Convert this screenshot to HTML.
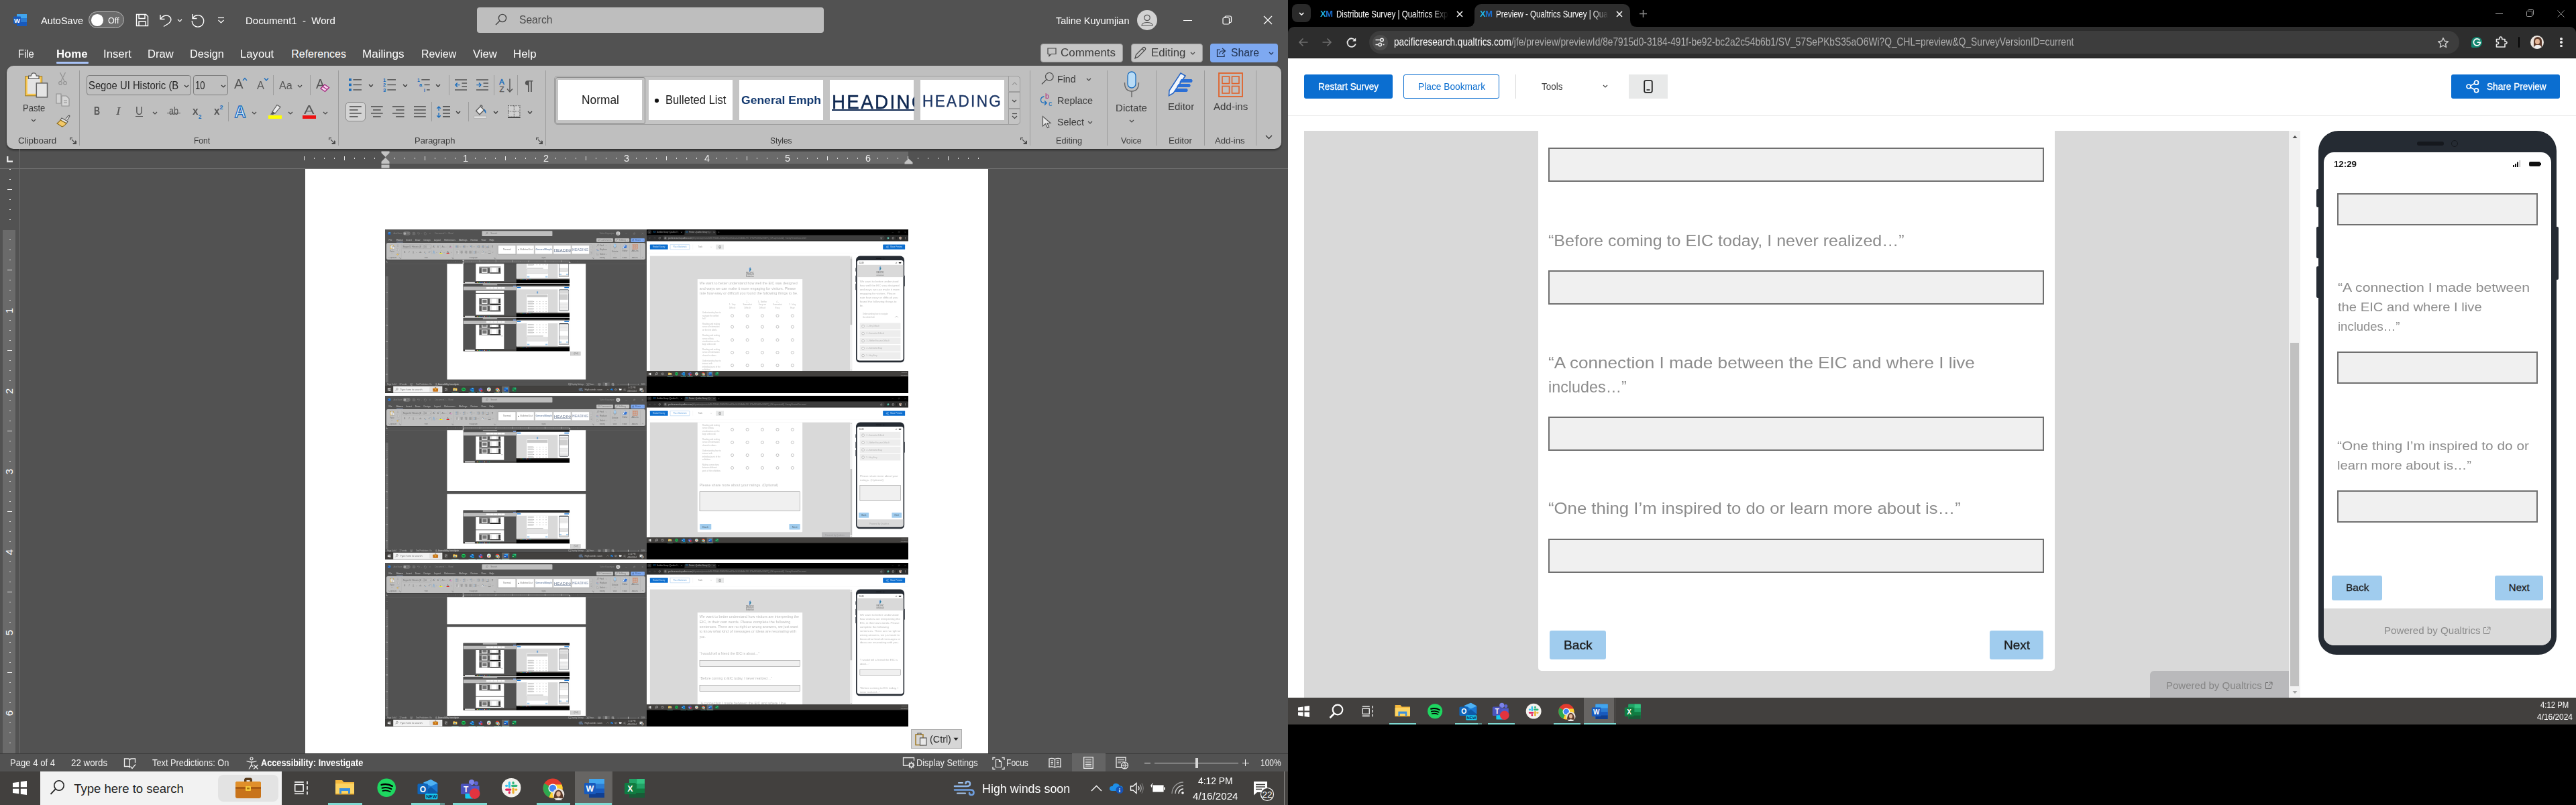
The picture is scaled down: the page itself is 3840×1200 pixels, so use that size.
<!DOCTYPE html>
<html lang="en"><head><meta charset="utf-8"><title>Document1 - Word / Preview - Qualtrics Survey</title>
<style>
html,body{margin:0;padding:0;background:#000;}
body{width:3840px;height:1200px;overflow:hidden;position:relative;font-family:"Liberation Sans",sans-serif;}
.b{position:absolute;display:block;}
.t{position:absolute;white-space:pre;line-height:1;transform-origin:0 50%;}
.win{position:absolute;overflow:hidden;}
svg{overflow:visible;}
.th .t{opacity:.62;}
</style></head>
<body>
<div class="win" style="left:0;top:0;width:1920px;height:1150px;background:#525252;"><svg class="b" style="left:20px;top:20px;" width="20" height="20" viewBox="0 0 20 20"><rect x="5" y="1" width="15" height="18" rx="1.5" fill="#2b7cd3"/><rect x="5" y="1" width="15" height="6" fill="#41a5ee"/><rect x="5" y="13" width="15" height="6" fill="#185abd"/><rect x="0" y="4.5" width="11" height="11" rx="1" fill="#185abd"/><text x="5.5" y="13.6" font-family="Liberation Sans,sans-serif" font-weight="700" font-size="9.5" fill="#fff" text-anchor="middle">W</text></svg><span class="t" style="left:61px;top:23px;font-size:15.5px;color:#fff;transform:scaleX(0.937);">AutoSave</span><div class="b" style="left:132.3px;top:17px;width:53px;height:24.7px;background:#6b6b6b;border:1px solid #b5b5b5;border-radius:13px;box-sizing:border-box;"></div><div class="b" style="left:136px;top:21px;width:17.6px;height:17.6px;background:#fff;border-radius:50%;"></div><span class="t" style="left:160.6px;top:24px;font-size:13.5px;color:#fff;transform:scaleX(0.924);">Off</span><svg class="b" style="left:201px;top:19px;" width="22" height="22" viewBox="0 0 22 22"><path d="M2.5 2.5 H16.5 L19.5 5.5 V19.5 H2.5 Z" fill="none" stroke="#fff" stroke-width="1.4"/><path d="M6 2.5 V8.5 H15 V2.5 M6 19.5 V13 H16 V19.5" fill="none" stroke="#fff" stroke-width="1.4"/></svg><svg class="b" style="left:236px;top:19px;" width="22" height="22" viewBox="0 0 22 22"><path d="M3 3 V9.5 H9.5" fill="none" stroke="#fff" stroke-width="1.4"/><path d="M3.5 9 C7 3.5 14 2.5 17.5 6.5 C20.5 10 18 14.5 14.5 16.5 L8 20.5" fill="none" stroke="#fff" stroke-width="1.4"/></svg><svg class="b" style="left:264.3px;top:28px;" width="8" height="5" viewBox="0 0 8 5"><path d="M1 1 L4 4 L7 1" fill="none" stroke="#fff" stroke-width="1.2"/></svg><svg class="b" style="left:283.5px;top:19px;" width="22" height="22" viewBox="0 0 22 22"><path d="M3 2 V8.5 H9.5" fill="none" stroke="#fff" stroke-width="1.4"/><path d="M3.3 8.3 A 8.7 8.7 0 1 1 2.3 12" fill="none" stroke="#fff" stroke-width="1.4"/></svg><svg class="b" style="left:324px;top:25px;" width="11" height="11" viewBox="0 0 11 11"><path d="M1 1.5 H10" stroke="#fff" stroke-width="1.2"/><path d="M1.5 5 L5.5 9 L9.5 5" fill="none" stroke="#fff" stroke-width="1.2"/></svg><span class="t" style="left:365.6px;top:23px;font-size:15.5px;color:#fff;transform:scaleX(0.967);">Document1  -  Word</span><div class="b" style="left:711px;top:10.5px;width:517px;height:38.5px;background:#bebebe;border-radius:4px;"></div><svg class="b" style="left:737px;top:19px;" width="20" height="20" viewBox="0 0 20 20"><circle cx="12" cy="8" r="5.6" fill="none" stroke="#444" stroke-width="1.4"/><path d="M8 12 L2 18" stroke="#444" stroke-width="1.4"/></svg><span class="t" style="left:773.8px;top:21px;font-size:17px;color:#4a4a4a;transform:scaleX(0.919);">Search</span><span class="t" style="left:1573.9px;top:23px;font-size:15.5px;color:#fff;transform:scaleX(0.934);">Taline Kuyumjian</span><div class="b" style="left:1695px;top:15px;width:30px;height:30px;background:#d2d2d2;border-radius:50%;"></div><svg class="b" style="left:1695px;top:15px;" width="30" height="30" viewBox="0 0 30 30"><circle cx="15" cy="11.5" r="4.2" fill="none" stroke="#555" stroke-width="1.2"/><path d="M7 23 C7 17 23 17 23 23 Z" fill="none" stroke="#555" stroke-width="1.2"/></svg><div class="b" style="left:1764px;top:29.5px;width:13px;height:1.3px;background:#fff;"></div><svg class="b" style="left:1822px;top:23px;" width="15" height="15" viewBox="0 0 15 15"><rect x="1" y="3.5" width="9.5" height="9.5" rx="1.5" fill="none" stroke="#fff" stroke-width="1.2"/><path d="M4 3 V2.5 Q4 1 5.5 1 H11.5 Q13.5 1 13.5 3 V9 Q13.5 10.5 12 10.5 H11" fill="none" stroke="#fff" stroke-width="1.2"/></svg><svg class="b" style="left:1883px;top:23px;" width="14" height="14" viewBox="0 0 14 14"><path d="M1 1 L13 13 M13 1 L1 13" stroke="#fff" stroke-width="1.3"/></svg><span class="t" style="left:27.4px;top:73px;font-size:16px;color:#fff;transform:scaleX(0.923);">File</span><span class="t" style="left:154.3px;top:73px;font-size:16px;color:#fff;transform:scaleX(1.047);">Insert</span><span class="t" style="left:220.4px;top:73px;font-size:16px;color:#fff;transform:scaleX(1.034);">Draw</span><span class="t" style="left:283.2px;top:73px;font-size:16px;color:#fff;transform:scaleX(1.020);">Design</span><span class="t" style="left:358.3px;top:73px;font-size:16px;color:#fff;transform:scaleX(1.043);">Layout</span><span class="t" style="left:434.2px;top:73px;font-size:16px;color:#fff;">References</span><span class="t" style="left:540.4px;top:73px;font-size:16px;color:#fff;transform:scaleX(1.067);">Mailings</span><span class="t" style="left:628px;top:73px;font-size:16px;color:#fff;transform:scaleX(0.995);">Review</span><span class="t" style="left:705.2px;top:73px;font-size:16px;color:#fff;transform:scaleX(1.041);">View</span><span class="t" style="left:765.2px;top:73px;font-size:16px;color:#fff;transform:scaleX(1.051);">Help</span><span class="t" style="left:84.4px;top:73px;font-size:16px;color:#fff;font-weight:700;transform:scaleX(1.048);">Home</span><div class="b" style="left:84.4px;top:92.4px;width:47.6px;height:2.4px;background:#a9c3f7;border-radius:1px;"></div><div class="b" style="left:1550.8px;top:64.5px;width:123.7px;height:28.7px;background:#c6c6c6;border-radius:4px;border:1px solid #9a9a9a;box-sizing:border-box;"></div><svg class="b" style="left:1560px;top:70px;" width="17" height="16" viewBox="0 0 17 16"><path d="M2 2 H14 V10.5 H7 L4 13.5 V10.5 H2 Z" fill="none" stroke="#444" stroke-width="1.2"/></svg><span class="t" style="left:1580.6px;top:71px;font-size:16px;color:#3b3b3b;transform:scaleX(1.061);">Comments</span><div class="b" style="left:1685.7px;top:64.5px;width:107.7px;height:28.7px;background:#c6c6c6;border-radius:4px;border:1px solid #9a9a9a;box-sizing:border-box;"></div><svg class="b" style="left:1689px;top:68px;" width="22" height="22" viewBox="0 0 22 22"><path d="M3 19 L4.5 13.5 L15 3 Q16.5 1.8 18 3.2 Q19.4 4.8 18.2 6.2 L7.7 16.7 Z M13.5 4.5 L16.7 7.7" fill="none" stroke="#444" stroke-width="1.2"/></svg><span class="t" style="left:1715.8px;top:71px;font-size:16px;color:#3b3b3b;transform:scaleX(1.051);">Editing</span><svg class="b" style="left:1773.5px;top:76.5px;" width="8" height="5" viewBox="0 0 8 5"><path d="M1 1 L4 4 L7 1" fill="none" stroke="#444" stroke-width="1.2"/></svg><div class="b" style="left:1804px;top:64.5px;width:100.8px;height:28.7px;background:#7ea9f1;border-radius:4px;"></div><svg class="b" style="left:1812px;top:70px;" width="17" height="17" viewBox="0 0 17 17"><path d="M7 4 H2.5 V14.5 H13 V11" fill="none" stroke="#1d2d48" stroke-width="1.2"/><path d="M10 2 L14.5 6 L10 10 M14.5 6 H10 Q6 6 6 11" fill="none" stroke="#1d2d48" stroke-width="1.2"/></svg><span class="t" style="left:1834.6px;top:71px;font-size:16px;color:#1d2d48;transform:scaleX(0.984);">Share</span><svg class="b" style="left:1890.5px;top:76.5px;" width="8" height="5" viewBox="0 0 8 5"><path d="M1 1 L4 4 L7 1" fill="none" stroke="#1d2d48" stroke-width="1.2"/></svg><div class="b" style="left:10px;top:98px;width:1900px;height:124px;background:#bfbfbf;border-radius:10px;box-shadow:0 2px 3px rgba(0,0,0,.45);"></div><svg class="b" style="left:36px;top:107px;" width="36" height="40" viewBox="0 0 36 40"><rect x="1.8" y="6.8" width="24.8" height="29" fill="#f7c64f" stroke="#9c7a27" stroke-width="1.1"/><rect x="4.8" y="10.4" width="19" height="22.4" fill="#e3e3e3"/><path d="M6.6 10.4 V6.2 H10.3 Q10.6 1.9 14.3 1.9 Q18 1.9 18.3 6.2 H22 V10.4 Z" fill="#f2f2f2" stroke="#5a5a5a" stroke-width="1.2"/><rect x="18.3" y="16.9" width="16.2" height="21" fill="#e4e4e4" stroke="#646464" stroke-width="1.5"/></svg><span class="t" style="left:34.3px;top:153px;font-size:15.5px;color:#3a3a3a;transform:scaleX(0.840);">Paste</span><svg class="b" style="left:46.4px;top:177px;" width="8" height="5" viewBox="0 0 8 5"><path d="M1 1 L4 4 L7 1" fill="none" stroke="#444" stroke-width="1.2"/></svg><svg class="b" style="left:87px;top:107px;" width="13" height="21" viewBox="0 0 13 21"><path d="M2.5 1 L9 14 M10.5 1 L4 14" stroke="#8f8f8f" stroke-width="1.1" fill="none"/><circle cx="3" cy="16.8" r="2.3" fill="none" stroke="#8f8f8f" stroke-width="1.1"/><circle cx="10" cy="16.8" r="2.3" fill="none" stroke="#8f8f8f" stroke-width="1.1"/></svg><svg class="b" style="left:83px;top:139px;" width="22" height="20" viewBox="0 0 22 20"><path d="M1 1 H8 V15 H1 Z" fill="#d2d2d2" stroke="#8f8f8f" stroke-width="1.1"/><path d="M9 4 H16 L20 8 V19 H9 Z" fill="#d6d6d6" stroke="#8f8f8f" stroke-width="1.1"/><path d="M12 11 H17 M12 14 H17" stroke="#8f8f8f" stroke-width="1"/></svg><svg class="b" style="left:84px;top:171px;" width="21" height="19" viewBox="0 0 21 19"><path d="M14 6 L18 1.5 Q19.5 0.5 20 2 L16.5 8" fill="#e8e8e8" stroke="#555" stroke-width="1.1"/><path d="M8 5 L17 10 L15 13 L6 8 Z" fill="#e8e8e8" stroke="#555" stroke-width="1.1"/><path d="M6 8 L15 13 Q12 17 8.5 18 L1 13 Q4 11 6 8 Z" fill="#f3c969" stroke="#8a6a1c" stroke-width="1.1"/></svg><span class="t" style="left:27.3px;top:203px;font-size:13.5px;color:#3a3a3a;transform:scaleX(0.990);">Clipboard</span><svg class="b" style="left:104.3px;top:205.3px;" width="10" height="10" viewBox="0 0 10 10"><path d="M0.6 4 V0.6 H4 M9.4 5 V9.4 H5" fill="none" stroke="#4a4a4a" stroke-width="1.1"/><path d="M3 3 L8.6 8.6 M8.6 4.5 V8.6 H4.5" fill="none" stroke="#4a4a4a" stroke-width="1.1"/></svg><div class="b" style="left:118px;top:105px;width:1px;height:112px;background:#9c9c9c;"></div><div class="b" style="left:129px;top:112.4px;width:155.5px;height:29.3px;border:1px solid #7d7d7d;border-radius:4px;box-sizing:border-box;"></div><span class="t" style="left:132.4px;top:120px;font-size:16px;color:#262626;transform:scaleX(0.926);">Segoe UI Historic (B</span><svg class="b" style="left:273.5px;top:125.5px;" width="8" height="5" viewBox="0 0 8 5"><path d="M1 1 L4 4 L7 1" fill="none" stroke="#333" stroke-width="1.2"/></svg><div class="b" style="left:287.5px;top:112.4px;width:52.5px;height:29.3px;border:1px solid #7d7d7d;border-radius:4px;box-sizing:border-box;"></div><span class="t" style="left:291px;top:120px;font-size:16px;color:#262626;transform:scaleX(0.815);">10</span><svg class="b" style="left:329.4px;top:125.5px;" width="8" height="5" viewBox="0 0 8 5"><path d="M1 1 L4 4 L7 1" fill="none" stroke="#333" stroke-width="1.2"/></svg><span class="t" style="left:349.4px;top:114px;font-size:21px;color:#565656;transform:scaleX(0.971);">A</span><svg class="b" style="left:361px;top:115px;" width="8" height="6" viewBox="0 0 8 6"><path d="M1 5 L4 1.5 L7 5" fill="none" stroke="#1a6dbd" stroke-width="1.3"/></svg><span class="t" style="left:383.4px;top:119px;font-size:16.5px;color:#565656;transform:scaleX(0.990);">A</span><svg class="b" style="left:392.5px;top:115px;" width="8" height="6" viewBox="0 0 8 6"><path d="M1 1.5 L4 5 L7 1.5" fill="none" stroke="#1a6dbd" stroke-width="1.3"/></svg><div class="b" style="left:407px;top:112.4px;width:1px;height:29.3px;background:#9c9c9c;"></div><span class="t" style="left:416px;top:120px;font-size:16px;color:#565656;transform:scaleX(1.007);">Aa</span><svg class="b" style="left:442.5px;top:125.5px;" width="8" height="5" viewBox="0 0 8 5"><path d="M1 1 L4 4 L7 1" fill="none" stroke="#444" stroke-width="1.2"/></svg><div class="b" style="left:462.1px;top:112.4px;width:1px;height:29.3px;background:#9c9c9c;"></div><span class="t" style="left:470.5px;top:114px;font-size:21px;color:#565656;transform:scaleX(0.921);">A</span><svg class="b" style="left:476.5px;top:124px;" width="15" height="14" viewBox="0 0 15 14"><path d="M1 8 L7 2 L13.5 6.5 L7.5 12.5 Z" fill="#f4d7ec" stroke="#a4207d" stroke-width="1.3"/><path d="M4 5 L10.5 9.5" stroke="#a4207d" stroke-width="1.1"/></svg><span class="t" style="left:139.7px;top:157px;font-size:16.5px;color:#565656;font-weight:700;transform:scaleX(0.764);">B</span><span class="t" style="left:172.7px;top:157px;font-size:17.5px;color:#565656;font-family:'Liberation Serif',serif;font-style:italic;transform:scaleX(1.132);">I</span><span class="t" style="left:201.8px;top:157px;font-size:16.5px;color:#565656;transform:scaleX(0.915);">U</span><div class="b" style="left:201.8px;top:172.8px;width:10.9px;height:1.3px;background:#565656;"></div><svg class="b" style="left:227px;top:165.5px;" width="8" height="5" viewBox="0 0 8 5"><path d="M1 1 L4 4 L7 1" fill="none" stroke="#444" stroke-width="1.2"/></svg><span class="t" style="left:252px;top:158px;font-size:16px;color:#565656;transform:scaleX(0.787);">ab</span><div class="b" style="left:249.4px;top:167.8px;width:19.3px;height:1.2px;background:#565656;"></div><span class="t" style="left:287px;top:157px;font-size:17px;color:#565656;font-weight:700;transform:scaleX(0.899);">x</span><span class="t" style="left:295.6px;top:170px;font-size:9px;color:#1a6dbd;font-weight:700;transform:scaleX(0.919);">2</span><span class="t" style="left:319px;top:157px;font-size:17px;color:#565656;font-weight:700;transform:scaleX(0.899);">x</span><span class="t" style="left:327.4px;top:156px;font-size:9px;color:#1a6dbd;font-weight:700;">2</span><div class="b" style="left:339.9px;top:152px;width:1px;height:29.4px;background:#9c9c9c;"></div><span class="t" style="left:349.5px;top:156px;font-size:23.5px;color:#dcebfa;font-weight:700;-webkit-text-stroke:1.3px #1a6dbd;">A</span><svg class="b" style="left:375.4px;top:165.5px;" width="8" height="5" viewBox="0 0 8 5"><path d="M1 1 L4 4 L7 1" fill="none" stroke="#444" stroke-width="1.2"/></svg><svg class="b" style="left:400px;top:155px;" width="21" height="17" viewBox="0 0 21 17"><path d="M13 1.5 L18 4.5 L10 14 L6 11.5 Z" fill="#ededed" stroke="#555" stroke-width="1.1"/><path d="M6 11.5 L10 14 L7 16 L3 15.5 Z" fill="#555"/></svg><div class="b" style="left:400px;top:172px;width:20px;height:5px;background:#ffff00;"></div><svg class="b" style="left:429px;top:165.5px;" width="8" height="5" viewBox="0 0 8 5"><path d="M1 1 L4 4 L7 1" fill="none" stroke="#444" stroke-width="1.2"/></svg><span class="t" style="left:453px;top:154px;font-size:19px;color:#565656;transform:scaleX(1.223);">A</span><div class="b" style="left:451px;top:172px;width:19.8px;height:5px;background:#ee1111;"></div><svg class="b" style="left:480.5px;top:165.5px;" width="8" height="5" viewBox="0 0 8 5"><path d="M1 1 L4 4 L7 1" fill="none" stroke="#444" stroke-width="1.2"/></svg><span class="t" style="left:289.4px;top:203px;font-size:13.5px;color:#3a3a3a;transform:scaleX(0.892);">Font</span><svg class="b" style="left:490px;top:205.3px;" width="10" height="10" viewBox="0 0 10 10"><path d="M0.6 4 V0.6 H4 M9.4 5 V9.4 H5" fill="none" stroke="#4a4a4a" stroke-width="1.1"/><path d="M3 3 L8.6 8.6 M8.6 4.5 V8.6 H4.5" fill="none" stroke="#4a4a4a" stroke-width="1.1"/></svg><div class="b" style="left:503.8px;top:105px;width:1px;height:112px;background:#9c9c9c;"></div><svg class="b" style="left:520px;top:117px;" width="20" height="19" viewBox="0 0 20 19"><rect x="0" y="0" width="3.9" height="3.7" fill="#1a6dbd"/><path d="M6.4 1.85 H19" stroke="#565656" stroke-width="1.5"/><rect x="0" y="7.55" width="3.9" height="3.7" fill="#1a6dbd"/><path d="M6.4 9.4 H19" stroke="#565656" stroke-width="1.5"/><rect x="0" y="15.1" width="3.9" height="3.7" fill="#1a6dbd"/><path d="M6.4 16.95 H19" stroke="#565656" stroke-width="1.5"/></svg><svg class="b" style="left:549.3px;top:125px;" width="8" height="5" viewBox="0 0 8 5"><path d="M1 1 L4 4 L7 1" fill="none" stroke="#333" stroke-width="1.3"/></svg><svg class="b" style="left:570.8px;top:117px;" width="20" height="21" viewBox="0 0 20 21"><text x="0" y="4.6" font-size="7.6" font-weight="700" font-family="Liberation Sans,sans-serif" fill="#1a6dbd">1</text><path d="M6.4 1.85 H19" stroke="#565656" stroke-width="1.5"/><text x="0" y="12.149999999999999" font-size="7.6" font-weight="700" font-family="Liberation Sans,sans-serif" fill="#1a6dbd">2</text><path d="M6.4 9.4 H19" stroke="#565656" stroke-width="1.5"/><text x="0" y="19.7" font-size="7.6" font-weight="700" font-family="Liberation Sans,sans-serif" fill="#1a6dbd">3</text><path d="M6.4 16.95 H19" stroke="#565656" stroke-width="1.5"/></svg><svg class="b" style="left:600.2px;top:125px;" width="8" height="5" viewBox="0 0 8 5"><path d="M1 1 L4 4 L7 1" fill="none" stroke="#333" stroke-width="1.3"/></svg><svg class="b" style="left:622px;top:117px;" width="20" height="21" viewBox="0 0 20 21"><text x="0" y="5.2" font-size="7" font-weight="700" font-family="Liberation Sans,sans-serif" fill="#1a6dbd">1</text><path d="M6.3 1.85 H18.7" stroke="#565656" stroke-width="1.5"/><text x="3" y="12.4" font-size="7.6" font-weight="700" font-family="Liberation Sans,sans-serif" fill="#1a6dbd">a</text><path d="M10.5 9.4 H18.7" stroke="#565656" stroke-width="1.5"/><text x="9.7" y="19.6" font-size="7.6" font-weight="700" font-family="Liberation Sans,sans-serif" fill="#1a6dbd">i</text><path d="M14 16.95 H18.7" stroke="#565656" stroke-width="1.5"/></svg><svg class="b" style="left:649.4px;top:125px;" width="8" height="5" viewBox="0 0 8 5"><path d="M1 1 L4 4 L7 1" fill="none" stroke="#333" stroke-width="1.3"/></svg><div class="b" style="left:669.1px;top:112.4px;width:1px;height:29.3px;background:#9c9c9c;"></div><svg class="b" style="left:678px;top:117.8px;" width="18" height="18" viewBox="0 0 18 18"><path d="M0 1 H18 M10.5 6.05 H18 M10.5 11.1 H18 M0 16.1 H18" stroke="#565656" stroke-width="1.5"/><path d="M7.5 8.6 H0.8 M3.8 5.4 L0.8 8.6 L3.8 11.8" fill="none" stroke="#1a6dbd" stroke-width="1.4"/></svg><svg class="b" style="left:710px;top:117.8px;" width="18" height="18" viewBox="0 0 18 18"><path d="M0 1 H18 M10.5 6.05 H18 M10.5 11.1 H18 M0 16.1 H18" stroke="#565656" stroke-width="1.5"/><path d="M0.3 8.6 H7 M4 5.4 L7 8.6 L4 11.8" fill="none" stroke="#1a6dbd" stroke-width="1.4"/></svg><div class="b" style="left:735.9px;top:112.4px;width:1px;height:29.3px;background:#9c9c9c;"></div><svg class="b" style="left:743.5px;top:115.5px;" width="22" height="23" viewBox="0 0 22 23"><text x="0" y="9.6" font-size="11.8" font-family="Liberation Sans,sans-serif" fill="#1a6dbd" stroke="#1a6dbd" stroke-width="0.3">A</text><text x="0.6" y="21" font-size="11.5" font-family="Liberation Sans,sans-serif" fill="#565656" stroke="#565656" stroke-width="0.3">Z</text><path d="M16 1.5 V20.5 M12 16.5 L16 21 L20 16.5" fill="none" stroke="#565656" stroke-width="1.4"/></svg><div class="b" style="left:770.9px;top:112.4px;width:1px;height:29.3px;background:#9c9c9c;"></div><span class="t" style="left:782.4px;top:116px;font-size:21px;color:#565656;font-weight:700;transform:scaleX(1.122);">¶</span><div class="b" style="left:515.3px;top:152px;width:29.3px;height:29.4px;background:#d3d3d3;border:1px solid #8a8a8a;border-radius:5px;box-sizing:border-box;"></div><svg class="b" style="left:521.2px;top:157.9px;" width="17.8" height="17.9" viewBox="0 0 17.8 17.9"><path d="M0.0 0.9 H17.8" stroke="#565656" stroke-width="1.6"/><path d="M0.0 5.9 H12.6" stroke="#565656" stroke-width="1.6"/><path d="M0.0 10.9 H17.8" stroke="#565656" stroke-width="1.6"/><path d="M0.0 15.9 H12.6" stroke="#565656" stroke-width="1.6"/></svg><svg class="b" style="left:553.1px;top:157.9px;" width="17.7" height="17.9" viewBox="0 0 17.7 17.9"><path d="M0.0 0.9 H17.7" stroke="#565656" stroke-width="1.6"/><path d="M3.0 5.9 H14.7" stroke="#565656" stroke-width="1.6"/><path d="M0.0 10.9 H17.7" stroke="#565656" stroke-width="1.6"/><path d="M3.0 15.9 H14.7" stroke="#565656" stroke-width="1.6"/></svg><svg class="b" style="left:585.3px;top:157.9px;" width="17.5" height="17.9" viewBox="0 0 17.5 17.9"><path d="M0.0 0.9 H17.5" stroke="#565656" stroke-width="1.6"/><path d="M5.1 5.9 H17.5" stroke="#565656" stroke-width="1.6"/><path d="M0.0 10.9 H17.5" stroke="#565656" stroke-width="1.6"/><path d="M5.1 15.9 H17.5" stroke="#565656" stroke-width="1.6"/></svg><svg class="b" style="left:617.2px;top:157.9px;" width="17.8" height="17.9" viewBox="0 0 17.8 17.9"><path d="M0.0 0.9 H17.8" stroke="#565656" stroke-width="1.6"/><path d="M0.0 5.9 H17.8" stroke="#565656" stroke-width="1.6"/><path d="M0.0 10.9 H17.8" stroke="#565656" stroke-width="1.6"/><path d="M0.0 15.9 H17.8" stroke="#565656" stroke-width="1.6"/></svg><div class="b" style="left:642.7px;top:152px;width:1px;height:29.4px;background:#9c9c9c;"></div><svg class="b" style="left:651px;top:157.9px;" width="21" height="18" viewBox="0 0 21 18"><path d="M9 0.9 H20 M9 5.9 H20 M9 10.9 H20 M9 15.9 H20" stroke="#565656" stroke-width="1.6"/><path d="M3.1 1 V7 M0.4 3.7 L3.1 1 L5.8 3.7 M3.1 10 V17 M0.4 14.3 L3.1 17 L5.8 14.3" fill="none" stroke="#1a6dbd" stroke-width="1.4"/></svg><svg class="b" style="left:678.5px;top:165px;" width="8" height="5" viewBox="0 0 8 5"><path d="M1 1 L4 4 L7 1" fill="none" stroke="#333" stroke-width="1.3"/></svg><div class="b" style="left:697.5px;top:152px;width:1px;height:29.4px;background:#9c9c9c;"></div><svg class="b" style="left:705px;top:156px;" width="22" height="22" viewBox="0 0 22 22"><path d="M4.6 9.3 L11.2 2.6 L16.6 8 L9.9 14.7 Z" fill="#ececec" stroke="#565656" stroke-width="1.3" stroke-linejoin="round"/><path d="M11.2 2.6 Q10.5 0.8 12.2 0.9 Q14 1.2 14 4" fill="none" stroke="#565656" stroke-width="1.2"/><path d="M16.6 6.5 Q20.3 8.5 19.3 13.5 Q17.6 10.5 16.4 9 Z" fill="#1a6dbd"/><rect x="1.7" y="17" width="18.4" height="3.4" fill="#dedede" stroke="#a9a9a9" stroke-width="0.7"/></svg><svg class="b" style="left:735px;top:165px;" width="8" height="5" viewBox="0 0 8 5"><path d="M1 1 L4 4 L7 1" fill="none" stroke="#333" stroke-width="1.3"/></svg><svg class="b" style="left:757.3px;top:157px;" width="18.6" height="19" viewBox="0 0 18.6 19"><rect x="0.7" y="0.7" width="17.2" height="16.6" fill="#d0d0d0" stroke="#565656" stroke-width="1.2" stroke-dasharray="1.2 1.2"/><path d="M9.3 1 V17 M1 9 H18" stroke="#565656" stroke-width="1" stroke-dasharray="1.2 1.2"/><path d="M0 17.9 H18.6" stroke="#333" stroke-width="1.7"/></svg><svg class="b" style="left:786px;top:165px;" width="8" height="5" viewBox="0 0 8 5"><path d="M1 1 L4 4 L7 1" fill="none" stroke="#333" stroke-width="1.3"/></svg><span class="t" style="left:618.4px;top:203px;font-size:13.5px;color:#3a3a3a;transform:scaleX(0.958);">Paragraph</span><svg class="b" style="left:799px;top:205.3px;" width="10" height="10" viewBox="0 0 10 10"><path d="M0.6 4 V0.6 H4 M9.4 5 V9.4 H5" fill="none" stroke="#4a4a4a" stroke-width="1.1"/><path d="M3 3 L8.6 8.6 M8.6 4.5 V8.6 H4.5" fill="none" stroke="#4a4a4a" stroke-width="1.1"/></svg><div class="b" style="left:812.9px;top:105px;width:1px;height:112px;background:#9c9c9c;"></div><div class="b" style="left:825.8px;top:112.9px;width:695.4px;height:73.5px;background:#c4c4c4;border:1px solid #9d9d9d;border-radius:5px;box-sizing:border-box;"></div><div class="b" style="left:827.5px;top:114.5px;width:134px;height:70.5px;border:1.5px solid #8c8c8c;border-radius:3px;box-sizing:border-box;"></div><div class="b" style="left:831.5px;top:119px;width:125.3px;height:60px;background:#fff;"></div><div class="b" style="left:966.7px;top:119px;width:125.3px;height:60px;background:#fff;"></div><div class="b" style="left:1102px;top:119px;width:125.3px;height:60px;background:#fff;"></div><div class="b" style="left:1237px;top:119px;width:125.3px;height:60px;background:#fff;"></div><div class="b" style="left:1372px;top:119px;width:125.3px;height:60px;background:#fff;"></div><span class="t" style="left:866.8px;top:141px;font-size:17.5px;color:#1a1a1a;transform:scaleX(0.991);">Normal</span><div class="b" style="left:976px;top:147.2px;width:5.6px;height:5.6px;background:#111;border-radius:50%;"></div><span class="t" style="left:991.7px;top:141px;font-size:17.5px;color:#1a1a1a;transform:scaleX(0.949);">Bulleted List</span><div class="b" style="left:1102px;top:119px;width:125.6px;height:60px;overflow:hidden;"><span class="t" style="left:2.6px;top:22px;font-size:17px;color:#12386e;font-weight:700;transform:scaleX(1.032);">General Emph</span></div><div class="b" style="left:1237px;top:119px;width:125.6px;height:60px;overflow:hidden;"><span class="t" style="left:3.3px;top:19px;font-size:29px;color:#0e2750;letter-spacing:2.5px;transform:scaleX(0.954);-webkit-text-stroke:0.5px #0e2750;">HEADING</span><div class="b" style="left:3.3px;top:44.4px;width:130px;height:1.8px;background:#0e2750;"></div></div><span class="t" style="left:1374.8px;top:139px;font-size:24px;color:#1b3564;letter-spacing:2.5px;transform:scaleX(0.940);-webkit-text-stroke:0.35px #1b3564;">HEADING</span><div class="b" style="left:1503.4px;top:112.9px;width:17.8px;height:24.5px;background:#c4c4c4;border:1px solid #9d9d9d;box-sizing:border-box;border-radius:0 5px 0 0;"></div><div class="b" style="left:1503.4px;top:137.4px;width:17.8px;height:24.5px;background:#c4c4c4;border:1px solid #9d9d9d;box-sizing:border-box;"></div><div class="b" style="left:1503.4px;top:161.9px;width:17.8px;height:24.5px;background:#c4c4c4;border:1px solid #9d9d9d;box-sizing:border-box;border-radius:0 0 5px 0;"></div><svg class="b" style="left:1508px;top:121px;" width="9" height="7" viewBox="0 0 9 7"><path d="M1 5.5 L4.5 2 L8 5.5" fill="none" stroke="#999" stroke-width="1.2"/></svg><svg class="b" style="left:1508.3px;top:147.5px;" width="8" height="5" viewBox="0 0 8 5"><path d="M1 1 L4 4 L7 1" fill="none" stroke="#444" stroke-width="1.2"/></svg><svg class="b" style="left:1508px;top:168px;" width="9" height="11" viewBox="0 0 9 11"><path d="M1 1.5 H8" stroke="#444" stroke-width="1.2"/><path d="M1 5 L4.5 8.5 L8 5" fill="none" stroke="#444" stroke-width="1.2"/></svg><span class="t" style="left:1148px;top:203px;font-size:13.5px;color:#3a3a3a;transform:scaleX(0.887);">Styles</span><svg class="b" style="left:1521px;top:205.3px;" width="10" height="10" viewBox="0 0 10 10"><path d="M0.6 4 V0.6 H4 M9.4 5 V9.4 H5" fill="none" stroke="#4a4a4a" stroke-width="1.1"/><path d="M3 3 L8.6 8.6 M8.6 4.5 V8.6 H4.5" fill="none" stroke="#4a4a4a" stroke-width="1.1"/></svg><div class="b" style="left:1535.3px;top:105px;width:1px;height:112px;background:#9c9c9c;"></div><svg class="b" style="left:1552px;top:107px;" width="20" height="20" viewBox="0 0 20 20"><circle cx="12.3" cy="7.2" r="5.8" fill="none" stroke="#555" stroke-width="1.3"/><path d="M8 11.5 L1 18.5" stroke="#555" stroke-width="1.5"/></svg><span class="t" style="left:1576px;top:110px;font-size:15.5px;color:#3a3a3a;transform:scaleX(0.919);">Find</span><svg class="b" style="left:1619.4px;top:115.5px;" width="8" height="5" viewBox="0 0 8 5"><path d="M1 1 L4 4 L7 1" fill="none" stroke="#444" stroke-width="1.2"/></svg><svg class="b" style="left:1550px;top:138px;" width="22" height="22" viewBox="0 0 22 22"><text x="8" y="9" font-size="10.5" font-family="Liberation Sans,sans-serif" fill="#b0237f">b</text><text x="13" y="20" font-size="10.5" font-family="Liberation Sans,sans-serif" fill="#1a6dbd">c</text><path d="M6.5 6 Q1.5 6.5 1.5 11 Q1.5 15.5 7 15.5 H10 M7 12.3 L10.2 15.5 L7 18.7" fill="none" stroke="#1a6dbd" stroke-width="1.3"/></svg><span class="t" style="left:1576px;top:142px;font-size:15.5px;color:#3a3a3a;transform:scaleX(0.932);">Replace</span><svg class="b" style="left:1553px;top:172px;" width="15" height="20" viewBox="0 0 15 20"><path d="M1.5 1.5 V16 L5.5 12.5 L8.5 18.5 L10.8 17.5 L8 11.5 H13 Z" fill="#e6e6e6" stroke="#555" stroke-width="1.2"/></svg><span class="t" style="left:1576px;top:174px;font-size:15.5px;color:#3a3a3a;transform:scaleX(0.928);">Select</span><svg class="b" style="left:1620.5px;top:180px;" width="8" height="5" viewBox="0 0 8 5"><path d="M1 1 L4 4 L7 1" fill="none" stroke="#444" stroke-width="1.2"/></svg><span class="t" style="left:1573.9px;top:203px;font-size:13.5px;color:#3a3a3a;transform:scaleX(0.947);">Editing</span><div class="b" style="left:1650.1px;top:105px;width:1px;height:112px;background:#9c9c9c;"></div><svg class="b" style="left:1674px;top:106px;" width="26" height="41" viewBox="0 0 26 41"><rect x="7" y="1" width="12" height="24" rx="6" fill="#b9dcf6" stroke="#1a6dbd" stroke-width="1.3"/><path d="M2.5 17 Q2.5 30 13 30 Q23.5 30 23.5 17 M13 30 V39" fill="none" stroke="#666" stroke-width="1.4"/></svg><span class="t" style="left:1663.3px;top:153px;font-size:15.5px;color:#3a3a3a;transform:scaleX(0.974);">Dictate</span><svg class="b" style="left:1682.8px;top:177.5px;" width="8" height="5" viewBox="0 0 8 5"><path d="M1 1 L4 4 L7 1" fill="none" stroke="#444" stroke-width="1.2"/></svg><span class="t" style="left:1671px;top:203px;font-size:13.5px;color:#3a3a3a;transform:scaleX(0.930);">Voice</span><div class="b" style="left:1722.8px;top:105px;width:1px;height:112px;background:#9c9c9c;"></div><svg class="b" style="left:1740px;top:106px;" width="40" height="40" viewBox="0 0 40 40"><path d="M20 3 L27 7 L9 33 L2.5 36.5 L3 29 Z" fill="#f2f6fb" stroke="#2564c4" stroke-width="1.6"/><path d="M21 12 H36 Q39 14.5 36 17 H18 M17 19 H33 Q36 21.5 33 24 H14 M13 26 H29 Q32 28.5 29 31 H10" fill="#2b6fd6" stroke="none"/><path d="M21 12 H36 Q39 14.5 36 17 H18 Z M17 19 H33 Q36 21.5 33 24 H14 Z M13 26 H29 Q32 28.5 29 31 H10 Z" fill="#2b6fd6"/></svg><span class="t" style="left:1740.8px;top:151px;font-size:15.5px;color:#3a3a3a;transform:scaleX(0.968);">Editor</span><span class="t" style="left:1742px;top:203px;font-size:13.5px;color:#3a3a3a;transform:scaleX(0.992);">Editor</span><div class="b" style="left:1795.1px;top:105px;width:1px;height:112px;background:#9c9c9c;"></div><svg class="b" style="left:1815.5px;top:107.5px;" width="37" height="37" viewBox="0 0 37 37"><rect x="1" y="1" width="35" height="35" fill="none" stroke="#e0622b" stroke-width="1.8"/><rect x="6" y="6" width="10.5" height="10.5" fill="none" stroke="#e0622b" stroke-width="1.6"/><rect x="20.5" y="6" width="10.5" height="10.5" fill="none" stroke="#e0622b" stroke-width="1.6"/><rect x="6" y="20.5" width="10.5" height="10.5" fill="none" stroke="#e0622b" stroke-width="1.6"/><rect x="20.5" y="20.5" width="10.5" height="10.5" fill="none" stroke="#e0622b" stroke-width="1.6"/></svg><span class="t" style="left:1808.7px;top:151px;font-size:15.5px;color:#3a3a3a;transform:scaleX(0.976);">Add-ins</span><span class="t" style="left:1811px;top:203px;font-size:13.5px;color:#3a3a3a;transform:scaleX(0.974);">Add-ins</span><div class="b" style="left:1872.3px;top:105px;width:1px;height:112px;background:#9c9c9c;"></div><svg class="b" style="left:1886.3px;top:201.2px;" width="11" height="6.5" viewBox="0 0 11.0 6.5"><path d="M1 1 L5.5 5.5 L10.0 1" fill="none" stroke="#333" stroke-width="1.3"/></svg><div class="b" style="left:574px;top:225.5px;width:780px;height:18.5px;background:#6a6a6a;"></div><div class="b" style="left:453px;top:232.5px;width:1px;height:6.5px;background:#ececec;"></div><div class="b" style="left:468px;top:235px;width:1px;height:1.5px;background:#e4e4e4;"></div><div class="b" style="left:483px;top:235px;width:1px;height:1.5px;background:#e4e4e4;"></div><div class="b" style="left:498px;top:235px;width:1px;height:1.5px;background:#e4e4e4;"></div><div class="b" style="left:513px;top:232.5px;width:1px;height:6.5px;background:#ececec;"></div><div class="b" style="left:528px;top:235px;width:1px;height:1.5px;background:#e4e4e4;"></div><div class="b" style="left:543px;top:235px;width:1px;height:1.5px;background:#e4e4e4;"></div><div class="b" style="left:558px;top:235px;width:1px;height:1.5px;background:#e4e4e4;"></div><div class="b" style="left:588px;top:235px;width:1px;height:1.5px;background:#e4e4e4;"></div><div class="b" style="left:603px;top:235px;width:1px;height:1.5px;background:#e4e4e4;"></div><div class="b" style="left:618px;top:235px;width:1px;height:1.5px;background:#e4e4e4;"></div><div class="b" style="left:633px;top:232.5px;width:1px;height:6.5px;background:#ececec;"></div><div class="b" style="left:648px;top:235px;width:1px;height:1.5px;background:#e4e4e4;"></div><div class="b" style="left:663px;top:235px;width:1px;height:1.5px;background:#e4e4e4;"></div><div class="b" style="left:678px;top:235px;width:1px;height:1.5px;background:#e4e4e4;"></div><span class="t" style="left:690px;top:229px;font-size:14.5px;color:#f2f2f2;transform:scaleX(0.992);">1</span><div class="b" style="left:708px;top:235px;width:1px;height:1.5px;background:#e4e4e4;"></div><div class="b" style="left:723px;top:235px;width:1px;height:1.5px;background:#e4e4e4;"></div><div class="b" style="left:738px;top:235px;width:1px;height:1.5px;background:#e4e4e4;"></div><div class="b" style="left:753px;top:232.5px;width:1px;height:6.5px;background:#ececec;"></div><div class="b" style="left:768px;top:235px;width:1px;height:1.5px;background:#e4e4e4;"></div><div class="b" style="left:783px;top:235px;width:1px;height:1.5px;background:#e4e4e4;"></div><div class="b" style="left:798px;top:235px;width:1px;height:1.5px;background:#e4e4e4;"></div><span class="t" style="left:810px;top:229px;font-size:14.5px;color:#f2f2f2;transform:scaleX(0.992);">2</span><div class="b" style="left:828px;top:235px;width:1px;height:1.5px;background:#e4e4e4;"></div><div class="b" style="left:843px;top:235px;width:1px;height:1.5px;background:#e4e4e4;"></div><div class="b" style="left:858px;top:235px;width:1px;height:1.5px;background:#e4e4e4;"></div><div class="b" style="left:873px;top:232.5px;width:1px;height:6.5px;background:#ececec;"></div><div class="b" style="left:888px;top:235px;width:1px;height:1.5px;background:#e4e4e4;"></div><div class="b" style="left:903px;top:235px;width:1px;height:1.5px;background:#e4e4e4;"></div><div class="b" style="left:918px;top:235px;width:1px;height:1.5px;background:#e4e4e4;"></div><span class="t" style="left:930px;top:229px;font-size:14.5px;color:#f2f2f2;transform:scaleX(0.992);">3</span><div class="b" style="left:948px;top:235px;width:1px;height:1.5px;background:#e4e4e4;"></div><div class="b" style="left:963px;top:235px;width:1px;height:1.5px;background:#e4e4e4;"></div><div class="b" style="left:978px;top:235px;width:1px;height:1.5px;background:#e4e4e4;"></div><div class="b" style="left:993px;top:232.5px;width:1px;height:6.5px;background:#ececec;"></div><div class="b" style="left:1008px;top:235px;width:1px;height:1.5px;background:#e4e4e4;"></div><div class="b" style="left:1023px;top:235px;width:1px;height:1.5px;background:#e4e4e4;"></div><div class="b" style="left:1038px;top:235px;width:1px;height:1.5px;background:#e4e4e4;"></div><span class="t" style="left:1050px;top:229px;font-size:14.5px;color:#f2f2f2;transform:scaleX(0.992);">4</span><div class="b" style="left:1068px;top:235px;width:1px;height:1.5px;background:#e4e4e4;"></div><div class="b" style="left:1083px;top:235px;width:1px;height:1.5px;background:#e4e4e4;"></div><div class="b" style="left:1098px;top:235px;width:1px;height:1.5px;background:#e4e4e4;"></div><div class="b" style="left:1113px;top:232.5px;width:1px;height:6.5px;background:#ececec;"></div><div class="b" style="left:1128px;top:235px;width:1px;height:1.5px;background:#e4e4e4;"></div><div class="b" style="left:1143px;top:235px;width:1px;height:1.5px;background:#e4e4e4;"></div><div class="b" style="left:1158px;top:235px;width:1px;height:1.5px;background:#e4e4e4;"></div><span class="t" style="left:1170px;top:229px;font-size:14.5px;color:#f2f2f2;transform:scaleX(0.992);">5</span><div class="b" style="left:1188px;top:235px;width:1px;height:1.5px;background:#e4e4e4;"></div><div class="b" style="left:1203px;top:235px;width:1px;height:1.5px;background:#e4e4e4;"></div><div class="b" style="left:1218px;top:235px;width:1px;height:1.5px;background:#e4e4e4;"></div><div class="b" style="left:1233px;top:232.5px;width:1px;height:6.5px;background:#ececec;"></div><div class="b" style="left:1248px;top:235px;width:1px;height:1.5px;background:#e4e4e4;"></div><div class="b" style="left:1263px;top:235px;width:1px;height:1.5px;background:#e4e4e4;"></div><div class="b" style="left:1278px;top:235px;width:1px;height:1.5px;background:#e4e4e4;"></div><span class="t" style="left:1290px;top:229px;font-size:14.5px;color:#f2f2f2;transform:scaleX(0.992);">6</span><div class="b" style="left:1308px;top:235px;width:1px;height:1.5px;background:#e4e4e4;"></div><div class="b" style="left:1323px;top:235px;width:1px;height:1.5px;background:#e4e4e4;"></div><div class="b" style="left:1338px;top:235px;width:1px;height:1.5px;background:#e4e4e4;"></div><div class="b" style="left:1353px;top:232.5px;width:1px;height:6.5px;background:#ececec;"></div><div class="b" style="left:1368px;top:235px;width:1px;height:1.5px;background:#e4e4e4;"></div><div class="b" style="left:1383px;top:235px;width:1px;height:1.5px;background:#e4e4e4;"></div><div class="b" style="left:1398px;top:235px;width:1px;height:1.5px;background:#e4e4e4;"></div><div class="b" style="left:1413px;top:232.5px;width:1px;height:6.5px;background:#ececec;"></div><div class="b" style="left:1428px;top:235px;width:1px;height:1.5px;background:#e4e4e4;"></div><div class="b" style="left:1443px;top:235px;width:1px;height:1.5px;background:#e4e4e4;"></div><div class="b" style="left:1458px;top:235px;width:1px;height:1.5px;background:#e4e4e4;"></div><svg class="b" style="left:567.5px;top:225px;" width="13" height="26" viewBox="0 0 13 26"><path d="M0.5 0.5 H12.5 V3 L6.5 9 L0.5 3 Z" fill="#c3c3c3"/><path d="M6.5 10 L12.5 16 V19 H0.5 V16 Z" fill="#c3c3c3"/><rect x="0.5" y="20.5" width="12" height="5" fill="#c3c3c3"/></svg><svg class="b" style="left:1347.5px;top:236px;" width="13" height="9" viewBox="0 0 13 9"><path d="M6.5 0.5 L12.5 6 V8.5 H0.5 V6 Z" fill="#c3c3c3"/></svg><div class="b" style="left:0px;top:251.3px;width:1920px;height:1px;background:#777;"></div><div class="b" style="left:29px;top:222px;width:1px;height:901px;background:#6b6b6b;"></div><div class="b" style="left:4px;top:342.5px;width:19px;height:782px;background:#6a6a6a;"></div><svg class="b" style="left:9.5px;top:233px;" width="9" height="9" viewBox="0 0 9 9"><path d="M1.2 0 V7.8 H9" fill="none" stroke="#e6e6e6" stroke-width="2.4"/></svg><div class="b" style="left:13.5px;top:251.7px;width:2px;height:1.6px;background:#e0e0e0;"></div><div class="b" style="left:13.5px;top:266.7px;width:2px;height:1.6px;background:#e0e0e0;"></div><div class="b" style="left:11px;top:281.8px;width:7px;height:1.4px;background:#e8e8e8;"></div><div class="b" style="left:13.5px;top:296.7px;width:2px;height:1.6px;background:#e0e0e0;"></div><div class="b" style="left:13.5px;top:311.7px;width:2px;height:1.6px;background:#e0e0e0;"></div><div class="b" style="left:13.5px;top:326.7px;width:2px;height:1.6px;background:#e0e0e0;"></div><div class="b" style="left:13.5px;top:356.7px;width:2px;height:1.6px;background:#e0e0e0;"></div><div class="b" style="left:13.5px;top:371.7px;width:2px;height:1.6px;background:#e0e0e0;"></div><div class="b" style="left:13.5px;top:386.7px;width:2px;height:1.6px;background:#e0e0e0;"></div><div class="b" style="left:11px;top:401.8px;width:7px;height:1.4px;background:#e8e8e8;"></div><div class="b" style="left:13.5px;top:416.7px;width:2px;height:1.6px;background:#e0e0e0;"></div><div class="b" style="left:13.5px;top:431.7px;width:2px;height:1.6px;background:#e0e0e0;"></div><div class="b" style="left:13.5px;top:446.7px;width:2px;height:1.6px;background:#e0e0e0;"></div><span class="t" style="left:7px;top:454.5px;font-size:15px;color:#fff;line-height:16px;transform:rotate(-90deg);transform-origin:50% 50%;width:14px;text-align:center;">1</span><div class="b" style="left:13.5px;top:476.7px;width:2px;height:1.6px;background:#e0e0e0;"></div><div class="b" style="left:13.5px;top:491.7px;width:2px;height:1.6px;background:#e0e0e0;"></div><div class="b" style="left:13.5px;top:506.7px;width:2px;height:1.6px;background:#e0e0e0;"></div><div class="b" style="left:11px;top:521.8px;width:7px;height:1.4px;background:#e8e8e8;"></div><div class="b" style="left:13.5px;top:536.7px;width:2px;height:1.6px;background:#e0e0e0;"></div><div class="b" style="left:13.5px;top:551.7px;width:2px;height:1.6px;background:#e0e0e0;"></div><div class="b" style="left:13.5px;top:566.7px;width:2px;height:1.6px;background:#e0e0e0;"></div><span class="t" style="left:7px;top:574.5px;font-size:15px;color:#fff;line-height:16px;transform:rotate(-90deg);transform-origin:50% 50%;width:14px;text-align:center;">2</span><div class="b" style="left:13.5px;top:596.7px;width:2px;height:1.6px;background:#e0e0e0;"></div><div class="b" style="left:13.5px;top:611.7px;width:2px;height:1.6px;background:#e0e0e0;"></div><div class="b" style="left:13.5px;top:626.7px;width:2px;height:1.6px;background:#e0e0e0;"></div><div class="b" style="left:11px;top:641.8px;width:7px;height:1.4px;background:#e8e8e8;"></div><div class="b" style="left:13.5px;top:656.7px;width:2px;height:1.6px;background:#e0e0e0;"></div><div class="b" style="left:13.5px;top:671.7px;width:2px;height:1.6px;background:#e0e0e0;"></div><div class="b" style="left:13.5px;top:686.7px;width:2px;height:1.6px;background:#e0e0e0;"></div><span class="t" style="left:7px;top:694.5px;font-size:15px;color:#fff;line-height:16px;transform:rotate(-90deg);transform-origin:50% 50%;width:14px;text-align:center;">3</span><div class="b" style="left:13.5px;top:716.7px;width:2px;height:1.6px;background:#e0e0e0;"></div><div class="b" style="left:13.5px;top:731.7px;width:2px;height:1.6px;background:#e0e0e0;"></div><div class="b" style="left:13.5px;top:746.7px;width:2px;height:1.6px;background:#e0e0e0;"></div><div class="b" style="left:11px;top:761.8px;width:7px;height:1.4px;background:#e8e8e8;"></div><div class="b" style="left:13.5px;top:776.7px;width:2px;height:1.6px;background:#e0e0e0;"></div><div class="b" style="left:13.5px;top:791.7px;width:2px;height:1.6px;background:#e0e0e0;"></div><div class="b" style="left:13.5px;top:806.7px;width:2px;height:1.6px;background:#e0e0e0;"></div><span class="t" style="left:7px;top:814.5px;font-size:15px;color:#fff;line-height:16px;transform:rotate(-90deg);transform-origin:50% 50%;width:14px;text-align:center;">4</span><div class="b" style="left:13.5px;top:836.7px;width:2px;height:1.6px;background:#e0e0e0;"></div><div class="b" style="left:13.5px;top:851.7px;width:2px;height:1.6px;background:#e0e0e0;"></div><div class="b" style="left:13.5px;top:866.7px;width:2px;height:1.6px;background:#e0e0e0;"></div><div class="b" style="left:11px;top:881.8px;width:7px;height:1.4px;background:#e8e8e8;"></div><div class="b" style="left:13.5px;top:896.7px;width:2px;height:1.6px;background:#e0e0e0;"></div><div class="b" style="left:13.5px;top:911.7px;width:2px;height:1.6px;background:#e0e0e0;"></div><div class="b" style="left:13.5px;top:926.7px;width:2px;height:1.6px;background:#e0e0e0;"></div><span class="t" style="left:7px;top:934.5px;font-size:15px;color:#fff;line-height:16px;transform:rotate(-90deg);transform-origin:50% 50%;width:14px;text-align:center;">5</span><div class="b" style="left:13.5px;top:956.7px;width:2px;height:1.6px;background:#e0e0e0;"></div><div class="b" style="left:13.5px;top:971.7px;width:2px;height:1.6px;background:#e0e0e0;"></div><div class="b" style="left:13.5px;top:986.7px;width:2px;height:1.6px;background:#e0e0e0;"></div><div class="b" style="left:11px;top:1001.8px;width:7px;height:1.4px;background:#e8e8e8;"></div><div class="b" style="left:13.5px;top:1016.7px;width:2px;height:1.6px;background:#e0e0e0;"></div><div class="b" style="left:13.5px;top:1031.7px;width:2px;height:1.6px;background:#e0e0e0;"></div><div class="b" style="left:13.5px;top:1046.7px;width:2px;height:1.6px;background:#e0e0e0;"></div><span class="t" style="left:7px;top:1054.5px;font-size:15px;color:#fff;line-height:16px;transform:rotate(-90deg);transform-origin:50% 50%;width:14px;text-align:center;">6</span><div class="b" style="left:13.5px;top:1076.7px;width:2px;height:1.6px;background:#e0e0e0;"></div><div class="b" style="left:13.5px;top:1091.7px;width:2px;height:1.6px;background:#e0e0e0;"></div><div class="b" style="left:13.5px;top:1106.7px;width:2px;height:1.6px;background:#e0e0e0;"></div><div class="b" style="left:455px;top:252px;width:1018.4px;height:871px;background:#fff;"></div><div class="b th" style="left:574px;top:342px;width:780px;height:244px;overflow:hidden;background:#000;"><div class="b" style="left:0;top:0;width:3840px;height:1200px;transform:scale(0.203125);transform-origin:0 0;"><div class="win" style="left:0;top:0;width:1920px;height:1150px;background:#525252;"><svg class="b" style="left:20px;top:20px;" width="20" height="20" viewBox="0 0 20 20"><rect x="5" y="1" width="15" height="18" rx="1.5" fill="#2b7cd3"/><rect x="5" y="1" width="15" height="6" fill="#41a5ee"/><rect x="5" y="13" width="15" height="6" fill="#185abd"/><rect x="0" y="4.5" width="11" height="11" rx="1" fill="#185abd"/><text x="5.5" y="13.6" font-family="Liberation Sans,sans-serif" font-weight="700" font-size="9.5" fill="#a6a6a6" text-anchor="middle">W</text></svg><span class="t" style="left:61px;top:23px;font-size:15.5px;color:#a6a6a6;transform:scaleX(0.937);">AutoSave</span><div class="b" style="left:132.3px;top:17px;width:53px;height:24.7px;background:#6b6b6b;border:1px solid #b5b5b5;border-radius:13px;box-sizing:border-box;"></div><div class="b" style="left:136px;top:21px;width:17.6px;height:17.6px;background:#a6a6a6;border-radius:50%;"></div><span class="t" style="left:160.6px;top:24px;font-size:13.5px;color:#a6a6a6;transform:scaleX(0.924);">Off</span><svg class="b" style="left:201px;top:19px;" width="22" height="22" viewBox="0 0 22 22"><path d="M2.5 2.5 H16.5 L19.5 5.5 V19.5 H2.5 Z" fill="none" stroke="#a6a6a6" stroke-width="1.4"/><path d="M6 2.5 V8.5 H15 V2.5 M6 19.5 V13 H16 V19.5" fill="none" stroke="#a6a6a6" stroke-width="1.4"/></svg><svg class="b" style="left:236px;top:19px;" width="22" height="22" viewBox="0 0 22 22"><path d="M3 3 V9.5 H9.5" fill="none" stroke="#a6a6a6" stroke-width="1.4"/><path d="M3.5 9 C7 3.5 14 2.5 17.5 6.5 C20.5 10 18 14.5 14.5 16.5 L8 20.5" fill="none" stroke="#a6a6a6" stroke-width="1.4"/></svg><svg class="b" style="left:264.3px;top:28px;" width="8" height="5" viewBox="0 0 8 5"><path d="M1 1 L4 4 L7 1" fill="none" stroke="#a6a6a6" stroke-width="1.2"/></svg><svg class="b" style="left:283.5px;top:19px;" width="22" height="22" viewBox="0 0 22 22"><path d="M3 2 V8.5 H9.5" fill="none" stroke="#a6a6a6" stroke-width="1.4"/><path d="M3.3 8.3 A 8.7 8.7 0 1 1 2.3 12" fill="none" stroke="#a6a6a6" stroke-width="1.4"/></svg><svg class="b" style="left:324px;top:25px;" width="11" height="11" viewBox="0 0 11 11"><path d="M1 1.5 H10" stroke="#a6a6a6" stroke-width="1.2"/><path d="M1.5 5 L5.5 9 L9.5 5" fill="none" stroke="#a6a6a6" stroke-width="1.2"/></svg><span class="t" style="left:365.6px;top:23px;font-size:15.5px;color:#a6a6a6;transform:scaleX(0.967);">Document1  -  Word</span><div class="b" style="left:711px;top:10.5px;width:517px;height:38.5px;background:#bebebe;border-radius:4px;"></div><svg class="b" style="left:737px;top:19px;" width="20" height="20" viewBox="0 0 20 20"><circle cx="12" cy="8" r="5.6" fill="none" stroke="#444" stroke-width="1.4"/><path d="M8 12 L2 18" stroke="#444" stroke-width="1.4"/></svg><span class="t" style="left:773.8px;top:21px;font-size:17px;color:#4a4a4a;transform:scaleX(0.919);">Search</span><span class="t" style="left:1573.9px;top:23px;font-size:15.5px;color:#a6a6a6;transform:scaleX(0.934);">Taline Kuyumjian</span><div class="b" style="left:1695px;top:15px;width:30px;height:30px;background:#d2d2d2;border-radius:50%;"></div><svg class="b" style="left:1695px;top:15px;" width="30" height="30" viewBox="0 0 30 30"><circle cx="15" cy="11.5" r="4.2" fill="none" stroke="#555" stroke-width="1.2"/><path d="M7 23 C7 17 23 17 23 23 Z" fill="none" stroke="#555" stroke-width="1.2"/></svg><div class="b" style="left:1764px;top:29.5px;width:13px;height:1.3px;background:#a6a6a6;"></div><svg class="b" style="left:1822px;top:23px;" width="15" height="15" viewBox="0 0 15 15"><rect x="1" y="3.5" width="9.5" height="9.5" rx="1.5" fill="none" stroke="#a6a6a6" stroke-width="1.2"/><path d="M4 3 V2.5 Q4 1 5.5 1 H11.5 Q13.5 1 13.5 3 V9 Q13.5 10.5 12 10.5 H11" fill="none" stroke="#a6a6a6" stroke-width="1.2"/></svg><svg class="b" style="left:1883px;top:23px;" width="14" height="14" viewBox="0 0 14 14"><path d="M1 1 L13 13 M13 1 L1 13" stroke="#a6a6a6" stroke-width="1.3"/></svg><span class="t" style="left:27.4px;top:73px;font-size:16px;color:#fff;transform:scaleX(0.923);">File</span><span class="t" style="left:154.3px;top:73px;font-size:16px;color:#fff;transform:scaleX(1.047);">Insert</span><span class="t" style="left:220.4px;top:73px;font-size:16px;color:#fff;transform:scaleX(1.034);">Draw</span><span class="t" style="left:283.2px;top:73px;font-size:16px;color:#fff;transform:scaleX(1.020);">Design</span><span class="t" style="left:358.3px;top:73px;font-size:16px;color:#fff;transform:scaleX(1.043);">Layout</span><span class="t" style="left:434.2px;top:73px;font-size:16px;color:#fff;">References</span><span class="t" style="left:540.4px;top:73px;font-size:16px;color:#fff;transform:scaleX(1.067);">Mailings</span><span class="t" style="left:628px;top:73px;font-size:16px;color:#fff;transform:scaleX(0.995);">Review</span><span class="t" style="left:705.2px;top:73px;font-size:16px;color:#fff;transform:scaleX(1.041);">View</span><span class="t" style="left:765.2px;top:73px;font-size:16px;color:#fff;transform:scaleX(1.051);">Help</span><span class="t" style="left:84.4px;top:73px;font-size:16px;color:#fff;font-weight:700;transform:scaleX(1.048);">Home</span><div class="b" style="left:84.4px;top:92.4px;width:47.6px;height:2.4px;background:#a9c3f7;border-radius:1px;"></div><div class="b" style="left:1550.8px;top:64.5px;width:123.7px;height:28.7px;background:#c6c6c6;border-radius:4px;border:1px solid #9a9a9a;box-sizing:border-box;"></div><svg class="b" style="left:1560px;top:70px;" width="17" height="16" viewBox="0 0 17 16"><path d="M2 2 H14 V10.5 H7 L4 13.5 V10.5 H2 Z" fill="none" stroke="#444" stroke-width="1.2"/></svg><span class="t" style="left:1580.6px;top:71px;font-size:16px;color:#3b3b3b;transform:scaleX(1.061);">Comments</span><div class="b" style="left:1685.7px;top:64.5px;width:107.7px;height:28.7px;background:#c6c6c6;border-radius:4px;border:1px solid #9a9a9a;box-sizing:border-box;"></div><svg class="b" style="left:1689px;top:68px;" width="22" height="22" viewBox="0 0 22 22"><path d="M3 19 L4.5 13.5 L15 3 Q16.5 1.8 18 3.2 Q19.4 4.8 18.2 6.2 L7.7 16.7 Z M13.5 4.5 L16.7 7.7" fill="none" stroke="#444" stroke-width="1.2"/></svg><span class="t" style="left:1715.8px;top:71px;font-size:16px;color:#3b3b3b;transform:scaleX(1.051);">Editing</span><svg class="b" style="left:1773.5px;top:76.5px;" width="8" height="5" viewBox="0 0 8 5"><path d="M1 1 L4 4 L7 1" fill="none" stroke="#444" stroke-width="1.2"/></svg><div class="b" style="left:1804px;top:64.5px;width:100.8px;height:28.7px;background:#7ea9f1;border-radius:4px;"></div><svg class="b" style="left:1812px;top:70px;" width="17" height="17" viewBox="0 0 17 17"><path d="M7 4 H2.5 V14.5 H13 V11" fill="none" stroke="#1d2d48" stroke-width="1.2"/><path d="M10 2 L14.5 6 L10 10 M14.5 6 H10 Q6 6 6 11" fill="none" stroke="#1d2d48" stroke-width="1.2"/></svg><span class="t" style="left:1834.6px;top:71px;font-size:16px;color:#1d2d48;transform:scaleX(0.984);">Share</span><svg class="b" style="left:1890.5px;top:76.5px;" width="8" height="5" viewBox="0 0 8 5"><path d="M1 1 L4 4 L7 1" fill="none" stroke="#1d2d48" stroke-width="1.2"/></svg><div class="b" style="left:10px;top:98px;width:1900px;height:124px;background:#bfbfbf;border-radius:10px;box-shadow:0 2px 3px rgba(0,0,0,.45);"></div><svg class="b" style="left:36px;top:107px;" width="36" height="40" viewBox="0 0 36 40"><rect x="1.8" y="6.8" width="24.8" height="29" fill="#f7c64f" stroke="#9c7a27" stroke-width="1.1"/><rect x="4.8" y="10.4" width="19" height="22.4" fill="#e3e3e3"/><path d="M6.6 10.4 V6.2 H10.3 Q10.6 1.9 14.3 1.9 Q18 1.9 18.3 6.2 H22 V10.4 Z" fill="#f2f2f2" stroke="#5a5a5a" stroke-width="1.2"/><rect x="18.3" y="16.9" width="16.2" height="21" fill="#e4e4e4" stroke="#646464" stroke-width="1.5"/></svg><span class="t" style="left:34.3px;top:153px;font-size:15.5px;color:#3a3a3a;transform:scaleX(0.840);">Paste</span><svg class="b" style="left:46.4px;top:177px;" width="8" height="5" viewBox="0 0 8 5"><path d="M1 1 L4 4 L7 1" fill="none" stroke="#444" stroke-width="1.2"/></svg><svg class="b" style="left:87px;top:107px;" width="13" height="21" viewBox="0 0 13 21"><path d="M2.5 1 L9 14 M10.5 1 L4 14" stroke="#8f8f8f" stroke-width="1.1" fill="none"/><circle cx="3" cy="16.8" r="2.3" fill="none" stroke="#8f8f8f" stroke-width="1.1"/><circle cx="10" cy="16.8" r="2.3" fill="none" stroke="#8f8f8f" stroke-width="1.1"/></svg><svg class="b" style="left:83px;top:139px;" width="22" height="20" viewBox="0 0 22 20"><path d="M1 1 H8 V15 H1 Z" fill="#d2d2d2" stroke="#8f8f8f" stroke-width="1.1"/><path d="M9 4 H16 L20 8 V19 H9 Z" fill="#d6d6d6" stroke="#8f8f8f" stroke-width="1.1"/><path d="M12 11 H17 M12 14 H17" stroke="#8f8f8f" stroke-width="1"/></svg><svg class="b" style="left:84px;top:171px;" width="21" height="19" viewBox="0 0 21 19"><path d="M14 6 L18 1.5 Q19.5 0.5 20 2 L16.5 8" fill="#e8e8e8" stroke="#555" stroke-width="1.1"/><path d="M8 5 L17 10 L15 13 L6 8 Z" fill="#e8e8e8" stroke="#555" stroke-width="1.1"/><path d="M6 8 L15 13 Q12 17 8.5 18 L1 13 Q4 11 6 8 Z" fill="#f3c969" stroke="#8a6a1c" stroke-width="1.1"/></svg><span class="t" style="left:27.3px;top:203px;font-size:13.5px;color:#3a3a3a;transform:scaleX(0.990);">Clipboard</span><svg class="b" style="left:104.3px;top:205.3px;" width="10" height="10" viewBox="0 0 10 10"><path d="M0.6 4 V0.6 H4 M9.4 5 V9.4 H5" fill="none" stroke="#4a4a4a" stroke-width="1.1"/><path d="M3 3 L8.6 8.6 M8.6 4.5 V8.6 H4.5" fill="none" stroke="#4a4a4a" stroke-width="1.1"/></svg><div class="b" style="left:118px;top:105px;width:1px;height:112px;background:#9c9c9c;"></div><div class="b" style="left:129px;top:112.4px;width:155.5px;height:29.3px;border:1px solid #7d7d7d;border-radius:4px;box-sizing:border-box;"></div><span class="t" style="left:132.4px;top:120px;font-size:16px;color:#262626;transform:scaleX(0.926);">Segoe UI Historic (B</span><svg class="b" style="left:273.5px;top:125.5px;" width="8" height="5" viewBox="0 0 8 5"><path d="M1 1 L4 4 L7 1" fill="none" stroke="#333" stroke-width="1.2"/></svg><div class="b" style="left:287.5px;top:112.4px;width:52.5px;height:29.3px;border:1px solid #7d7d7d;border-radius:4px;box-sizing:border-box;"></div><span class="t" style="left:291px;top:120px;font-size:16px;color:#262626;transform:scaleX(0.815);">10</span><svg class="b" style="left:329.4px;top:125.5px;" width="8" height="5" viewBox="0 0 8 5"><path d="M1 1 L4 4 L7 1" fill="none" stroke="#333" stroke-width="1.2"/></svg><span class="t" style="left:349.4px;top:114px;font-size:21px;color:#565656;transform:scaleX(0.971);">A</span><svg class="b" style="left:361px;top:115px;" width="8" height="6" viewBox="0 0 8 6"><path d="M1 5 L4 1.5 L7 5" fill="none" stroke="#1a6dbd" stroke-width="1.3"/></svg><span class="t" style="left:383.4px;top:119px;font-size:16.5px;color:#565656;transform:scaleX(0.990);">A</span><svg class="b" style="left:392.5px;top:115px;" width="8" height="6" viewBox="0 0 8 6"><path d="M1 1.5 L4 5 L7 1.5" fill="none" stroke="#1a6dbd" stroke-width="1.3"/></svg><div class="b" style="left:407px;top:112.4px;width:1px;height:29.3px;background:#9c9c9c;"></div><span class="t" style="left:416px;top:120px;font-size:16px;color:#565656;transform:scaleX(1.007);">Aa</span><svg class="b" style="left:442.5px;top:125.5px;" width="8" height="5" viewBox="0 0 8 5"><path d="M1 1 L4 4 L7 1" fill="none" stroke="#444" stroke-width="1.2"/></svg><div class="b" style="left:462.1px;top:112.4px;width:1px;height:29.3px;background:#9c9c9c;"></div><span class="t" style="left:470.5px;top:114px;font-size:21px;color:#565656;transform:scaleX(0.921);">A</span><svg class="b" style="left:476.5px;top:124px;" width="15" height="14" viewBox="0 0 15 14"><path d="M1 8 L7 2 L13.5 6.5 L7.5 12.5 Z" fill="#f4d7ec" stroke="#a4207d" stroke-width="1.3"/><path d="M4 5 L10.5 9.5" stroke="#a4207d" stroke-width="1.1"/></svg><span class="t" style="left:139.7px;top:157px;font-size:16.5px;color:#565656;font-weight:700;transform:scaleX(0.764);">B</span><span class="t" style="left:172.7px;top:157px;font-size:17.5px;color:#565656;font-family:'Liberation Serif',serif;font-style:italic;transform:scaleX(1.132);">I</span><span class="t" style="left:201.8px;top:157px;font-size:16.5px;color:#565656;transform:scaleX(0.915);">U</span><div class="b" style="left:201.8px;top:172.8px;width:10.9px;height:1.3px;background:#565656;"></div><svg class="b" style="left:227px;top:165.5px;" width="8" height="5" viewBox="0 0 8 5"><path d="M1 1 L4 4 L7 1" fill="none" stroke="#444" stroke-width="1.2"/></svg><span class="t" style="left:252px;top:158px;font-size:16px;color:#565656;transform:scaleX(0.787);">ab</span><div class="b" style="left:249.4px;top:167.8px;width:19.3px;height:1.2px;background:#565656;"></div><span class="t" style="left:287px;top:157px;font-size:17px;color:#565656;font-weight:700;transform:scaleX(0.899);">x</span><span class="t" style="left:295.6px;top:170px;font-size:9px;color:#1a6dbd;font-weight:700;transform:scaleX(0.919);">2</span><span class="t" style="left:319px;top:157px;font-size:17px;color:#565656;font-weight:700;transform:scaleX(0.899);">x</span><span class="t" style="left:327.4px;top:156px;font-size:9px;color:#1a6dbd;font-weight:700;">2</span><div class="b" style="left:339.9px;top:152px;width:1px;height:29.4px;background:#9c9c9c;"></div><span class="t" style="left:349.5px;top:156px;font-size:23.5px;color:#dcebfa;font-weight:700;-webkit-text-stroke:1.3px #1a6dbd;">A</span><svg class="b" style="left:375.4px;top:165.5px;" width="8" height="5" viewBox="0 0 8 5"><path d="M1 1 L4 4 L7 1" fill="none" stroke="#444" stroke-width="1.2"/></svg><svg class="b" style="left:400px;top:155px;" width="21" height="17" viewBox="0 0 21 17"><path d="M13 1.5 L18 4.5 L10 14 L6 11.5 Z" fill="#ededed" stroke="#555" stroke-width="1.1"/><path d="M6 11.5 L10 14 L7 16 L3 15.5 Z" fill="#555"/></svg><div class="b" style="left:400px;top:172px;width:20px;height:5px;background:#ffff00;"></div><svg class="b" style="left:429px;top:165.5px;" width="8" height="5" viewBox="0 0 8 5"><path d="M1 1 L4 4 L7 1" fill="none" stroke="#444" stroke-width="1.2"/></svg><span class="t" style="left:453px;top:154px;font-size:19px;color:#565656;transform:scaleX(1.223);">A</span><div class="b" style="left:451px;top:172px;width:19.8px;height:5px;background:#ee1111;"></div><svg class="b" style="left:480.5px;top:165.5px;" width="8" height="5" viewBox="0 0 8 5"><path d="M1 1 L4 4 L7 1" fill="none" stroke="#444" stroke-width="1.2"/></svg><span class="t" style="left:289.4px;top:203px;font-size:13.5px;color:#3a3a3a;transform:scaleX(0.892);">Font</span><svg class="b" style="left:490px;top:205.3px;" width="10" height="10" viewBox="0 0 10 10"><path d="M0.6 4 V0.6 H4 M9.4 5 V9.4 H5" fill="none" stroke="#4a4a4a" stroke-width="1.1"/><path d="M3 3 L8.6 8.6 M8.6 4.5 V8.6 H4.5" fill="none" stroke="#4a4a4a" stroke-width="1.1"/></svg><div class="b" style="left:503.8px;top:105px;width:1px;height:112px;background:#9c9c9c;"></div><svg class="b" style="left:520px;top:117px;" width="20" height="19" viewBox="0 0 20 19"><rect x="0" y="0" width="3.9" height="3.7" fill="#1a6dbd"/><path d="M6.4 1.85 H19" stroke="#565656" stroke-width="1.5"/><rect x="0" y="7.55" width="3.9" height="3.7" fill="#1a6dbd"/><path d="M6.4 9.4 H19" stroke="#565656" stroke-width="1.5"/><rect x="0" y="15.1" width="3.9" height="3.7" fill="#1a6dbd"/><path d="M6.4 16.95 H19" stroke="#565656" stroke-width="1.5"/></svg><svg class="b" style="left:549.3px;top:125px;" width="8" height="5" viewBox="0 0 8 5"><path d="M1 1 L4 4 L7 1" fill="none" stroke="#333" stroke-width="1.3"/></svg><svg class="b" style="left:570.8px;top:117px;" width="20" height="21" viewBox="0 0 20 21"><text x="0" y="4.6" font-size="7.6" font-weight="700" font-family="Liberation Sans,sans-serif" fill="#1a6dbd">1</text><path d="M6.4 1.85 H19" stroke="#565656" stroke-width="1.5"/><text x="0" y="12.149999999999999" font-size="7.6" font-weight="700" font-family="Liberation Sans,sans-serif" fill="#1a6dbd">2</text><path d="M6.4 9.4 H19" stroke="#565656" stroke-width="1.5"/><text x="0" y="19.7" font-size="7.6" font-weight="700" font-family="Liberation Sans,sans-serif" fill="#1a6dbd">3</text><path d="M6.4 16.95 H19" stroke="#565656" stroke-width="1.5"/></svg><svg class="b" style="left:600.2px;top:125px;" width="8" height="5" viewBox="0 0 8 5"><path d="M1 1 L4 4 L7 1" fill="none" stroke="#333" stroke-width="1.3"/></svg><svg class="b" style="left:622px;top:117px;" width="20" height="21" viewBox="0 0 20 21"><text x="0" y="5.2" font-size="7" font-weight="700" font-family="Liberation Sans,sans-serif" fill="#1a6dbd">1</text><path d="M6.3 1.85 H18.7" stroke="#565656" stroke-width="1.5"/><text x="3" y="12.4" font-size="7.6" font-weight="700" font-family="Liberation Sans,sans-serif" fill="#1a6dbd">a</text><path d="M10.5 9.4 H18.7" stroke="#565656" stroke-width="1.5"/><text x="9.7" y="19.6" font-size="7.6" font-weight="700" font-family="Liberation Sans,sans-serif" fill="#1a6dbd">i</text><path d="M14 16.95 H18.7" stroke="#565656" stroke-width="1.5"/></svg><svg class="b" style="left:649.4px;top:125px;" width="8" height="5" viewBox="0 0 8 5"><path d="M1 1 L4 4 L7 1" fill="none" stroke="#333" stroke-width="1.3"/></svg><div class="b" style="left:669.1px;top:112.4px;width:1px;height:29.3px;background:#9c9c9c;"></div><svg class="b" style="left:678px;top:117.8px;" width="18" height="18" viewBox="0 0 18 18"><path d="M0 1 H18 M10.5 6.05 H18 M10.5 11.1 H18 M0 16.1 H18" stroke="#565656" stroke-width="1.5"/><path d="M7.5 8.6 H0.8 M3.8 5.4 L0.8 8.6 L3.8 11.8" fill="none" stroke="#1a6dbd" stroke-width="1.4"/></svg><svg class="b" style="left:710px;top:117.8px;" width="18" height="18" viewBox="0 0 18 18"><path d="M0 1 H18 M10.5 6.05 H18 M10.5 11.1 H18 M0 16.1 H18" stroke="#565656" stroke-width="1.5"/><path d="M0.3 8.6 H7 M4 5.4 L7 8.6 L4 11.8" fill="none" stroke="#1a6dbd" stroke-width="1.4"/></svg><div class="b" style="left:735.9px;top:112.4px;width:1px;height:29.3px;background:#9c9c9c;"></div><svg class="b" style="left:743.5px;top:115.5px;" width="22" height="23" viewBox="0 0 22 23"><text x="0" y="9.6" font-size="11.8" font-family="Liberation Sans,sans-serif" fill="#1a6dbd" stroke="#1a6dbd" stroke-width="0.3">A</text><text x="0.6" y="21" font-size="11.5" font-family="Liberation Sans,sans-serif" fill="#565656" stroke="#565656" stroke-width="0.3">Z</text><path d="M16 1.5 V20.5 M12 16.5 L16 21 L20 16.5" fill="none" stroke="#565656" stroke-width="1.4"/></svg><div class="b" style="left:770.9px;top:112.4px;width:1px;height:29.3px;background:#9c9c9c;"></div><span class="t" style="left:782.4px;top:116px;font-size:21px;color:#565656;font-weight:700;transform:scaleX(1.122);">¶</span><div class="b" style="left:515.3px;top:152px;width:29.3px;height:29.4px;background:#d3d3d3;border:1px solid #8a8a8a;border-radius:5px;box-sizing:border-box;"></div><svg class="b" style="left:521.2px;top:157.9px;" width="17.8" height="17.9" viewBox="0 0 17.8 17.9"><path d="M0.0 0.9 H17.8" stroke="#565656" stroke-width="1.6"/><path d="M0.0 5.9 H12.6" stroke="#565656" stroke-width="1.6"/><path d="M0.0 10.9 H17.8" stroke="#565656" stroke-width="1.6"/><path d="M0.0 15.9 H12.6" stroke="#565656" stroke-width="1.6"/></svg><svg class="b" style="left:553.1px;top:157.9px;" width="17.7" height="17.9" viewBox="0 0 17.7 17.9"><path d="M0.0 0.9 H17.7" stroke="#565656" stroke-width="1.6"/><path d="M3.0 5.9 H14.7" stroke="#565656" stroke-width="1.6"/><path d="M0.0 10.9 H17.7" stroke="#565656" stroke-width="1.6"/><path d="M3.0 15.9 H14.7" stroke="#565656" stroke-width="1.6"/></svg><svg class="b" style="left:585.3px;top:157.9px;" width="17.5" height="17.9" viewBox="0 0 17.5 17.9"><path d="M0.0 0.9 H17.5" stroke="#565656" stroke-width="1.6"/><path d="M5.1 5.9 H17.5" stroke="#565656" stroke-width="1.6"/><path d="M0.0 10.9 H17.5" stroke="#565656" stroke-width="1.6"/><path d="M5.1 15.9 H17.5" stroke="#565656" stroke-width="1.6"/></svg><svg class="b" style="left:617.2px;top:157.9px;" width="17.8" height="17.9" viewBox="0 0 17.8 17.9"><path d="M0.0 0.9 H17.8" stroke="#565656" stroke-width="1.6"/><path d="M0.0 5.9 H17.8" stroke="#565656" stroke-width="1.6"/><path d="M0.0 10.9 H17.8" stroke="#565656" stroke-width="1.6"/><path d="M0.0 15.9 H17.8" stroke="#565656" stroke-width="1.6"/></svg><div class="b" style="left:642.7px;top:152px;width:1px;height:29.4px;background:#9c9c9c;"></div><svg class="b" style="left:651px;top:157.9px;" width="21" height="18" viewBox="0 0 21 18"><path d="M9 0.9 H20 M9 5.9 H20 M9 10.9 H20 M9 15.9 H20" stroke="#565656" stroke-width="1.6"/><path d="M3.1 1 V7 M0.4 3.7 L3.1 1 L5.8 3.7 M3.1 10 V17 M0.4 14.3 L3.1 17 L5.8 14.3" fill="none" stroke="#1a6dbd" stroke-width="1.4"/></svg><svg class="b" style="left:678.5px;top:165px;" width="8" height="5" viewBox="0 0 8 5"><path d="M1 1 L4 4 L7 1" fill="none" stroke="#333" stroke-width="1.3"/></svg><div class="b" style="left:697.5px;top:152px;width:1px;height:29.4px;background:#9c9c9c;"></div><svg class="b" style="left:705px;top:156px;" width="22" height="22" viewBox="0 0 22 22"><path d="M4.6 9.3 L11.2 2.6 L16.6 8 L9.9 14.7 Z" fill="#ececec" stroke="#565656" stroke-width="1.3" stroke-linejoin="round"/><path d="M11.2 2.6 Q10.5 0.8 12.2 0.9 Q14 1.2 14 4" fill="none" stroke="#565656" stroke-width="1.2"/><path d="M16.6 6.5 Q20.3 8.5 19.3 13.5 Q17.6 10.5 16.4 9 Z" fill="#1a6dbd"/><rect x="1.7" y="17" width="18.4" height="3.4" fill="#dedede" stroke="#a9a9a9" stroke-width="0.7"/></svg><svg class="b" style="left:735px;top:165px;" width="8" height="5" viewBox="0 0 8 5"><path d="M1 1 L4 4 L7 1" fill="none" stroke="#333" stroke-width="1.3"/></svg><svg class="b" style="left:757.3px;top:157px;" width="18.6" height="19" viewBox="0 0 18.6 19"><rect x="0.7" y="0.7" width="17.2" height="16.6" fill="#d0d0d0" stroke="#565656" stroke-width="1.2" stroke-dasharray="1.2 1.2"/><path d="M9.3 1 V17 M1 9 H18" stroke="#565656" stroke-width="1" stroke-dasharray="1.2 1.2"/><path d="M0 17.9 H18.6" stroke="#333" stroke-width="1.7"/></svg><svg class="b" style="left:786px;top:165px;" width="8" height="5" viewBox="0 0 8 5"><path d="M1 1 L4 4 L7 1" fill="none" stroke="#333" stroke-width="1.3"/></svg><span class="t" style="left:618.4px;top:203px;font-size:13.5px;color:#3a3a3a;transform:scaleX(0.958);">Paragraph</span><svg class="b" style="left:799px;top:205.3px;" width="10" height="10" viewBox="0 0 10 10"><path d="M0.6 4 V0.6 H4 M9.4 5 V9.4 H5" fill="none" stroke="#4a4a4a" stroke-width="1.1"/><path d="M3 3 L8.6 8.6 M8.6 4.5 V8.6 H4.5" fill="none" stroke="#4a4a4a" stroke-width="1.1"/></svg><div class="b" style="left:812.9px;top:105px;width:1px;height:112px;background:#9c9c9c;"></div><div class="b" style="left:825.8px;top:112.9px;width:695.4px;height:73.5px;background:#c4c4c4;border:1px solid #9d9d9d;border-radius:5px;box-sizing:border-box;"></div><div class="b" style="left:827.5px;top:114.5px;width:134px;height:70.5px;border:1.5px solid #8c8c8c;border-radius:3px;box-sizing:border-box;"></div><div class="b" style="left:831.5px;top:119px;width:125.3px;height:60px;background:#fff;"></div><div class="b" style="left:966.7px;top:119px;width:125.3px;height:60px;background:#fff;"></div><div class="b" style="left:1102px;top:119px;width:125.3px;height:60px;background:#fff;"></div><div class="b" style="left:1237px;top:119px;width:125.3px;height:60px;background:#fff;"></div><div class="b" style="left:1372px;top:119px;width:125.3px;height:60px;background:#fff;"></div><span class="t" style="left:866.8px;top:141px;font-size:17.5px;color:#1a1a1a;transform:scaleX(0.991);">Normal</span><div class="b" style="left:976px;top:147.2px;width:5.6px;height:5.6px;background:#111;border-radius:50%;"></div><span class="t" style="left:991.7px;top:141px;font-size:17.5px;color:#1a1a1a;transform:scaleX(0.949);">Bulleted List</span><div class="b" style="left:1102px;top:119px;width:125.6px;height:60px;overflow:hidden;"><span class="t" style="left:2.6px;top:22px;font-size:17px;color:#12386e;font-weight:700;transform:scaleX(1.032);">General Emph</span></div><div class="b" style="left:1237px;top:119px;width:125.6px;height:60px;overflow:hidden;"><span class="t" style="left:3.3px;top:19px;font-size:29px;color:#0e2750;letter-spacing:2.5px;transform:scaleX(0.954);-webkit-text-stroke:0.5px #0e2750;">HEADING</span><div class="b" style="left:3.3px;top:44.4px;width:130px;height:1.8px;background:#0e2750;"></div></div><span class="t" style="left:1374.8px;top:139px;font-size:24px;color:#1b3564;letter-spacing:2.5px;transform:scaleX(0.940);-webkit-text-stroke:0.35px #1b3564;">HEADING</span><div class="b" style="left:1503.4px;top:112.9px;width:17.8px;height:24.5px;background:#c4c4c4;border:1px solid #9d9d9d;box-sizing:border-box;border-radius:0 5px 0 0;"></div><div class="b" style="left:1503.4px;top:137.4px;width:17.8px;height:24.5px;background:#c4c4c4;border:1px solid #9d9d9d;box-sizing:border-box;"></div><div class="b" style="left:1503.4px;top:161.9px;width:17.8px;height:24.5px;background:#c4c4c4;border:1px solid #9d9d9d;box-sizing:border-box;border-radius:0 0 5px 0;"></div><svg class="b" style="left:1508px;top:121px;" width="9" height="7" viewBox="0 0 9 7"><path d="M1 5.5 L4.5 2 L8 5.5" fill="none" stroke="#999" stroke-width="1.2"/></svg><svg class="b" style="left:1508.3px;top:147.5px;" width="8" height="5" viewBox="0 0 8 5"><path d="M1 1 L4 4 L7 1" fill="none" stroke="#444" stroke-width="1.2"/></svg><svg class="b" style="left:1508px;top:168px;" width="9" height="11" viewBox="0 0 9 11"><path d="M1 1.5 H8" stroke="#444" stroke-width="1.2"/><path d="M1 5 L4.5 8.5 L8 5" fill="none" stroke="#444" stroke-width="1.2"/></svg><span class="t" style="left:1148px;top:203px;font-size:13.5px;color:#3a3a3a;transform:scaleX(0.887);">Styles</span><svg class="b" style="left:1521px;top:205.3px;" width="10" height="10" viewBox="0 0 10 10"><path d="M0.6 4 V0.6 H4 M9.4 5 V9.4 H5" fill="none" stroke="#4a4a4a" stroke-width="1.1"/><path d="M3 3 L8.6 8.6 M8.6 4.5 V8.6 H4.5" fill="none" stroke="#4a4a4a" stroke-width="1.1"/></svg><div class="b" style="left:1535.3px;top:105px;width:1px;height:112px;background:#9c9c9c;"></div><svg class="b" style="left:1552px;top:107px;" width="20" height="20" viewBox="0 0 20 20"><circle cx="12.3" cy="7.2" r="5.8" fill="none" stroke="#555" stroke-width="1.3"/><path d="M8 11.5 L1 18.5" stroke="#555" stroke-width="1.5"/></svg><span class="t" style="left:1576px;top:110px;font-size:15.5px;color:#3a3a3a;transform:scaleX(0.919);">Find</span><svg class="b" style="left:1619.4px;top:115.5px;" width="8" height="5" viewBox="0 0 8 5"><path d="M1 1 L4 4 L7 1" fill="none" stroke="#444" stroke-width="1.2"/></svg><svg class="b" style="left:1550px;top:138px;" width="22" height="22" viewBox="0 0 22 22"><text x="8" y="9" font-size="10.5" font-family="Liberation Sans,sans-serif" fill="#b0237f">b</text><text x="13" y="20" font-size="10.5" font-family="Liberation Sans,sans-serif" fill="#1a6dbd">c</text><path d="M6.5 6 Q1.5 6.5 1.5 11 Q1.5 15.5 7 15.5 H10 M7 12.3 L10.2 15.5 L7 18.7" fill="none" stroke="#1a6dbd" stroke-width="1.3"/></svg><span class="t" style="left:1576px;top:142px;font-size:15.5px;color:#3a3a3a;transform:scaleX(0.932);">Replace</span><svg class="b" style="left:1553px;top:172px;" width="15" height="20" viewBox="0 0 15 20"><path d="M1.5 1.5 V16 L5.5 12.5 L8.5 18.5 L10.8 17.5 L8 11.5 H13 Z" fill="#e6e6e6" stroke="#555" stroke-width="1.2"/></svg><span class="t" style="left:1576px;top:174px;font-size:15.5px;color:#3a3a3a;transform:scaleX(0.928);">Select</span><svg class="b" style="left:1620.5px;top:180px;" width="8" height="5" viewBox="0 0 8 5"><path d="M1 1 L4 4 L7 1" fill="none" stroke="#444" stroke-width="1.2"/></svg><span class="t" style="left:1573.9px;top:203px;font-size:13.5px;color:#3a3a3a;transform:scaleX(0.947);">Editing</span><div class="b" style="left:1650.1px;top:105px;width:1px;height:112px;background:#9c9c9c;"></div><svg class="b" style="left:1674px;top:106px;" width="26" height="41" viewBox="0 0 26 41"><rect x="7" y="1" width="12" height="24" rx="6" fill="#b9dcf6" stroke="#1a6dbd" stroke-width="1.3"/><path d="M2.5 17 Q2.5 30 13 30 Q23.5 30 23.5 17 M13 30 V39" fill="none" stroke="#666" stroke-width="1.4"/></svg><span class="t" style="left:1663.3px;top:153px;font-size:15.5px;color:#3a3a3a;transform:scaleX(0.974);">Dictate</span><svg class="b" style="left:1682.8px;top:177.5px;" width="8" height="5" viewBox="0 0 8 5"><path d="M1 1 L4 4 L7 1" fill="none" stroke="#444" stroke-width="1.2"/></svg><span class="t" style="left:1671px;top:203px;font-size:13.5px;color:#3a3a3a;transform:scaleX(0.930);">Voice</span><div class="b" style="left:1722.8px;top:105px;width:1px;height:112px;background:#9c9c9c;"></div><svg class="b" style="left:1740px;top:106px;" width="40" height="40" viewBox="0 0 40 40"><path d="M20 3 L27 7 L9 33 L2.5 36.5 L3 29 Z" fill="#f2f6fb" stroke="#2564c4" stroke-width="1.6"/><path d="M21 12 H36 Q39 14.5 36 17 H18 M17 19 H33 Q36 21.5 33 24 H14 M13 26 H29 Q32 28.5 29 31 H10" fill="#2b6fd6" stroke="none"/><path d="M21 12 H36 Q39 14.5 36 17 H18 Z M17 19 H33 Q36 21.5 33 24 H14 Z M13 26 H29 Q32 28.5 29 31 H10 Z" fill="#2b6fd6"/></svg><span class="t" style="left:1740.8px;top:151px;font-size:15.5px;color:#3a3a3a;transform:scaleX(0.968);">Editor</span><span class="t" style="left:1742px;top:203px;font-size:13.5px;color:#3a3a3a;transform:scaleX(0.992);">Editor</span><div class="b" style="left:1795.1px;top:105px;width:1px;height:112px;background:#9c9c9c;"></div><svg class="b" style="left:1815.5px;top:107.5px;" width="37" height="37" viewBox="0 0 37 37"><rect x="1" y="1" width="35" height="35" fill="none" stroke="#e0622b" stroke-width="1.8"/><rect x="6" y="6" width="10.5" height="10.5" fill="none" stroke="#e0622b" stroke-width="1.6"/><rect x="20.5" y="6" width="10.5" height="10.5" fill="none" stroke="#e0622b" stroke-width="1.6"/><rect x="6" y="20.5" width="10.5" height="10.5" fill="none" stroke="#e0622b" stroke-width="1.6"/><rect x="20.5" y="20.5" width="10.5" height="10.5" fill="none" stroke="#e0622b" stroke-width="1.6"/></svg><span class="t" style="left:1808.7px;top:151px;font-size:15.5px;color:#3a3a3a;transform:scaleX(0.976);">Add-ins</span><span class="t" style="left:1811px;top:203px;font-size:13.5px;color:#3a3a3a;transform:scaleX(0.974);">Add-ins</span><div class="b" style="left:1872.3px;top:105px;width:1px;height:112px;background:#9c9c9c;"></div><svg class="b" style="left:1886.3px;top:201.2px;" width="11" height="6.5" viewBox="0 0 11.0 6.5"><path d="M1 1 L5.5 5.5 L10.0 1" fill="none" stroke="#333" stroke-width="1.3"/></svg><div class="b" style="left:574px;top:225.5px;width:780px;height:18.5px;background:#6a6a6a;"></div><div class="b" style="left:453px;top:232.5px;width:1px;height:6.5px;background:#ececec;"></div><div class="b" style="left:468px;top:235px;width:1px;height:1.5px;background:#e4e4e4;"></div><div class="b" style="left:483px;top:235px;width:1px;height:1.5px;background:#e4e4e4;"></div><div class="b" style="left:498px;top:235px;width:1px;height:1.5px;background:#e4e4e4;"></div><div class="b" style="left:513px;top:232.5px;width:1px;height:6.5px;background:#ececec;"></div><div class="b" style="left:528px;top:235px;width:1px;height:1.5px;background:#e4e4e4;"></div><div class="b" style="left:543px;top:235px;width:1px;height:1.5px;background:#e4e4e4;"></div><div class="b" style="left:558px;top:235px;width:1px;height:1.5px;background:#e4e4e4;"></div><div class="b" style="left:588px;top:235px;width:1px;height:1.5px;background:#e4e4e4;"></div><div class="b" style="left:603px;top:235px;width:1px;height:1.5px;background:#e4e4e4;"></div><div class="b" style="left:618px;top:235px;width:1px;height:1.5px;background:#e4e4e4;"></div><div class="b" style="left:633px;top:232.5px;width:1px;height:6.5px;background:#ececec;"></div><div class="b" style="left:648px;top:235px;width:1px;height:1.5px;background:#e4e4e4;"></div><div class="b" style="left:663px;top:235px;width:1px;height:1.5px;background:#e4e4e4;"></div><div class="b" style="left:678px;top:235px;width:1px;height:1.5px;background:#e4e4e4;"></div><span class="t" style="left:690px;top:229px;font-size:14.5px;color:#f2f2f2;transform:scaleX(0.992);">1</span><div class="b" style="left:708px;top:235px;width:1px;height:1.5px;background:#e4e4e4;"></div><div class="b" style="left:723px;top:235px;width:1px;height:1.5px;background:#e4e4e4;"></div><div class="b" style="left:738px;top:235px;width:1px;height:1.5px;background:#e4e4e4;"></div><div class="b" style="left:753px;top:232.5px;width:1px;height:6.5px;background:#ececec;"></div><div class="b" style="left:768px;top:235px;width:1px;height:1.5px;background:#e4e4e4;"></div><div class="b" style="left:783px;top:235px;width:1px;height:1.5px;background:#e4e4e4;"></div><div class="b" style="left:798px;top:235px;width:1px;height:1.5px;background:#e4e4e4;"></div><span class="t" style="left:810px;top:229px;font-size:14.5px;color:#f2f2f2;transform:scaleX(0.992);">2</span><div class="b" style="left:828px;top:235px;width:1px;height:1.5px;background:#e4e4e4;"></div><div class="b" style="left:843px;top:235px;width:1px;height:1.5px;background:#e4e4e4;"></div><div class="b" style="left:858px;top:235px;width:1px;height:1.5px;background:#e4e4e4;"></div><div class="b" style="left:873px;top:232.5px;width:1px;height:6.5px;background:#ececec;"></div><div class="b" style="left:888px;top:235px;width:1px;height:1.5px;background:#e4e4e4;"></div><div class="b" style="left:903px;top:235px;width:1px;height:1.5px;background:#e4e4e4;"></div><div class="b" style="left:918px;top:235px;width:1px;height:1.5px;background:#e4e4e4;"></div><span class="t" style="left:930px;top:229px;font-size:14.5px;color:#f2f2f2;transform:scaleX(0.992);">3</span><div class="b" style="left:948px;top:235px;width:1px;height:1.5px;background:#e4e4e4;"></div><div class="b" style="left:963px;top:235px;width:1px;height:1.5px;background:#e4e4e4;"></div><div class="b" style="left:978px;top:235px;width:1px;height:1.5px;background:#e4e4e4;"></div><div class="b" style="left:993px;top:232.5px;width:1px;height:6.5px;background:#ececec;"></div><div class="b" style="left:1008px;top:235px;width:1px;height:1.5px;background:#e4e4e4;"></div><div class="b" style="left:1023px;top:235px;width:1px;height:1.5px;background:#e4e4e4;"></div><div class="b" style="left:1038px;top:235px;width:1px;height:1.5px;background:#e4e4e4;"></div><span class="t" style="left:1050px;top:229px;font-size:14.5px;color:#f2f2f2;transform:scaleX(0.992);">4</span><div class="b" style="left:1068px;top:235px;width:1px;height:1.5px;background:#e4e4e4;"></div><div class="b" style="left:1083px;top:235px;width:1px;height:1.5px;background:#e4e4e4;"></div><div class="b" style="left:1098px;top:235px;width:1px;height:1.5px;background:#e4e4e4;"></div><div class="b" style="left:1113px;top:232.5px;width:1px;height:6.5px;background:#ececec;"></div><div class="b" style="left:1128px;top:235px;width:1px;height:1.5px;background:#e4e4e4;"></div><div class="b" style="left:1143px;top:235px;width:1px;height:1.5px;background:#e4e4e4;"></div><div class="b" style="left:1158px;top:235px;width:1px;height:1.5px;background:#e4e4e4;"></div><span class="t" style="left:1170px;top:229px;font-size:14.5px;color:#f2f2f2;transform:scaleX(0.992);">5</span><div class="b" style="left:1188px;top:235px;width:1px;height:1.5px;background:#e4e4e4;"></div><div class="b" style="left:1203px;top:235px;width:1px;height:1.5px;background:#e4e4e4;"></div><div class="b" style="left:1218px;top:235px;width:1px;height:1.5px;background:#e4e4e4;"></div><div class="b" style="left:1233px;top:232.5px;width:1px;height:6.5px;background:#ececec;"></div><div class="b" style="left:1248px;top:235px;width:1px;height:1.5px;background:#e4e4e4;"></div><div class="b" style="left:1263px;top:235px;width:1px;height:1.5px;background:#e4e4e4;"></div><div class="b" style="left:1278px;top:235px;width:1px;height:1.5px;background:#e4e4e4;"></div><span class="t" style="left:1290px;top:229px;font-size:14.5px;color:#f2f2f2;transform:scaleX(0.992);">6</span><div class="b" style="left:1308px;top:235px;width:1px;height:1.5px;background:#e4e4e4;"></div><div class="b" style="left:1323px;top:235px;width:1px;height:1.5px;background:#e4e4e4;"></div><div class="b" style="left:1338px;top:235px;width:1px;height:1.5px;background:#e4e4e4;"></div><div class="b" style="left:1353px;top:232.5px;width:1px;height:6.5px;background:#ececec;"></div><div class="b" style="left:1368px;top:235px;width:1px;height:1.5px;background:#e4e4e4;"></div><div class="b" style="left:1383px;top:235px;width:1px;height:1.5px;background:#e4e4e4;"></div><div class="b" style="left:1398px;top:235px;width:1px;height:1.5px;background:#e4e4e4;"></div><div class="b" style="left:1413px;top:232.5px;width:1px;height:6.5px;background:#ececec;"></div><div class="b" style="left:1428px;top:235px;width:1px;height:1.5px;background:#e4e4e4;"></div><div class="b" style="left:1443px;top:235px;width:1px;height:1.5px;background:#e4e4e4;"></div><div class="b" style="left:1458px;top:235px;width:1px;height:1.5px;background:#e4e4e4;"></div><svg class="b" style="left:567.5px;top:225px;" width="13" height="26" viewBox="0 0 13 26"><path d="M0.5 0.5 H12.5 V3 L6.5 9 L0.5 3 Z" fill="#c3c3c3"/><path d="M6.5 10 L12.5 16 V19 H0.5 V16 Z" fill="#c3c3c3"/><rect x="0.5" y="20.5" width="12" height="5" fill="#c3c3c3"/></svg><svg class="b" style="left:1347.5px;top:236px;" width="13" height="9" viewBox="0 0 13 9"><path d="M6.5 0.5 L12.5 6 V8.5 H0.5 V6 Z" fill="#c3c3c3"/></svg><div class="b" style="left:0px;top:251.3px;width:1920px;height:1px;background:#777;"></div><div class="b" style="left:4px;top:342.5px;width:19px;height:782px;background:#6a6a6a;"></div><svg class="b" style="left:9.5px;top:233px;" width="9" height="9" viewBox="0 0 9 9"><path d="M1.2 0 V7.8 H9" fill="none" stroke="#e6e6e6" stroke-width="2.4"/></svg><div class="b" style="left:13.5px;top:251.7px;width:2px;height:1.6px;background:#e0e0e0;"></div><div class="b" style="left:13.5px;top:266.7px;width:2px;height:1.6px;background:#e0e0e0;"></div><div class="b" style="left:11px;top:281.8px;width:7px;height:1.4px;background:#e8e8e8;"></div><div class="b" style="left:13.5px;top:296.7px;width:2px;height:1.6px;background:#e0e0e0;"></div><div class="b" style="left:13.5px;top:311.7px;width:2px;height:1.6px;background:#e0e0e0;"></div><div class="b" style="left:13.5px;top:326.7px;width:2px;height:1.6px;background:#e0e0e0;"></div><div class="b" style="left:13.5px;top:356.7px;width:2px;height:1.6px;background:#e0e0e0;"></div><div class="b" style="left:13.5px;top:371.7px;width:2px;height:1.6px;background:#e0e0e0;"></div><div class="b" style="left:13.5px;top:386.7px;width:2px;height:1.6px;background:#e0e0e0;"></div><div class="b" style="left:11px;top:401.8px;width:7px;height:1.4px;background:#e8e8e8;"></div><div class="b" style="left:13.5px;top:416.7px;width:2px;height:1.6px;background:#e0e0e0;"></div><div class="b" style="left:13.5px;top:431.7px;width:2px;height:1.6px;background:#e0e0e0;"></div><div class="b" style="left:13.5px;top:446.7px;width:2px;height:1.6px;background:#e0e0e0;"></div><span class="t" style="left:7px;top:454.5px;font-size:15px;color:#fff;line-height:16px;transform:rotate(-90deg);transform-origin:50% 50%;width:14px;text-align:center;">1</span><div class="b" style="left:13.5px;top:476.7px;width:2px;height:1.6px;background:#e0e0e0;"></div><div class="b" style="left:13.5px;top:491.7px;width:2px;height:1.6px;background:#e0e0e0;"></div><div class="b" style="left:13.5px;top:506.7px;width:2px;height:1.6px;background:#e0e0e0;"></div><div class="b" style="left:11px;top:521.8px;width:7px;height:1.4px;background:#e8e8e8;"></div><div class="b" style="left:13.5px;top:536.7px;width:2px;height:1.6px;background:#e0e0e0;"></div><div class="b" style="left:13.5px;top:551.7px;width:2px;height:1.6px;background:#e0e0e0;"></div><div class="b" style="left:13.5px;top:566.7px;width:2px;height:1.6px;background:#e0e0e0;"></div><span class="t" style="left:7px;top:574.5px;font-size:15px;color:#fff;line-height:16px;transform:rotate(-90deg);transform-origin:50% 50%;width:14px;text-align:center;">2</span><div class="b" style="left:13.5px;top:596.7px;width:2px;height:1.6px;background:#e0e0e0;"></div><div class="b" style="left:13.5px;top:611.7px;width:2px;height:1.6px;background:#e0e0e0;"></div><div class="b" style="left:13.5px;top:626.7px;width:2px;height:1.6px;background:#e0e0e0;"></div><div class="b" style="left:11px;top:641.8px;width:7px;height:1.4px;background:#e8e8e8;"></div><div class="b" style="left:13.5px;top:656.7px;width:2px;height:1.6px;background:#e0e0e0;"></div><div class="b" style="left:13.5px;top:671.7px;width:2px;height:1.6px;background:#e0e0e0;"></div><div class="b" style="left:13.5px;top:686.7px;width:2px;height:1.6px;background:#e0e0e0;"></div><span class="t" style="left:7px;top:694.5px;font-size:15px;color:#fff;line-height:16px;transform:rotate(-90deg);transform-origin:50% 50%;width:14px;text-align:center;">3</span><div class="b" style="left:13.5px;top:716.7px;width:2px;height:1.6px;background:#e0e0e0;"></div><div class="b" style="left:13.5px;top:731.7px;width:2px;height:1.6px;background:#e0e0e0;"></div><div class="b" style="left:13.5px;top:746.7px;width:2px;height:1.6px;background:#e0e0e0;"></div><div class="b" style="left:11px;top:761.8px;width:7px;height:1.4px;background:#e8e8e8;"></div><div class="b" style="left:13.5px;top:776.7px;width:2px;height:1.6px;background:#e0e0e0;"></div><div class="b" style="left:13.5px;top:791.7px;width:2px;height:1.6px;background:#e0e0e0;"></div><div class="b" style="left:13.5px;top:806.7px;width:2px;height:1.6px;background:#e0e0e0;"></div><span class="t" style="left:7px;top:814.5px;font-size:15px;color:#fff;line-height:16px;transform:rotate(-90deg);transform-origin:50% 50%;width:14px;text-align:center;">4</span><div class="b" style="left:13.5px;top:836.7px;width:2px;height:1.6px;background:#e0e0e0;"></div><div class="b" style="left:13.5px;top:851.7px;width:2px;height:1.6px;background:#e0e0e0;"></div><div class="b" style="left:13.5px;top:866.7px;width:2px;height:1.6px;background:#e0e0e0;"></div><div class="b" style="left:11px;top:881.8px;width:7px;height:1.4px;background:#e8e8e8;"></div><div class="b" style="left:13.5px;top:896.7px;width:2px;height:1.6px;background:#e0e0e0;"></div><div class="b" style="left:13.5px;top:911.7px;width:2px;height:1.6px;background:#e0e0e0;"></div><div class="b" style="left:13.5px;top:926.7px;width:2px;height:1.6px;background:#e0e0e0;"></div><span class="t" style="left:7px;top:934.5px;font-size:15px;color:#fff;line-height:16px;transform:rotate(-90deg);transform-origin:50% 50%;width:14px;text-align:center;">5</span><div class="b" style="left:13.5px;top:956.7px;width:2px;height:1.6px;background:#e0e0e0;"></div><div class="b" style="left:13.5px;top:971.7px;width:2px;height:1.6px;background:#e0e0e0;"></div><div class="b" style="left:13.5px;top:986.7px;width:2px;height:1.6px;background:#e0e0e0;"></div><div class="b" style="left:11px;top:1001.8px;width:7px;height:1.4px;background:#e8e8e8;"></div><div class="b" style="left:13.5px;top:1016.7px;width:2px;height:1.6px;background:#e0e0e0;"></div><div class="b" style="left:13.5px;top:1031.7px;width:2px;height:1.6px;background:#e0e0e0;"></div><div class="b" style="left:13.5px;top:1046.7px;width:2px;height:1.6px;background:#e0e0e0;"></div><span class="t" style="left:7px;top:1054.5px;font-size:15px;color:#fff;line-height:16px;transform:rotate(-90deg);transform-origin:50% 50%;width:14px;text-align:center;">6</span><div class="b" style="left:13.5px;top:1076.7px;width:2px;height:1.6px;background:#e0e0e0;"></div><div class="b" style="left:13.5px;top:1091.7px;width:2px;height:1.6px;background:#e0e0e0;"></div><div class="b" style="left:13.5px;top:1106.7px;width:2px;height:1.6px;background:#e0e0e0;"></div><div class="b" style="left:455px;top:252px;width:1018.4px;height:871px;background:#525252;"></div><div class="b" style="left:455px;top:252px;width:1018.4px;height:849px;background:#fff;"></div><div class="b" style="left:574px;top:252px;width:780px;height:144px;overflow:hidden;"><div class="b" style="left:0px;top:-100px;width:780px;height:244px;background:#000;overflow:hidden;"><div class="b" style="left:0px;top:0px;width:390px;height:233.6px;background:#525252;"></div><div class="b" style="left:144.4px;top:2px;width:105px;height:7.9px;background:#bdbdbd;"></div><div class="b" style="left:2px;top:19.9px;width:385.9px;height:25.2px;background:#bdbdbd;border-radius:2px;"></div><div class="b" style="left:168.8px;top:24.2px;width:25.6px;height:12.2px;background:#fff;"></div><div class="b" style="left:196.4px;top:24.2px;width:25.6px;height:12.2px;background:#fff;"></div><div class="b" style="left:223.8px;top:24.2px;width:25.6px;height:12.2px;background:#fff;"></div><div class="b" style="left:251.3px;top:24.2px;width:25.6px;height:12.2px;background:#fff;"></div><div class="b" style="left:278.7px;top:24.2px;width:25.6px;height:12.2px;background:#fff;"></div><div class="b" style="left:366.4px;top:13px;width:20.5px;height:5.9px;background:#7ea9f1;"></div><div class="b" style="left:92.4px;top:51.2px;width:206.8px;height:15.8px;background:#fff;"></div><div class="b" style="left:92.4px;top:71.5px;width:206.8px;height:156.6px;background:#fff;"></div><div class="b" style="left:116.6px;top:121.9px;width:79.2px;height:47.5px;background:#585858;"></div><div class="b" style="left:116.6px;top:125.9px;width:79.2px;height:5.3px;background:#b5b5b5;"></div><div class="b" style="left:135.3px;top:132.4px;width:41.8px;height:35.8px;background:#f2f2f2;"></div><div class="b" style="left:141px;top:136.1px;width:30.5px;height:24.4px;background:#777;"></div><div class="b" style="left:116.6px;top:169.4px;width:79.2px;height:2px;background:#444;"></div><div class="b" style="left:119px;top:169.4px;width:15px;height:2px;background:#ddd;"></div><div class="b" style="left:195.8px;top:121.9px;width:79.2px;height:3.7px;background:#181818;"></div><div class="b" style="left:195.8px;top:125.5px;width:79.2px;height:39.4px;background:#e6e6e6;"></div><div class="b" style="left:210px;top:130px;width:32.5px;height:34.9px;background:#fff;"></div><div class="b" style="left:258.8px;top:130px;width:14.2px;height:32.5px;background:#333;"></div><div class="b" style="left:195.8px;top:164.9px;width:79.2px;height:6.5px;background:#0a0a0a;"></div><div class="b" style="left:0px;top:228.1px;width:390px;height:5.5px;background:#525252;"></div><div class="b" style="left:0px;top:233.6px;width:390px;height:10.2px;background:#42403e;"></div><div class="b" style="left:12.2px;top:233.6px;width:73.1px;height:10.2px;background:#eeeeee;"></div><div class="b" style="left:101.2px;top:235.6px;width:6.5px;height:6.1px;background:#f5b93d;border-radius:2px;"></div><div class="b" style="left:113.8px;top:235.6px;width:6.5px;height:6.1px;background:#1ed760;border-radius:2px;"></div><div class="b" style="left:126.3px;top:235.6px;width:6.5px;height:6.1px;background:#1a78d2;border-radius:2px;"></div><div class="b" style="left:138.9px;top:235.6px;width:6.5px;height:6.1px;background:#5059c9;border-radius:2px;"></div><div class="b" style="left:151.5px;top:235.6px;width:6.5px;height:6.1px;background:#eee;border-radius:2px;"></div><div class="b" style="left:164.1px;top:235.6px;width:6.5px;height:6.1px;background:#e33b2e;border-radius:2px;"></div><div class="b" style="left:176.7px;top:235.6px;width:6.5px;height:6.1px;background:#2b7cd3;border-radius:2px;"></div><div class="b" style="left:189.3px;top:235.6px;width:6.5px;height:6.1px;background:#21a366;border-radius:2px;"></div><div class="b" style="left:390px;top:0px;width:390px;height:8.1px;background:#000;"></div><div class="b" style="left:390px;top:8.1px;width:390px;height:9.5px;background:#2d2d2d;"></div><div class="b" style="left:414.4px;top:9.3px;width:330.3px;height:6.9px;background:#3d3d3d;"></div><div class="b" style="left:390px;top:17.7px;width:390px;height:193.6px;background:#fff;"></div><div class="b" style="left:394.9px;top:22.5px;width:26.8px;height:7.3px;background:#0b6ed0;"></div><div class="b" style="left:742.2px;top:22.5px;width:32.9px;height:7.3px;background:#0b6ed0;"></div><div class="b" style="left:394.9px;top:39.6px;width:298.2px;height:171.6px;background:#d9d9d9;"></div><div class="b" style="left:465.8px;top:39.6px;width:156.4px;height:163.5px;background:#fff;"></div><div class="b" style="left:472.9px;top:45.3px;width:40.6px;height:10.2px;background:#cfcfcf;"></div><div class="b" style="left:506.4px;top:48.1px;width:112.3px;height:4.5px;background:radial-gradient(circle,#9a9a9a 0 2.2px,transparent 2.7px) 0 0/20% 100%;"></div><div class="b" style="left:472.9px;top:64.4px;width:40.6px;height:10.2px;background:#cfcfcf;"></div><div class="b" style="left:506.4px;top:67.2px;width:112.3px;height:4.5px;background:radial-gradient(circle,#9a9a9a 0 2.2px,transparent 2.7px) 0 0/20% 100%;"></div><div class="b" style="left:472.9px;top:83.5px;width:40.6px;height:10.2px;background:#cfcfcf;"></div><div class="b" style="left:506.4px;top:86.3px;width:112.3px;height:4.5px;background:radial-gradient(circle,#9a9a9a 0 2.2px,transparent 2.7px) 0 0/20% 100%;"></div><div class="b" style="left:472.9px;top:102.4px;width:40.6px;height:10.2px;background:#cfcfcf;"></div><div class="b" style="left:506.4px;top:105.2px;width:112.3px;height:4.5px;background:radial-gradient(circle,#9a9a9a 0 2.2px,transparent 2.7px) 0 0/20% 100%;"></div><div class="b" style="left:468.8px;top:130px;width:117.8px;height:6.9px;background:#c9c9c9;"></div><div class="b" style="left:468.8px;top:142.6px;width:149.9px;height:29.5px;background:#e4e4e4;outline:1px solid #999;"></div><div class="b" style="left:469.2px;top:190.9px;width:17.1px;height:8.7px;background:#a0ccee;"></div><div class="b" style="left:602.5px;top:190.9px;width:16.2px;height:8.7px;background:#a0ccee;"></div><div class="b" style="left:693.1px;top:39.6px;width:3.5px;height:171.6px;background:#eee;"></div><div class="b" style="left:701.8px;top:39.6px;width:72.3px;height:158.4px;background:#252b33;border-radius:7px;"></div><div class="b" style="left:703.6px;top:46.1px;width:68.9px;height:149.3px;background:#fff;border-radius:3px;"></div><div class="b" style="left:707.7px;top:53.8px;width:60.7px;height:9.8px;background:#e6e6e6;"></div><div class="b" style="left:707.7px;top:64.8px;width:60.7px;height:9.8px;background:#e6e6e6;"></div><div class="b" style="left:707.7px;top:75.8px;width:60.7px;height:9.8px;background:#e6e6e6;"></div><div class="b" style="left:707.7px;top:86.7px;width:60.7px;height:9.8px;background:#e6e6e6;"></div><div class="b" style="left:707.7px;top:133.5px;width:60.7px;height:23.2px;background:#e4e4e4;outline:1px solid #999;"></div><div class="b" style="left:706.1px;top:174.3px;width:15.2px;height:7.5px;background:#a0ccee;"></div><div class="b" style="left:755.4px;top:174.3px;width:14.6px;height:7.5px;background:#a0ccee;"></div><div class="b" style="left:703.6px;top:184.2px;width:68.9px;height:11.2px;background:#dadada;"></div><div class="b" style="left:390px;top:211.2px;width:390px;height:8.1px;background:#42403e;"></div><div class="b" style="left:390px;top:219.4px;width:390px;height:24.4px;background:#000;"></div><div class="b" style="left:422.1px;top:212.9px;width:5.1px;height:4.9px;background:#f5b93d;border-radius:2px;"></div><div class="b" style="left:432px;top:212.9px;width:5.1px;height:4.9px;background:#1ed760;border-radius:2px;"></div><div class="b" style="left:442px;top:212.9px;width:5.1px;height:4.9px;background:#1a78d2;border-radius:2px;"></div><div class="b" style="left:452px;top:212.9px;width:5.1px;height:4.9px;background:#5059c9;border-radius:2px;"></div><div class="b" style="left:461.9px;top:212.9px;width:5.1px;height:4.9px;background:#eee;border-radius:2px;"></div><div class="b" style="left:471.9px;top:212.9px;width:5.1px;height:4.9px;background:#e33b2e;border-radius:2px;"></div><div class="b" style="left:481.8px;top:212.9px;width:5.1px;height:4.9px;background:#2b7cd3;border-radius:2px;"></div><div class="b" style="left:491.8px;top:212.9px;width:5.1px;height:4.9px;background:#21a366;border-radius:2px;"></div></div></div><div class="b" style="left:574px;top:400px;width:780px;height:244px;background:#000;overflow:hidden;"><div class="b" style="left:0px;top:0px;width:390px;height:233.6px;background:#525252;"></div><div class="b" style="left:144.4px;top:2px;width:105px;height:7.9px;background:#bdbdbd;"></div><div class="b" style="left:2px;top:19.9px;width:385.9px;height:25.2px;background:#bdbdbd;border-radius:2px;"></div><div class="b" style="left:168.8px;top:24.2px;width:25.6px;height:12.2px;background:#fff;"></div><div class="b" style="left:196.4px;top:24.2px;width:25.6px;height:12.2px;background:#fff;"></div><div class="b" style="left:223.8px;top:24.2px;width:25.6px;height:12.2px;background:#fff;"></div><div class="b" style="left:251.3px;top:24.2px;width:25.6px;height:12.2px;background:#fff;"></div><div class="b" style="left:278.7px;top:24.2px;width:25.6px;height:12.2px;background:#fff;"></div><div class="b" style="left:366.4px;top:13px;width:20.5px;height:5.9px;background:#7ea9f1;"></div><div class="b" style="left:92.4px;top:51.2px;width:206.8px;height:15.8px;background:#fff;"></div><div class="b" style="left:92.4px;top:71.5px;width:206.8px;height:156.6px;background:#fff;"></div><div class="b" style="left:116.6px;top:101.6px;width:79.2px;height:47.5px;background:#585858;"></div><div class="b" style="left:116.6px;top:105.6px;width:79.2px;height:5.3px;background:#b5b5b5;"></div><div class="b" style="left:135.3px;top:112.1px;width:41.8px;height:35.8px;background:#f2f2f2;"></div><div class="b" style="left:141px;top:115.8px;width:30.5px;height:24.4px;background:#777;"></div><div class="b" style="left:116.6px;top:149.1px;width:79.2px;height:2px;background:#444;"></div><div class="b" style="left:119px;top:149.1px;width:15px;height:2px;background:#ddd;"></div><div class="b" style="left:195.8px;top:101.6px;width:79.2px;height:3.7px;background:#181818;"></div><div class="b" style="left:195.8px;top:105.2px;width:79.2px;height:39.4px;background:#e6e6e6;"></div><div class="b" style="left:210px;top:109.7px;width:32.5px;height:34.9px;background:#fff;"></div><div class="b" style="left:258.8px;top:109.7px;width:14.2px;height:32.5px;background:#333;"></div><div class="b" style="left:195.8px;top:144.6px;width:79.2px;height:6.5px;background:#0a0a0a;"></div><div class="b" style="left:116.6px;top:152.3px;width:79.2px;height:47.5px;background:#585858;"></div><div class="b" style="left:116.6px;top:156.4px;width:79.2px;height:5.3px;background:#b5b5b5;"></div><div class="b" style="left:135.3px;top:162.9px;width:41.8px;height:35.8px;background:#f2f2f2;"></div><div class="b" style="left:141px;top:166.6px;width:30.5px;height:24.4px;background:#777;"></div><div class="b" style="left:116.6px;top:199.9px;width:79.2px;height:2px;background:#444;"></div><div class="b" style="left:119px;top:199.9px;width:15px;height:2px;background:#ddd;"></div><div class="b" style="left:195.8px;top:152.3px;width:79.2px;height:3.7px;background:#181818;"></div><div class="b" style="left:195.8px;top:156px;width:79.2px;height:39.4px;background:#e6e6e6;"></div><div class="b" style="left:210px;top:160.5px;width:32.5px;height:34.9px;background:#fff;"></div><div class="b" style="left:258.8px;top:160.5px;width:14.2px;height:32.5px;background:#333;"></div><div class="b" style="left:195.8px;top:195.4px;width:79.2px;height:6.5px;background:#0a0a0a;"></div><div class="b" style="left:0px;top:228.1px;width:390px;height:5.5px;background:#525252;"></div><div class="b" style="left:0px;top:233.6px;width:390px;height:10.2px;background:#42403e;"></div><div class="b" style="left:12.2px;top:233.6px;width:73.1px;height:10.2px;background:#eeeeee;"></div><div class="b" style="left:101.2px;top:235.6px;width:6.5px;height:6.1px;background:#f5b93d;border-radius:2px;"></div><div class="b" style="left:113.8px;top:235.6px;width:6.5px;height:6.1px;background:#1ed760;border-radius:2px;"></div><div class="b" style="left:126.3px;top:235.6px;width:6.5px;height:6.1px;background:#1a78d2;border-radius:2px;"></div><div class="b" style="left:138.9px;top:235.6px;width:6.5px;height:6.1px;background:#5059c9;border-radius:2px;"></div><div class="b" style="left:151.5px;top:235.6px;width:6.5px;height:6.1px;background:#eee;border-radius:2px;"></div><div class="b" style="left:164.1px;top:235.6px;width:6.5px;height:6.1px;background:#e33b2e;border-radius:2px;"></div><div class="b" style="left:176.7px;top:235.6px;width:6.5px;height:6.1px;background:#2b7cd3;border-radius:2px;"></div><div class="b" style="left:189.3px;top:235.6px;width:6.5px;height:6.1px;background:#21a366;border-radius:2px;"></div><div class="b" style="left:390px;top:0px;width:390px;height:8.1px;background:#000;"></div><div class="b" style="left:390px;top:8.1px;width:390px;height:9.5px;background:#2d2d2d;"></div><div class="b" style="left:414.4px;top:9.3px;width:330.3px;height:6.9px;background:#3d3d3d;"></div><div class="b" style="left:390px;top:17.7px;width:390px;height:193.6px;background:#fff;"></div><div class="b" style="left:394.9px;top:22.5px;width:26.8px;height:7.3px;background:#0b6ed0;"></div><div class="b" style="left:742.2px;top:22.5px;width:32.9px;height:7.3px;background:#0b6ed0;"></div><div class="b" style="left:394.9px;top:39.6px;width:298.2px;height:171.6px;background:#d9d9d9;"></div><div class="b" style="left:465.8px;top:74.1px;width:156.4px;height:137.1px;background:#fff;"></div><div class="b" style="left:539.3px;top:55px;width:9.3px;height:15px;background:#6fa3d6;"></div><div class="b" style="left:468.8px;top:78.2px;width:150.3px;height:20.3px;background:#c9c9c9;"></div><div class="b" style="left:472.9px;top:123.7px;width:40.6px;height:10.2px;background:#cfcfcf;"></div><div class="b" style="left:506.4px;top:126.5px;width:112.3px;height:4.5px;background:radial-gradient(circle,#9a9a9a 0 2.2px,transparent 2.7px) 0 0/20% 100%;"></div><div class="b" style="left:472.9px;top:140.2px;width:40.6px;height:10.2px;background:#cfcfcf;"></div><div class="b" style="left:506.4px;top:143px;width:112.3px;height:4.5px;background:radial-gradient(circle,#9a9a9a 0 2.2px,transparent 2.7px) 0 0/20% 100%;"></div><div class="b" style="left:472.9px;top:159.7px;width:40.6px;height:10.2px;background:#cfcfcf;"></div><div class="b" style="left:506.4px;top:162.5px;width:112.3px;height:4.5px;background:radial-gradient(circle,#9a9a9a 0 2.2px,transparent 2.7px) 0 0/20% 100%;"></div><div class="b" style="left:472.9px;top:178.3px;width:40.6px;height:10.2px;background:#cfcfcf;"></div><div class="b" style="left:506.4px;top:181.2px;width:112.3px;height:4.5px;background:radial-gradient(circle,#9a9a9a 0 2.2px,transparent 2.7px) 0 0/20% 100%;"></div><div class="b" style="left:472.9px;top:197.4px;width:40.6px;height:10.2px;background:#cfcfcf;"></div><div class="b" style="left:506.4px;top:200.3px;width:112.3px;height:4.5px;background:radial-gradient(circle,#9a9a9a 0 2.2px,transparent 2.7px) 0 0/20% 100%;"></div><div class="b" style="left:693.1px;top:39.6px;width:3.5px;height:171.6px;background:#eee;"></div><div class="b" style="left:701.8px;top:39.6px;width:72.3px;height:158.4px;background:#252b33;border-radius:7px;"></div><div class="b" style="left:703.6px;top:46.1px;width:68.9px;height:149.3px;background:#fff;border-radius:3px;"></div><div class="b" style="left:703.6px;top:52.8px;width:68.9px;height:18.3px;background:#d9d9d9;"></div><div class="b" style="left:707.7px;top:75.2px;width:58.9px;height:40.6px;background:#cfcfcf;"></div><div class="b" style="left:707.7px;top:135.7px;width:60.7px;height:9.8px;background:#e6e6e6;"></div><div class="b" style="left:707.7px;top:146.7px;width:60.7px;height:9.8px;background:#e6e6e6;"></div><div class="b" style="left:707.7px;top:157.6px;width:60.7px;height:9.8px;background:#e6e6e6;"></div><div class="b" style="left:707.7px;top:168.6px;width:60.7px;height:9.8px;background:#e6e6e6;"></div><div class="b" style="left:707.7px;top:179.6px;width:60.7px;height:9.8px;background:#e6e6e6;"></div><div class="b" style="left:390px;top:211.2px;width:390px;height:8.1px;background:#42403e;"></div><div class="b" style="left:390px;top:219.4px;width:390px;height:24.4px;background:#000;"></div><div class="b" style="left:422.1px;top:212.9px;width:5.1px;height:4.9px;background:#f5b93d;border-radius:2px;"></div><div class="b" style="left:432px;top:212.9px;width:5.1px;height:4.9px;background:#1ed760;border-radius:2px;"></div><div class="b" style="left:442px;top:212.9px;width:5.1px;height:4.9px;background:#1a78d2;border-radius:2px;"></div><div class="b" style="left:452px;top:212.9px;width:5.1px;height:4.9px;background:#5059c9;border-radius:2px;"></div><div class="b" style="left:461.9px;top:212.9px;width:5.1px;height:4.9px;background:#eee;border-radius:2px;"></div><div class="b" style="left:471.9px;top:212.9px;width:5.1px;height:4.9px;background:#e33b2e;border-radius:2px;"></div><div class="b" style="left:481.8px;top:212.9px;width:5.1px;height:4.9px;background:#2b7cd3;border-radius:2px;"></div><div class="b" style="left:491.8px;top:212.9px;width:5.1px;height:4.9px;background:#21a366;border-radius:2px;"></div></div><div class="b" style="left:574px;top:649px;width:780px;height:244px;background:#000;overflow:hidden;"><div class="b" style="left:0px;top:0px;width:390px;height:233.6px;background:#525252;"></div><div class="b" style="left:144.4px;top:2px;width:105px;height:7.9px;background:#bdbdbd;"></div><div class="b" style="left:2px;top:19.9px;width:385.9px;height:25.2px;background:#bdbdbd;border-radius:2px;"></div><div class="b" style="left:168.8px;top:24.2px;width:25.6px;height:12.2px;background:#fff;"></div><div class="b" style="left:196.4px;top:24.2px;width:25.6px;height:12.2px;background:#fff;"></div><div class="b" style="left:223.8px;top:24.2px;width:25.6px;height:12.2px;background:#fff;"></div><div class="b" style="left:251.3px;top:24.2px;width:25.6px;height:12.2px;background:#fff;"></div><div class="b" style="left:278.7px;top:24.2px;width:25.6px;height:12.2px;background:#fff;"></div><div class="b" style="left:366.4px;top:13px;width:20.5px;height:5.9px;background:#7ea9f1;"></div><div class="b" style="left:92.4px;top:51.2px;width:206.8px;height:176.9px;background:#fff;"></div><div class="b" style="left:116.6px;top:51.2px;width:79.2px;height:22.8px;background:#585858;"></div><div class="b" style="left:135.3px;top:51.2px;width:41.8px;height:21.5px;background:#f2f2f2;"></div><div class="b" style="left:141px;top:51.2px;width:30.5px;height:13.8px;background:#777;"></div><div class="b" style="left:116.6px;top:73.9px;width:79.2px;height:2px;background:#444;"></div><div class="b" style="left:119px;top:73.9px;width:15px;height:2px;background:#ddd;"></div><div class="b" style="left:195.8px;top:51.2px;width:79.2px;height:18.3px;background:#e6e6e6;"></div><div class="b" style="left:210px;top:51.2px;width:32.5px;height:18.3px;background:#fff;"></div><div class="b" style="left:258.8px;top:51.2px;width:14.2px;height:15.8px;background:#333;"></div><div class="b" style="left:195.8px;top:69.5px;width:79.2px;height:6.5px;background:#0a0a0a;"></div><div class="b" style="left:116.6px;top:77.2px;width:79.2px;height:47.5px;background:#585858;"></div><div class="b" style="left:116.6px;top:81.2px;width:79.2px;height:5.3px;background:#b5b5b5;"></div><div class="b" style="left:135.3px;top:87.8px;width:41.8px;height:35.8px;background:#f2f2f2;"></div><div class="b" style="left:141px;top:91.4px;width:30.5px;height:24.4px;background:#777;"></div><div class="b" style="left:116.6px;top:124.7px;width:79.2px;height:2px;background:#444;"></div><div class="b" style="left:119px;top:124.7px;width:15px;height:2px;background:#ddd;"></div><div class="b" style="left:195.8px;top:77.2px;width:79.2px;height:3.7px;background:#181818;"></div><div class="b" style="left:195.8px;top:80.8px;width:79.2px;height:39.4px;background:#e6e6e6;"></div><div class="b" style="left:210px;top:85.3px;width:32.5px;height:34.9px;background:#fff;"></div><div class="b" style="left:258.8px;top:85.3px;width:14.2px;height:32.5px;background:#333;"></div><div class="b" style="left:195.8px;top:120.2px;width:79.2px;height:6.5px;background:#0a0a0a;"></div><div class="b" style="left:276px;top:130px;width:15.4px;height:5.9px;background:#cfcfcf;"></div><div class="b" style="left:0px;top:228.1px;width:390px;height:5.5px;background:#525252;"></div><div class="b" style="left:0px;top:233.6px;width:390px;height:10.2px;background:#42403e;"></div><div class="b" style="left:12.2px;top:233.6px;width:73.1px;height:10.2px;background:#eeeeee;"></div><div class="b" style="left:101.2px;top:235.6px;width:6.5px;height:6.1px;background:#f5b93d;border-radius:2px;"></div><div class="b" style="left:113.8px;top:235.6px;width:6.5px;height:6.1px;background:#1ed760;border-radius:2px;"></div><div class="b" style="left:126.3px;top:235.6px;width:6.5px;height:6.1px;background:#1a78d2;border-radius:2px;"></div><div class="b" style="left:138.9px;top:235.6px;width:6.5px;height:6.1px;background:#5059c9;border-radius:2px;"></div><div class="b" style="left:151.5px;top:235.6px;width:6.5px;height:6.1px;background:#eee;border-radius:2px;"></div><div class="b" style="left:164.1px;top:235.6px;width:6.5px;height:6.1px;background:#e33b2e;border-radius:2px;"></div><div class="b" style="left:176.7px;top:235.6px;width:6.5px;height:6.1px;background:#2b7cd3;border-radius:2px;"></div><div class="b" style="left:189.3px;top:235.6px;width:6.5px;height:6.1px;background:#21a366;border-radius:2px;"></div><div class="b" style="left:390px;top:0px;width:390px;height:8.1px;background:#000;"></div><div class="b" style="left:390px;top:8.1px;width:390px;height:9.5px;background:#2d2d2d;"></div><div class="b" style="left:414.4px;top:9.3px;width:330.3px;height:6.9px;background:#3d3d3d;"></div><div class="b" style="left:390px;top:17.7px;width:390px;height:193.6px;background:#fff;"></div><div class="b" style="left:394.9px;top:22.5px;width:26.8px;height:7.3px;background:#0b6ed0;"></div><div class="b" style="left:742.2px;top:22.5px;width:32.9px;height:7.3px;background:#0b6ed0;"></div><div class="b" style="left:394.9px;top:39.6px;width:298.2px;height:171.6px;background:#d9d9d9;"></div><div class="b" style="left:465.8px;top:39.6px;width:156.4px;height:163.5px;background:#fff;"></div><div class="b" style="left:472.9px;top:45.3px;width:40.6px;height:10.2px;background:#cfcfcf;"></div><div class="b" style="left:506.4px;top:48.1px;width:112.3px;height:4.5px;background:radial-gradient(circle,#9a9a9a 0 2.2px,transparent 2.7px) 0 0/20% 100%;"></div><div class="b" style="left:472.9px;top:64.4px;width:40.6px;height:10.2px;background:#cfcfcf;"></div><div class="b" style="left:506.4px;top:67.2px;width:112.3px;height:4.5px;background:radial-gradient(circle,#9a9a9a 0 2.2px,transparent 2.7px) 0 0/20% 100%;"></div><div class="b" style="left:472.9px;top:83.5px;width:40.6px;height:10.2px;background:#cfcfcf;"></div><div class="b" style="left:506.4px;top:86.3px;width:112.3px;height:4.5px;background:radial-gradient(circle,#9a9a9a 0 2.2px,transparent 2.7px) 0 0/20% 100%;"></div><div class="b" style="left:472.9px;top:102.4px;width:40.6px;height:10.2px;background:#cfcfcf;"></div><div class="b" style="left:506.4px;top:105.2px;width:112.3px;height:4.5px;background:radial-gradient(circle,#9a9a9a 0 2.2px,transparent 2.7px) 0 0/20% 100%;"></div><div class="b" style="left:468.8px;top:130px;width:117.8px;height:6.9px;background:#c9c9c9;"></div><div class="b" style="left:468.8px;top:142.6px;width:149.9px;height:29.5px;background:#e4e4e4;outline:1px solid #999;"></div><div class="b" style="left:469.2px;top:190.9px;width:17.1px;height:8.7px;background:#a0ccee;"></div><div class="b" style="left:602.5px;top:190.9px;width:16.2px;height:8.7px;background:#a0ccee;"></div><div class="b" style="left:693.1px;top:39.6px;width:3.5px;height:171.6px;background:#eee;"></div><div class="b" style="left:701.8px;top:39.6px;width:72.3px;height:158.4px;background:#252b33;border-radius:7px;"></div><div class="b" style="left:703.6px;top:46.1px;width:68.9px;height:149.3px;background:#fff;border-radius:3px;"></div><div class="b" style="left:707.7px;top:53.8px;width:60.7px;height:9.8px;background:#e6e6e6;"></div><div class="b" style="left:707.7px;top:64.8px;width:60.7px;height:9.8px;background:#e6e6e6;"></div><div class="b" style="left:707.7px;top:75.8px;width:60.7px;height:9.8px;background:#e6e6e6;"></div><div class="b" style="left:707.7px;top:86.7px;width:60.7px;height:9.8px;background:#e6e6e6;"></div><div class="b" style="left:707.7px;top:133.5px;width:60.7px;height:23.2px;background:#e4e4e4;outline:1px solid #999;"></div><div class="b" style="left:706.1px;top:174.3px;width:15.2px;height:7.5px;background:#a0ccee;"></div><div class="b" style="left:755.4px;top:174.3px;width:14.6px;height:7.5px;background:#a0ccee;"></div><div class="b" style="left:703.6px;top:184.2px;width:68.9px;height:11.2px;background:#dadada;"></div><div class="b" style="left:390px;top:211.2px;width:390px;height:8.1px;background:#42403e;"></div><div class="b" style="left:390px;top:219.4px;width:390px;height:24.4px;background:#000;"></div><div class="b" style="left:422.1px;top:212.9px;width:5.1px;height:4.9px;background:#f5b93d;border-radius:2px;"></div><div class="b" style="left:432px;top:212.9px;width:5.1px;height:4.9px;background:#1ed760;border-radius:2px;"></div><div class="b" style="left:442px;top:212.9px;width:5.1px;height:4.9px;background:#1a78d2;border-radius:2px;"></div><div class="b" style="left:452px;top:212.9px;width:5.1px;height:4.9px;background:#5059c9;border-radius:2px;"></div><div class="b" style="left:461.9px;top:212.9px;width:5.1px;height:4.9px;background:#eee;border-radius:2px;"></div><div class="b" style="left:471.9px;top:212.9px;width:5.1px;height:4.9px;background:#e33b2e;border-radius:2px;"></div><div class="b" style="left:481.8px;top:212.9px;width:5.1px;height:4.9px;background:#2b7cd3;border-radius:2px;"></div><div class="b" style="left:491.8px;top:212.9px;width:5.1px;height:4.9px;background:#21a366;border-radius:2px;"></div></div><div class="b" style="left:1359px;top:897px;width:75.7px;height:28.8px;background:#d2d2d2;border:1px solid #a8a8a8;box-sizing:border-box;"></div><span class="t" style="left:1386px;top:904px;font-size:15.5px;color:#333;transform:scaleX(0.929);">(Ctrl)</span><div class="b" style="left:0px;top:1123px;width:1920px;height:27px;background:#525252;"></div><span class="t" style="left:15px;top:1130px;font-size:14px;color:#f0f0f0;transform:scaleX(0.936);">Page 4 of 4</span><span class="t" style="left:105.9px;top:1130px;font-size:14px;color:#f0f0f0;transform:scaleX(0.952);">22 words</span><svg class="b" style="left:183.5px;top:1128.5px;" width="19" height="19" viewBox="0 0 19 19"><path d="M1.5 2 H7 Q9.3 2 9.3 4.3 V15.5 Q9.3 13.5 7 13.5 H1.5 Z M17.5 8 V2 H12 Q9.5 2 9.5 4.3" fill="none" stroke="#eee" stroke-width="1.3"/><path d="M10.5 13.5 L13 16.5 L18 10.5" fill="none" stroke="#eee" stroke-width="1.3"/></svg><span class="t" style="left:227.4px;top:1130px;font-size:14px;color:#f0f0f0;transform:scaleX(0.913);">Text Predictions: On</span><svg class="b" style="left:366px;top:1127.5px;" width="20" height="20" viewBox="0 0 20 20"><circle cx="9" cy="3" r="2" fill="none" stroke="#eee" stroke-width="1.2"/><path d="M1.5 6.5 Q9 9.5 16.5 6.5 M9 8.5 V12 M9 12 L5 18.5 M9 12 L11 15" fill="none" stroke="#eee" stroke-width="1.3"/><path d="M12 12 L18.5 18.5 M18.5 12 L12 18.5" stroke="#eee" stroke-width="1.3"/></svg><span class="t" style="left:389px;top:1130px;font-size:14px;color:#fff;font-weight:700;transform:scaleX(0.910);">Accessibility: Investigate</span><svg class="b" style="left:1345px;top:1128px;" width="20" height="19" viewBox="0 0 20 19"><path d="M9 13 H1.5 V1.5 H17.5 V6" fill="none" stroke="#eee" stroke-width="1.3"/><circle cx="13.5" cy="12.5" r="3" fill="none" stroke="#eee" stroke-width="1.6"/><path d="M13.5 7.5 V9 M13.5 16 V17.5 M8.5 12.5 H10 M17 12.5 H18.5 M10 9 L11 10 M16 15 L17 16 M17 9 L16 10 M11 15 L10 16" stroke="#eee" stroke-width="1.4"/></svg><span class="t" style="left:1366.3px;top:1130px;font-size:14px;color:#f0f0f0;transform:scaleX(0.914);">Display Settings</span><svg class="b" style="left:1478.5px;top:1127.5px;" width="19" height="20" viewBox="0 0 19 20"><path d="M1 5 V1.5 H4.5 M14.5 1.5 H18 V5 M18 15 V18.5 H14.5 M4.5 18.5 H1 V15" fill="none" stroke="#eee" stroke-width="1.3"/><path d="M5.5 4.5 H10.5 L13.5 7.5 V15.5 H5.5 Z M10.5 4.5 V7.5 H13.5" fill="none" stroke="#eee" stroke-width="1.2"/></svg><span class="t" style="left:1500px;top:1130px;font-size:14px;color:#f0f0f0;transform:scaleX(0.863);">Focus</span><svg class="b" style="left:1563px;top:1128.5px;" width="19" height="17" viewBox="0 0 19 17"><path d="M9.5 2.5 Q5 0.5 1 2 V14.5 Q5 13 9.5 15 Q14 13 18 14.5 V2 Q14 0.5 9.5 2.5 V15" fill="none" stroke="#eee" stroke-width="1.3"/><path d="M3.5 5 H7 M3.5 7.5 H7 M3.5 10 H7 M12 5 H15.5 M12 7.5 H15.5 M12 10 H15.5" stroke="#eee" stroke-width="1"/></svg><div class="b" style="left:1598px;top:1123px;width:49.7px;height:27px;background:#646464;"></div><svg class="b" style="left:1615px;top:1128px;" width="15" height="18" viewBox="0 0 15 18"><rect x="0.7" y="0.7" width="13.6" height="16.6" fill="none" stroke="#eee" stroke-width="1.3"/><path d="M3 4 H12 M3 6.5 H12 M3 9 H12 M3 11.5 H12 M3 14 H12" stroke="#eee" stroke-width="1.1"/></svg><svg class="b" style="left:1663px;top:1128px;" width="20" height="19" viewBox="0 0 20 19"><path d="M9 16 H1 V1 H15 V7" fill="none" stroke="#eee" stroke-width="1.3"/><path d="M3 4 H13 M3 6.5 H13 M3 9 H8" stroke="#eee" stroke-width="1.1"/><circle cx="13.5" cy="13" r="5" fill="none" stroke="#eee" stroke-width="1.2"/><path d="M8.5 13 H18.5 M13.5 8 Q10.5 13 13.5 18 M13.5 8 Q16.5 13 13.5 18" fill="none" stroke="#eee" stroke-width="0.9"/></svg><div class="b" style="left:1705.5px;top:1136.6px;width:9.5px;height:1.2px;background:#eee;"></div><div class="b" style="left:1721px;top:1136.8px;width:125px;height:1px;background:#cfcfcf;"></div><div class="b" style="left:1781.5px;top:1130px;width:4.5px;height:14.5px;background:#d8d8d8;"></div><div class="b" style="left:1852px;top:1136.6px;width:9.5px;height:1.2px;background:#eee;"></div><div class="b" style="left:1856.2px;top:1132.4px;width:1.2px;height:9.5px;background:#eee;"></div><span class="t" style="left:1878.7px;top:1130px;font-size:14px;color:#f0f0f0;transform:scaleX(0.855);">100%</span></div><div class="win" style="left:0;top:1150px;width:1920px;height:50px;background:#42403e;"><svg class="b" style="left:19.3px;top:14px;" width="21" height="21" viewBox="0 0 21 21"><path d="M0 2.9 L9.2 1.7 V9.2 H0 Z M11.8 1.3 L21 0 V9.2 H11.8 Z M0 11.8 H9.2 V19.3 L0 18.1 Z M11.8 11.8 H21 V21 L11.8 19.7 Z" fill="#fff"/></svg><div class="b" style="left:60px;top:0.4px;width:359.8px;height:49.6px;background:#f2f2f2;"></div><svg class="b" style="left:73px;top:11px;" width="26" height="26" viewBox="0 0 26 26"><circle cx="15" cy="10" r="7.2" fill="none" stroke="#222" stroke-width="1.6"/><path d="M9.8 15.2 L2.5 22.8" stroke="#222" stroke-width="1.8"/></svg><span class="t" style="left:110.3px;top:17px;font-size:18.5px;color:#1f1f1f;">Type here to search</span><div class="b" style="left:325px;top:4.7px;width:90px;height:40px;background:#e3e3e3;border-radius:8px;"></div><svg class="b" style="left:350px;top:8px;" width="40" height="34" viewBox="0 0 40 34"><path d="M14 5 Q14 1.5 17 1.5 H23 Q26 1.5 26 5 V7 H22.5 V5 H17.5 V7 H14 Z" fill="#5a3b1a"/><rect x="1" y="7" width="38" height="25" rx="3" fill="#c8731a"/><rect x="1" y="7" width="38" height="10" rx="3" fill="#e08f2a"/><path d="M1 15 H39 V18 H1 Z" fill="#a85a12"/><rect x="16" y="14" width="8" height="7" rx="1" fill="#f6c83a"/><rect x="18" y="16" width="4" height="2.5" fill="#a87410"/></svg><svg class="b" style="left:437.4px;top:11.9px;" width="25.2" height="25.2" viewBox="0 0 24 24"><rect x="2.6" y="7.2" width="11.8" height="9.6" fill="none" stroke="#fff" stroke-width="1.4"/><path d="M2 3.7 H15 M2 20.3 H15 M20 2.5 V7 M20 9.5 V14.5 M20 17 V21.5" stroke="#fff" stroke-width="1.5" fill="none"/></svg><svg class="b" style="left:497.6px;top:8px;" width="32" height="32" viewBox="0 0 32 32"><path d="M2 5 H12 L14.5 8 H30 V26 H2 Z" fill="#f5b93d"/><path d="M2 10 H30 V26 H2 Z" fill="#fcd463"/><path d="M8 17 H24 V26 H8 Z" fill="#3b8fde"/><path d="M11 21 H21 V26 H11 Z" fill="#fcd463"/><rect x="2" y="25" width="28" height="1.5" fill="#d99a22"/></svg><svg class="b" style="left:560.6px;top:9.3px;" width="30.4" height="30.4" viewBox="0 0 32 32"><circle cx="16" cy="16" r="14.5" fill="#1ed760"/><path d="M8 11.5 Q17 9 25 13.5" fill="none" stroke="#000" stroke-width="2.6" stroke-linecap="round"/><path d="M9 16.5 Q17 14.5 23.5 18" fill="none" stroke="#000" stroke-width="2.2" stroke-linecap="round"/><path d="M10 21 Q16.5 19.5 22 22.3" fill="none" stroke="#000" stroke-width="1.8" stroke-linecap="round"/></svg><svg class="b" style="left:622.4px;top:10.9px;" width="31.3" height="31.3" viewBox="0 0 34 34"><path d="M10 6 L22 1 L33 7 V22 L22 28 L10 22 Z" fill="#1a78d2"/><path d="M10 6 L22 1 L33 7 L22 12 Z" fill="#4fb2f2"/><path d="M10 22 L22 13 L33 22 L22 28 Z" fill="#0f5aa8"/><rect x="0.5" y="8" width="17" height="17" rx="2" fill="#0f64b8"/><text x="9" y="21.5" font-size="13" font-weight="700" font-family="Liberation Sans,sans-serif" fill="#fff" text-anchor="middle">O</text><rect x="13" y="24" width="20" height="9" rx="1.5" fill="#16c8f0"/><text x="23" y="31.3" font-size="7.5" font-weight="700" font-family="Liberation Sans,sans-serif" fill="#0a2a5a" text-anchor="middle">NEW</text></svg><svg class="b" style="left:685.9px;top:11.4px;" width="31.3" height="31.3" viewBox="0 0 34 34"><circle cx="26" cy="7" r="3.2" fill="#5b63d3"/><circle cx="18.5" cy="5.5" r="4.5" fill="#7b83eb"/><path d="M14 11 H31 V21 Q31 26 25 26 H14 Z" fill="#5059c9"/><rect x="1" y="8" width="17" height="17" rx="2" fill="#4b53bc"/><text x="9.5" y="21.5" font-size="13" font-weight="700" font-family="Liberation Sans,sans-serif" fill="#fff" text-anchor="middle">T</text><rect x="8" y="24" width="14" height="8" rx="1.5" fill="#16c8f0"/><circle cx="23.5" cy="24" r="8.5" fill="#e2343f"/></svg><svg class="b" style="left:747px;top:9.3px;" width="30.4" height="30.4" viewBox="0 0 32 32"><circle cx="16" cy="16" r="15" fill="#f4f2ee"/><g stroke-width="3.4" stroke-linecap="round"><path d="M13 8 V14.5" stroke="#36c5f0"/><path d="M8 13 H9" stroke="#36c5f0"/><path d="M17.5 13 H24" stroke="#2eb67d"/><path d="M19 8 V9" stroke="#2eb67d"/><path d="M19 17.5 V24" stroke="#ecb22e"/><path d="M23 19 H24" stroke="#ecb22e"/><path d="M8 19 H14.5" stroke="#e01e5a"/><path d="M13 23 V24" stroke="#e01e5a"/></g></svg><svg class="b" style="left:808.4px;top:8.5px;" width="34" height="34" viewBox="0 0 34 34"><circle cx="16" cy="16" r="14.5" fill="#e33b2e"/><path d="M16 16 L3.5 8.8 A14.5 14.5 0 0 0 10.5 29.4 Z" fill="#2da94f"/><path d="M16 16 L10.5 29.4 A14.5 14.5 0 0 0 29.5 10.5 L16 10.5 Z" fill="#fdd231"/><circle cx="16" cy="16" r="6.6" fill="#fff"/><circle cx="16" cy="16" r="5.2" fill="#4285f4"/><circle cx="24.5" cy="25" r="8.8" fill="#e8e0da"/><path d="M17.5 31 Q18 19 24.5 18.5 Q31 19 31.5 31 Z" fill="#5a3a2a"/><ellipse cx="24.5" cy="24.5" rx="3.2" ry="4" fill="#e8b99a"/><path d="M19 33.5 Q24.5 27 30 33.5 Z" fill="#f3f3f3"/></svg><div class="b" style="left:856.5px;top:0px;width:55.5px;height:50px;background:#676563;"></div><div class="b" style="left:913px;top:0px;width:1px;height:50px;background:#5e5c5a;"></div><svg class="b" style="left:870px;top:8.5px;" width="32" height="32" viewBox="0 0 32 32"><rect x="8" y="2" width="23" height="28" rx="2" fill="#2b7cd3"/><rect x="8" y="2" width="23" height="7.5" fill="#41a5ee"/><rect x="8" y="16.5" width="23" height="7" fill="#185abd"/><rect x="8" y="23" width="23" height="7" fill="#103f91"/><rect x="1" y="8" width="17" height="17" rx="1.5" fill="#185abd"/><text x="9.5" y="21.3" font-size="12.5" font-weight="700" font-family="Liberation Sans,sans-serif" fill="#fff" text-anchor="middle">W</text></svg><svg class="b" style="left:929.8px;top:8.5px;" width="32" height="32" viewBox="0 0 32 32"><rect x="8" y="2" width="23" height="28" rx="2" fill="#21a366"/><rect x="8" y="2" width="11.5" height="7.5" fill="#21a366"/><rect x="19.5" y="2" width="11.5" height="7.5" fill="#33c481"/><rect x="8" y="9.5" width="11.5" height="7" fill="#107c41"/><rect x="19.5" y="9.5" width="11.5" height="7" fill="#21a366"/><rect x="8" y="16.5" width="23" height="7" fill="#107c41"/><rect x="8" y="23" width="23" height="7" fill="#185c37"/><rect x="1" y="8" width="17" height="17" rx="1.5" fill="#107c41"/><text x="9.5" y="21.3" font-size="12.5" font-weight="700" font-family="Liberation Sans,sans-serif" fill="#fff" text-anchor="middle">X</text></svg><div class="b" style="left:489px;top:47px;width:50.7px;height:3px;background:#7fd9d2;"></div><div class="b" style="left:613px;top:47px;width:50px;height:3px;background:#7fd9d2;"></div><div class="b" style="left:675px;top:47px;width:51px;height:3px;background:#7fd9d2;"></div><div class="b" style="left:799.5px;top:47px;width:50.5px;height:3px;background:#7fd9d2;"></div><div class="b" style="left:856.5px;top:47px;width:55.5px;height:3px;background:#7fd9d2;"></div><div class="b" style="left:656px;top:47px;width:7px;height:3px;background:#5f8f8b;"></div><svg class="b" style="left:1421px;top:13px;" width="33" height="24" viewBox="0 0 33 24"><path d="M2 9 H20 Q25 9 25 5.5 Q25 2 21.5 2 Q18.5 2 18.5 5" fill="none" stroke="#8fb6e8" stroke-width="2.6" stroke-linecap="round"/><path d="M2 14.5 H26 Q30.5 14.5 30.5 18.5 Q30.5 22 27 22 Q24 22 24 19" fill="none" stroke="#6f9fe0" stroke-width="2.6" stroke-linecap="round"/><path d="M8 4 H14 M6 19.5 H18" stroke="#a9c8ee" stroke-width="2.2" stroke-linecap="round"/></svg><span class="t" style="left:1463.6px;top:18px;font-size:17.5px;color:#fff;transform:scaleX(1.022);">High winds soon</span><svg class="b" style="left:1626px;top:20px;" width="17" height="10" viewBox="0 0 17 10"><path d="M1 9 L8.5 1.5 L16 9" fill="none" stroke="#fff" stroke-width="1.4"/></svg><svg class="b" style="left:1653px;top:15px;" width="24" height="19" viewBox="0 0 24 19"><path d="M5 14 Q0.5 14 1 10 Q1.5 6.5 5.5 7 Q7 2 12 3 Q15 3.5 16 6.5 Q20.5 6 21 10 Q21 14 17 14 Z" fill="#1e8fe8"/><circle cx="16" cy="12.5" r="5.5" fill="#1553b5"/><text x="16" y="16" font-size="8.5" font-weight="700" font-family="Liberation Serif,serif" fill="#fff" text-anchor="middle">i</text></svg><svg class="b" style="left:1684px;top:15px;" width="22" height="20" viewBox="0 0 22 20"><path d="M1.5 7 H5 L10 2.5 V17.5 L5 13 H1.5 Z" fill="none" stroke="#fff" stroke-width="1.3"/><path d="M13 7 Q15 10 13 13" fill="none" stroke="#fff" stroke-width="1.2"/><path d="M15.5 4.5 Q19 10 15.5 15.5" fill="none" stroke="#bbb" stroke-width="1.1"/><path d="M18 2.5 Q22.5 10 18 17.5" fill="none" stroke="#888" stroke-width="1"/></svg><svg class="b" style="left:1714px;top:17px;" width="23" height="16" viewBox="0 0 23 16"><path d="M1 4.5 H4 M2.5 2.5 V6.5" stroke="#fff" stroke-width="1.2"/><rect x="5" y="4" width="15" height="9" fill="#fff" stroke="#fff" stroke-width="1.2"/><rect x="21" y="6.5" width="1.6" height="4" fill="#fff"/><path d="M3 3 Q3 1 5 1" fill="none" stroke="#fff" stroke-width="1"/></svg><svg class="b" style="left:1746px;top:15px;" width="20" height="20" viewBox="0 0 20 20"><circle cx="17" cy="17" r="1.8" fill="#fff"/><path d="M11 18 A7 7 0 0 1 18 11" fill="none" stroke="#fff" stroke-width="1.5"/><path d="M6 18 A12 12 0 0 1 18 6" fill="none" stroke="#ccc" stroke-width="1.4"/><path d="M1 18 A17 17 0 0 1 18 1" fill="none" stroke="#999" stroke-width="1.3"/></svg><span class="t" style="left:1786px;top:7px;font-size:14px;color:#fff;transform:scaleX(0.990);">4:12 PM</span><span class="t" style="left:1778px;top:30px;font-size:14px;color:#fff;transform:scaleX(1.084);">4/16/2024</span><svg class="b" style="left:1866px;top:13px;" width="36" height="32" viewBox="0 0 36 32"><path d="M3 2 H23 V18 H8 L3 22.5 Z" fill="#fff"/><path d="M6 6.5 H20 M6 10 H20 M6 13.5 H15" stroke="#3e3c3a" stroke-width="1.3"/><circle cx="23" cy="21" r="9.5" fill="#3e3c3a" stroke="#fff" stroke-width="1.2"/><text x="23" y="26" font-size="13.5" font-family="Liberation Sans,sans-serif" fill="#fff" text-anchor="middle">22</text></svg><div class="b" style="left:1913.7px;top:0px;width:1px;height:50px;background:#8a8886;"></div></div><div class="win" style="left:1920px;top:0;width:1920px;height:1040px;background:#fff;"><div class="b" style="left:0px;top:0px;width:1920px;height:56px;background:#000;"></div><div class="b" style="left:6px;top:6.3px;width:27.5px;height:27.2px;background:#2a2a2a;border-radius:8px;"></div><svg class="b" style="left:15.5px;top:17.9px;" width="8.4" height="5.2" viewBox="0 0 8.4 5.2"><path d="M1 1 L4.2 4.2 L7.4 1" fill="none" stroke="#fff" stroke-width="1.5"/></svg><span class="t" style="left:48px;top:14px;font-size:13px;color:#21b5e8;font-weight:700;transform:scaleX(0.980);">X</span><span class="t" style="left:56px;top:14px;font-size:13px;color:#1a6fd0;font-weight:700;transform:scaleX(1.016);">M</span><div class="b" style="left:72px;top:8px;width:167px;height:25px;overflow:hidden;-webkit-mask-image:linear-gradient(90deg,#000 85%,transparent);mask-image:linear-gradient(90deg,#000 85%,transparent);"><span class="t" style="left:0.4px;top:6px;font-size:14.5px;color:#fff;transform:scaleX(0.799);">Distribute Survey | Qualtrics Exp</span></div><svg class="b" style="left:251px;top:15.5px;" width="10" height="10" viewBox="0 0 10 10"><path d="M1 1 L9 9 M9 1 L1 9" stroke="#fff" stroke-width="1.5"/></svg><div class="b" style="left:277.7px;top:6.3px;width:232.3px;height:33.7px;background:#2d2d2d;border-radius:10px 10px 0 0;"></div><svg class="b" style="left:267.7px;top:30px;" width="10" height="10" viewBox="0 0 10 10"><path d="M10 0 V10 H0 Q10 10 10 0 Z" fill="#2d2d2d"/></svg><svg class="b" style="left:510px;top:30px;" width="10" height="10" viewBox="0 0 10 10"><path d="M0 0 V10 H10 Q0 10 0 0 Z" fill="#2d2d2d"/></svg><span class="t" style="left:286px;top:14px;font-size:13px;color:#21b5e8;font-weight:700;transform:scaleX(0.980);">X</span><span class="t" style="left:294px;top:14px;font-size:13px;color:#1a6fd0;font-weight:700;transform:scaleX(1.016);">M</span><div class="b" style="left:310px;top:8px;width:168px;height:25px;overflow:hidden;-webkit-mask-image:linear-gradient(90deg,#000 85%,transparent);mask-image:linear-gradient(90deg,#000 85%,transparent);"><span class="t" style="left:0.4px;top:6px;font-size:14.5px;color:#fff;transform:scaleX(0.793);">Preview - Qualtrics Survey | Qua</span></div><svg class="b" style="left:489px;top:15.5px;" width="10" height="10" viewBox="0 0 10 10"><path d="M1 1 L9 9 M9 1 L1 9" stroke="#fff" stroke-width="1.5"/></svg><svg class="b" style="left:524px;top:15px;" width="11" height="11" viewBox="0 0 11 11"><path d="M5.5 0 V11 M0 5.5 H11" stroke="#8a8a8a" stroke-width="1.5"/></svg><div class="b" style="left:1800px;top:19.5px;width:11px;height:1px;background:#9a9a9a;"></div><svg class="b" style="left:1846px;top:14px;" width="11" height="11" viewBox="0 0 11 11"><rect x="0.5" y="2.5" width="8" height="8" rx="1" fill="none" stroke="#9a9a9a" stroke-width="1"/><path d="M2.5 2.5 V1.5 Q2.5 0.5 3.5 0.5 H9.5 Q10.5 0.5 10.5 1.5 V7.5 Q10.5 8.5 9.5 8.5 H8.5" fill="none" stroke="#9a9a9a" stroke-width="1"/></svg><svg class="b" style="left:1891.5px;top:14.5px;" width="11" height="11" viewBox="0 0 11 11"><path d="M0.5 0.5 L10.5 10.5 M10.5 0.5 L0.5 10.5" stroke="#9a9a9a" stroke-width="1"/></svg><div class="b" style="left:0px;top:40px;width:1920px;height:47px;background:#2d2d2d;border-radius:9px 9px 0 0;"></div><div class="b" style="left:0px;top:86px;width:1920px;height:1px;background:#1c1c1c;"></div><svg class="b" style="left:15px;top:55px;" width="16" height="16" viewBox="0 0 16 16"><path d="M14.5 8 H2.5 M7.5 2.5 L2 8 L7.5 13.5" fill="none" stroke="#6e6e6e" stroke-width="1.7"/></svg><svg class="b" style="left:50px;top:55px;" width="16" height="16" viewBox="0 0 16 16"><path d="M1.5 8 H13.5 M8.5 2.5 L14 8 L8.5 13.5" fill="none" stroke="#6e6e6e" stroke-width="1.7"/></svg><svg class="b" style="left:85.5px;top:54.5px;" width="17" height="17" viewBox="0 0 17 17"><path d="M14 5 A6.3 6.3 0 1 0 14.8 10.5" fill="none" stroke="#e8e8e8" stroke-width="1.8"/><path d="M15.2 1.5 V6.5 H10.2 Z" fill="#e8e8e8"/></svg><div class="b" style="left:120.5px;top:46px;width:1625.2px;height:34px;background:#3d3d3d;border-radius:17px;"></div><div class="b" style="left:126px;top:51.8px;width:23px;height:23px;background:#4d4d4d;border-radius:50%;"></div><svg class="b" style="left:129px;top:55px;" width="16" height="16" viewBox="0 0 16 16"><path d="M1.5 4.5 H8 M12.5 11.5 H14.5 M1.5 11.5 H5" stroke="#eee" stroke-width="1.7"/><circle cx="11" cy="4.5" r="2.2" fill="none" stroke="#eee" stroke-width="1.6"/><circle cx="8.2" cy="11.5" r="2.2" fill="none" stroke="#eee" stroke-width="1.6"/></svg><span class="t" style="left:157.6px;top:54px;font-size:16.5px;color:#fff;transform:scaleX(0.821);">pacificresearch.qualtrics.com</span><span class="t" style="left:332.8px;top:54px;font-size:16.5px;color:#b0b0b0;transform:scaleX(0.834);">/jfe/preview/previewId/8e7915d0-3184-491f-be92-bc2a2c54b6b1/SV_57SePKbS35aO6Wi?Q_CHL=preview&amp;Q_SurveyVersionID=current</span><svg class="b" style="left:1713px;top:54.5px;" width="18" height="17" viewBox="0 0 18 17"><path d="M9 1.6 L11.2 6.3 L16.4 6.9 L12.5 10.3 L13.6 15.4 L9 12.8 L4.4 15.4 L5.5 10.3 L1.6 6.9 L6.8 6.3 Z" fill="none" stroke="#c8c8c8" stroke-width="1.5" stroke-linejoin="round"/></svg><div class="b" style="left:1764px;top:55px;width:16.3px;height:15.8px;background:#11866f;border-radius:50% 50% 50% 12%;"></div><svg class="b" style="left:1764px;top:55px;" width="16.3" height="15.8" viewBox="0 0 16.3 15.8"><path d="M12.6 5.2 A5 5 0 1 0 13.4 8.2 H8.6" fill="none" stroke="#fff" stroke-width="1.7"/></svg><svg class="b" style="left:1800px;top:53.5px;" width="18" height="18" viewBox="0 0 18 18"><path d="M1.5 4.5 H5.8 Q5.6 1 7.8 1 Q10 1 9.8 4.5 H14 V8 Q17 7.6 17 9.6 Q17 11.6 14 11.2 V16 H1.5 V12 Q4.6 12.2 4.6 10.2 Q4.6 8.2 1.5 8.5 Z" fill="none" stroke="#ececec" stroke-width="1.6" stroke-linejoin="round"/></svg><div class="b" style="left:1833.8px;top:55px;width:2.2px;height:15.8px;background:#050505;border-radius:1px;"></div><div class="b" style="left:1852px;top:52.8px;width:20.2px;height:20.2px;background:#ece6e0;border-radius:50%;overflow:hidden;"><div class="b" style="left:4.5px;top:2px;width:12px;height:20px;background:#5b3a2b;border-radius:6px 6px 0 0;"></div><div class="b" style="left:7px;top:5px;width:7px;height:8.5px;background:#e6b798;border-radius:50%;"></div><div class="b" style="left:4.5px;top:14.5px;width:12px;height:8px;background:#f1f1f1;border-radius:5px 5px 0 0;"></div></div><div class="b" style="left:1896.2px;top:56px;width:3.6px;height:3.6px;background:#e8e8e8;border-radius:50%;"></div><div class="b" style="left:1896.2px;top:61.3px;width:3.6px;height:3.6px;background:#e8e8e8;border-radius:50%;"></div><div class="b" style="left:1896.2px;top:66.6px;width:3.6px;height:3.6px;background:#e8e8e8;border-radius:50%;"></div><div class="b" style="left:0px;top:87px;width:1920px;height:85px;background:#fff;"></div><div class="b" style="left:0px;top:171.5px;width:1920px;height:1.2px;background:#e9e9e9;"></div><div class="b" style="left:23.9px;top:111px;width:131.9px;height:35.9px;background:#0b6ed0;border-radius:3px;"></div><span class="t" style="left:45.4px;top:121px;font-size:15px;color:#fff;transform:scaleX(0.908);-webkit-text-stroke:0.3px #fff;">Restart Survey</span><div class="b" style="left:171.8px;top:111px;width:143.2px;height:35.9px;background:#fff;border:1.3px solid #0b6ed0;border-radius:3px;box-sizing:border-box;"></div><span class="t" style="left:193.7px;top:121px;font-size:15px;color:#0b6ed0;transform:scaleX(0.917);">Place Bookmark</span><div class="b" style="left:339px;top:111px;width:1px;height:36px;background:#d9d9d9;"></div><span class="t" style="left:378px;top:121px;font-size:15px;color:#404040;transform:scaleX(0.897);">Tools</span><svg class="b" style="left:469.3px;top:126px;" width="8" height="5" viewBox="0 0 8 5"><path d="M1 1 L4 4 L7 1" fill="none" stroke="#444" stroke-width="1.2"/></svg><div class="b" style="left:508px;top:111px;width:58px;height:35.9px;background:#e8e9e9;"></div><svg class="b" style="left:530px;top:119px;" width="14" height="20" viewBox="0 0 14 20"><rect x="1.2" y="1.2" width="11.6" height="17.6" rx="2.2" fill="none" stroke="#222" stroke-width="1.8"/><path d="M4.5 15 H9.5" stroke="#222" stroke-width="1.6"/></svg><div class="b" style="left:1734px;top:111px;width:162px;height:35.9px;background:#0b6ed0;border-radius:3px;"></div><svg class="b" style="left:1755px;top:119px;" width="22" height="20" viewBox="0 0 22 20"><circle cx="5" cy="10" r="3" fill="none" stroke="#fff" stroke-width="1.7"/><circle cx="16.5" cy="4.2" r="3" fill="none" stroke="#fff" stroke-width="1.7"/><circle cx="16.5" cy="15.8" r="3" fill="none" stroke="#fff" stroke-width="1.7"/><path d="M7.7 8.7 L13.8 5.5 M7.7 11.3 L13.8 14.5" stroke="#fff" stroke-width="1.7"/></svg><span class="t" style="left:1786.7px;top:121px;font-size:15px;color:#fff;transform:scaleX(0.909);-webkit-text-stroke:0.3px #fff;">Share Preview</span><div class="b" style="left:24px;top:195px;width:1468px;height:845px;background:#d9d9d9;"></div><div class="b" style="left:372.7px;top:365px;width:770.2px;height:675px;background:#fff;"></div><div class="b" style="left:1492px;top:195px;width:17px;height:845px;background:#f1f1f1;"></div><svg class="b" style="left:1496.5px;top:201px;" width="8" height="6" viewBox="0 0 8 6"><path d="M4 1 L7.5 5 H0.5 Z" fill="#505050"/></svg><div class="b" style="left:1494px;top:213px;width:13px;height:487px;background:#c1c1c1;"></div><svg class="b" style="left:1496.5px;top:1027.5px;" width="8" height="6" viewBox="0 0 8 6"><path d="M4 5 L7.5 1 H0.5 Z" fill="#505050"/></svg><svg class="b" style="left:741.7px;top:278px;" width="32" height="34" viewBox="0 0 32 34"><path d="M13 2 L20 0 L19 9 L26 12 L14 34 L12 22 Z" fill="#2a72c4"/><path d="M6 10 L13 4 L12 20 Z" fill="#9cc8ee"/><path d="M15 16 L22 11 L17 22 Z" fill="#3aa64a"/></svg><span class="t" style="left:728.7px;top:314px;font-size:16.0px;color:#4a4a4a;font-weight:700;transform:scaleX(0.923);">PACIFIC</span><span class="t" style="left:728.7px;top:326px;font-size:13.0px;color:#4a4a4a;font-weight:700;transform:scaleX(0.811);">Research &amp;</span><span class="t" style="left:728.7px;top:338px;font-size:13.0px;color:#4a4a4a;font-weight:700;transform:scaleX(0.882);">Evaluation</span><span class="t" style="left:388.2px;top:385px;font-size:24px;color:#8c8c8c;transform:scaleX(1.099);">We want to better understand how well the EIC was designed</span><span class="t" style="left:388.2px;top:421px;font-size:24px;color:#8c8c8c;transform:scaleX(1.107);">and ways we can make it more engaging for visitors. Please</span><span class="t" style="left:388.2px;top:457px;font-size:24px;color:#8c8c8c;transform:scaleX(1.114);">rate how easy or difficult you found the following things to be.</span><span class="t" style="left:603.9px;top:546px;font-size:14px;color:#8c8c8c;">1 - Very</span><span class="t" style="left:605.2px;top:568px;font-size:14px;color:#8c8c8c;">Difficult</span><span class="t" style="left:730.8px;top:524px;font-size:14px;color:#8c8c8c;">2 -</span><span class="t" style="left:705.9px;top:546px;font-size:14px;color:#8c8c8c;">Somewhat</span><span class="t" style="left:716.2px;top:568px;font-size:14px;color:#8c8c8c;">Difficult</span><span class="t" style="left:816.3px;top:524px;font-size:14px;color:#8c8c8c;">3 - Neither</span><span class="t" style="left:821.4px;top:546px;font-size:14px;color:#8c8c8c;">Easy nor</span><span class="t" style="left:826.2px;top:568px;font-size:14px;color:#8c8c8c;">Difficult</span><span class="t" style="left:951.8px;top:524px;font-size:14px;color:#8c8c8c;">4 -</span><span class="t" style="left:926.9px;top:546px;font-size:14px;color:#8c8c8c;">Somewhat</span><span class="t" style="left:944.4px;top:568px;font-size:14px;color:#8c8c8c;">Easy</span><span class="t" style="left:1045.9px;top:546px;font-size:14px;color:#8c8c8c;">5 - Very</span><span class="t" style="left:1054.4px;top:568px;font-size:14px;color:#8c8c8c;">Easy</span><span class="t" style="left:408px;top:605px;font-size:14px;color:#8c8c8c;">Understanding how to</span><span class="t" style="left:408px;top:627px;font-size:14px;color:#8c8c8c;">navigate the exhibit</span><span class="t" style="left:408px;top:649px;font-size:14px;color:#8c8c8c;">hall.</span><div class="b" style="left:617px;top:623px;width:22px;height:22px;background:#fff;border:2px solid #777;border-radius:50%;box-sizing:border-box;"></div><div class="b" style="left:728px;top:623px;width:22px;height:22px;background:#fff;border:2px solid #777;border-radius:50%;box-sizing:border-box;"></div><div class="b" style="left:838px;top:623px;width:22px;height:22px;background:#fff;border:2px solid #777;border-radius:50%;box-sizing:border-box;"></div><div class="b" style="left:949px;top:623px;width:22px;height:22px;background:#fff;border:2px solid #777;border-radius:50%;box-sizing:border-box;"></div><div class="b" style="left:1059px;top:623px;width:22px;height:22px;background:#fff;border:2px solid #777;border-radius:50%;box-sizing:border-box;"></div><span class="t" style="left:408px;top:686px;font-size:14px;color:#8c8c8c;">Reading and making</span><span class="t" style="left:408px;top:708px;font-size:14px;color:#8c8c8c;">sense of information</span><span class="t" style="left:408px;top:730px;font-size:14px;color:#8c8c8c;">on the text labels.</span><div class="b" style="left:617px;top:704px;width:22px;height:22px;background:#fff;border:2px solid #777;border-radius:50%;box-sizing:border-box;"></div><div class="b" style="left:728px;top:704px;width:22px;height:22px;background:#fff;border:2px solid #777;border-radius:50%;box-sizing:border-box;"></div><div class="b" style="left:838px;top:704px;width:22px;height:22px;background:#fff;border:2px solid #777;border-radius:50%;box-sizing:border-box;"></div><div class="b" style="left:949px;top:704px;width:22px;height:22px;background:#fff;border:2px solid #777;border-radius:50%;box-sizing:border-box;"></div><div class="b" style="left:1059px;top:704px;width:22px;height:22px;background:#fff;border:2px solid #777;border-radius:50%;box-sizing:border-box;"></div><span class="t" style="left:408px;top:771px;font-size:14px;color:#8c8c8c;">Reading and making</span><span class="t" style="left:408px;top:793px;font-size:14px;color:#8c8c8c;">sense of data</span><span class="t" style="left:408px;top:815px;font-size:14px;color:#8c8c8c;">visualizations on the</span><span class="t" style="left:408px;top:837px;font-size:14px;color:#8c8c8c;">large video wall.</span><div class="b" style="left:617px;top:800px;width:22px;height:22px;background:#fff;border:2px solid #777;border-radius:50%;box-sizing:border-box;"></div><div class="b" style="left:728px;top:800px;width:22px;height:22px;background:#fff;border:2px solid #777;border-radius:50%;box-sizing:border-box;"></div><div class="b" style="left:838px;top:800px;width:22px;height:22px;background:#fff;border:2px solid #777;border-radius:50%;box-sizing:border-box;"></div><div class="b" style="left:949px;top:800px;width:22px;height:22px;background:#fff;border:2px solid #777;border-radius:50%;box-sizing:border-box;"></div><div class="b" style="left:1059px;top:800px;width:22px;height:22px;background:#fff;border:2px solid #777;border-radius:50%;box-sizing:border-box;"></div><span class="t" style="left:408px;top:874px;font-size:14px;color:#8c8c8c;">Reading and making</span><span class="t" style="left:408px;top:896px;font-size:14px;color:#8c8c8c;">sense of information</span><span class="t" style="left:408px;top:918px;font-size:14px;color:#8c8c8c;">shared in videos.</span><div class="b" style="left:617px;top:892.5px;width:22px;height:22px;background:#fff;border:2px solid #777;border-radius:50%;box-sizing:border-box;"></div><div class="b" style="left:728px;top:892.5px;width:22px;height:22px;background:#fff;border:2px solid #777;border-radius:50%;box-sizing:border-box;"></div><div class="b" style="left:838px;top:892.5px;width:22px;height:22px;background:#fff;border:2px solid #777;border-radius:50%;box-sizing:border-box;"></div><div class="b" style="left:949px;top:892.5px;width:22px;height:22px;background:#fff;border:2px solid #777;border-radius:50%;box-sizing:border-box;"></div><div class="b" style="left:1059px;top:892.5px;width:22px;height:22px;background:#fff;border:2px solid #777;border-radius:50%;box-sizing:border-box;"></div><span class="t" style="left:408px;top:957px;font-size:14px;color:#8c8c8c;">Understanding how to</span><span class="t" style="left:408px;top:979px;font-size:14px;color:#8c8c8c;">interact with</span><span class="t" style="left:408px;top:1001px;font-size:14px;color:#8c8c8c;">individual parts of the</span><span class="t" style="left:408px;top:1023px;font-size:14px;color:#8c8c8c;">exhibition.</span><div class="b" style="left:617px;top:986.6px;width:22px;height:22px;background:#fff;border:2px solid #777;border-radius:50%;box-sizing:border-box;"></div><div class="b" style="left:728px;top:986.6px;width:22px;height:22px;background:#fff;border:2px solid #777;border-radius:50%;box-sizing:border-box;"></div><div class="b" style="left:838px;top:986.6px;width:22px;height:22px;background:#fff;border:2px solid #777;border-radius:50%;box-sizing:border-box;"></div><div class="b" style="left:949px;top:986.6px;width:22px;height:22px;background:#fff;border:2px solid #777;border-radius:50%;box-sizing:border-box;"></div><div class="b" style="left:1059px;top:986.6px;width:22px;height:22px;background:#fff;border:2px solid #777;border-radius:50%;box-sizing:border-box;"></div><div class="b" style="left:1533px;top:281.7px;width:5px;height:27.4px;background:#252b33;border-radius:2px;"></div><div class="b" style="left:1533px;top:337.7px;width:5px;height:47px;background:#252b33;border-radius:2px;"></div><div class="b" style="left:1533px;top:397px;width:5px;height:47px;background:#252b33;border-radius:2px;"></div><div class="b" style="left:1888.5px;top:337.8px;width:5.5px;height:79.5px;background:#252b33;border-radius:2px;"></div><div class="b" style="left:1536px;top:195px;width:355.4px;height:780.8px;background:#252b33;border-radius:30px 30px 27px 27px;"></div><div class="b" style="left:1543.7px;top:226.6px;width:339.6px;height:735.2px;background:#fff;border-radius:15px;"></div><div class="b" style="left:1682.7px;top:211.1px;width:40.4px;height:6.2px;background:#15181d;border-radius:3.1px;"></div><div class="b" style="left:1734px;top:209px;width:10.4px;height:10.4px;background:#252b33;border-radius:50%;border:1.6px solid #15181d;box-sizing:border-box;"></div><span class="t" style="left:1559.1px;top:238px;font-size:13px;color:#111;font-weight:700;transform:scaleX(1.020);">12:29</span><svg class="b" style="left:1826px;top:239.2px;" width="13" height="10" viewBox="0 0 13 10"><rect x="0" y="7" width="2" height="3" fill="#111"/><rect x="3" y="5" width="2" height="5" fill="#111"/><rect x="6" y="2.5" width="2" height="7.5" fill="#111"/><rect x="9.5" y="0" width="1.6" height="10" fill="#bbb"/></svg><div class="b" style="left:1850px;top:240.9px;width:16.5px;height:7px;background:#111;border-radius:2px;"></div><div class="b" style="left:1866.5px;top:243px;width:1.3px;height:2.8px;background:#111;"></div><div class="b" style="left:1543.5px;top:260px;width:339.5px;height:90px;background:#d9d9d9;"></div><svg class="b" style="left:1697.8px;top:271.9px;" width="30.4" height="32.3" viewBox="0 0 32 34"><path d="M13 2 L20 0 L19 9 L26 12 L14 34 L12 22 Z" fill="#2a72c4"/><path d="M6 10 L13 4 L12 20 Z" fill="#9cc8ee"/><path d="M15 16 L22 11 L17 22 Z" fill="#3aa64a"/></svg><span class="t" style="left:1685.5px;top:305px;font-size:15.2px;color:#4a4a4a;font-weight:700;transform:scaleX(0.923);">PACIFIC</span><span class="t" style="left:1685.5px;top:318px;font-size:12.35px;color:#4a4a4a;font-weight:700;transform:scaleX(0.811);">Research &amp;</span><span class="t" style="left:1685.5px;top:330px;font-size:12.35px;color:#4a4a4a;font-weight:700;transform:scaleX(0.882);">Evaluation</span><span class="t" style="left:1564px;top:374px;font-size:19px;color:#8c8c8c;transform:scaleX(1.145);">We want to better understand</span><span class="t" style="left:1564px;top:403px;font-size:19px;color:#8c8c8c;transform:scaleX(1.103);">how well the EIC was designed</span><span class="t" style="left:1564px;top:432px;font-size:19px;color:#8c8c8c;transform:scaleX(1.119);">and ways we can make it more</span><span class="t" style="left:1564px;top:461px;font-size:19px;color:#8c8c8c;transform:scaleX(1.098);">engaging for visitors. Please</span><span class="t" style="left:1564px;top:490px;font-size:19px;color:#8c8c8c;transform:scaleX(1.165);">rate how easy or difficult you</span><span class="t" style="left:1564px;top:519px;font-size:19px;color:#8c8c8c;transform:scaleX(1.146);">found the following things to</span><span class="t" style="left:1564px;top:548px;font-size:19px;color:#8c8c8c;">be.</span><span class="t" style="left:1585px;top:616px;font-size:13.5px;color:#8c8c8c;">Understanding how to navigate</span><span class="t" style="left:1585px;top:638px;font-size:13.5px;color:#8c8c8c;">the exhibit hall.</span><svg class="b" style="left:1822px;top:634px;" width="24" height="14" viewBox="0 0 24 14"><path d="M2 12 L12 2 L22 12" fill="none" stroke="#666" stroke-width="2"/></svg><div class="b" style="left:1564px;top:686px;width:298.7px;height:48px;background:#ededed;"></div><div class="b" style="left:1578px;top:700px;width:20px;height:20px;background:#fff;border:2px solid #777;border-radius:50%;box-sizing:border-box;"></div><span class="t" style="left:1612px;top:704px;font-size:13.5px;color:#8c8c8c;">1 - Very Difficult</span><div class="b" style="left:1564px;top:740px;width:298.7px;height:48px;background:#ededed;"></div><div class="b" style="left:1578px;top:754px;width:20px;height:20px;background:#fff;border:2px solid #777;border-radius:50%;box-sizing:border-box;"></div><span class="t" style="left:1612px;top:758px;font-size:13.5px;color:#8c8c8c;">2 - Somewhat Difficult</span><div class="b" style="left:1564px;top:794px;width:298.7px;height:48px;background:#ededed;"></div><div class="b" style="left:1578px;top:808px;width:20px;height:20px;background:#fff;border:2px solid #777;border-radius:50%;box-sizing:border-box;"></div><span class="t" style="left:1612px;top:812px;font-size:13.5px;color:#8c8c8c;">3 - Neither Easy nor Difficult</span><div class="b" style="left:1564px;top:848px;width:298.7px;height:48px;background:#ededed;"></div><div class="b" style="left:1578px;top:862px;width:20px;height:20px;background:#fff;border:2px solid #777;border-radius:50%;box-sizing:border-box;"></div><span class="t" style="left:1612px;top:866px;font-size:13.5px;color:#8c8c8c;">4 - Somewhat Easy</span><div class="b" style="left:1564px;top:902px;width:298.7px;height:48px;background:#ededed;"></div><div class="b" style="left:1578px;top:916px;width:20px;height:20px;background:#fff;border:2px solid #777;border-radius:50%;box-sizing:border-box;"></div><span class="t" style="left:1612px;top:920px;font-size:13.5px;color:#8c8c8c;">5 - Very Easy</span></div><div class="win" style="left:1920px;top:1040px;width:1920px;height:40px;background:#42403e;"><svg class="b" style="left:15.1px;top:12px;" width="17" height="17" viewBox="0 0 17 17"><path d="M0 2.4 L7.5 1.4 V7.5 H0 Z M9.5 1.0 L17 0 V7.5 H9.5 Z M0 9.5 H7.5 V15.6 L0 14.6 Z M9.5 9.5 H17 V17 L9.5 16.0 Z" fill="#fff"/></svg><svg class="b" style="left:60px;top:8px;" width="24" height="24" viewBox="0 0 24 24"><circle cx="14" cy="10" r="7.3" fill="none" stroke="#fff" stroke-width="2.2"/><path d="M9 15.5 L2.5 22" stroke="#fff" stroke-width="2.6"/></svg><svg class="b" style="left:109.3px;top:10.3px;" width="20.4" height="20.4" viewBox="0 0 24 24"><rect x="2.6" y="7.2" width="11.8" height="9.6" fill="none" stroke="#fff" stroke-width="1.4"/><path d="M2 3.7 H15 M2 20.3 H15 M20 2.5 V7 M20 9.5 V14.5 M20 17 V21.5" stroke="#fff" stroke-width="1.5" fill="none"/></svg><svg class="b" style="left:158px;top:7.2px;" width="25.6" height="25.6" viewBox="0 0 32 32"><path d="M2 5 H12 L14.5 8 H30 V26 H2 Z" fill="#f5b93d"/><path d="M2 10 H30 V26 H2 Z" fill="#fcd463"/><path d="M8 17 H24 V26 H8 Z" fill="#3b8fde"/><path d="M11 21 H21 V26 H11 Z" fill="#fcd463"/><rect x="2" y="25" width="28" height="1.5" fill="#d99a22"/></svg><svg class="b" style="left:206.8px;top:8.3px;" width="24.3" height="24.3" viewBox="0 0 32 32"><circle cx="16" cy="16" r="14.5" fill="#1ed760"/><path d="M8 11.5 Q17 9 25 13.5" fill="none" stroke="#000" stroke-width="2.6" stroke-linecap="round"/><path d="M9 16.5 Q17 14.5 23.5 18" fill="none" stroke="#000" stroke-width="2.2" stroke-linecap="round"/><path d="M10 21 Q16.5 19.5 22 22.3" fill="none" stroke="#000" stroke-width="1.8" stroke-linecap="round"/></svg><svg class="b" style="left:254.9px;top:7.4px;" width="27.2" height="27.2" viewBox="0 0 34 34"><path d="M10 6 L22 1 L33 7 V22 L22 28 L10 22 Z" fill="#1a78d2"/><path d="M10 6 L22 1 L33 7 L22 12 Z" fill="#4fb2f2"/><path d="M10 22 L22 13 L33 22 L22 28 Z" fill="#0f5aa8"/><rect x="0.5" y="8" width="17" height="17" rx="2" fill="#0f64b8"/><text x="9" y="21.5" font-size="13" font-weight="700" font-family="Liberation Sans,sans-serif" fill="#fff" text-anchor="middle">O</text><rect x="13" y="24" width="20" height="9" rx="1.5" fill="#16c8f0"/><text x="23" y="31.3" font-size="7.5" font-weight="700" font-family="Liberation Sans,sans-serif" fill="#0a2a5a" text-anchor="middle">NEW</text></svg><svg class="b" style="left:303.9px;top:7.4px;" width="27.2" height="27.2" viewBox="0 0 34 34"><circle cx="26" cy="7" r="3.2" fill="#5b63d3"/><circle cx="18.5" cy="5.5" r="4.5" fill="#7b83eb"/><path d="M14 11 H31 V21 Q31 26 25 26 H14 Z" fill="#5059c9"/><rect x="1" y="8" width="17" height="17" rx="2" fill="#4b53bc"/><text x="9.5" y="21.5" font-size="13" font-weight="700" font-family="Liberation Sans,sans-serif" fill="#fff" text-anchor="middle">T</text><rect x="8" y="24" width="14" height="8" rx="1.5" fill="#16c8f0"/><circle cx="23.5" cy="24" r="8.5" fill="#e2343f"/></svg><svg class="b" style="left:354.3px;top:8.3px;" width="24.3" height="24.3" viewBox="0 0 32 32"><circle cx="16" cy="16" r="15" fill="#f4f2ee"/><g stroke-width="3.4" stroke-linecap="round"><path d="M13 8 V14.5" stroke="#36c5f0"/><path d="M8 13 H9" stroke="#36c5f0"/><path d="M17.5 13 H24" stroke="#2eb67d"/><path d="M19 8 V9" stroke="#2eb67d"/><path d="M19 17.5 V24" stroke="#ecb22e"/><path d="M23 19 H24" stroke="#ecb22e"/><path d="M8 19 H14.5" stroke="#e01e5a"/><path d="M13 23 V24" stroke="#e01e5a"/></g></svg><svg class="b" style="left:402.4px;top:7.9px;" width="27.2" height="27.2" viewBox="0 0 34 34"><circle cx="16" cy="16" r="14.5" fill="#e33b2e"/><path d="M16 16 L3.5 8.8 A14.5 14.5 0 0 0 10.5 29.4 Z" fill="#2da94f"/><path d="M16 16 L10.5 29.4 A14.5 14.5 0 0 0 29.5 10.5 L16 10.5 Z" fill="#fdd231"/><circle cx="16" cy="16" r="6.6" fill="#fff"/><circle cx="16" cy="16" r="5.2" fill="#4285f4"/><circle cx="24.5" cy="25" r="8.8" fill="#e8e0da"/><path d="M17.5 31 Q18 19 24.5 18.5 Q31 19 31.5 31 Z" fill="#5a3a2a"/><ellipse cx="24.5" cy="24.5" rx="3.2" ry="4" fill="#e8b99a"/><path d="M19 33.5 Q24.5 27 30 33.5 Z" fill="#f3f3f3"/></svg><div class="b" style="left:441px;top:0px;width:44.5px;height:40px;background:#676563;"></div><div class="b" style="left:487px;top:0px;width:1px;height:40px;background:#5a5856;"></div><svg class="b" style="left:451.7px;top:7.7px;" width="25.6" height="25.6" viewBox="0 0 32 32"><rect x="8" y="2" width="23" height="28" rx="2" fill="#2b7cd3"/><rect x="8" y="2" width="23" height="7.5" fill="#41a5ee"/><rect x="8" y="16.5" width="23" height="7" fill="#185abd"/><rect x="8" y="23" width="23" height="7" fill="#103f91"/><rect x="1" y="8" width="17" height="17" rx="1.5" fill="#185abd"/><text x="9.5" y="21.3" font-size="12.5" font-weight="700" font-family="Liberation Sans,sans-serif" fill="#fff" text-anchor="middle">W</text></svg><svg class="b" style="left:500.7px;top:7.7px;" width="25.6" height="25.6" viewBox="0 0 32 32"><rect x="8" y="2" width="23" height="28" rx="2" fill="#21a366"/><rect x="8" y="2" width="11.5" height="7.5" fill="#21a366"/><rect x="19.5" y="2" width="11.5" height="7.5" fill="#33c481"/><rect x="8" y="9.5" width="11.5" height="7" fill="#107c41"/><rect x="19.5" y="9.5" width="11.5" height="7" fill="#21a366"/><rect x="8" y="16.5" width="23" height="7" fill="#107c41"/><rect x="8" y="23" width="23" height="7" fill="#185c37"/><rect x="1" y="8" width="17" height="17" rx="1.5" fill="#107c41"/><text x="9.5" y="21.3" font-size="12.5" font-weight="700" font-family="Liberation Sans,sans-serif" fill="#fff" text-anchor="middle">X</text></svg><div class="b" style="left:151px;top:38px;width:40px;height:2px;background:#7fd9d2;"></div><div class="b" style="left:249px;top:38px;width:40px;height:2px;background:#7fd9d2;"></div><div class="b" style="left:298px;top:38px;width:40px;height:2px;background:#7fd9d2;"></div><div class="b" style="left:396px;top:38px;width:40px;height:2px;background:#7fd9d2;"></div><div class="b" style="left:441px;top:38px;width:47.8px;height:2px;background:#7fd9d2;"></div><div class="b" style="left:283px;top:38px;width:6px;height:2px;background:#5f8f8b;"></div><span class="t" style="left:1866.5px;top:5px;font-size:12.5px;color:#fff;transform:scaleX(0.906);">4:12 PM</span><span class="t" style="left:1861.5px;top:23px;font-size:12.5px;color:#fff;transform:scaleX(0.953);">4/16/2024</span></div></div></div><div class="b th" style="left:574px;top:590px;width:780px;height:244px;overflow:hidden;background:#000;"><div class="b" style="left:0;top:0;width:3840px;height:1200px;transform:scale(0.203125);transform-origin:0 0;"><div class="win" style="left:0;top:0;width:1920px;height:1150px;background:#525252;"><svg class="b" style="left:20px;top:20px;" width="20" height="20" viewBox="0 0 20 20"><rect x="5" y="1" width="15" height="18" rx="1.5" fill="#2b7cd3"/><rect x="5" y="1" width="15" height="6" fill="#41a5ee"/><rect x="5" y="13" width="15" height="6" fill="#185abd"/><rect x="0" y="4.5" width="11" height="11" rx="1" fill="#185abd"/><text x="5.5" y="13.6" font-family="Liberation Sans,sans-serif" font-weight="700" font-size="9.5" fill="#a6a6a6" text-anchor="middle">W</text></svg><span class="t" style="left:61px;top:23px;font-size:15.5px;color:#a6a6a6;transform:scaleX(0.937);">AutoSave</span><div class="b" style="left:132.3px;top:17px;width:53px;height:24.7px;background:#6b6b6b;border:1px solid #b5b5b5;border-radius:13px;box-sizing:border-box;"></div><div class="b" style="left:136px;top:21px;width:17.6px;height:17.6px;background:#a6a6a6;border-radius:50%;"></div><span class="t" style="left:160.6px;top:24px;font-size:13.5px;color:#a6a6a6;transform:scaleX(0.924);">Off</span><svg class="b" style="left:201px;top:19px;" width="22" height="22" viewBox="0 0 22 22"><path d="M2.5 2.5 H16.5 L19.5 5.5 V19.5 H2.5 Z" fill="none" stroke="#a6a6a6" stroke-width="1.4"/><path d="M6 2.5 V8.5 H15 V2.5 M6 19.5 V13 H16 V19.5" fill="none" stroke="#a6a6a6" stroke-width="1.4"/></svg><svg class="b" style="left:236px;top:19px;" width="22" height="22" viewBox="0 0 22 22"><path d="M3 3 V9.5 H9.5" fill="none" stroke="#a6a6a6" stroke-width="1.4"/><path d="M3.5 9 C7 3.5 14 2.5 17.5 6.5 C20.5 10 18 14.5 14.5 16.5 L8 20.5" fill="none" stroke="#a6a6a6" stroke-width="1.4"/></svg><svg class="b" style="left:264.3px;top:28px;" width="8" height="5" viewBox="0 0 8 5"><path d="M1 1 L4 4 L7 1" fill="none" stroke="#a6a6a6" stroke-width="1.2"/></svg><svg class="b" style="left:283.5px;top:19px;" width="22" height="22" viewBox="0 0 22 22"><path d="M3 2 V8.5 H9.5" fill="none" stroke="#a6a6a6" stroke-width="1.4"/><path d="M3.3 8.3 A 8.7 8.7 0 1 1 2.3 12" fill="none" stroke="#a6a6a6" stroke-width="1.4"/></svg><svg class="b" style="left:324px;top:25px;" width="11" height="11" viewBox="0 0 11 11"><path d="M1 1.5 H10" stroke="#a6a6a6" stroke-width="1.2"/><path d="M1.5 5 L5.5 9 L9.5 5" fill="none" stroke="#a6a6a6" stroke-width="1.2"/></svg><span class="t" style="left:365.6px;top:23px;font-size:15.5px;color:#a6a6a6;transform:scaleX(0.967);">Document1  -  Word</span><div class="b" style="left:711px;top:10.5px;width:517px;height:38.5px;background:#bebebe;border-radius:4px;"></div><svg class="b" style="left:737px;top:19px;" width="20" height="20" viewBox="0 0 20 20"><circle cx="12" cy="8" r="5.6" fill="none" stroke="#444" stroke-width="1.4"/><path d="M8 12 L2 18" stroke="#444" stroke-width="1.4"/></svg><span class="t" style="left:773.8px;top:21px;font-size:17px;color:#4a4a4a;transform:scaleX(0.919);">Search</span><span class="t" style="left:1573.9px;top:23px;font-size:15.5px;color:#a6a6a6;transform:scaleX(0.934);">Taline Kuyumjian</span><div class="b" style="left:1695px;top:15px;width:30px;height:30px;background:#d2d2d2;border-radius:50%;"></div><svg class="b" style="left:1695px;top:15px;" width="30" height="30" viewBox="0 0 30 30"><circle cx="15" cy="11.5" r="4.2" fill="none" stroke="#555" stroke-width="1.2"/><path d="M7 23 C7 17 23 17 23 23 Z" fill="none" stroke="#555" stroke-width="1.2"/></svg><div class="b" style="left:1764px;top:29.5px;width:13px;height:1.3px;background:#a6a6a6;"></div><svg class="b" style="left:1822px;top:23px;" width="15" height="15" viewBox="0 0 15 15"><rect x="1" y="3.5" width="9.5" height="9.5" rx="1.5" fill="none" stroke="#a6a6a6" stroke-width="1.2"/><path d="M4 3 V2.5 Q4 1 5.5 1 H11.5 Q13.5 1 13.5 3 V9 Q13.5 10.5 12 10.5 H11" fill="none" stroke="#a6a6a6" stroke-width="1.2"/></svg><svg class="b" style="left:1883px;top:23px;" width="14" height="14" viewBox="0 0 14 14"><path d="M1 1 L13 13 M13 1 L1 13" stroke="#a6a6a6" stroke-width="1.3"/></svg><span class="t" style="left:27.4px;top:73px;font-size:16px;color:#fff;transform:scaleX(0.923);">File</span><span class="t" style="left:154.3px;top:73px;font-size:16px;color:#fff;transform:scaleX(1.047);">Insert</span><span class="t" style="left:220.4px;top:73px;font-size:16px;color:#fff;transform:scaleX(1.034);">Draw</span><span class="t" style="left:283.2px;top:73px;font-size:16px;color:#fff;transform:scaleX(1.020);">Design</span><span class="t" style="left:358.3px;top:73px;font-size:16px;color:#fff;transform:scaleX(1.043);">Layout</span><span class="t" style="left:434.2px;top:73px;font-size:16px;color:#fff;">References</span><span class="t" style="left:540.4px;top:73px;font-size:16px;color:#fff;transform:scaleX(1.067);">Mailings</span><span class="t" style="left:628px;top:73px;font-size:16px;color:#fff;transform:scaleX(0.995);">Review</span><span class="t" style="left:705.2px;top:73px;font-size:16px;color:#fff;transform:scaleX(1.041);">View</span><span class="t" style="left:765.2px;top:73px;font-size:16px;color:#fff;transform:scaleX(1.051);">Help</span><span class="t" style="left:84.4px;top:73px;font-size:16px;color:#fff;font-weight:700;transform:scaleX(1.048);">Home</span><div class="b" style="left:84.4px;top:92.4px;width:47.6px;height:2.4px;background:#a9c3f7;border-radius:1px;"></div><div class="b" style="left:1550.8px;top:64.5px;width:123.7px;height:28.7px;background:#c6c6c6;border-radius:4px;border:1px solid #9a9a9a;box-sizing:border-box;"></div><svg class="b" style="left:1560px;top:70px;" width="17" height="16" viewBox="0 0 17 16"><path d="M2 2 H14 V10.5 H7 L4 13.5 V10.5 H2 Z" fill="none" stroke="#444" stroke-width="1.2"/></svg><span class="t" style="left:1580.6px;top:71px;font-size:16px;color:#3b3b3b;transform:scaleX(1.061);">Comments</span><div class="b" style="left:1685.7px;top:64.5px;width:107.7px;height:28.7px;background:#c6c6c6;border-radius:4px;border:1px solid #9a9a9a;box-sizing:border-box;"></div><svg class="b" style="left:1689px;top:68px;" width="22" height="22" viewBox="0 0 22 22"><path d="M3 19 L4.5 13.5 L15 3 Q16.5 1.8 18 3.2 Q19.4 4.8 18.2 6.2 L7.7 16.7 Z M13.5 4.5 L16.7 7.7" fill="none" stroke="#444" stroke-width="1.2"/></svg><span class="t" style="left:1715.8px;top:71px;font-size:16px;color:#3b3b3b;transform:scaleX(1.051);">Editing</span><svg class="b" style="left:1773.5px;top:76.5px;" width="8" height="5" viewBox="0 0 8 5"><path d="M1 1 L4 4 L7 1" fill="none" stroke="#444" stroke-width="1.2"/></svg><div class="b" style="left:1804px;top:64.5px;width:100.8px;height:28.7px;background:#7ea9f1;border-radius:4px;"></div><svg class="b" style="left:1812px;top:70px;" width="17" height="17" viewBox="0 0 17 17"><path d="M7 4 H2.5 V14.5 H13 V11" fill="none" stroke="#1d2d48" stroke-width="1.2"/><path d="M10 2 L14.5 6 L10 10 M14.5 6 H10 Q6 6 6 11" fill="none" stroke="#1d2d48" stroke-width="1.2"/></svg><span class="t" style="left:1834.6px;top:71px;font-size:16px;color:#1d2d48;transform:scaleX(0.984);">Share</span><svg class="b" style="left:1890.5px;top:76.5px;" width="8" height="5" viewBox="0 0 8 5"><path d="M1 1 L4 4 L7 1" fill="none" stroke="#1d2d48" stroke-width="1.2"/></svg><div class="b" style="left:10px;top:98px;width:1900px;height:124px;background:#bfbfbf;border-radius:10px;box-shadow:0 2px 3px rgba(0,0,0,.45);"></div><svg class="b" style="left:36px;top:107px;" width="36" height="40" viewBox="0 0 36 40"><rect x="1.8" y="6.8" width="24.8" height="29" fill="#f7c64f" stroke="#9c7a27" stroke-width="1.1"/><rect x="4.8" y="10.4" width="19" height="22.4" fill="#e3e3e3"/><path d="M6.6 10.4 V6.2 H10.3 Q10.6 1.9 14.3 1.9 Q18 1.9 18.3 6.2 H22 V10.4 Z" fill="#f2f2f2" stroke="#5a5a5a" stroke-width="1.2"/><rect x="18.3" y="16.9" width="16.2" height="21" fill="#e4e4e4" stroke="#646464" stroke-width="1.5"/></svg><span class="t" style="left:34.3px;top:153px;font-size:15.5px;color:#3a3a3a;transform:scaleX(0.840);">Paste</span><svg class="b" style="left:46.4px;top:177px;" width="8" height="5" viewBox="0 0 8 5"><path d="M1 1 L4 4 L7 1" fill="none" stroke="#444" stroke-width="1.2"/></svg><svg class="b" style="left:87px;top:107px;" width="13" height="21" viewBox="0 0 13 21"><path d="M2.5 1 L9 14 M10.5 1 L4 14" stroke="#8f8f8f" stroke-width="1.1" fill="none"/><circle cx="3" cy="16.8" r="2.3" fill="none" stroke="#8f8f8f" stroke-width="1.1"/><circle cx="10" cy="16.8" r="2.3" fill="none" stroke="#8f8f8f" stroke-width="1.1"/></svg><svg class="b" style="left:83px;top:139px;" width="22" height="20" viewBox="0 0 22 20"><path d="M1 1 H8 V15 H1 Z" fill="#d2d2d2" stroke="#8f8f8f" stroke-width="1.1"/><path d="M9 4 H16 L20 8 V19 H9 Z" fill="#d6d6d6" stroke="#8f8f8f" stroke-width="1.1"/><path d="M12 11 H17 M12 14 H17" stroke="#8f8f8f" stroke-width="1"/></svg><svg class="b" style="left:84px;top:171px;" width="21" height="19" viewBox="0 0 21 19"><path d="M14 6 L18 1.5 Q19.5 0.5 20 2 L16.5 8" fill="#e8e8e8" stroke="#555" stroke-width="1.1"/><path d="M8 5 L17 10 L15 13 L6 8 Z" fill="#e8e8e8" stroke="#555" stroke-width="1.1"/><path d="M6 8 L15 13 Q12 17 8.5 18 L1 13 Q4 11 6 8 Z" fill="#f3c969" stroke="#8a6a1c" stroke-width="1.1"/></svg><span class="t" style="left:27.3px;top:203px;font-size:13.5px;color:#3a3a3a;transform:scaleX(0.990);">Clipboard</span><svg class="b" style="left:104.3px;top:205.3px;" width="10" height="10" viewBox="0 0 10 10"><path d="M0.6 4 V0.6 H4 M9.4 5 V9.4 H5" fill="none" stroke="#4a4a4a" stroke-width="1.1"/><path d="M3 3 L8.6 8.6 M8.6 4.5 V8.6 H4.5" fill="none" stroke="#4a4a4a" stroke-width="1.1"/></svg><div class="b" style="left:118px;top:105px;width:1px;height:112px;background:#9c9c9c;"></div><div class="b" style="left:129px;top:112.4px;width:155.5px;height:29.3px;border:1px solid #7d7d7d;border-radius:4px;box-sizing:border-box;"></div><span class="t" style="left:132.4px;top:120px;font-size:16px;color:#262626;transform:scaleX(0.926);">Segoe UI Historic (B</span><svg class="b" style="left:273.5px;top:125.5px;" width="8" height="5" viewBox="0 0 8 5"><path d="M1 1 L4 4 L7 1" fill="none" stroke="#333" stroke-width="1.2"/></svg><div class="b" style="left:287.5px;top:112.4px;width:52.5px;height:29.3px;border:1px solid #7d7d7d;border-radius:4px;box-sizing:border-box;"></div><span class="t" style="left:291px;top:120px;font-size:16px;color:#262626;transform:scaleX(0.815);">10</span><svg class="b" style="left:329.4px;top:125.5px;" width="8" height="5" viewBox="0 0 8 5"><path d="M1 1 L4 4 L7 1" fill="none" stroke="#333" stroke-width="1.2"/></svg><span class="t" style="left:349.4px;top:114px;font-size:21px;color:#565656;transform:scaleX(0.971);">A</span><svg class="b" style="left:361px;top:115px;" width="8" height="6" viewBox="0 0 8 6"><path d="M1 5 L4 1.5 L7 5" fill="none" stroke="#1a6dbd" stroke-width="1.3"/></svg><span class="t" style="left:383.4px;top:119px;font-size:16.5px;color:#565656;transform:scaleX(0.990);">A</span><svg class="b" style="left:392.5px;top:115px;" width="8" height="6" viewBox="0 0 8 6"><path d="M1 1.5 L4 5 L7 1.5" fill="none" stroke="#1a6dbd" stroke-width="1.3"/></svg><div class="b" style="left:407px;top:112.4px;width:1px;height:29.3px;background:#9c9c9c;"></div><span class="t" style="left:416px;top:120px;font-size:16px;color:#565656;transform:scaleX(1.007);">Aa</span><svg class="b" style="left:442.5px;top:125.5px;" width="8" height="5" viewBox="0 0 8 5"><path d="M1 1 L4 4 L7 1" fill="none" stroke="#444" stroke-width="1.2"/></svg><div class="b" style="left:462.1px;top:112.4px;width:1px;height:29.3px;background:#9c9c9c;"></div><span class="t" style="left:470.5px;top:114px;font-size:21px;color:#565656;transform:scaleX(0.921);">A</span><svg class="b" style="left:476.5px;top:124px;" width="15" height="14" viewBox="0 0 15 14"><path d="M1 8 L7 2 L13.5 6.5 L7.5 12.5 Z" fill="#f4d7ec" stroke="#a4207d" stroke-width="1.3"/><path d="M4 5 L10.5 9.5" stroke="#a4207d" stroke-width="1.1"/></svg><span class="t" style="left:139.7px;top:157px;font-size:16.5px;color:#565656;font-weight:700;transform:scaleX(0.764);">B</span><span class="t" style="left:172.7px;top:157px;font-size:17.5px;color:#565656;font-family:'Liberation Serif',serif;font-style:italic;transform:scaleX(1.132);">I</span><span class="t" style="left:201.8px;top:157px;font-size:16.5px;color:#565656;transform:scaleX(0.915);">U</span><div class="b" style="left:201.8px;top:172.8px;width:10.9px;height:1.3px;background:#565656;"></div><svg class="b" style="left:227px;top:165.5px;" width="8" height="5" viewBox="0 0 8 5"><path d="M1 1 L4 4 L7 1" fill="none" stroke="#444" stroke-width="1.2"/></svg><span class="t" style="left:252px;top:158px;font-size:16px;color:#565656;transform:scaleX(0.787);">ab</span><div class="b" style="left:249.4px;top:167.8px;width:19.3px;height:1.2px;background:#565656;"></div><span class="t" style="left:287px;top:157px;font-size:17px;color:#565656;font-weight:700;transform:scaleX(0.899);">x</span><span class="t" style="left:295.6px;top:170px;font-size:9px;color:#1a6dbd;font-weight:700;transform:scaleX(0.919);">2</span><span class="t" style="left:319px;top:157px;font-size:17px;color:#565656;font-weight:700;transform:scaleX(0.899);">x</span><span class="t" style="left:327.4px;top:156px;font-size:9px;color:#1a6dbd;font-weight:700;">2</span><div class="b" style="left:339.9px;top:152px;width:1px;height:29.4px;background:#9c9c9c;"></div><span class="t" style="left:349.5px;top:156px;font-size:23.5px;color:#dcebfa;font-weight:700;-webkit-text-stroke:1.3px #1a6dbd;">A</span><svg class="b" style="left:375.4px;top:165.5px;" width="8" height="5" viewBox="0 0 8 5"><path d="M1 1 L4 4 L7 1" fill="none" stroke="#444" stroke-width="1.2"/></svg><svg class="b" style="left:400px;top:155px;" width="21" height="17" viewBox="0 0 21 17"><path d="M13 1.5 L18 4.5 L10 14 L6 11.5 Z" fill="#ededed" stroke="#555" stroke-width="1.1"/><path d="M6 11.5 L10 14 L7 16 L3 15.5 Z" fill="#555"/></svg><div class="b" style="left:400px;top:172px;width:20px;height:5px;background:#ffff00;"></div><svg class="b" style="left:429px;top:165.5px;" width="8" height="5" viewBox="0 0 8 5"><path d="M1 1 L4 4 L7 1" fill="none" stroke="#444" stroke-width="1.2"/></svg><span class="t" style="left:453px;top:154px;font-size:19px;color:#565656;transform:scaleX(1.223);">A</span><div class="b" style="left:451px;top:172px;width:19.8px;height:5px;background:#ee1111;"></div><svg class="b" style="left:480.5px;top:165.5px;" width="8" height="5" viewBox="0 0 8 5"><path d="M1 1 L4 4 L7 1" fill="none" stroke="#444" stroke-width="1.2"/></svg><span class="t" style="left:289.4px;top:203px;font-size:13.5px;color:#3a3a3a;transform:scaleX(0.892);">Font</span><svg class="b" style="left:490px;top:205.3px;" width="10" height="10" viewBox="0 0 10 10"><path d="M0.6 4 V0.6 H4 M9.4 5 V9.4 H5" fill="none" stroke="#4a4a4a" stroke-width="1.1"/><path d="M3 3 L8.6 8.6 M8.6 4.5 V8.6 H4.5" fill="none" stroke="#4a4a4a" stroke-width="1.1"/></svg><div class="b" style="left:503.8px;top:105px;width:1px;height:112px;background:#9c9c9c;"></div><svg class="b" style="left:520px;top:117px;" width="20" height="19" viewBox="0 0 20 19"><rect x="0" y="0" width="3.9" height="3.7" fill="#1a6dbd"/><path d="M6.4 1.85 H19" stroke="#565656" stroke-width="1.5"/><rect x="0" y="7.55" width="3.9" height="3.7" fill="#1a6dbd"/><path d="M6.4 9.4 H19" stroke="#565656" stroke-width="1.5"/><rect x="0" y="15.1" width="3.9" height="3.7" fill="#1a6dbd"/><path d="M6.4 16.95 H19" stroke="#565656" stroke-width="1.5"/></svg><svg class="b" style="left:549.3px;top:125px;" width="8" height="5" viewBox="0 0 8 5"><path d="M1 1 L4 4 L7 1" fill="none" stroke="#333" stroke-width="1.3"/></svg><svg class="b" style="left:570.8px;top:117px;" width="20" height="21" viewBox="0 0 20 21"><text x="0" y="4.6" font-size="7.6" font-weight="700" font-family="Liberation Sans,sans-serif" fill="#1a6dbd">1</text><path d="M6.4 1.85 H19" stroke="#565656" stroke-width="1.5"/><text x="0" y="12.149999999999999" font-size="7.6" font-weight="700" font-family="Liberation Sans,sans-serif" fill="#1a6dbd">2</text><path d="M6.4 9.4 H19" stroke="#565656" stroke-width="1.5"/><text x="0" y="19.7" font-size="7.6" font-weight="700" font-family="Liberation Sans,sans-serif" fill="#1a6dbd">3</text><path d="M6.4 16.95 H19" stroke="#565656" stroke-width="1.5"/></svg><svg class="b" style="left:600.2px;top:125px;" width="8" height="5" viewBox="0 0 8 5"><path d="M1 1 L4 4 L7 1" fill="none" stroke="#333" stroke-width="1.3"/></svg><svg class="b" style="left:622px;top:117px;" width="20" height="21" viewBox="0 0 20 21"><text x="0" y="5.2" font-size="7" font-weight="700" font-family="Liberation Sans,sans-serif" fill="#1a6dbd">1</text><path d="M6.3 1.85 H18.7" stroke="#565656" stroke-width="1.5"/><text x="3" y="12.4" font-size="7.6" font-weight="700" font-family="Liberation Sans,sans-serif" fill="#1a6dbd">a</text><path d="M10.5 9.4 H18.7" stroke="#565656" stroke-width="1.5"/><text x="9.7" y="19.6" font-size="7.6" font-weight="700" font-family="Liberation Sans,sans-serif" fill="#1a6dbd">i</text><path d="M14 16.95 H18.7" stroke="#565656" stroke-width="1.5"/></svg><svg class="b" style="left:649.4px;top:125px;" width="8" height="5" viewBox="0 0 8 5"><path d="M1 1 L4 4 L7 1" fill="none" stroke="#333" stroke-width="1.3"/></svg><div class="b" style="left:669.1px;top:112.4px;width:1px;height:29.3px;background:#9c9c9c;"></div><svg class="b" style="left:678px;top:117.8px;" width="18" height="18" viewBox="0 0 18 18"><path d="M0 1 H18 M10.5 6.05 H18 M10.5 11.1 H18 M0 16.1 H18" stroke="#565656" stroke-width="1.5"/><path d="M7.5 8.6 H0.8 M3.8 5.4 L0.8 8.6 L3.8 11.8" fill="none" stroke="#1a6dbd" stroke-width="1.4"/></svg><svg class="b" style="left:710px;top:117.8px;" width="18" height="18" viewBox="0 0 18 18"><path d="M0 1 H18 M10.5 6.05 H18 M10.5 11.1 H18 M0 16.1 H18" stroke="#565656" stroke-width="1.5"/><path d="M0.3 8.6 H7 M4 5.4 L7 8.6 L4 11.8" fill="none" stroke="#1a6dbd" stroke-width="1.4"/></svg><div class="b" style="left:735.9px;top:112.4px;width:1px;height:29.3px;background:#9c9c9c;"></div><svg class="b" style="left:743.5px;top:115.5px;" width="22" height="23" viewBox="0 0 22 23"><text x="0" y="9.6" font-size="11.8" font-family="Liberation Sans,sans-serif" fill="#1a6dbd" stroke="#1a6dbd" stroke-width="0.3">A</text><text x="0.6" y="21" font-size="11.5" font-family="Liberation Sans,sans-serif" fill="#565656" stroke="#565656" stroke-width="0.3">Z</text><path d="M16 1.5 V20.5 M12 16.5 L16 21 L20 16.5" fill="none" stroke="#565656" stroke-width="1.4"/></svg><div class="b" style="left:770.9px;top:112.4px;width:1px;height:29.3px;background:#9c9c9c;"></div><span class="t" style="left:782.4px;top:116px;font-size:21px;color:#565656;font-weight:700;transform:scaleX(1.122);">¶</span><div class="b" style="left:515.3px;top:152px;width:29.3px;height:29.4px;background:#d3d3d3;border:1px solid #8a8a8a;border-radius:5px;box-sizing:border-box;"></div><svg class="b" style="left:521.2px;top:157.9px;" width="17.8" height="17.9" viewBox="0 0 17.8 17.9"><path d="M0.0 0.9 H17.8" stroke="#565656" stroke-width="1.6"/><path d="M0.0 5.9 H12.6" stroke="#565656" stroke-width="1.6"/><path d="M0.0 10.9 H17.8" stroke="#565656" stroke-width="1.6"/><path d="M0.0 15.9 H12.6" stroke="#565656" stroke-width="1.6"/></svg><svg class="b" style="left:553.1px;top:157.9px;" width="17.7" height="17.9" viewBox="0 0 17.7 17.9"><path d="M0.0 0.9 H17.7" stroke="#565656" stroke-width="1.6"/><path d="M3.0 5.9 H14.7" stroke="#565656" stroke-width="1.6"/><path d="M0.0 10.9 H17.7" stroke="#565656" stroke-width="1.6"/><path d="M3.0 15.9 H14.7" stroke="#565656" stroke-width="1.6"/></svg><svg class="b" style="left:585.3px;top:157.9px;" width="17.5" height="17.9" viewBox="0 0 17.5 17.9"><path d="M0.0 0.9 H17.5" stroke="#565656" stroke-width="1.6"/><path d="M5.1 5.9 H17.5" stroke="#565656" stroke-width="1.6"/><path d="M0.0 10.9 H17.5" stroke="#565656" stroke-width="1.6"/><path d="M5.1 15.9 H17.5" stroke="#565656" stroke-width="1.6"/></svg><svg class="b" style="left:617.2px;top:157.9px;" width="17.8" height="17.9" viewBox="0 0 17.8 17.9"><path d="M0.0 0.9 H17.8" stroke="#565656" stroke-width="1.6"/><path d="M0.0 5.9 H17.8" stroke="#565656" stroke-width="1.6"/><path d="M0.0 10.9 H17.8" stroke="#565656" stroke-width="1.6"/><path d="M0.0 15.9 H17.8" stroke="#565656" stroke-width="1.6"/></svg><div class="b" style="left:642.7px;top:152px;width:1px;height:29.4px;background:#9c9c9c;"></div><svg class="b" style="left:651px;top:157.9px;" width="21" height="18" viewBox="0 0 21 18"><path d="M9 0.9 H20 M9 5.9 H20 M9 10.9 H20 M9 15.9 H20" stroke="#565656" stroke-width="1.6"/><path d="M3.1 1 V7 M0.4 3.7 L3.1 1 L5.8 3.7 M3.1 10 V17 M0.4 14.3 L3.1 17 L5.8 14.3" fill="none" stroke="#1a6dbd" stroke-width="1.4"/></svg><svg class="b" style="left:678.5px;top:165px;" width="8" height="5" viewBox="0 0 8 5"><path d="M1 1 L4 4 L7 1" fill="none" stroke="#333" stroke-width="1.3"/></svg><div class="b" style="left:697.5px;top:152px;width:1px;height:29.4px;background:#9c9c9c;"></div><svg class="b" style="left:705px;top:156px;" width="22" height="22" viewBox="0 0 22 22"><path d="M4.6 9.3 L11.2 2.6 L16.6 8 L9.9 14.7 Z" fill="#ececec" stroke="#565656" stroke-width="1.3" stroke-linejoin="round"/><path d="M11.2 2.6 Q10.5 0.8 12.2 0.9 Q14 1.2 14 4" fill="none" stroke="#565656" stroke-width="1.2"/><path d="M16.6 6.5 Q20.3 8.5 19.3 13.5 Q17.6 10.5 16.4 9 Z" fill="#1a6dbd"/><rect x="1.7" y="17" width="18.4" height="3.4" fill="#dedede" stroke="#a9a9a9" stroke-width="0.7"/></svg><svg class="b" style="left:735px;top:165px;" width="8" height="5" viewBox="0 0 8 5"><path d="M1 1 L4 4 L7 1" fill="none" stroke="#333" stroke-width="1.3"/></svg><svg class="b" style="left:757.3px;top:157px;" width="18.6" height="19" viewBox="0 0 18.6 19"><rect x="0.7" y="0.7" width="17.2" height="16.6" fill="#d0d0d0" stroke="#565656" stroke-width="1.2" stroke-dasharray="1.2 1.2"/><path d="M9.3 1 V17 M1 9 H18" stroke="#565656" stroke-width="1" stroke-dasharray="1.2 1.2"/><path d="M0 17.9 H18.6" stroke="#333" stroke-width="1.7"/></svg><svg class="b" style="left:786px;top:165px;" width="8" height="5" viewBox="0 0 8 5"><path d="M1 1 L4 4 L7 1" fill="none" stroke="#333" stroke-width="1.3"/></svg><span class="t" style="left:618.4px;top:203px;font-size:13.5px;color:#3a3a3a;transform:scaleX(0.958);">Paragraph</span><svg class="b" style="left:799px;top:205.3px;" width="10" height="10" viewBox="0 0 10 10"><path d="M0.6 4 V0.6 H4 M9.4 5 V9.4 H5" fill="none" stroke="#4a4a4a" stroke-width="1.1"/><path d="M3 3 L8.6 8.6 M8.6 4.5 V8.6 H4.5" fill="none" stroke="#4a4a4a" stroke-width="1.1"/></svg><div class="b" style="left:812.9px;top:105px;width:1px;height:112px;background:#9c9c9c;"></div><div class="b" style="left:825.8px;top:112.9px;width:695.4px;height:73.5px;background:#c4c4c4;border:1px solid #9d9d9d;border-radius:5px;box-sizing:border-box;"></div><div class="b" style="left:827.5px;top:114.5px;width:134px;height:70.5px;border:1.5px solid #8c8c8c;border-radius:3px;box-sizing:border-box;"></div><div class="b" style="left:831.5px;top:119px;width:125.3px;height:60px;background:#fff;"></div><div class="b" style="left:966.7px;top:119px;width:125.3px;height:60px;background:#fff;"></div><div class="b" style="left:1102px;top:119px;width:125.3px;height:60px;background:#fff;"></div><div class="b" style="left:1237px;top:119px;width:125.3px;height:60px;background:#fff;"></div><div class="b" style="left:1372px;top:119px;width:125.3px;height:60px;background:#fff;"></div><span class="t" style="left:866.8px;top:141px;font-size:17.5px;color:#1a1a1a;transform:scaleX(0.991);">Normal</span><div class="b" style="left:976px;top:147.2px;width:5.6px;height:5.6px;background:#111;border-radius:50%;"></div><span class="t" style="left:991.7px;top:141px;font-size:17.5px;color:#1a1a1a;transform:scaleX(0.949);">Bulleted List</span><div class="b" style="left:1102px;top:119px;width:125.6px;height:60px;overflow:hidden;"><span class="t" style="left:2.6px;top:22px;font-size:17px;color:#12386e;font-weight:700;transform:scaleX(1.032);">General Emph</span></div><div class="b" style="left:1237px;top:119px;width:125.6px;height:60px;overflow:hidden;"><span class="t" style="left:3.3px;top:19px;font-size:29px;color:#0e2750;letter-spacing:2.5px;transform:scaleX(0.954);-webkit-text-stroke:0.5px #0e2750;">HEADING</span><div class="b" style="left:3.3px;top:44.4px;width:130px;height:1.8px;background:#0e2750;"></div></div><span class="t" style="left:1374.8px;top:139px;font-size:24px;color:#1b3564;letter-spacing:2.5px;transform:scaleX(0.940);-webkit-text-stroke:0.35px #1b3564;">HEADING</span><div class="b" style="left:1503.4px;top:112.9px;width:17.8px;height:24.5px;background:#c4c4c4;border:1px solid #9d9d9d;box-sizing:border-box;border-radius:0 5px 0 0;"></div><div class="b" style="left:1503.4px;top:137.4px;width:17.8px;height:24.5px;background:#c4c4c4;border:1px solid #9d9d9d;box-sizing:border-box;"></div><div class="b" style="left:1503.4px;top:161.9px;width:17.8px;height:24.5px;background:#c4c4c4;border:1px solid #9d9d9d;box-sizing:border-box;border-radius:0 0 5px 0;"></div><svg class="b" style="left:1508px;top:121px;" width="9" height="7" viewBox="0 0 9 7"><path d="M1 5.5 L4.5 2 L8 5.5" fill="none" stroke="#999" stroke-width="1.2"/></svg><svg class="b" style="left:1508.3px;top:147.5px;" width="8" height="5" viewBox="0 0 8 5"><path d="M1 1 L4 4 L7 1" fill="none" stroke="#444" stroke-width="1.2"/></svg><svg class="b" style="left:1508px;top:168px;" width="9" height="11" viewBox="0 0 9 11"><path d="M1 1.5 H8" stroke="#444" stroke-width="1.2"/><path d="M1 5 L4.5 8.5 L8 5" fill="none" stroke="#444" stroke-width="1.2"/></svg><span class="t" style="left:1148px;top:203px;font-size:13.5px;color:#3a3a3a;transform:scaleX(0.887);">Styles</span><svg class="b" style="left:1521px;top:205.3px;" width="10" height="10" viewBox="0 0 10 10"><path d="M0.6 4 V0.6 H4 M9.4 5 V9.4 H5" fill="none" stroke="#4a4a4a" stroke-width="1.1"/><path d="M3 3 L8.6 8.6 M8.6 4.5 V8.6 H4.5" fill="none" stroke="#4a4a4a" stroke-width="1.1"/></svg><div class="b" style="left:1535.3px;top:105px;width:1px;height:112px;background:#9c9c9c;"></div><svg class="b" style="left:1552px;top:107px;" width="20" height="20" viewBox="0 0 20 20"><circle cx="12.3" cy="7.2" r="5.8" fill="none" stroke="#555" stroke-width="1.3"/><path d="M8 11.5 L1 18.5" stroke="#555" stroke-width="1.5"/></svg><span class="t" style="left:1576px;top:110px;font-size:15.5px;color:#3a3a3a;transform:scaleX(0.919);">Find</span><svg class="b" style="left:1619.4px;top:115.5px;" width="8" height="5" viewBox="0 0 8 5"><path d="M1 1 L4 4 L7 1" fill="none" stroke="#444" stroke-width="1.2"/></svg><svg class="b" style="left:1550px;top:138px;" width="22" height="22" viewBox="0 0 22 22"><text x="8" y="9" font-size="10.5" font-family="Liberation Sans,sans-serif" fill="#b0237f">b</text><text x="13" y="20" font-size="10.5" font-family="Liberation Sans,sans-serif" fill="#1a6dbd">c</text><path d="M6.5 6 Q1.5 6.5 1.5 11 Q1.5 15.5 7 15.5 H10 M7 12.3 L10.2 15.5 L7 18.7" fill="none" stroke="#1a6dbd" stroke-width="1.3"/></svg><span class="t" style="left:1576px;top:142px;font-size:15.5px;color:#3a3a3a;transform:scaleX(0.932);">Replace</span><svg class="b" style="left:1553px;top:172px;" width="15" height="20" viewBox="0 0 15 20"><path d="M1.5 1.5 V16 L5.5 12.5 L8.5 18.5 L10.8 17.5 L8 11.5 H13 Z" fill="#e6e6e6" stroke="#555" stroke-width="1.2"/></svg><span class="t" style="left:1576px;top:174px;font-size:15.5px;color:#3a3a3a;transform:scaleX(0.928);">Select</span><svg class="b" style="left:1620.5px;top:180px;" width="8" height="5" viewBox="0 0 8 5"><path d="M1 1 L4 4 L7 1" fill="none" stroke="#444" stroke-width="1.2"/></svg><span class="t" style="left:1573.9px;top:203px;font-size:13.5px;color:#3a3a3a;transform:scaleX(0.947);">Editing</span><div class="b" style="left:1650.1px;top:105px;width:1px;height:112px;background:#9c9c9c;"></div><svg class="b" style="left:1674px;top:106px;" width="26" height="41" viewBox="0 0 26 41"><rect x="7" y="1" width="12" height="24" rx="6" fill="#b9dcf6" stroke="#1a6dbd" stroke-width="1.3"/><path d="M2.5 17 Q2.5 30 13 30 Q23.5 30 23.5 17 M13 30 V39" fill="none" stroke="#666" stroke-width="1.4"/></svg><span class="t" style="left:1663.3px;top:153px;font-size:15.5px;color:#3a3a3a;transform:scaleX(0.974);">Dictate</span><svg class="b" style="left:1682.8px;top:177.5px;" width="8" height="5" viewBox="0 0 8 5"><path d="M1 1 L4 4 L7 1" fill="none" stroke="#444" stroke-width="1.2"/></svg><span class="t" style="left:1671px;top:203px;font-size:13.5px;color:#3a3a3a;transform:scaleX(0.930);">Voice</span><div class="b" style="left:1722.8px;top:105px;width:1px;height:112px;background:#9c9c9c;"></div><svg class="b" style="left:1740px;top:106px;" width="40" height="40" viewBox="0 0 40 40"><path d="M20 3 L27 7 L9 33 L2.5 36.5 L3 29 Z" fill="#f2f6fb" stroke="#2564c4" stroke-width="1.6"/><path d="M21 12 H36 Q39 14.5 36 17 H18 M17 19 H33 Q36 21.5 33 24 H14 M13 26 H29 Q32 28.5 29 31 H10" fill="#2b6fd6" stroke="none"/><path d="M21 12 H36 Q39 14.5 36 17 H18 Z M17 19 H33 Q36 21.5 33 24 H14 Z M13 26 H29 Q32 28.5 29 31 H10 Z" fill="#2b6fd6"/></svg><span class="t" style="left:1740.8px;top:151px;font-size:15.5px;color:#3a3a3a;transform:scaleX(0.968);">Editor</span><span class="t" style="left:1742px;top:203px;font-size:13.5px;color:#3a3a3a;transform:scaleX(0.992);">Editor</span><div class="b" style="left:1795.1px;top:105px;width:1px;height:112px;background:#9c9c9c;"></div><svg class="b" style="left:1815.5px;top:107.5px;" width="37" height="37" viewBox="0 0 37 37"><rect x="1" y="1" width="35" height="35" fill="none" stroke="#e0622b" stroke-width="1.8"/><rect x="6" y="6" width="10.5" height="10.5" fill="none" stroke="#e0622b" stroke-width="1.6"/><rect x="20.5" y="6" width="10.5" height="10.5" fill="none" stroke="#e0622b" stroke-width="1.6"/><rect x="6" y="20.5" width="10.5" height="10.5" fill="none" stroke="#e0622b" stroke-width="1.6"/><rect x="20.5" y="20.5" width="10.5" height="10.5" fill="none" stroke="#e0622b" stroke-width="1.6"/></svg><span class="t" style="left:1808.7px;top:151px;font-size:15.5px;color:#3a3a3a;transform:scaleX(0.976);">Add-ins</span><span class="t" style="left:1811px;top:203px;font-size:13.5px;color:#3a3a3a;transform:scaleX(0.974);">Add-ins</span><div class="b" style="left:1872.3px;top:105px;width:1px;height:112px;background:#9c9c9c;"></div><svg class="b" style="left:1886.3px;top:201.2px;" width="11" height="6.5" viewBox="0 0 11.0 6.5"><path d="M1 1 L5.5 5.5 L10.0 1" fill="none" stroke="#333" stroke-width="1.3"/></svg><div class="b" style="left:574px;top:225.5px;width:780px;height:18.5px;background:#6a6a6a;"></div><div class="b" style="left:453px;top:232.5px;width:1px;height:6.5px;background:#ececec;"></div><div class="b" style="left:468px;top:235px;width:1px;height:1.5px;background:#e4e4e4;"></div><div class="b" style="left:483px;top:235px;width:1px;height:1.5px;background:#e4e4e4;"></div><div class="b" style="left:498px;top:235px;width:1px;height:1.5px;background:#e4e4e4;"></div><div class="b" style="left:513px;top:232.5px;width:1px;height:6.5px;background:#ececec;"></div><div class="b" style="left:528px;top:235px;width:1px;height:1.5px;background:#e4e4e4;"></div><div class="b" style="left:543px;top:235px;width:1px;height:1.5px;background:#e4e4e4;"></div><div class="b" style="left:558px;top:235px;width:1px;height:1.5px;background:#e4e4e4;"></div><div class="b" style="left:588px;top:235px;width:1px;height:1.5px;background:#e4e4e4;"></div><div class="b" style="left:603px;top:235px;width:1px;height:1.5px;background:#e4e4e4;"></div><div class="b" style="left:618px;top:235px;width:1px;height:1.5px;background:#e4e4e4;"></div><div class="b" style="left:633px;top:232.5px;width:1px;height:6.5px;background:#ececec;"></div><div class="b" style="left:648px;top:235px;width:1px;height:1.5px;background:#e4e4e4;"></div><div class="b" style="left:663px;top:235px;width:1px;height:1.5px;background:#e4e4e4;"></div><div class="b" style="left:678px;top:235px;width:1px;height:1.5px;background:#e4e4e4;"></div><span class="t" style="left:690px;top:229px;font-size:14.5px;color:#f2f2f2;transform:scaleX(0.992);">1</span><div class="b" style="left:708px;top:235px;width:1px;height:1.5px;background:#e4e4e4;"></div><div class="b" style="left:723px;top:235px;width:1px;height:1.5px;background:#e4e4e4;"></div><div class="b" style="left:738px;top:235px;width:1px;height:1.5px;background:#e4e4e4;"></div><div class="b" style="left:753px;top:232.5px;width:1px;height:6.5px;background:#ececec;"></div><div class="b" style="left:768px;top:235px;width:1px;height:1.5px;background:#e4e4e4;"></div><div class="b" style="left:783px;top:235px;width:1px;height:1.5px;background:#e4e4e4;"></div><div class="b" style="left:798px;top:235px;width:1px;height:1.5px;background:#e4e4e4;"></div><span class="t" style="left:810px;top:229px;font-size:14.5px;color:#f2f2f2;transform:scaleX(0.992);">2</span><div class="b" style="left:828px;top:235px;width:1px;height:1.5px;background:#e4e4e4;"></div><div class="b" style="left:843px;top:235px;width:1px;height:1.5px;background:#e4e4e4;"></div><div class="b" style="left:858px;top:235px;width:1px;height:1.5px;background:#e4e4e4;"></div><div class="b" style="left:873px;top:232.5px;width:1px;height:6.5px;background:#ececec;"></div><div class="b" style="left:888px;top:235px;width:1px;height:1.5px;background:#e4e4e4;"></div><div class="b" style="left:903px;top:235px;width:1px;height:1.5px;background:#e4e4e4;"></div><div class="b" style="left:918px;top:235px;width:1px;height:1.5px;background:#e4e4e4;"></div><span class="t" style="left:930px;top:229px;font-size:14.5px;color:#f2f2f2;transform:scaleX(0.992);">3</span><div class="b" style="left:948px;top:235px;width:1px;height:1.5px;background:#e4e4e4;"></div><div class="b" style="left:963px;top:235px;width:1px;height:1.5px;background:#e4e4e4;"></div><div class="b" style="left:978px;top:235px;width:1px;height:1.5px;background:#e4e4e4;"></div><div class="b" style="left:993px;top:232.5px;width:1px;height:6.5px;background:#ececec;"></div><div class="b" style="left:1008px;top:235px;width:1px;height:1.5px;background:#e4e4e4;"></div><div class="b" style="left:1023px;top:235px;width:1px;height:1.5px;background:#e4e4e4;"></div><div class="b" style="left:1038px;top:235px;width:1px;height:1.5px;background:#e4e4e4;"></div><span class="t" style="left:1050px;top:229px;font-size:14.5px;color:#f2f2f2;transform:scaleX(0.992);">4</span><div class="b" style="left:1068px;top:235px;width:1px;height:1.5px;background:#e4e4e4;"></div><div class="b" style="left:1083px;top:235px;width:1px;height:1.5px;background:#e4e4e4;"></div><div class="b" style="left:1098px;top:235px;width:1px;height:1.5px;background:#e4e4e4;"></div><div class="b" style="left:1113px;top:232.5px;width:1px;height:6.5px;background:#ececec;"></div><div class="b" style="left:1128px;top:235px;width:1px;height:1.5px;background:#e4e4e4;"></div><div class="b" style="left:1143px;top:235px;width:1px;height:1.5px;background:#e4e4e4;"></div><div class="b" style="left:1158px;top:235px;width:1px;height:1.5px;background:#e4e4e4;"></div><span class="t" style="left:1170px;top:229px;font-size:14.5px;color:#f2f2f2;transform:scaleX(0.992);">5</span><div class="b" style="left:1188px;top:235px;width:1px;height:1.5px;background:#e4e4e4;"></div><div class="b" style="left:1203px;top:235px;width:1px;height:1.5px;background:#e4e4e4;"></div><div class="b" style="left:1218px;top:235px;width:1px;height:1.5px;background:#e4e4e4;"></div><div class="b" style="left:1233px;top:232.5px;width:1px;height:6.5px;background:#ececec;"></div><div class="b" style="left:1248px;top:235px;width:1px;height:1.5px;background:#e4e4e4;"></div><div class="b" style="left:1263px;top:235px;width:1px;height:1.5px;background:#e4e4e4;"></div><div class="b" style="left:1278px;top:235px;width:1px;height:1.5px;background:#e4e4e4;"></div><span class="t" style="left:1290px;top:229px;font-size:14.5px;color:#f2f2f2;transform:scaleX(0.992);">6</span><div class="b" style="left:1308px;top:235px;width:1px;height:1.5px;background:#e4e4e4;"></div><div class="b" style="left:1323px;top:235px;width:1px;height:1.5px;background:#e4e4e4;"></div><div class="b" style="left:1338px;top:235px;width:1px;height:1.5px;background:#e4e4e4;"></div><div class="b" style="left:1353px;top:232.5px;width:1px;height:6.5px;background:#ececec;"></div><div class="b" style="left:1368px;top:235px;width:1px;height:1.5px;background:#e4e4e4;"></div><div class="b" style="left:1383px;top:235px;width:1px;height:1.5px;background:#e4e4e4;"></div><div class="b" style="left:1398px;top:235px;width:1px;height:1.5px;background:#e4e4e4;"></div><div class="b" style="left:1413px;top:232.5px;width:1px;height:6.5px;background:#ececec;"></div><div class="b" style="left:1428px;top:235px;width:1px;height:1.5px;background:#e4e4e4;"></div><div class="b" style="left:1443px;top:235px;width:1px;height:1.5px;background:#e4e4e4;"></div><div class="b" style="left:1458px;top:235px;width:1px;height:1.5px;background:#e4e4e4;"></div><svg class="b" style="left:567.5px;top:225px;" width="13" height="26" viewBox="0 0 13 26"><path d="M0.5 0.5 H12.5 V3 L6.5 9 L0.5 3 Z" fill="#c3c3c3"/><path d="M6.5 10 L12.5 16 V19 H0.5 V16 Z" fill="#c3c3c3"/><rect x="0.5" y="20.5" width="12" height="5" fill="#c3c3c3"/></svg><svg class="b" style="left:1347.5px;top:236px;" width="13" height="9" viewBox="0 0 13 9"><path d="M6.5 0.5 L12.5 6 V8.5 H0.5 V6 Z" fill="#c3c3c3"/></svg><div class="b" style="left:0px;top:251.3px;width:1920px;height:1px;background:#777;"></div><div class="b" style="left:4px;top:342.5px;width:19px;height:782px;background:#6a6a6a;"></div><svg class="b" style="left:9.5px;top:233px;" width="9" height="9" viewBox="0 0 9 9"><path d="M1.2 0 V7.8 H9" fill="none" stroke="#e6e6e6" stroke-width="2.4"/></svg><div class="b" style="left:13.5px;top:251.7px;width:2px;height:1.6px;background:#e0e0e0;"></div><div class="b" style="left:13.5px;top:266.7px;width:2px;height:1.6px;background:#e0e0e0;"></div><div class="b" style="left:11px;top:281.8px;width:7px;height:1.4px;background:#e8e8e8;"></div><div class="b" style="left:13.5px;top:296.7px;width:2px;height:1.6px;background:#e0e0e0;"></div><div class="b" style="left:13.5px;top:311.7px;width:2px;height:1.6px;background:#e0e0e0;"></div><div class="b" style="left:13.5px;top:326.7px;width:2px;height:1.6px;background:#e0e0e0;"></div><div class="b" style="left:13.5px;top:356.7px;width:2px;height:1.6px;background:#e0e0e0;"></div><div class="b" style="left:13.5px;top:371.7px;width:2px;height:1.6px;background:#e0e0e0;"></div><div class="b" style="left:13.5px;top:386.7px;width:2px;height:1.6px;background:#e0e0e0;"></div><div class="b" style="left:11px;top:401.8px;width:7px;height:1.4px;background:#e8e8e8;"></div><div class="b" style="left:13.5px;top:416.7px;width:2px;height:1.6px;background:#e0e0e0;"></div><div class="b" style="left:13.5px;top:431.7px;width:2px;height:1.6px;background:#e0e0e0;"></div><div class="b" style="left:13.5px;top:446.7px;width:2px;height:1.6px;background:#e0e0e0;"></div><span class="t" style="left:7px;top:454.5px;font-size:15px;color:#fff;line-height:16px;transform:rotate(-90deg);transform-origin:50% 50%;width:14px;text-align:center;">1</span><div class="b" style="left:13.5px;top:476.7px;width:2px;height:1.6px;background:#e0e0e0;"></div><div class="b" style="left:13.5px;top:491.7px;width:2px;height:1.6px;background:#e0e0e0;"></div><div class="b" style="left:13.5px;top:506.7px;width:2px;height:1.6px;background:#e0e0e0;"></div><div class="b" style="left:11px;top:521.8px;width:7px;height:1.4px;background:#e8e8e8;"></div><div class="b" style="left:13.5px;top:536.7px;width:2px;height:1.6px;background:#e0e0e0;"></div><div class="b" style="left:13.5px;top:551.7px;width:2px;height:1.6px;background:#e0e0e0;"></div><div class="b" style="left:13.5px;top:566.7px;width:2px;height:1.6px;background:#e0e0e0;"></div><span class="t" style="left:7px;top:574.5px;font-size:15px;color:#fff;line-height:16px;transform:rotate(-90deg);transform-origin:50% 50%;width:14px;text-align:center;">2</span><div class="b" style="left:13.5px;top:596.7px;width:2px;height:1.6px;background:#e0e0e0;"></div><div class="b" style="left:13.5px;top:611.7px;width:2px;height:1.6px;background:#e0e0e0;"></div><div class="b" style="left:13.5px;top:626.7px;width:2px;height:1.6px;background:#e0e0e0;"></div><div class="b" style="left:11px;top:641.8px;width:7px;height:1.4px;background:#e8e8e8;"></div><div class="b" style="left:13.5px;top:656.7px;width:2px;height:1.6px;background:#e0e0e0;"></div><div class="b" style="left:13.5px;top:671.7px;width:2px;height:1.6px;background:#e0e0e0;"></div><div class="b" style="left:13.5px;top:686.7px;width:2px;height:1.6px;background:#e0e0e0;"></div><span class="t" style="left:7px;top:694.5px;font-size:15px;color:#fff;line-height:16px;transform:rotate(-90deg);transform-origin:50% 50%;width:14px;text-align:center;">3</span><div class="b" style="left:13.5px;top:716.7px;width:2px;height:1.6px;background:#e0e0e0;"></div><div class="b" style="left:13.5px;top:731.7px;width:2px;height:1.6px;background:#e0e0e0;"></div><div class="b" style="left:13.5px;top:746.7px;width:2px;height:1.6px;background:#e0e0e0;"></div><div class="b" style="left:11px;top:761.8px;width:7px;height:1.4px;background:#e8e8e8;"></div><div class="b" style="left:13.5px;top:776.7px;width:2px;height:1.6px;background:#e0e0e0;"></div><div class="b" style="left:13.5px;top:791.7px;width:2px;height:1.6px;background:#e0e0e0;"></div><div class="b" style="left:13.5px;top:806.7px;width:2px;height:1.6px;background:#e0e0e0;"></div><span class="t" style="left:7px;top:814.5px;font-size:15px;color:#fff;line-height:16px;transform:rotate(-90deg);transform-origin:50% 50%;width:14px;text-align:center;">4</span><div class="b" style="left:13.5px;top:836.7px;width:2px;height:1.6px;background:#e0e0e0;"></div><div class="b" style="left:13.5px;top:851.7px;width:2px;height:1.6px;background:#e0e0e0;"></div><div class="b" style="left:13.5px;top:866.7px;width:2px;height:1.6px;background:#e0e0e0;"></div><div class="b" style="left:11px;top:881.8px;width:7px;height:1.4px;background:#e8e8e8;"></div><div class="b" style="left:13.5px;top:896.7px;width:2px;height:1.6px;background:#e0e0e0;"></div><div class="b" style="left:13.5px;top:911.7px;width:2px;height:1.6px;background:#e0e0e0;"></div><div class="b" style="left:13.5px;top:926.7px;width:2px;height:1.6px;background:#e0e0e0;"></div><span class="t" style="left:7px;top:934.5px;font-size:15px;color:#fff;line-height:16px;transform:rotate(-90deg);transform-origin:50% 50%;width:14px;text-align:center;">5</span><div class="b" style="left:13.5px;top:956.7px;width:2px;height:1.6px;background:#e0e0e0;"></div><div class="b" style="left:13.5px;top:971.7px;width:2px;height:1.6px;background:#e0e0e0;"></div><div class="b" style="left:13.5px;top:986.7px;width:2px;height:1.6px;background:#e0e0e0;"></div><div class="b" style="left:11px;top:1001.8px;width:7px;height:1.4px;background:#e8e8e8;"></div><div class="b" style="left:13.5px;top:1016.7px;width:2px;height:1.6px;background:#e0e0e0;"></div><div class="b" style="left:13.5px;top:1031.7px;width:2px;height:1.6px;background:#e0e0e0;"></div><div class="b" style="left:13.5px;top:1046.7px;width:2px;height:1.6px;background:#e0e0e0;"></div><span class="t" style="left:7px;top:1054.5px;font-size:15px;color:#fff;line-height:16px;transform:rotate(-90deg);transform-origin:50% 50%;width:14px;text-align:center;">6</span><div class="b" style="left:13.5px;top:1076.7px;width:2px;height:1.6px;background:#e0e0e0;"></div><div class="b" style="left:13.5px;top:1091.7px;width:2px;height:1.6px;background:#e0e0e0;"></div><div class="b" style="left:13.5px;top:1106.7px;width:2px;height:1.6px;background:#e0e0e0;"></div><div class="b" style="left:455px;top:252px;width:1018.4px;height:871px;background:#525252;"></div><div class="b" style="left:455px;top:252px;width:1018.4px;height:447px;background:#fff;"></div><div class="b" style="left:455px;top:720px;width:1018.4px;height:403px;background:#fff;"></div><div class="b" style="left:574px;top:252px;width:780px;height:239px;overflow:hidden;"><div class="b" style="left:0px;top:-5px;width:780px;height:244px;background:#000;overflow:hidden;"><div class="b" style="left:0px;top:0px;width:390px;height:233.6px;background:#525252;"></div><div class="b" style="left:144.4px;top:2px;width:105px;height:7.9px;background:#bdbdbd;"></div><div class="b" style="left:2px;top:19.9px;width:385.9px;height:25.2px;background:#bdbdbd;border-radius:2px;"></div><div class="b" style="left:168.8px;top:24.2px;width:25.6px;height:12.2px;background:#fff;"></div><div class="b" style="left:196.4px;top:24.2px;width:25.6px;height:12.2px;background:#fff;"></div><div class="b" style="left:223.8px;top:24.2px;width:25.6px;height:12.2px;background:#fff;"></div><div class="b" style="left:251.3px;top:24.2px;width:25.6px;height:12.2px;background:#fff;"></div><div class="b" style="left:278.7px;top:24.2px;width:25.6px;height:12.2px;background:#fff;"></div><div class="b" style="left:366.4px;top:13px;width:20.5px;height:5.9px;background:#7ea9f1;"></div><div class="b" style="left:92.4px;top:51.2px;width:206.8px;height:172.5px;background:#fff;"></div><div class="b" style="left:116.6px;top:51.2px;width:79.2px;height:27.2px;background:#585858;"></div><div class="b" style="left:135.3px;top:51.2px;width:41.8px;height:26px;background:#f2f2f2;"></div><div class="b" style="left:141px;top:51.2px;width:30.5px;height:18.3px;background:#777;"></div><div class="b" style="left:116.6px;top:78.4px;width:79.2px;height:2px;background:#444;"></div><div class="b" style="left:119px;top:78.4px;width:15px;height:2px;background:#ddd;"></div><div class="b" style="left:195.8px;top:51.2px;width:79.2px;height:22.8px;background:#e6e6e6;"></div><div class="b" style="left:210px;top:51.2px;width:32.5px;height:22.8px;background:#fff;"></div><div class="b" style="left:258.8px;top:51.2px;width:14.2px;height:20.3px;background:#333;"></div><div class="b" style="left:195.8px;top:73.9px;width:79.2px;height:6.5px;background:#0a0a0a;"></div><div class="b" style="left:116.6px;top:81.2px;width:79.2px;height:47.5px;background:#585858;"></div><div class="b" style="left:116.6px;top:85.3px;width:79.2px;height:5.3px;background:#b5b5b5;"></div><div class="b" style="left:135.3px;top:91.8px;width:41.8px;height:35.8px;background:#f2f2f2;"></div><div class="b" style="left:141px;top:95.5px;width:30.5px;height:24.4px;background:#777;"></div><div class="b" style="left:116.6px;top:128.8px;width:79.2px;height:2px;background:#444;"></div><div class="b" style="left:119px;top:128.8px;width:15px;height:2px;background:#ddd;"></div><div class="b" style="left:195.8px;top:81.2px;width:79.2px;height:3.7px;background:#181818;"></div><div class="b" style="left:195.8px;top:84.9px;width:79.2px;height:39.4px;background:#e6e6e6;"></div><div class="b" style="left:210px;top:89.4px;width:32.5px;height:34.9px;background:#fff;"></div><div class="b" style="left:258.8px;top:89.4px;width:14.2px;height:32.5px;background:#333;"></div><div class="b" style="left:195.8px;top:124.3px;width:79.2px;height:6.5px;background:#0a0a0a;"></div><div class="b" style="left:116.6px;top:131.8px;width:79.2px;height:47.5px;background:#585858;"></div><div class="b" style="left:116.6px;top:135.9px;width:79.2px;height:5.3px;background:#b5b5b5;"></div><div class="b" style="left:135.3px;top:142.4px;width:41.8px;height:35.8px;background:#f2f2f2;"></div><div class="b" style="left:141px;top:146px;width:30.5px;height:24.4px;background:#777;"></div><div class="b" style="left:116.6px;top:179.4px;width:79.2px;height:2px;background:#444;"></div><div class="b" style="left:119px;top:179.4px;width:15px;height:2px;background:#ddd;"></div><div class="b" style="left:195.8px;top:131.8px;width:79.2px;height:3.7px;background:#181818;"></div><div class="b" style="left:195.8px;top:135.5px;width:79.2px;height:39.4px;background:#e6e6e6;"></div><div class="b" style="left:210px;top:140px;width:32.5px;height:34.9px;background:#fff;"></div><div class="b" style="left:258.8px;top:140px;width:14.2px;height:32.5px;background:#333;"></div><div class="b" style="left:195.8px;top:174.9px;width:79.2px;height:6.5px;background:#0a0a0a;"></div><div class="b" style="left:276px;top:182.2px;width:15.4px;height:5.9px;background:#cfcfcf;"></div><div class="b" style="left:0px;top:228.1px;width:390px;height:5.5px;background:#525252;"></div><div class="b" style="left:0px;top:233.6px;width:390px;height:10.2px;background:#42403e;"></div><div class="b" style="left:12.2px;top:233.6px;width:73.1px;height:10.2px;background:#eeeeee;"></div><div class="b" style="left:101.2px;top:235.6px;width:6.5px;height:6.1px;background:#f5b93d;border-radius:2px;"></div><div class="b" style="left:113.8px;top:235.6px;width:6.5px;height:6.1px;background:#1ed760;border-radius:2px;"></div><div class="b" style="left:126.3px;top:235.6px;width:6.5px;height:6.1px;background:#1a78d2;border-radius:2px;"></div><div class="b" style="left:138.9px;top:235.6px;width:6.5px;height:6.1px;background:#5059c9;border-radius:2px;"></div><div class="b" style="left:151.5px;top:235.6px;width:6.5px;height:6.1px;background:#eee;border-radius:2px;"></div><div class="b" style="left:164.1px;top:235.6px;width:6.5px;height:6.1px;background:#e33b2e;border-radius:2px;"></div><div class="b" style="left:176.7px;top:235.6px;width:6.5px;height:6.1px;background:#2b7cd3;border-radius:2px;"></div><div class="b" style="left:189.3px;top:235.6px;width:6.5px;height:6.1px;background:#21a366;border-radius:2px;"></div><div class="b" style="left:390px;top:0px;width:390px;height:8.1px;background:#000;"></div><div class="b" style="left:390px;top:8.1px;width:390px;height:9.5px;background:#2d2d2d;"></div><div class="b" style="left:414.4px;top:9.3px;width:330.3px;height:6.9px;background:#3d3d3d;"></div><div class="b" style="left:390px;top:17.7px;width:390px;height:193.6px;background:#fff;"></div><div class="b" style="left:394.9px;top:22.5px;width:26.8px;height:7.3px;background:#0b6ed0;"></div><div class="b" style="left:742.2px;top:22.5px;width:32.9px;height:7.3px;background:#0b6ed0;"></div><div class="b" style="left:394.9px;top:39.6px;width:298.2px;height:171.6px;background:#d9d9d9;"></div><div class="b" style="left:465.8px;top:74.1px;width:156.4px;height:137.1px;background:#fff;"></div><div class="b" style="left:539.3px;top:55px;width:9.3px;height:15px;background:#6fa3d6;"></div><div class="b" style="left:468.8px;top:78.2px;width:150.3px;height:20.3px;background:#c9c9c9;"></div><div class="b" style="left:472.9px;top:123.7px;width:40.6px;height:10.2px;background:#cfcfcf;"></div><div class="b" style="left:506.4px;top:126.5px;width:112.3px;height:4.5px;background:radial-gradient(circle,#9a9a9a 0 2.2px,transparent 2.7px) 0 0/20% 100%;"></div><div class="b" style="left:472.9px;top:140.2px;width:40.6px;height:10.2px;background:#cfcfcf;"></div><div class="b" style="left:506.4px;top:143px;width:112.3px;height:4.5px;background:radial-gradient(circle,#9a9a9a 0 2.2px,transparent 2.7px) 0 0/20% 100%;"></div><div class="b" style="left:472.9px;top:159.7px;width:40.6px;height:10.2px;background:#cfcfcf;"></div><div class="b" style="left:506.4px;top:162.5px;width:112.3px;height:4.5px;background:radial-gradient(circle,#9a9a9a 0 2.2px,transparent 2.7px) 0 0/20% 100%;"></div><div class="b" style="left:472.9px;top:178.3px;width:40.6px;height:10.2px;background:#cfcfcf;"></div><div class="b" style="left:506.4px;top:181.2px;width:112.3px;height:4.5px;background:radial-gradient(circle,#9a9a9a 0 2.2px,transparent 2.7px) 0 0/20% 100%;"></div><div class="b" style="left:472.9px;top:197.4px;width:40.6px;height:10.2px;background:#cfcfcf;"></div><div class="b" style="left:506.4px;top:200.3px;width:112.3px;height:4.5px;background:radial-gradient(circle,#9a9a9a 0 2.2px,transparent 2.7px) 0 0/20% 100%;"></div><div class="b" style="left:693.1px;top:39.6px;width:3.5px;height:171.6px;background:#eee;"></div><div class="b" style="left:701.8px;top:39.6px;width:72.3px;height:158.4px;background:#252b33;border-radius:7px;"></div><div class="b" style="left:703.6px;top:46.1px;width:68.9px;height:149.3px;background:#fff;border-radius:3px;"></div><div class="b" style="left:703.6px;top:52.8px;width:68.9px;height:18.3px;background:#d9d9d9;"></div><div class="b" style="left:707.7px;top:75.2px;width:58.9px;height:40.6px;background:#cfcfcf;"></div><div class="b" style="left:707.7px;top:135.7px;width:60.7px;height:9.8px;background:#e6e6e6;"></div><div class="b" style="left:707.7px;top:146.7px;width:60.7px;height:9.8px;background:#e6e6e6;"></div><div class="b" style="left:707.7px;top:157.6px;width:60.7px;height:9.8px;background:#e6e6e6;"></div><div class="b" style="left:707.7px;top:168.6px;width:60.7px;height:9.8px;background:#e6e6e6;"></div><div class="b" style="left:707.7px;top:179.6px;width:60.7px;height:9.8px;background:#e6e6e6;"></div><div class="b" style="left:390px;top:211.2px;width:390px;height:8.1px;background:#42403e;"></div><div class="b" style="left:390px;top:219.4px;width:390px;height:24.4px;background:#000;"></div><div class="b" style="left:422.1px;top:212.9px;width:5.1px;height:4.9px;background:#f5b93d;border-radius:2px;"></div><div class="b" style="left:432px;top:212.9px;width:5.1px;height:4.9px;background:#1ed760;border-radius:2px;"></div><div class="b" style="left:442px;top:212.9px;width:5.1px;height:4.9px;background:#1a78d2;border-radius:2px;"></div><div class="b" style="left:452px;top:212.9px;width:5.1px;height:4.9px;background:#5059c9;border-radius:2px;"></div><div class="b" style="left:461.9px;top:212.9px;width:5.1px;height:4.9px;background:#eee;border-radius:2px;"></div><div class="b" style="left:471.9px;top:212.9px;width:5.1px;height:4.9px;background:#e33b2e;border-radius:2px;"></div><div class="b" style="left:481.8px;top:212.9px;width:5.1px;height:4.9px;background:#2b7cd3;border-radius:2px;"></div><div class="b" style="left:491.8px;top:212.9px;width:5.1px;height:4.9px;background:#21a366;border-radius:2px;"></div></div></div><div class="b" style="left:574px;top:840px;width:780px;height:244px;background:#000;overflow:hidden;"><div class="b" style="left:0px;top:0px;width:390px;height:233.6px;background:#525252;"></div><div class="b" style="left:144.4px;top:2px;width:105px;height:7.9px;background:#bdbdbd;"></div><div class="b" style="left:2px;top:19.9px;width:385.9px;height:25.2px;background:#bdbdbd;border-radius:2px;"></div><div class="b" style="left:168.8px;top:24.2px;width:25.6px;height:12.2px;background:#fff;"></div><div class="b" style="left:196.4px;top:24.2px;width:25.6px;height:12.2px;background:#fff;"></div><div class="b" style="left:223.8px;top:24.2px;width:25.6px;height:12.2px;background:#fff;"></div><div class="b" style="left:251.3px;top:24.2px;width:25.6px;height:12.2px;background:#fff;"></div><div class="b" style="left:278.7px;top:24.2px;width:25.6px;height:12.2px;background:#fff;"></div><div class="b" style="left:366.4px;top:13px;width:20.5px;height:5.9px;background:#7ea9f1;"></div><div class="b" style="left:92.4px;top:51.2px;width:206.8px;height:90.8px;background:#fff;"></div><div class="b" style="left:92.4px;top:146.2px;width:206.8px;height:81.9px;background:#fff;"></div><div class="b" style="left:116.6px;top:51.2px;width:79.2px;height:46.5px;background:#585858;"></div><div class="b" style="left:116.6px;top:54.2px;width:79.2px;height:5.3px;background:#b5b5b5;"></div><div class="b" style="left:135.3px;top:60.7px;width:41.8px;height:35.8px;background:#f2f2f2;"></div><div class="b" style="left:141px;top:64.4px;width:30.5px;height:24.4px;background:#777;"></div><div class="b" style="left:116.6px;top:97.7px;width:79.2px;height:2px;background:#444;"></div><div class="b" style="left:119px;top:97.7px;width:15px;height:2px;background:#ddd;"></div><div class="b" style="left:195.8px;top:51.2px;width:79.2px;height:2.6px;background:#181818;"></div><div class="b" style="left:195.8px;top:53.8px;width:79.2px;height:39.4px;background:#e6e6e6;"></div><div class="b" style="left:210px;top:58.3px;width:32.5px;height:34.9px;background:#fff;"></div><div class="b" style="left:258.8px;top:58.3px;width:14.2px;height:32.5px;background:#333;"></div><div class="b" style="left:195.8px;top:93.2px;width:79.2px;height:6.5px;background:#0a0a0a;"></div><div class="b" style="left:116.6px;top:170.6px;width:79.2px;height:47.5px;background:#585858;"></div><div class="b" style="left:116.6px;top:174.7px;width:79.2px;height:5.3px;background:#b5b5b5;"></div><div class="b" style="left:135.3px;top:181.2px;width:41.8px;height:35.8px;background:#f2f2f2;"></div><div class="b" style="left:141px;top:184.8px;width:30.5px;height:24.4px;background:#777;"></div><div class="b" style="left:116.6px;top:218.2px;width:79.2px;height:2px;background:#444;"></div><div class="b" style="left:119px;top:218.2px;width:15px;height:2px;background:#ddd;"></div><div class="b" style="left:195.8px;top:170.6px;width:79.2px;height:3.7px;background:#181818;"></div><div class="b" style="left:195.8px;top:174.3px;width:79.2px;height:39.4px;background:#e6e6e6;"></div><div class="b" style="left:210px;top:178.8px;width:32.5px;height:34.9px;background:#fff;"></div><div class="b" style="left:258.8px;top:178.8px;width:14.2px;height:32.5px;background:#333;"></div><div class="b" style="left:195.8px;top:213.7px;width:79.2px;height:6.5px;background:#0a0a0a;"></div><div class="b" style="left:276px;top:221.4px;width:15.4px;height:5.9px;background:#cfcfcf;"></div><div class="b" style="left:0px;top:228.1px;width:390px;height:5.5px;background:#525252;"></div><div class="b" style="left:0px;top:233.6px;width:390px;height:10.2px;background:#42403e;"></div><div class="b" style="left:12.2px;top:233.6px;width:73.1px;height:10.2px;background:#eeeeee;"></div><div class="b" style="left:101.2px;top:235.6px;width:6.5px;height:6.1px;background:#f5b93d;border-radius:2px;"></div><div class="b" style="left:113.8px;top:235.6px;width:6.5px;height:6.1px;background:#1ed760;border-radius:2px;"></div><div class="b" style="left:126.3px;top:235.6px;width:6.5px;height:6.1px;background:#1a78d2;border-radius:2px;"></div><div class="b" style="left:138.9px;top:235.6px;width:6.5px;height:6.1px;background:#5059c9;border-radius:2px;"></div><div class="b" style="left:151.5px;top:235.6px;width:6.5px;height:6.1px;background:#eee;border-radius:2px;"></div><div class="b" style="left:164.1px;top:235.6px;width:6.5px;height:6.1px;background:#e33b2e;border-radius:2px;"></div><div class="b" style="left:176.7px;top:235.6px;width:6.5px;height:6.1px;background:#2b7cd3;border-radius:2px;"></div><div class="b" style="left:189.3px;top:235.6px;width:6.5px;height:6.1px;background:#21a366;border-radius:2px;"></div><div class="b" style="left:390px;top:0px;width:390px;height:8.1px;background:#000;"></div><div class="b" style="left:390px;top:8.1px;width:390px;height:9.5px;background:#2d2d2d;"></div><div class="b" style="left:414.4px;top:9.3px;width:330.3px;height:6.9px;background:#3d3d3d;"></div><div class="b" style="left:390px;top:17.7px;width:390px;height:193.6px;background:#fff;"></div><div class="b" style="left:394.9px;top:22.5px;width:26.8px;height:7.3px;background:#0b6ed0;"></div><div class="b" style="left:742.2px;top:22.5px;width:32.9px;height:7.3px;background:#0b6ed0;"></div><div class="b" style="left:394.9px;top:39.6px;width:298.2px;height:171.6px;background:#d9d9d9;"></div><div class="b" style="left:465.8px;top:39.6px;width:156.4px;height:163.5px;background:#fff;"></div><div class="b" style="left:472.9px;top:45.3px;width:40.6px;height:10.2px;background:#cfcfcf;"></div><div class="b" style="left:506.4px;top:48.1px;width:112.3px;height:4.5px;background:radial-gradient(circle,#9a9a9a 0 2.2px,transparent 2.7px) 0 0/20% 100%;"></div><div class="b" style="left:472.9px;top:64.4px;width:40.6px;height:10.2px;background:#cfcfcf;"></div><div class="b" style="left:506.4px;top:67.2px;width:112.3px;height:4.5px;background:radial-gradient(circle,#9a9a9a 0 2.2px,transparent 2.7px) 0 0/20% 100%;"></div><div class="b" style="left:472.9px;top:83.5px;width:40.6px;height:10.2px;background:#cfcfcf;"></div><div class="b" style="left:506.4px;top:86.3px;width:112.3px;height:4.5px;background:radial-gradient(circle,#9a9a9a 0 2.2px,transparent 2.7px) 0 0/20% 100%;"></div><div class="b" style="left:472.9px;top:102.4px;width:40.6px;height:10.2px;background:#cfcfcf;"></div><div class="b" style="left:506.4px;top:105.2px;width:112.3px;height:4.5px;background:radial-gradient(circle,#9a9a9a 0 2.2px,transparent 2.7px) 0 0/20% 100%;"></div><div class="b" style="left:468.8px;top:130px;width:117.8px;height:6.9px;background:#c9c9c9;"></div><div class="b" style="left:468.8px;top:142.6px;width:149.9px;height:29.5px;background:#e4e4e4;outline:1px solid #999;"></div><div class="b" style="left:469.2px;top:190.9px;width:17.1px;height:8.7px;background:#a0ccee;"></div><div class="b" style="left:602.5px;top:190.9px;width:16.2px;height:8.7px;background:#a0ccee;"></div><div class="b" style="left:693.1px;top:39.6px;width:3.5px;height:171.6px;background:#eee;"></div><div class="b" style="left:701.8px;top:39.6px;width:72.3px;height:158.4px;background:#252b33;border-radius:7px;"></div><div class="b" style="left:703.6px;top:46.1px;width:68.9px;height:149.3px;background:#fff;border-radius:3px;"></div><div class="b" style="left:707.7px;top:53.8px;width:60.7px;height:9.8px;background:#e6e6e6;"></div><div class="b" style="left:707.7px;top:64.8px;width:60.7px;height:9.8px;background:#e6e6e6;"></div><div class="b" style="left:707.7px;top:75.8px;width:60.7px;height:9.8px;background:#e6e6e6;"></div><div class="b" style="left:707.7px;top:86.7px;width:60.7px;height:9.8px;background:#e6e6e6;"></div><div class="b" style="left:707.7px;top:133.5px;width:60.7px;height:23.2px;background:#e4e4e4;outline:1px solid #999;"></div><div class="b" style="left:706.1px;top:174.3px;width:15.2px;height:7.5px;background:#a0ccee;"></div><div class="b" style="left:755.4px;top:174.3px;width:14.6px;height:7.5px;background:#a0ccee;"></div><div class="b" style="left:703.6px;top:184.2px;width:68.9px;height:11.2px;background:#dadada;"></div><div class="b" style="left:390px;top:211.2px;width:390px;height:8.1px;background:#42403e;"></div><div class="b" style="left:390px;top:219.4px;width:390px;height:24.4px;background:#000;"></div><div class="b" style="left:422.1px;top:212.9px;width:5.1px;height:4.9px;background:#f5b93d;border-radius:2px;"></div><div class="b" style="left:432px;top:212.9px;width:5.1px;height:4.9px;background:#1ed760;border-radius:2px;"></div><div class="b" style="left:442px;top:212.9px;width:5.1px;height:4.9px;background:#1a78d2;border-radius:2px;"></div><div class="b" style="left:452px;top:212.9px;width:5.1px;height:4.9px;background:#5059c9;border-radius:2px;"></div><div class="b" style="left:461.9px;top:212.9px;width:5.1px;height:4.9px;background:#eee;border-radius:2px;"></div><div class="b" style="left:471.9px;top:212.9px;width:5.1px;height:4.9px;background:#e33b2e;border-radius:2px;"></div><div class="b" style="left:481.8px;top:212.9px;width:5.1px;height:4.9px;background:#2b7cd3;border-radius:2px;"></div><div class="b" style="left:491.8px;top:212.9px;width:5.1px;height:4.9px;background:#21a366;border-radius:2px;"></div></div><div class="b" style="left:1359px;top:1090px;width:75.7px;height:28.8px;background:#d2d2d2;border:1px solid #a8a8a8;box-sizing:border-box;"></div><span class="t" style="left:1386px;top:1097px;font-size:15.5px;color:#333;transform:scaleX(0.929);">(Ctrl)</span><div class="b" style="left:0px;top:1123px;width:1920px;height:27px;background:#525252;"></div><span class="t" style="left:15px;top:1130px;font-size:14px;color:#f0f0f0;transform:scaleX(0.936);">Page 4 of 4</span><span class="t" style="left:105.9px;top:1130px;font-size:14px;color:#f0f0f0;transform:scaleX(0.952);">22 words</span><svg class="b" style="left:183.5px;top:1128.5px;" width="19" height="19" viewBox="0 0 19 19"><path d="M1.5 2 H7 Q9.3 2 9.3 4.3 V15.5 Q9.3 13.5 7 13.5 H1.5 Z M17.5 8 V2 H12 Q9.5 2 9.5 4.3" fill="none" stroke="#eee" stroke-width="1.3"/><path d="M10.5 13.5 L13 16.5 L18 10.5" fill="none" stroke="#eee" stroke-width="1.3"/></svg><span class="t" style="left:227.4px;top:1130px;font-size:14px;color:#f0f0f0;transform:scaleX(0.913);">Text Predictions: On</span><svg class="b" style="left:366px;top:1127.5px;" width="20" height="20" viewBox="0 0 20 20"><circle cx="9" cy="3" r="2" fill="none" stroke="#eee" stroke-width="1.2"/><path d="M1.5 6.5 Q9 9.5 16.5 6.5 M9 8.5 V12 M9 12 L5 18.5 M9 12 L11 15" fill="none" stroke="#eee" stroke-width="1.3"/><path d="M12 12 L18.5 18.5 M18.5 12 L12 18.5" stroke="#eee" stroke-width="1.3"/></svg><span class="t" style="left:389px;top:1130px;font-size:14px;color:#fff;font-weight:700;transform:scaleX(0.910);">Accessibility: Investigate</span><svg class="b" style="left:1345px;top:1128px;" width="20" height="19" viewBox="0 0 20 19"><path d="M9 13 H1.5 V1.5 H17.5 V6" fill="none" stroke="#eee" stroke-width="1.3"/><circle cx="13.5" cy="12.5" r="3" fill="none" stroke="#eee" stroke-width="1.6"/><path d="M13.5 7.5 V9 M13.5 16 V17.5 M8.5 12.5 H10 M17 12.5 H18.5 M10 9 L11 10 M16 15 L17 16 M17 9 L16 10 M11 15 L10 16" stroke="#eee" stroke-width="1.4"/></svg><span class="t" style="left:1366.3px;top:1130px;font-size:14px;color:#f0f0f0;transform:scaleX(0.914);">Display Settings</span><svg class="b" style="left:1478.5px;top:1127.5px;" width="19" height="20" viewBox="0 0 19 20"><path d="M1 5 V1.5 H4.5 M14.5 1.5 H18 V5 M18 15 V18.5 H14.5 M4.5 18.5 H1 V15" fill="none" stroke="#eee" stroke-width="1.3"/><path d="M5.5 4.5 H10.5 L13.5 7.5 V15.5 H5.5 Z M10.5 4.5 V7.5 H13.5" fill="none" stroke="#eee" stroke-width="1.2"/></svg><span class="t" style="left:1500px;top:1130px;font-size:14px;color:#f0f0f0;transform:scaleX(0.863);">Focus</span><svg class="b" style="left:1563px;top:1128.5px;" width="19" height="17" viewBox="0 0 19 17"><path d="M9.5 2.5 Q5 0.5 1 2 V14.5 Q5 13 9.5 15 Q14 13 18 14.5 V2 Q14 0.5 9.5 2.5 V15" fill="none" stroke="#eee" stroke-width="1.3"/><path d="M3.5 5 H7 M3.5 7.5 H7 M3.5 10 H7 M12 5 H15.5 M12 7.5 H15.5 M12 10 H15.5" stroke="#eee" stroke-width="1"/></svg><div class="b" style="left:1598px;top:1123px;width:49.7px;height:27px;background:#646464;"></div><svg class="b" style="left:1615px;top:1128px;" width="15" height="18" viewBox="0 0 15 18"><rect x="0.7" y="0.7" width="13.6" height="16.6" fill="none" stroke="#eee" stroke-width="1.3"/><path d="M3 4 H12 M3 6.5 H12 M3 9 H12 M3 11.5 H12 M3 14 H12" stroke="#eee" stroke-width="1.1"/></svg><svg class="b" style="left:1663px;top:1128px;" width="20" height="19" viewBox="0 0 20 19"><path d="M9 16 H1 V1 H15 V7" fill="none" stroke="#eee" stroke-width="1.3"/><path d="M3 4 H13 M3 6.5 H13 M3 9 H8" stroke="#eee" stroke-width="1.1"/><circle cx="13.5" cy="13" r="5" fill="none" stroke="#eee" stroke-width="1.2"/><path d="M8.5 13 H18.5 M13.5 8 Q10.5 13 13.5 18 M13.5 8 Q16.5 13 13.5 18" fill="none" stroke="#eee" stroke-width="0.9"/></svg><div class="b" style="left:1705.5px;top:1136.6px;width:9.5px;height:1.2px;background:#eee;"></div><div class="b" style="left:1721px;top:1136.8px;width:125px;height:1px;background:#cfcfcf;"></div><div class="b" style="left:1781.5px;top:1130px;width:4.5px;height:14.5px;background:#d8d8d8;"></div><div class="b" style="left:1852px;top:1136.6px;width:9.5px;height:1.2px;background:#eee;"></div><div class="b" style="left:1856.2px;top:1132.4px;width:1.2px;height:9.5px;background:#eee;"></div><span class="t" style="left:1878.7px;top:1130px;font-size:14px;color:#f0f0f0;transform:scaleX(0.855);">100%</span></div><div class="win" style="left:0;top:1150px;width:1920px;height:50px;background:#42403e;"><svg class="b" style="left:19.3px;top:14px;" width="21" height="21" viewBox="0 0 21 21"><path d="M0 2.9 L9.2 1.7 V9.2 H0 Z M11.8 1.3 L21 0 V9.2 H11.8 Z M0 11.8 H9.2 V19.3 L0 18.1 Z M11.8 11.8 H21 V21 L11.8 19.7 Z" fill="#fff"/></svg><div class="b" style="left:60px;top:0.4px;width:359.8px;height:49.6px;background:#f2f2f2;"></div><svg class="b" style="left:73px;top:11px;" width="26" height="26" viewBox="0 0 26 26"><circle cx="15" cy="10" r="7.2" fill="none" stroke="#222" stroke-width="1.6"/><path d="M9.8 15.2 L2.5 22.8" stroke="#222" stroke-width="1.8"/></svg><span class="t" style="left:110.3px;top:17px;font-size:18.5px;color:#1f1f1f;">Type here to search</span><div class="b" style="left:325px;top:4.7px;width:90px;height:40px;background:#e3e3e3;border-radius:8px;"></div><svg class="b" style="left:350px;top:8px;" width="40" height="34" viewBox="0 0 40 34"><path d="M14 5 Q14 1.5 17 1.5 H23 Q26 1.5 26 5 V7 H22.5 V5 H17.5 V7 H14 Z" fill="#5a3b1a"/><rect x="1" y="7" width="38" height="25" rx="3" fill="#c8731a"/><rect x="1" y="7" width="38" height="10" rx="3" fill="#e08f2a"/><path d="M1 15 H39 V18 H1 Z" fill="#a85a12"/><rect x="16" y="14" width="8" height="7" rx="1" fill="#f6c83a"/><rect x="18" y="16" width="4" height="2.5" fill="#a87410"/></svg><svg class="b" style="left:437.4px;top:11.9px;" width="25.2" height="25.2" viewBox="0 0 24 24"><rect x="2.6" y="7.2" width="11.8" height="9.6" fill="none" stroke="#fff" stroke-width="1.4"/><path d="M2 3.7 H15 M2 20.3 H15 M20 2.5 V7 M20 9.5 V14.5 M20 17 V21.5" stroke="#fff" stroke-width="1.5" fill="none"/></svg><svg class="b" style="left:497.6px;top:8px;" width="32" height="32" viewBox="0 0 32 32"><path d="M2 5 H12 L14.5 8 H30 V26 H2 Z" fill="#f5b93d"/><path d="M2 10 H30 V26 H2 Z" fill="#fcd463"/><path d="M8 17 H24 V26 H8 Z" fill="#3b8fde"/><path d="M11 21 H21 V26 H11 Z" fill="#fcd463"/><rect x="2" y="25" width="28" height="1.5" fill="#d99a22"/></svg><svg class="b" style="left:560.6px;top:9.3px;" width="30.4" height="30.4" viewBox="0 0 32 32"><circle cx="16" cy="16" r="14.5" fill="#1ed760"/><path d="M8 11.5 Q17 9 25 13.5" fill="none" stroke="#000" stroke-width="2.6" stroke-linecap="round"/><path d="M9 16.5 Q17 14.5 23.5 18" fill="none" stroke="#000" stroke-width="2.2" stroke-linecap="round"/><path d="M10 21 Q16.5 19.5 22 22.3" fill="none" stroke="#000" stroke-width="1.8" stroke-linecap="round"/></svg><svg class="b" style="left:622.4px;top:10.9px;" width="31.3" height="31.3" viewBox="0 0 34 34"><path d="M10 6 L22 1 L33 7 V22 L22 28 L10 22 Z" fill="#1a78d2"/><path d="M10 6 L22 1 L33 7 L22 12 Z" fill="#4fb2f2"/><path d="M10 22 L22 13 L33 22 L22 28 Z" fill="#0f5aa8"/><rect x="0.5" y="8" width="17" height="17" rx="2" fill="#0f64b8"/><text x="9" y="21.5" font-size="13" font-weight="700" font-family="Liberation Sans,sans-serif" fill="#fff" text-anchor="middle">O</text><rect x="13" y="24" width="20" height="9" rx="1.5" fill="#16c8f0"/><text x="23" y="31.3" font-size="7.5" font-weight="700" font-family="Liberation Sans,sans-serif" fill="#0a2a5a" text-anchor="middle">NEW</text></svg><svg class="b" style="left:685.9px;top:11.4px;" width="31.3" height="31.3" viewBox="0 0 34 34"><circle cx="26" cy="7" r="3.2" fill="#5b63d3"/><circle cx="18.5" cy="5.5" r="4.5" fill="#7b83eb"/><path d="M14 11 H31 V21 Q31 26 25 26 H14 Z" fill="#5059c9"/><rect x="1" y="8" width="17" height="17" rx="2" fill="#4b53bc"/><text x="9.5" y="21.5" font-size="13" font-weight="700" font-family="Liberation Sans,sans-serif" fill="#fff" text-anchor="middle">T</text><rect x="8" y="24" width="14" height="8" rx="1.5" fill="#16c8f0"/><circle cx="23.5" cy="24" r="8.5" fill="#e2343f"/></svg><svg class="b" style="left:747px;top:9.3px;" width="30.4" height="30.4" viewBox="0 0 32 32"><circle cx="16" cy="16" r="15" fill="#f4f2ee"/><g stroke-width="3.4" stroke-linecap="round"><path d="M13 8 V14.5" stroke="#36c5f0"/><path d="M8 13 H9" stroke="#36c5f0"/><path d="M17.5 13 H24" stroke="#2eb67d"/><path d="M19 8 V9" stroke="#2eb67d"/><path d="M19 17.5 V24" stroke="#ecb22e"/><path d="M23 19 H24" stroke="#ecb22e"/><path d="M8 19 H14.5" stroke="#e01e5a"/><path d="M13 23 V24" stroke="#e01e5a"/></g></svg><svg class="b" style="left:808.4px;top:8.5px;" width="34" height="34" viewBox="0 0 34 34"><circle cx="16" cy="16" r="14.5" fill="#e33b2e"/><path d="M16 16 L3.5 8.8 A14.5 14.5 0 0 0 10.5 29.4 Z" fill="#2da94f"/><path d="M16 16 L10.5 29.4 A14.5 14.5 0 0 0 29.5 10.5 L16 10.5 Z" fill="#fdd231"/><circle cx="16" cy="16" r="6.6" fill="#fff"/><circle cx="16" cy="16" r="5.2" fill="#4285f4"/><circle cx="24.5" cy="25" r="8.8" fill="#e8e0da"/><path d="M17.5 31 Q18 19 24.5 18.5 Q31 19 31.5 31 Z" fill="#5a3a2a"/><ellipse cx="24.5" cy="24.5" rx="3.2" ry="4" fill="#e8b99a"/><path d="M19 33.5 Q24.5 27 30 33.5 Z" fill="#f3f3f3"/></svg><div class="b" style="left:856.5px;top:0px;width:55.5px;height:50px;background:#676563;"></div><div class="b" style="left:913px;top:0px;width:1px;height:50px;background:#5e5c5a;"></div><svg class="b" style="left:870px;top:8.5px;" width="32" height="32" viewBox="0 0 32 32"><rect x="8" y="2" width="23" height="28" rx="2" fill="#2b7cd3"/><rect x="8" y="2" width="23" height="7.5" fill="#41a5ee"/><rect x="8" y="16.5" width="23" height="7" fill="#185abd"/><rect x="8" y="23" width="23" height="7" fill="#103f91"/><rect x="1" y="8" width="17" height="17" rx="1.5" fill="#185abd"/><text x="9.5" y="21.3" font-size="12.5" font-weight="700" font-family="Liberation Sans,sans-serif" fill="#fff" text-anchor="middle">W</text></svg><svg class="b" style="left:929.8px;top:8.5px;" width="32" height="32" viewBox="0 0 32 32"><rect x="8" y="2" width="23" height="28" rx="2" fill="#21a366"/><rect x="8" y="2" width="11.5" height="7.5" fill="#21a366"/><rect x="19.5" y="2" width="11.5" height="7.5" fill="#33c481"/><rect x="8" y="9.5" width="11.5" height="7" fill="#107c41"/><rect x="19.5" y="9.5" width="11.5" height="7" fill="#21a366"/><rect x="8" y="16.5" width="23" height="7" fill="#107c41"/><rect x="8" y="23" width="23" height="7" fill="#185c37"/><rect x="1" y="8" width="17" height="17" rx="1.5" fill="#107c41"/><text x="9.5" y="21.3" font-size="12.5" font-weight="700" font-family="Liberation Sans,sans-serif" fill="#fff" text-anchor="middle">X</text></svg><div class="b" style="left:489px;top:47px;width:50.7px;height:3px;background:#7fd9d2;"></div><div class="b" style="left:613px;top:47px;width:50px;height:3px;background:#7fd9d2;"></div><div class="b" style="left:675px;top:47px;width:51px;height:3px;background:#7fd9d2;"></div><div class="b" style="left:799.5px;top:47px;width:50.5px;height:3px;background:#7fd9d2;"></div><div class="b" style="left:856.5px;top:47px;width:55.5px;height:3px;background:#7fd9d2;"></div><div class="b" style="left:656px;top:47px;width:7px;height:3px;background:#5f8f8b;"></div><svg class="b" style="left:1421px;top:13px;" width="33" height="24" viewBox="0 0 33 24"><path d="M2 9 H20 Q25 9 25 5.5 Q25 2 21.5 2 Q18.5 2 18.5 5" fill="none" stroke="#8fb6e8" stroke-width="2.6" stroke-linecap="round"/><path d="M2 14.5 H26 Q30.5 14.5 30.5 18.5 Q30.5 22 27 22 Q24 22 24 19" fill="none" stroke="#6f9fe0" stroke-width="2.6" stroke-linecap="round"/><path d="M8 4 H14 M6 19.5 H18" stroke="#a9c8ee" stroke-width="2.2" stroke-linecap="round"/></svg><span class="t" style="left:1463.6px;top:18px;font-size:17.5px;color:#fff;transform:scaleX(1.022);">High winds soon</span><svg class="b" style="left:1626px;top:20px;" width="17" height="10" viewBox="0 0 17 10"><path d="M1 9 L8.5 1.5 L16 9" fill="none" stroke="#fff" stroke-width="1.4"/></svg><svg class="b" style="left:1653px;top:15px;" width="24" height="19" viewBox="0 0 24 19"><path d="M5 14 Q0.5 14 1 10 Q1.5 6.5 5.5 7 Q7 2 12 3 Q15 3.5 16 6.5 Q20.5 6 21 10 Q21 14 17 14 Z" fill="#1e8fe8"/><circle cx="16" cy="12.5" r="5.5" fill="#1553b5"/><text x="16" y="16" font-size="8.5" font-weight="700" font-family="Liberation Serif,serif" fill="#fff" text-anchor="middle">i</text></svg><svg class="b" style="left:1684px;top:15px;" width="22" height="20" viewBox="0 0 22 20"><path d="M1.5 7 H5 L10 2.5 V17.5 L5 13 H1.5 Z" fill="none" stroke="#fff" stroke-width="1.3"/><path d="M13 7 Q15 10 13 13" fill="none" stroke="#fff" stroke-width="1.2"/><path d="M15.5 4.5 Q19 10 15.5 15.5" fill="none" stroke="#bbb" stroke-width="1.1"/><path d="M18 2.5 Q22.5 10 18 17.5" fill="none" stroke="#888" stroke-width="1"/></svg><svg class="b" style="left:1714px;top:17px;" width="23" height="16" viewBox="0 0 23 16"><path d="M1 4.5 H4 M2.5 2.5 V6.5" stroke="#fff" stroke-width="1.2"/><rect x="5" y="4" width="15" height="9" fill="#fff" stroke="#fff" stroke-width="1.2"/><rect x="21" y="6.5" width="1.6" height="4" fill="#fff"/><path d="M3 3 Q3 1 5 1" fill="none" stroke="#fff" stroke-width="1"/></svg><svg class="b" style="left:1746px;top:15px;" width="20" height="20" viewBox="0 0 20 20"><circle cx="17" cy="17" r="1.8" fill="#fff"/><path d="M11 18 A7 7 0 0 1 18 11" fill="none" stroke="#fff" stroke-width="1.5"/><path d="M6 18 A12 12 0 0 1 18 6" fill="none" stroke="#ccc" stroke-width="1.4"/><path d="M1 18 A17 17 0 0 1 18 1" fill="none" stroke="#999" stroke-width="1.3"/></svg><span class="t" style="left:1786px;top:7px;font-size:14px;color:#fff;transform:scaleX(0.990);">4:12 PM</span><span class="t" style="left:1778px;top:30px;font-size:14px;color:#fff;transform:scaleX(1.084);">4/16/2024</span><svg class="b" style="left:1866px;top:13px;" width="36" height="32" viewBox="0 0 36 32"><path d="M3 2 H23 V18 H8 L3 22.5 Z" fill="#fff"/><path d="M6 6.5 H20 M6 10 H20 M6 13.5 H15" stroke="#3e3c3a" stroke-width="1.3"/><circle cx="23" cy="21" r="9.5" fill="#3e3c3a" stroke="#fff" stroke-width="1.2"/><text x="23" y="26" font-size="13.5" font-family="Liberation Sans,sans-serif" fill="#fff" text-anchor="middle">22</text></svg><div class="b" style="left:1913.7px;top:0px;width:1px;height:50px;background:#8a8886;"></div></div><div class="win" style="left:1920px;top:0;width:1920px;height:1040px;background:#fff;"><div class="b" style="left:0px;top:0px;width:1920px;height:56px;background:#000;"></div><div class="b" style="left:6px;top:6.3px;width:27.5px;height:27.2px;background:#2a2a2a;border-radius:8px;"></div><svg class="b" style="left:15.5px;top:17.9px;" width="8.4" height="5.2" viewBox="0 0 8.4 5.2"><path d="M1 1 L4.2 4.2 L7.4 1" fill="none" stroke="#fff" stroke-width="1.5"/></svg><span class="t" style="left:48px;top:14px;font-size:13px;color:#21b5e8;font-weight:700;transform:scaleX(0.980);">X</span><span class="t" style="left:56px;top:14px;font-size:13px;color:#1a6fd0;font-weight:700;transform:scaleX(1.016);">M</span><div class="b" style="left:72px;top:8px;width:167px;height:25px;overflow:hidden;-webkit-mask-image:linear-gradient(90deg,#000 85%,transparent);mask-image:linear-gradient(90deg,#000 85%,transparent);"><span class="t" style="left:0.4px;top:6px;font-size:14.5px;color:#fff;transform:scaleX(0.799);">Distribute Survey | Qualtrics Exp</span></div><svg class="b" style="left:251px;top:15.5px;" width="10" height="10" viewBox="0 0 10 10"><path d="M1 1 L9 9 M9 1 L1 9" stroke="#fff" stroke-width="1.5"/></svg><div class="b" style="left:277.7px;top:6.3px;width:232.3px;height:33.7px;background:#2d2d2d;border-radius:10px 10px 0 0;"></div><svg class="b" style="left:267.7px;top:30px;" width="10" height="10" viewBox="0 0 10 10"><path d="M10 0 V10 H0 Q10 10 10 0 Z" fill="#2d2d2d"/></svg><svg class="b" style="left:510px;top:30px;" width="10" height="10" viewBox="0 0 10 10"><path d="M0 0 V10 H10 Q0 10 0 0 Z" fill="#2d2d2d"/></svg><span class="t" style="left:286px;top:14px;font-size:13px;color:#21b5e8;font-weight:700;transform:scaleX(0.980);">X</span><span class="t" style="left:294px;top:14px;font-size:13px;color:#1a6fd0;font-weight:700;transform:scaleX(1.016);">M</span><div class="b" style="left:310px;top:8px;width:168px;height:25px;overflow:hidden;-webkit-mask-image:linear-gradient(90deg,#000 85%,transparent);mask-image:linear-gradient(90deg,#000 85%,transparent);"><span class="t" style="left:0.4px;top:6px;font-size:14.5px;color:#fff;transform:scaleX(0.793);">Preview - Qualtrics Survey | Qua</span></div><svg class="b" style="left:489px;top:15.5px;" width="10" height="10" viewBox="0 0 10 10"><path d="M1 1 L9 9 M9 1 L1 9" stroke="#fff" stroke-width="1.5"/></svg><svg class="b" style="left:524px;top:15px;" width="11" height="11" viewBox="0 0 11 11"><path d="M5.5 0 V11 M0 5.5 H11" stroke="#8a8a8a" stroke-width="1.5"/></svg><div class="b" style="left:1800px;top:19.5px;width:11px;height:1px;background:#9a9a9a;"></div><svg class="b" style="left:1846px;top:14px;" width="11" height="11" viewBox="0 0 11 11"><rect x="0.5" y="2.5" width="8" height="8" rx="1" fill="none" stroke="#9a9a9a" stroke-width="1"/><path d="M2.5 2.5 V1.5 Q2.5 0.5 3.5 0.5 H9.5 Q10.5 0.5 10.5 1.5 V7.5 Q10.5 8.5 9.5 8.5 H8.5" fill="none" stroke="#9a9a9a" stroke-width="1"/></svg><svg class="b" style="left:1891.5px;top:14.5px;" width="11" height="11" viewBox="0 0 11 11"><path d="M0.5 0.5 L10.5 10.5 M10.5 0.5 L0.5 10.5" stroke="#9a9a9a" stroke-width="1"/></svg><div class="b" style="left:0px;top:40px;width:1920px;height:47px;background:#2d2d2d;border-radius:9px 9px 0 0;"></div><div class="b" style="left:0px;top:86px;width:1920px;height:1px;background:#1c1c1c;"></div><svg class="b" style="left:15px;top:55px;" width="16" height="16" viewBox="0 0 16 16"><path d="M14.5 8 H2.5 M7.5 2.5 L2 8 L7.5 13.5" fill="none" stroke="#6e6e6e" stroke-width="1.7"/></svg><svg class="b" style="left:50px;top:55px;" width="16" height="16" viewBox="0 0 16 16"><path d="M1.5 8 H13.5 M8.5 2.5 L14 8 L8.5 13.5" fill="none" stroke="#6e6e6e" stroke-width="1.7"/></svg><svg class="b" style="left:85.5px;top:54.5px;" width="17" height="17" viewBox="0 0 17 17"><path d="M14 5 A6.3 6.3 0 1 0 14.8 10.5" fill="none" stroke="#e8e8e8" stroke-width="1.8"/><path d="M15.2 1.5 V6.5 H10.2 Z" fill="#e8e8e8"/></svg><div class="b" style="left:120.5px;top:46px;width:1625.2px;height:34px;background:#3d3d3d;border-radius:17px;"></div><div class="b" style="left:126px;top:51.8px;width:23px;height:23px;background:#4d4d4d;border-radius:50%;"></div><svg class="b" style="left:129px;top:55px;" width="16" height="16" viewBox="0 0 16 16"><path d="M1.5 4.5 H8 M12.5 11.5 H14.5 M1.5 11.5 H5" stroke="#eee" stroke-width="1.7"/><circle cx="11" cy="4.5" r="2.2" fill="none" stroke="#eee" stroke-width="1.6"/><circle cx="8.2" cy="11.5" r="2.2" fill="none" stroke="#eee" stroke-width="1.6"/></svg><span class="t" style="left:157.6px;top:54px;font-size:16.5px;color:#fff;transform:scaleX(0.821);">pacificresearch.qualtrics.com</span><span class="t" style="left:332.8px;top:54px;font-size:16.5px;color:#b0b0b0;transform:scaleX(0.834);">/jfe/preview/previewId/8e7915d0-3184-491f-be92-bc2a2c54b6b1/SV_57SePKbS35aO6Wi?Q_CHL=preview&amp;Q_SurveyVersionID=current</span><svg class="b" style="left:1713px;top:54.5px;" width="18" height="17" viewBox="0 0 18 17"><path d="M9 1.6 L11.2 6.3 L16.4 6.9 L12.5 10.3 L13.6 15.4 L9 12.8 L4.4 15.4 L5.5 10.3 L1.6 6.9 L6.8 6.3 Z" fill="none" stroke="#c8c8c8" stroke-width="1.5" stroke-linejoin="round"/></svg><div class="b" style="left:1764px;top:55px;width:16.3px;height:15.8px;background:#11866f;border-radius:50% 50% 50% 12%;"></div><svg class="b" style="left:1764px;top:55px;" width="16.3" height="15.8" viewBox="0 0 16.3 15.8"><path d="M12.6 5.2 A5 5 0 1 0 13.4 8.2 H8.6" fill="none" stroke="#fff" stroke-width="1.7"/></svg><svg class="b" style="left:1800px;top:53.5px;" width="18" height="18" viewBox="0 0 18 18"><path d="M1.5 4.5 H5.8 Q5.6 1 7.8 1 Q10 1 9.8 4.5 H14 V8 Q17 7.6 17 9.6 Q17 11.6 14 11.2 V16 H1.5 V12 Q4.6 12.2 4.6 10.2 Q4.6 8.2 1.5 8.5 Z" fill="none" stroke="#ececec" stroke-width="1.6" stroke-linejoin="round"/></svg><div class="b" style="left:1833.8px;top:55px;width:2.2px;height:15.8px;background:#050505;border-radius:1px;"></div><div class="b" style="left:1852px;top:52.8px;width:20.2px;height:20.2px;background:#ece6e0;border-radius:50%;overflow:hidden;"><div class="b" style="left:4.5px;top:2px;width:12px;height:20px;background:#5b3a2b;border-radius:6px 6px 0 0;"></div><div class="b" style="left:7px;top:5px;width:7px;height:8.5px;background:#e6b798;border-radius:50%;"></div><div class="b" style="left:4.5px;top:14.5px;width:12px;height:8px;background:#f1f1f1;border-radius:5px 5px 0 0;"></div></div><div class="b" style="left:1896.2px;top:56px;width:3.6px;height:3.6px;background:#e8e8e8;border-radius:50%;"></div><div class="b" style="left:1896.2px;top:61.3px;width:3.6px;height:3.6px;background:#e8e8e8;border-radius:50%;"></div><div class="b" style="left:1896.2px;top:66.6px;width:3.6px;height:3.6px;background:#e8e8e8;border-radius:50%;"></div><div class="b" style="left:0px;top:87px;width:1920px;height:85px;background:#fff;"></div><div class="b" style="left:0px;top:171.5px;width:1920px;height:1.2px;background:#e9e9e9;"></div><div class="b" style="left:23.9px;top:111px;width:131.9px;height:35.9px;background:#0b6ed0;border-radius:3px;"></div><span class="t" style="left:45.4px;top:121px;font-size:15px;color:#fff;transform:scaleX(0.908);-webkit-text-stroke:0.3px #fff;">Restart Survey</span><div class="b" style="left:171.8px;top:111px;width:143.2px;height:35.9px;background:#fff;border:1.3px solid #0b6ed0;border-radius:3px;box-sizing:border-box;"></div><span class="t" style="left:193.7px;top:121px;font-size:15px;color:#0b6ed0;transform:scaleX(0.917);">Place Bookmark</span><div class="b" style="left:339px;top:111px;width:1px;height:36px;background:#d9d9d9;"></div><span class="t" style="left:378px;top:121px;font-size:15px;color:#404040;transform:scaleX(0.897);">Tools</span><svg class="b" style="left:469.3px;top:126px;" width="8" height="5" viewBox="0 0 8 5"><path d="M1 1 L4 4 L7 1" fill="none" stroke="#444" stroke-width="1.2"/></svg><div class="b" style="left:508px;top:111px;width:58px;height:35.9px;background:#e8e9e9;"></div><svg class="b" style="left:530px;top:119px;" width="14" height="20" viewBox="0 0 14 20"><rect x="1.2" y="1.2" width="11.6" height="17.6" rx="2.2" fill="none" stroke="#222" stroke-width="1.8"/><path d="M4.5 15 H9.5" stroke="#222" stroke-width="1.6"/></svg><div class="b" style="left:1734px;top:111px;width:162px;height:35.9px;background:#0b6ed0;border-radius:3px;"></div><svg class="b" style="left:1755px;top:119px;" width="22" height="20" viewBox="0 0 22 20"><circle cx="5" cy="10" r="3" fill="none" stroke="#fff" stroke-width="1.7"/><circle cx="16.5" cy="4.2" r="3" fill="none" stroke="#fff" stroke-width="1.7"/><circle cx="16.5" cy="15.8" r="3" fill="none" stroke="#fff" stroke-width="1.7"/><path d="M7.7 8.7 L13.8 5.5 M7.7 11.3 L13.8 14.5" stroke="#fff" stroke-width="1.7"/></svg><span class="t" style="left:1786.7px;top:121px;font-size:15px;color:#fff;transform:scaleX(0.909);-webkit-text-stroke:0.3px #fff;">Share Preview</span><div class="b" style="left:24px;top:195px;width:1468px;height:845px;background:#d9d9d9;"></div><div class="b" style="left:372.7px;top:195px;width:770.2px;height:805px;background:#fff;border-radius:0 0 6px 6px;"></div><div class="b" style="left:1492px;top:195px;width:17px;height:845px;background:#f1f1f1;"></div><svg class="b" style="left:1496.5px;top:201px;" width="8" height="6" viewBox="0 0 8 6"><path d="M4 1 L7.5 5 H0.5 Z" fill="#505050"/></svg><div class="b" style="left:1494px;top:537px;width:13px;height:487px;background:#c1c1c1;"></div><svg class="b" style="left:1496.5px;top:1027.5px;" width="8" height="6" viewBox="0 0 8 6"><path d="M4 5 L7.5 1 H0.5 Z" fill="#505050"/></svg><span class="t" style="left:408px;top:208px;font-size:14px;color:#8c8c8c;">Reading and making</span><span class="t" style="left:408px;top:230px;font-size:14px;color:#8c8c8c;">sense of data</span><span class="t" style="left:408px;top:252px;font-size:14px;color:#8c8c8c;">visualizations on the</span><span class="t" style="left:408px;top:274px;font-size:14px;color:#8c8c8c;">large video wall.</span><div class="b" style="left:617px;top:237px;width:22px;height:22px;background:#fff;border:2px solid #777;border-radius:50%;box-sizing:border-box;"></div><div class="b" style="left:728px;top:237px;width:22px;height:22px;background:#fff;border:2px solid #777;border-radius:50%;box-sizing:border-box;"></div><div class="b" style="left:838px;top:237px;width:22px;height:22px;background:#fff;border:2px solid #777;border-radius:50%;box-sizing:border-box;"></div><div class="b" style="left:949px;top:237px;width:22px;height:22px;background:#fff;border:2px solid #777;border-radius:50%;box-sizing:border-box;"></div><div class="b" style="left:1059px;top:237px;width:22px;height:22px;background:#fff;border:2px solid #777;border-radius:50%;box-sizing:border-box;"></div><span class="t" style="left:408px;top:313px;font-size:14px;color:#8c8c8c;">Reading and making</span><span class="t" style="left:408px;top:335px;font-size:14px;color:#8c8c8c;">sense of information</span><span class="t" style="left:408px;top:357px;font-size:14px;color:#8c8c8c;">shared in videos.</span><div class="b" style="left:617px;top:331px;width:22px;height:22px;background:#fff;border:2px solid #777;border-radius:50%;box-sizing:border-box;"></div><div class="b" style="left:728px;top:331px;width:22px;height:22px;background:#fff;border:2px solid #777;border-radius:50%;box-sizing:border-box;"></div><div class="b" style="left:838px;top:331px;width:22px;height:22px;background:#fff;border:2px solid #777;border-radius:50%;box-sizing:border-box;"></div><div class="b" style="left:949px;top:331px;width:22px;height:22px;background:#fff;border:2px solid #777;border-radius:50%;box-sizing:border-box;"></div><div class="b" style="left:1059px;top:331px;width:22px;height:22px;background:#fff;border:2px solid #777;border-radius:50%;box-sizing:border-box;"></div><span class="t" style="left:408px;top:396px;font-size:14px;color:#8c8c8c;">Understanding how to</span><span class="t" style="left:408px;top:418px;font-size:14px;color:#8c8c8c;">interact with</span><span class="t" style="left:408px;top:440px;font-size:14px;color:#8c8c8c;">individual parts of the</span><span class="t" style="left:408px;top:462px;font-size:14px;color:#8c8c8c;">exhibition.</span><div class="b" style="left:617px;top:425px;width:22px;height:22px;background:#fff;border:2px solid #777;border-radius:50%;box-sizing:border-box;"></div><div class="b" style="left:728px;top:425px;width:22px;height:22px;background:#fff;border:2px solid #777;border-radius:50%;box-sizing:border-box;"></div><div class="b" style="left:838px;top:425px;width:22px;height:22px;background:#fff;border:2px solid #777;border-radius:50%;box-sizing:border-box;"></div><div class="b" style="left:949px;top:425px;width:22px;height:22px;background:#fff;border:2px solid #777;border-radius:50%;box-sizing:border-box;"></div><div class="b" style="left:1059px;top:425px;width:22px;height:22px;background:#fff;border:2px solid #777;border-radius:50%;box-sizing:border-box;"></div><span class="t" style="left:408px;top:500px;font-size:14px;color:#8c8c8c;">Making connections</span><span class="t" style="left:408px;top:522px;font-size:14px;color:#8c8c8c;">between different</span><span class="t" style="left:408px;top:544px;font-size:14px;color:#8c8c8c;">parts of the exhibition.</span><div class="b" style="left:617px;top:517.7px;width:22px;height:22px;background:#fff;border:2px solid #777;border-radius:50%;box-sizing:border-box;"></div><div class="b" style="left:728px;top:517.7px;width:22px;height:22px;background:#fff;border:2px solid #777;border-radius:50%;box-sizing:border-box;"></div><div class="b" style="left:838px;top:517.7px;width:22px;height:22px;background:#fff;border:2px solid #777;border-radius:50%;box-sizing:border-box;"></div><div class="b" style="left:949px;top:517.7px;width:22px;height:22px;background:#fff;border:2px solid #777;border-radius:50%;box-sizing:border-box;"></div><div class="b" style="left:1059px;top:517.7px;width:22px;height:22px;background:#fff;border:2px solid #777;border-radius:50%;box-sizing:border-box;"></div><span class="t" style="left:388.2px;top:645px;font-size:24px;color:#8c8c8c;transform:scaleX(1.113);">Please share more about your ratings. (Optional)</span><div class="b" style="left:388.2px;top:702px;width:738px;height:145px;background:#f0f0f0;border:2px solid #707070;box-sizing:border-box;"></div><div class="b" style="left:390px;top:940px;width:84px;height:42.4px;background:#a0ccee;border-radius:3px;"></div><span class="t" style="left:410px;top:953px;font-size:18.5px;color:#1d1d1d;transform:scaleX(1.070);">Back</span><div class="b" style="left:1046px;top:940px;width:79.5px;height:42.4px;background:#a0ccee;border-radius:3px;"></div><span class="t" style="left:1066.5px;top:953px;font-size:18.5px;color:#1d1d1d;transform:scaleX(1.025);">Next</span><div class="b" style="left:1285px;top:999.8px;width:207px;height:41px;background:#b9b9bb;border-radius:6px 0 0 0;"></div><span class="t" style="left:1308.7px;top:1015px;font-size:14px;color:#858585;transform:scaleX(1.073);">Powered by Qualtrics</span><div class="b" style="left:1533px;top:281.7px;width:5px;height:27.4px;background:#252b33;border-radius:2px;"></div><div class="b" style="left:1533px;top:337.7px;width:5px;height:47px;background:#252b33;border-radius:2px;"></div><div class="b" style="left:1533px;top:397px;width:5px;height:47px;background:#252b33;border-radius:2px;"></div><div class="b" style="left:1888.5px;top:337.8px;width:5.5px;height:79.5px;background:#252b33;border-radius:2px;"></div><div class="b" style="left:1536px;top:195px;width:355.4px;height:780.8px;background:#252b33;border-radius:30px 30px 27px 27px;"></div><div class="b" style="left:1543.7px;top:226.6px;width:339.6px;height:735.2px;background:#fff;border-radius:15px;"></div><div class="b" style="left:1682.7px;top:211.1px;width:40.4px;height:6.2px;background:#15181d;border-radius:3.1px;"></div><div class="b" style="left:1734px;top:209px;width:10.4px;height:10.4px;background:#252b33;border-radius:50%;border:1.6px solid #15181d;box-sizing:border-box;"></div><span class="t" style="left:1559.1px;top:238px;font-size:13px;color:#111;font-weight:700;transform:scaleX(1.020);">12:29</span><svg class="b" style="left:1826px;top:239.2px;" width="13" height="10" viewBox="0 0 13 10"><rect x="0" y="7" width="2" height="3" fill="#111"/><rect x="3" y="5" width="2" height="5" fill="#111"/><rect x="6" y="2.5" width="2" height="7.5" fill="#111"/><rect x="9.5" y="0" width="1.6" height="10" fill="#bbb"/></svg><div class="b" style="left:1850px;top:240.9px;width:16.5px;height:7px;background:#111;border-radius:2px;"></div><div class="b" style="left:1866.5px;top:243px;width:1.3px;height:2.8px;background:#111;"></div><div class="b" style="left:1564px;top:265px;width:298.7px;height:48px;background:#ededed;"></div><div class="b" style="left:1578px;top:279px;width:20px;height:20px;background:#fff;border:2px solid #777;border-radius:50%;box-sizing:border-box;"></div><span class="t" style="left:1612px;top:283px;font-size:13.5px;color:#8c8c8c;">2 - Somewhat Difficult</span><div class="b" style="left:1564px;top:319px;width:298.7px;height:48px;background:#ededed;"></div><div class="b" style="left:1578px;top:333px;width:20px;height:20px;background:#fff;border:2px solid #777;border-radius:50%;box-sizing:border-box;"></div><span class="t" style="left:1612px;top:337px;font-size:13.5px;color:#8c8c8c;">3 - Neither Easy nor Difficult</span><div class="b" style="left:1564px;top:373px;width:298.7px;height:48px;background:#ededed;"></div><div class="b" style="left:1578px;top:387px;width:20px;height:20px;background:#fff;border:2px solid #777;border-radius:50%;box-sizing:border-box;"></div><span class="t" style="left:1612px;top:391px;font-size:13.5px;color:#8c8c8c;">4 - Somewhat Easy</span><div class="b" style="left:1564px;top:427px;width:298.7px;height:48px;background:#ededed;"></div><div class="b" style="left:1578px;top:441px;width:20px;height:20px;background:#fff;border:2px solid #777;border-radius:50%;box-sizing:border-box;"></div><span class="t" style="left:1612px;top:445px;font-size:13.5px;color:#8c8c8c;">5 - Very Easy</span><span class="t" style="left:1564px;top:582px;font-size:19px;color:#8c8c8c;transform:scaleX(1.104);">Please share more about your</span><span class="t" style="left:1564px;top:610px;font-size:19px;color:#8c8c8c;transform:scaleX(1.152);">ratings. (Optional)</span><div class="b" style="left:1564px;top:657px;width:298.7px;height:114px;background:#f0f0f0;border:2px solid #707070;box-sizing:border-box;"></div><div class="b" style="left:1556px;top:858px;width:74.4px;height:36.7px;background:#a0ccee;border-radius:3px;"></div><span class="t" style="left:1576px;top:869px;font-size:15.5px;color:#1d1d1d;transform:scaleX(1.030);">Back</span><div class="b" style="left:1798.8px;top:858px;width:72px;height:36.7px;background:#a0ccee;border-radius:3px;"></div><span class="t" style="left:1819px;top:869px;font-size:15.5px;color:#1d1d1d;">Next</span><div class="b" style="left:1543.7px;top:907.2px;width:339.6px;height:54.6px;background:#dadada;border-radius:0 0 15px 15px;"></div><span class="t" style="left:1633.5px;top:933px;font-size:14px;color:#858585;transform:scaleX(1.083);">Powered by Qualtrics</span></div><div class="win" style="left:1920px;top:1040px;width:1920px;height:40px;background:#42403e;"><svg class="b" style="left:15.1px;top:12px;" width="17" height="17" viewBox="0 0 17 17"><path d="M0 2.4 L7.5 1.4 V7.5 H0 Z M9.5 1.0 L17 0 V7.5 H9.5 Z M0 9.5 H7.5 V15.6 L0 14.6 Z M9.5 9.5 H17 V17 L9.5 16.0 Z" fill="#fff"/></svg><svg class="b" style="left:60px;top:8px;" width="24" height="24" viewBox="0 0 24 24"><circle cx="14" cy="10" r="7.3" fill="none" stroke="#fff" stroke-width="2.2"/><path d="M9 15.5 L2.5 22" stroke="#fff" stroke-width="2.6"/></svg><svg class="b" style="left:109.3px;top:10.3px;" width="20.4" height="20.4" viewBox="0 0 24 24"><rect x="2.6" y="7.2" width="11.8" height="9.6" fill="none" stroke="#fff" stroke-width="1.4"/><path d="M2 3.7 H15 M2 20.3 H15 M20 2.5 V7 M20 9.5 V14.5 M20 17 V21.5" stroke="#fff" stroke-width="1.5" fill="none"/></svg><svg class="b" style="left:158px;top:7.2px;" width="25.6" height="25.6" viewBox="0 0 32 32"><path d="M2 5 H12 L14.5 8 H30 V26 H2 Z" fill="#f5b93d"/><path d="M2 10 H30 V26 H2 Z" fill="#fcd463"/><path d="M8 17 H24 V26 H8 Z" fill="#3b8fde"/><path d="M11 21 H21 V26 H11 Z" fill="#fcd463"/><rect x="2" y="25" width="28" height="1.5" fill="#d99a22"/></svg><svg class="b" style="left:206.8px;top:8.3px;" width="24.3" height="24.3" viewBox="0 0 32 32"><circle cx="16" cy="16" r="14.5" fill="#1ed760"/><path d="M8 11.5 Q17 9 25 13.5" fill="none" stroke="#000" stroke-width="2.6" stroke-linecap="round"/><path d="M9 16.5 Q17 14.5 23.5 18" fill="none" stroke="#000" stroke-width="2.2" stroke-linecap="round"/><path d="M10 21 Q16.5 19.5 22 22.3" fill="none" stroke="#000" stroke-width="1.8" stroke-linecap="round"/></svg><svg class="b" style="left:254.9px;top:7.4px;" width="27.2" height="27.2" viewBox="0 0 34 34"><path d="M10 6 L22 1 L33 7 V22 L22 28 L10 22 Z" fill="#1a78d2"/><path d="M10 6 L22 1 L33 7 L22 12 Z" fill="#4fb2f2"/><path d="M10 22 L22 13 L33 22 L22 28 Z" fill="#0f5aa8"/><rect x="0.5" y="8" width="17" height="17" rx="2" fill="#0f64b8"/><text x="9" y="21.5" font-size="13" font-weight="700" font-family="Liberation Sans,sans-serif" fill="#fff" text-anchor="middle">O</text><rect x="13" y="24" width="20" height="9" rx="1.5" fill="#16c8f0"/><text x="23" y="31.3" font-size="7.5" font-weight="700" font-family="Liberation Sans,sans-serif" fill="#0a2a5a" text-anchor="middle">NEW</text></svg><svg class="b" style="left:303.9px;top:7.4px;" width="27.2" height="27.2" viewBox="0 0 34 34"><circle cx="26" cy="7" r="3.2" fill="#5b63d3"/><circle cx="18.5" cy="5.5" r="4.5" fill="#7b83eb"/><path d="M14 11 H31 V21 Q31 26 25 26 H14 Z" fill="#5059c9"/><rect x="1" y="8" width="17" height="17" rx="2" fill="#4b53bc"/><text x="9.5" y="21.5" font-size="13" font-weight="700" font-family="Liberation Sans,sans-serif" fill="#fff" text-anchor="middle">T</text><rect x="8" y="24" width="14" height="8" rx="1.5" fill="#16c8f0"/><circle cx="23.5" cy="24" r="8.5" fill="#e2343f"/></svg><svg class="b" style="left:354.3px;top:8.3px;" width="24.3" height="24.3" viewBox="0 0 32 32"><circle cx="16" cy="16" r="15" fill="#f4f2ee"/><g stroke-width="3.4" stroke-linecap="round"><path d="M13 8 V14.5" stroke="#36c5f0"/><path d="M8 13 H9" stroke="#36c5f0"/><path d="M17.5 13 H24" stroke="#2eb67d"/><path d="M19 8 V9" stroke="#2eb67d"/><path d="M19 17.5 V24" stroke="#ecb22e"/><path d="M23 19 H24" stroke="#ecb22e"/><path d="M8 19 H14.5" stroke="#e01e5a"/><path d="M13 23 V24" stroke="#e01e5a"/></g></svg><svg class="b" style="left:402.4px;top:7.9px;" width="27.2" height="27.2" viewBox="0 0 34 34"><circle cx="16" cy="16" r="14.5" fill="#e33b2e"/><path d="M16 16 L3.5 8.8 A14.5 14.5 0 0 0 10.5 29.4 Z" fill="#2da94f"/><path d="M16 16 L10.5 29.4 A14.5 14.5 0 0 0 29.5 10.5 L16 10.5 Z" fill="#fdd231"/><circle cx="16" cy="16" r="6.6" fill="#fff"/><circle cx="16" cy="16" r="5.2" fill="#4285f4"/><circle cx="24.5" cy="25" r="8.8" fill="#e8e0da"/><path d="M17.5 31 Q18 19 24.5 18.5 Q31 19 31.5 31 Z" fill="#5a3a2a"/><ellipse cx="24.5" cy="24.5" rx="3.2" ry="4" fill="#e8b99a"/><path d="M19 33.5 Q24.5 27 30 33.5 Z" fill="#f3f3f3"/></svg><div class="b" style="left:441px;top:0px;width:44.5px;height:40px;background:#676563;"></div><div class="b" style="left:487px;top:0px;width:1px;height:40px;background:#5a5856;"></div><svg class="b" style="left:451.7px;top:7.7px;" width="25.6" height="25.6" viewBox="0 0 32 32"><rect x="8" y="2" width="23" height="28" rx="2" fill="#2b7cd3"/><rect x="8" y="2" width="23" height="7.5" fill="#41a5ee"/><rect x="8" y="16.5" width="23" height="7" fill="#185abd"/><rect x="8" y="23" width="23" height="7" fill="#103f91"/><rect x="1" y="8" width="17" height="17" rx="1.5" fill="#185abd"/><text x="9.5" y="21.3" font-size="12.5" font-weight="700" font-family="Liberation Sans,sans-serif" fill="#fff" text-anchor="middle">W</text></svg><svg class="b" style="left:500.7px;top:7.7px;" width="25.6" height="25.6" viewBox="0 0 32 32"><rect x="8" y="2" width="23" height="28" rx="2" fill="#21a366"/><rect x="8" y="2" width="11.5" height="7.5" fill="#21a366"/><rect x="19.5" y="2" width="11.5" height="7.5" fill="#33c481"/><rect x="8" y="9.5" width="11.5" height="7" fill="#107c41"/><rect x="19.5" y="9.5" width="11.5" height="7" fill="#21a366"/><rect x="8" y="16.5" width="23" height="7" fill="#107c41"/><rect x="8" y="23" width="23" height="7" fill="#185c37"/><rect x="1" y="8" width="17" height="17" rx="1.5" fill="#107c41"/><text x="9.5" y="21.3" font-size="12.5" font-weight="700" font-family="Liberation Sans,sans-serif" fill="#fff" text-anchor="middle">X</text></svg><div class="b" style="left:151px;top:38px;width:40px;height:2px;background:#7fd9d2;"></div><div class="b" style="left:249px;top:38px;width:40px;height:2px;background:#7fd9d2;"></div><div class="b" style="left:298px;top:38px;width:40px;height:2px;background:#7fd9d2;"></div><div class="b" style="left:396px;top:38px;width:40px;height:2px;background:#7fd9d2;"></div><div class="b" style="left:441px;top:38px;width:47.8px;height:2px;background:#7fd9d2;"></div><div class="b" style="left:283px;top:38px;width:6px;height:2px;background:#5f8f8b;"></div><span class="t" style="left:1866.5px;top:5px;font-size:12.5px;color:#fff;transform:scaleX(0.906);">4:12 PM</span><span class="t" style="left:1861.5px;top:23px;font-size:12.5px;color:#fff;transform:scaleX(0.953);">4/16/2024</span></div></div></div><div class="b th" style="left:574px;top:839.3px;width:780px;height:244px;overflow:hidden;background:#000;"><div class="b" style="left:0;top:0;width:3840px;height:1200px;transform:scale(0.203125);transform-origin:0 0;"><div class="win" style="left:0;top:0;width:1920px;height:1150px;background:#525252;"><svg class="b" style="left:20px;top:20px;" width="20" height="20" viewBox="0 0 20 20"><rect x="5" y="1" width="15" height="18" rx="1.5" fill="#2b7cd3"/><rect x="5" y="1" width="15" height="6" fill="#41a5ee"/><rect x="5" y="13" width="15" height="6" fill="#185abd"/><rect x="0" y="4.5" width="11" height="11" rx="1" fill="#185abd"/><text x="5.5" y="13.6" font-family="Liberation Sans,sans-serif" font-weight="700" font-size="9.5" fill="#a6a6a6" text-anchor="middle">W</text></svg><span class="t" style="left:61px;top:23px;font-size:15.5px;color:#a6a6a6;transform:scaleX(0.937);">AutoSave</span><div class="b" style="left:132.3px;top:17px;width:53px;height:24.7px;background:#6b6b6b;border:1px solid #b5b5b5;border-radius:13px;box-sizing:border-box;"></div><div class="b" style="left:136px;top:21px;width:17.6px;height:17.6px;background:#a6a6a6;border-radius:50%;"></div><span class="t" style="left:160.6px;top:24px;font-size:13.5px;color:#a6a6a6;transform:scaleX(0.924);">Off</span><svg class="b" style="left:201px;top:19px;" width="22" height="22" viewBox="0 0 22 22"><path d="M2.5 2.5 H16.5 L19.5 5.5 V19.5 H2.5 Z" fill="none" stroke="#a6a6a6" stroke-width="1.4"/><path d="M6 2.5 V8.5 H15 V2.5 M6 19.5 V13 H16 V19.5" fill="none" stroke="#a6a6a6" stroke-width="1.4"/></svg><svg class="b" style="left:236px;top:19px;" width="22" height="22" viewBox="0 0 22 22"><path d="M3 3 V9.5 H9.5" fill="none" stroke="#a6a6a6" stroke-width="1.4"/><path d="M3.5 9 C7 3.5 14 2.5 17.5 6.5 C20.5 10 18 14.5 14.5 16.5 L8 20.5" fill="none" stroke="#a6a6a6" stroke-width="1.4"/></svg><svg class="b" style="left:264.3px;top:28px;" width="8" height="5" viewBox="0 0 8 5"><path d="M1 1 L4 4 L7 1" fill="none" stroke="#a6a6a6" stroke-width="1.2"/></svg><svg class="b" style="left:283.5px;top:19px;" width="22" height="22" viewBox="0 0 22 22"><path d="M3 2 V8.5 H9.5" fill="none" stroke="#a6a6a6" stroke-width="1.4"/><path d="M3.3 8.3 A 8.7 8.7 0 1 1 2.3 12" fill="none" stroke="#a6a6a6" stroke-width="1.4"/></svg><svg class="b" style="left:324px;top:25px;" width="11" height="11" viewBox="0 0 11 11"><path d="M1 1.5 H10" stroke="#a6a6a6" stroke-width="1.2"/><path d="M1.5 5 L5.5 9 L9.5 5" fill="none" stroke="#a6a6a6" stroke-width="1.2"/></svg><span class="t" style="left:365.6px;top:23px;font-size:15.5px;color:#a6a6a6;transform:scaleX(0.967);">Document1  -  Word</span><div class="b" style="left:711px;top:10.5px;width:517px;height:38.5px;background:#bebebe;border-radius:4px;"></div><svg class="b" style="left:737px;top:19px;" width="20" height="20" viewBox="0 0 20 20"><circle cx="12" cy="8" r="5.6" fill="none" stroke="#444" stroke-width="1.4"/><path d="M8 12 L2 18" stroke="#444" stroke-width="1.4"/></svg><span class="t" style="left:773.8px;top:21px;font-size:17px;color:#4a4a4a;transform:scaleX(0.919);">Search</span><span class="t" style="left:1573.9px;top:23px;font-size:15.5px;color:#a6a6a6;transform:scaleX(0.934);">Taline Kuyumjian</span><div class="b" style="left:1695px;top:15px;width:30px;height:30px;background:#d2d2d2;border-radius:50%;"></div><svg class="b" style="left:1695px;top:15px;" width="30" height="30" viewBox="0 0 30 30"><circle cx="15" cy="11.5" r="4.2" fill="none" stroke="#555" stroke-width="1.2"/><path d="M7 23 C7 17 23 17 23 23 Z" fill="none" stroke="#555" stroke-width="1.2"/></svg><div class="b" style="left:1764px;top:29.5px;width:13px;height:1.3px;background:#a6a6a6;"></div><svg class="b" style="left:1822px;top:23px;" width="15" height="15" viewBox="0 0 15 15"><rect x="1" y="3.5" width="9.5" height="9.5" rx="1.5" fill="none" stroke="#a6a6a6" stroke-width="1.2"/><path d="M4 3 V2.5 Q4 1 5.5 1 H11.5 Q13.5 1 13.5 3 V9 Q13.5 10.5 12 10.5 H11" fill="none" stroke="#a6a6a6" stroke-width="1.2"/></svg><svg class="b" style="left:1883px;top:23px;" width="14" height="14" viewBox="0 0 14 14"><path d="M1 1 L13 13 M13 1 L1 13" stroke="#a6a6a6" stroke-width="1.3"/></svg><span class="t" style="left:27.4px;top:73px;font-size:16px;color:#fff;transform:scaleX(0.923);">File</span><span class="t" style="left:154.3px;top:73px;font-size:16px;color:#fff;transform:scaleX(1.047);">Insert</span><span class="t" style="left:220.4px;top:73px;font-size:16px;color:#fff;transform:scaleX(1.034);">Draw</span><span class="t" style="left:283.2px;top:73px;font-size:16px;color:#fff;transform:scaleX(1.020);">Design</span><span class="t" style="left:358.3px;top:73px;font-size:16px;color:#fff;transform:scaleX(1.043);">Layout</span><span class="t" style="left:434.2px;top:73px;font-size:16px;color:#fff;">References</span><span class="t" style="left:540.4px;top:73px;font-size:16px;color:#fff;transform:scaleX(1.067);">Mailings</span><span class="t" style="left:628px;top:73px;font-size:16px;color:#fff;transform:scaleX(0.995);">Review</span><span class="t" style="left:705.2px;top:73px;font-size:16px;color:#fff;transform:scaleX(1.041);">View</span><span class="t" style="left:765.2px;top:73px;font-size:16px;color:#fff;transform:scaleX(1.051);">Help</span><span class="t" style="left:84.4px;top:73px;font-size:16px;color:#fff;font-weight:700;transform:scaleX(1.048);">Home</span><div class="b" style="left:84.4px;top:92.4px;width:47.6px;height:2.4px;background:#a9c3f7;border-radius:1px;"></div><div class="b" style="left:1550.8px;top:64.5px;width:123.7px;height:28.7px;background:#c6c6c6;border-radius:4px;border:1px solid #9a9a9a;box-sizing:border-box;"></div><svg class="b" style="left:1560px;top:70px;" width="17" height="16" viewBox="0 0 17 16"><path d="M2 2 H14 V10.5 H7 L4 13.5 V10.5 H2 Z" fill="none" stroke="#444" stroke-width="1.2"/></svg><span class="t" style="left:1580.6px;top:71px;font-size:16px;color:#3b3b3b;transform:scaleX(1.061);">Comments</span><div class="b" style="left:1685.7px;top:64.5px;width:107.7px;height:28.7px;background:#c6c6c6;border-radius:4px;border:1px solid #9a9a9a;box-sizing:border-box;"></div><svg class="b" style="left:1689px;top:68px;" width="22" height="22" viewBox="0 0 22 22"><path d="M3 19 L4.5 13.5 L15 3 Q16.5 1.8 18 3.2 Q19.4 4.8 18.2 6.2 L7.7 16.7 Z M13.5 4.5 L16.7 7.7" fill="none" stroke="#444" stroke-width="1.2"/></svg><span class="t" style="left:1715.8px;top:71px;font-size:16px;color:#3b3b3b;transform:scaleX(1.051);">Editing</span><svg class="b" style="left:1773.5px;top:76.5px;" width="8" height="5" viewBox="0 0 8 5"><path d="M1 1 L4 4 L7 1" fill="none" stroke="#444" stroke-width="1.2"/></svg><div class="b" style="left:1804px;top:64.5px;width:100.8px;height:28.7px;background:#7ea9f1;border-radius:4px;"></div><svg class="b" style="left:1812px;top:70px;" width="17" height="17" viewBox="0 0 17 17"><path d="M7 4 H2.5 V14.5 H13 V11" fill="none" stroke="#1d2d48" stroke-width="1.2"/><path d="M10 2 L14.5 6 L10 10 M14.5 6 H10 Q6 6 6 11" fill="none" stroke="#1d2d48" stroke-width="1.2"/></svg><span class="t" style="left:1834.6px;top:71px;font-size:16px;color:#1d2d48;transform:scaleX(0.984);">Share</span><svg class="b" style="left:1890.5px;top:76.5px;" width="8" height="5" viewBox="0 0 8 5"><path d="M1 1 L4 4 L7 1" fill="none" stroke="#1d2d48" stroke-width="1.2"/></svg><div class="b" style="left:10px;top:98px;width:1900px;height:124px;background:#bfbfbf;border-radius:10px;box-shadow:0 2px 3px rgba(0,0,0,.45);"></div><svg class="b" style="left:36px;top:107px;" width="36" height="40" viewBox="0 0 36 40"><rect x="1.8" y="6.8" width="24.8" height="29" fill="#f7c64f" stroke="#9c7a27" stroke-width="1.1"/><rect x="4.8" y="10.4" width="19" height="22.4" fill="#e3e3e3"/><path d="M6.6 10.4 V6.2 H10.3 Q10.6 1.9 14.3 1.9 Q18 1.9 18.3 6.2 H22 V10.4 Z" fill="#f2f2f2" stroke="#5a5a5a" stroke-width="1.2"/><rect x="18.3" y="16.9" width="16.2" height="21" fill="#e4e4e4" stroke="#646464" stroke-width="1.5"/></svg><span class="t" style="left:34.3px;top:153px;font-size:15.5px;color:#3a3a3a;transform:scaleX(0.840);">Paste</span><svg class="b" style="left:46.4px;top:177px;" width="8" height="5" viewBox="0 0 8 5"><path d="M1 1 L4 4 L7 1" fill="none" stroke="#444" stroke-width="1.2"/></svg><svg class="b" style="left:87px;top:107px;" width="13" height="21" viewBox="0 0 13 21"><path d="M2.5 1 L9 14 M10.5 1 L4 14" stroke="#8f8f8f" stroke-width="1.1" fill="none"/><circle cx="3" cy="16.8" r="2.3" fill="none" stroke="#8f8f8f" stroke-width="1.1"/><circle cx="10" cy="16.8" r="2.3" fill="none" stroke="#8f8f8f" stroke-width="1.1"/></svg><svg class="b" style="left:83px;top:139px;" width="22" height="20" viewBox="0 0 22 20"><path d="M1 1 H8 V15 H1 Z" fill="#d2d2d2" stroke="#8f8f8f" stroke-width="1.1"/><path d="M9 4 H16 L20 8 V19 H9 Z" fill="#d6d6d6" stroke="#8f8f8f" stroke-width="1.1"/><path d="M12 11 H17 M12 14 H17" stroke="#8f8f8f" stroke-width="1"/></svg><svg class="b" style="left:84px;top:171px;" width="21" height="19" viewBox="0 0 21 19"><path d="M14 6 L18 1.5 Q19.5 0.5 20 2 L16.5 8" fill="#e8e8e8" stroke="#555" stroke-width="1.1"/><path d="M8 5 L17 10 L15 13 L6 8 Z" fill="#e8e8e8" stroke="#555" stroke-width="1.1"/><path d="M6 8 L15 13 Q12 17 8.5 18 L1 13 Q4 11 6 8 Z" fill="#f3c969" stroke="#8a6a1c" stroke-width="1.1"/></svg><span class="t" style="left:27.3px;top:203px;font-size:13.5px;color:#3a3a3a;transform:scaleX(0.990);">Clipboard</span><svg class="b" style="left:104.3px;top:205.3px;" width="10" height="10" viewBox="0 0 10 10"><path d="M0.6 4 V0.6 H4 M9.4 5 V9.4 H5" fill="none" stroke="#4a4a4a" stroke-width="1.1"/><path d="M3 3 L8.6 8.6 M8.6 4.5 V8.6 H4.5" fill="none" stroke="#4a4a4a" stroke-width="1.1"/></svg><div class="b" style="left:118px;top:105px;width:1px;height:112px;background:#9c9c9c;"></div><div class="b" style="left:129px;top:112.4px;width:155.5px;height:29.3px;border:1px solid #7d7d7d;border-radius:4px;box-sizing:border-box;"></div><span class="t" style="left:132.4px;top:120px;font-size:16px;color:#262626;transform:scaleX(0.926);">Segoe UI Historic (B</span><svg class="b" style="left:273.5px;top:125.5px;" width="8" height="5" viewBox="0 0 8 5"><path d="M1 1 L4 4 L7 1" fill="none" stroke="#333" stroke-width="1.2"/></svg><div class="b" style="left:287.5px;top:112.4px;width:52.5px;height:29.3px;border:1px solid #7d7d7d;border-radius:4px;box-sizing:border-box;"></div><span class="t" style="left:291px;top:120px;font-size:16px;color:#262626;transform:scaleX(0.815);">10</span><svg class="b" style="left:329.4px;top:125.5px;" width="8" height="5" viewBox="0 0 8 5"><path d="M1 1 L4 4 L7 1" fill="none" stroke="#333" stroke-width="1.2"/></svg><span class="t" style="left:349.4px;top:114px;font-size:21px;color:#565656;transform:scaleX(0.971);">A</span><svg class="b" style="left:361px;top:115px;" width="8" height="6" viewBox="0 0 8 6"><path d="M1 5 L4 1.5 L7 5" fill="none" stroke="#1a6dbd" stroke-width="1.3"/></svg><span class="t" style="left:383.4px;top:119px;font-size:16.5px;color:#565656;transform:scaleX(0.990);">A</span><svg class="b" style="left:392.5px;top:115px;" width="8" height="6" viewBox="0 0 8 6"><path d="M1 1.5 L4 5 L7 1.5" fill="none" stroke="#1a6dbd" stroke-width="1.3"/></svg><div class="b" style="left:407px;top:112.4px;width:1px;height:29.3px;background:#9c9c9c;"></div><span class="t" style="left:416px;top:120px;font-size:16px;color:#565656;transform:scaleX(1.007);">Aa</span><svg class="b" style="left:442.5px;top:125.5px;" width="8" height="5" viewBox="0 0 8 5"><path d="M1 1 L4 4 L7 1" fill="none" stroke="#444" stroke-width="1.2"/></svg><div class="b" style="left:462.1px;top:112.4px;width:1px;height:29.3px;background:#9c9c9c;"></div><span class="t" style="left:470.5px;top:114px;font-size:21px;color:#565656;transform:scaleX(0.921);">A</span><svg class="b" style="left:476.5px;top:124px;" width="15" height="14" viewBox="0 0 15 14"><path d="M1 8 L7 2 L13.5 6.5 L7.5 12.5 Z" fill="#f4d7ec" stroke="#a4207d" stroke-width="1.3"/><path d="M4 5 L10.5 9.5" stroke="#a4207d" stroke-width="1.1"/></svg><span class="t" style="left:139.7px;top:157px;font-size:16.5px;color:#565656;font-weight:700;transform:scaleX(0.764);">B</span><span class="t" style="left:172.7px;top:157px;font-size:17.5px;color:#565656;font-family:'Liberation Serif',serif;font-style:italic;transform:scaleX(1.132);">I</span><span class="t" style="left:201.8px;top:157px;font-size:16.5px;color:#565656;transform:scaleX(0.915);">U</span><div class="b" style="left:201.8px;top:172.8px;width:10.9px;height:1.3px;background:#565656;"></div><svg class="b" style="left:227px;top:165.5px;" width="8" height="5" viewBox="0 0 8 5"><path d="M1 1 L4 4 L7 1" fill="none" stroke="#444" stroke-width="1.2"/></svg><span class="t" style="left:252px;top:158px;font-size:16px;color:#565656;transform:scaleX(0.787);">ab</span><div class="b" style="left:249.4px;top:167.8px;width:19.3px;height:1.2px;background:#565656;"></div><span class="t" style="left:287px;top:157px;font-size:17px;color:#565656;font-weight:700;transform:scaleX(0.899);">x</span><span class="t" style="left:295.6px;top:170px;font-size:9px;color:#1a6dbd;font-weight:700;transform:scaleX(0.919);">2</span><span class="t" style="left:319px;top:157px;font-size:17px;color:#565656;font-weight:700;transform:scaleX(0.899);">x</span><span class="t" style="left:327.4px;top:156px;font-size:9px;color:#1a6dbd;font-weight:700;">2</span><div class="b" style="left:339.9px;top:152px;width:1px;height:29.4px;background:#9c9c9c;"></div><span class="t" style="left:349.5px;top:156px;font-size:23.5px;color:#dcebfa;font-weight:700;-webkit-text-stroke:1.3px #1a6dbd;">A</span><svg class="b" style="left:375.4px;top:165.5px;" width="8" height="5" viewBox="0 0 8 5"><path d="M1 1 L4 4 L7 1" fill="none" stroke="#444" stroke-width="1.2"/></svg><svg class="b" style="left:400px;top:155px;" width="21" height="17" viewBox="0 0 21 17"><path d="M13 1.5 L18 4.5 L10 14 L6 11.5 Z" fill="#ededed" stroke="#555" stroke-width="1.1"/><path d="M6 11.5 L10 14 L7 16 L3 15.5 Z" fill="#555"/></svg><div class="b" style="left:400px;top:172px;width:20px;height:5px;background:#ffff00;"></div><svg class="b" style="left:429px;top:165.5px;" width="8" height="5" viewBox="0 0 8 5"><path d="M1 1 L4 4 L7 1" fill="none" stroke="#444" stroke-width="1.2"/></svg><span class="t" style="left:453px;top:154px;font-size:19px;color:#565656;transform:scaleX(1.223);">A</span><div class="b" style="left:451px;top:172px;width:19.8px;height:5px;background:#ee1111;"></div><svg class="b" style="left:480.5px;top:165.5px;" width="8" height="5" viewBox="0 0 8 5"><path d="M1 1 L4 4 L7 1" fill="none" stroke="#444" stroke-width="1.2"/></svg><span class="t" style="left:289.4px;top:203px;font-size:13.5px;color:#3a3a3a;transform:scaleX(0.892);">Font</span><svg class="b" style="left:490px;top:205.3px;" width="10" height="10" viewBox="0 0 10 10"><path d="M0.6 4 V0.6 H4 M9.4 5 V9.4 H5" fill="none" stroke="#4a4a4a" stroke-width="1.1"/><path d="M3 3 L8.6 8.6 M8.6 4.5 V8.6 H4.5" fill="none" stroke="#4a4a4a" stroke-width="1.1"/></svg><div class="b" style="left:503.8px;top:105px;width:1px;height:112px;background:#9c9c9c;"></div><svg class="b" style="left:520px;top:117px;" width="20" height="19" viewBox="0 0 20 19"><rect x="0" y="0" width="3.9" height="3.7" fill="#1a6dbd"/><path d="M6.4 1.85 H19" stroke="#565656" stroke-width="1.5"/><rect x="0" y="7.55" width="3.9" height="3.7" fill="#1a6dbd"/><path d="M6.4 9.4 H19" stroke="#565656" stroke-width="1.5"/><rect x="0" y="15.1" width="3.9" height="3.7" fill="#1a6dbd"/><path d="M6.4 16.95 H19" stroke="#565656" stroke-width="1.5"/></svg><svg class="b" style="left:549.3px;top:125px;" width="8" height="5" viewBox="0 0 8 5"><path d="M1 1 L4 4 L7 1" fill="none" stroke="#333" stroke-width="1.3"/></svg><svg class="b" style="left:570.8px;top:117px;" width="20" height="21" viewBox="0 0 20 21"><text x="0" y="4.6" font-size="7.6" font-weight="700" font-family="Liberation Sans,sans-serif" fill="#1a6dbd">1</text><path d="M6.4 1.85 H19" stroke="#565656" stroke-width="1.5"/><text x="0" y="12.149999999999999" font-size="7.6" font-weight="700" font-family="Liberation Sans,sans-serif" fill="#1a6dbd">2</text><path d="M6.4 9.4 H19" stroke="#565656" stroke-width="1.5"/><text x="0" y="19.7" font-size="7.6" font-weight="700" font-family="Liberation Sans,sans-serif" fill="#1a6dbd">3</text><path d="M6.4 16.95 H19" stroke="#565656" stroke-width="1.5"/></svg><svg class="b" style="left:600.2px;top:125px;" width="8" height="5" viewBox="0 0 8 5"><path d="M1 1 L4 4 L7 1" fill="none" stroke="#333" stroke-width="1.3"/></svg><svg class="b" style="left:622px;top:117px;" width="20" height="21" viewBox="0 0 20 21"><text x="0" y="5.2" font-size="7" font-weight="700" font-family="Liberation Sans,sans-serif" fill="#1a6dbd">1</text><path d="M6.3 1.85 H18.7" stroke="#565656" stroke-width="1.5"/><text x="3" y="12.4" font-size="7.6" font-weight="700" font-family="Liberation Sans,sans-serif" fill="#1a6dbd">a</text><path d="M10.5 9.4 H18.7" stroke="#565656" stroke-width="1.5"/><text x="9.7" y="19.6" font-size="7.6" font-weight="700" font-family="Liberation Sans,sans-serif" fill="#1a6dbd">i</text><path d="M14 16.95 H18.7" stroke="#565656" stroke-width="1.5"/></svg><svg class="b" style="left:649.4px;top:125px;" width="8" height="5" viewBox="0 0 8 5"><path d="M1 1 L4 4 L7 1" fill="none" stroke="#333" stroke-width="1.3"/></svg><div class="b" style="left:669.1px;top:112.4px;width:1px;height:29.3px;background:#9c9c9c;"></div><svg class="b" style="left:678px;top:117.8px;" width="18" height="18" viewBox="0 0 18 18"><path d="M0 1 H18 M10.5 6.05 H18 M10.5 11.1 H18 M0 16.1 H18" stroke="#565656" stroke-width="1.5"/><path d="M7.5 8.6 H0.8 M3.8 5.4 L0.8 8.6 L3.8 11.8" fill="none" stroke="#1a6dbd" stroke-width="1.4"/></svg><svg class="b" style="left:710px;top:117.8px;" width="18" height="18" viewBox="0 0 18 18"><path d="M0 1 H18 M10.5 6.05 H18 M10.5 11.1 H18 M0 16.1 H18" stroke="#565656" stroke-width="1.5"/><path d="M0.3 8.6 H7 M4 5.4 L7 8.6 L4 11.8" fill="none" stroke="#1a6dbd" stroke-width="1.4"/></svg><div class="b" style="left:735.9px;top:112.4px;width:1px;height:29.3px;background:#9c9c9c;"></div><svg class="b" style="left:743.5px;top:115.5px;" width="22" height="23" viewBox="0 0 22 23"><text x="0" y="9.6" font-size="11.8" font-family="Liberation Sans,sans-serif" fill="#1a6dbd" stroke="#1a6dbd" stroke-width="0.3">A</text><text x="0.6" y="21" font-size="11.5" font-family="Liberation Sans,sans-serif" fill="#565656" stroke="#565656" stroke-width="0.3">Z</text><path d="M16 1.5 V20.5 M12 16.5 L16 21 L20 16.5" fill="none" stroke="#565656" stroke-width="1.4"/></svg><div class="b" style="left:770.9px;top:112.4px;width:1px;height:29.3px;background:#9c9c9c;"></div><span class="t" style="left:782.4px;top:116px;font-size:21px;color:#565656;font-weight:700;transform:scaleX(1.122);">¶</span><div class="b" style="left:515.3px;top:152px;width:29.3px;height:29.4px;background:#d3d3d3;border:1px solid #8a8a8a;border-radius:5px;box-sizing:border-box;"></div><svg class="b" style="left:521.2px;top:157.9px;" width="17.8" height="17.9" viewBox="0 0 17.8 17.9"><path d="M0.0 0.9 H17.8" stroke="#565656" stroke-width="1.6"/><path d="M0.0 5.9 H12.6" stroke="#565656" stroke-width="1.6"/><path d="M0.0 10.9 H17.8" stroke="#565656" stroke-width="1.6"/><path d="M0.0 15.9 H12.6" stroke="#565656" stroke-width="1.6"/></svg><svg class="b" style="left:553.1px;top:157.9px;" width="17.7" height="17.9" viewBox="0 0 17.7 17.9"><path d="M0.0 0.9 H17.7" stroke="#565656" stroke-width="1.6"/><path d="M3.0 5.9 H14.7" stroke="#565656" stroke-width="1.6"/><path d="M0.0 10.9 H17.7" stroke="#565656" stroke-width="1.6"/><path d="M3.0 15.9 H14.7" stroke="#565656" stroke-width="1.6"/></svg><svg class="b" style="left:585.3px;top:157.9px;" width="17.5" height="17.9" viewBox="0 0 17.5 17.9"><path d="M0.0 0.9 H17.5" stroke="#565656" stroke-width="1.6"/><path d="M5.1 5.9 H17.5" stroke="#565656" stroke-width="1.6"/><path d="M0.0 10.9 H17.5" stroke="#565656" stroke-width="1.6"/><path d="M5.1 15.9 H17.5" stroke="#565656" stroke-width="1.6"/></svg><svg class="b" style="left:617.2px;top:157.9px;" width="17.8" height="17.9" viewBox="0 0 17.8 17.9"><path d="M0.0 0.9 H17.8" stroke="#565656" stroke-width="1.6"/><path d="M0.0 5.9 H17.8" stroke="#565656" stroke-width="1.6"/><path d="M0.0 10.9 H17.8" stroke="#565656" stroke-width="1.6"/><path d="M0.0 15.9 H17.8" stroke="#565656" stroke-width="1.6"/></svg><div class="b" style="left:642.7px;top:152px;width:1px;height:29.4px;background:#9c9c9c;"></div><svg class="b" style="left:651px;top:157.9px;" width="21" height="18" viewBox="0 0 21 18"><path d="M9 0.9 H20 M9 5.9 H20 M9 10.9 H20 M9 15.9 H20" stroke="#565656" stroke-width="1.6"/><path d="M3.1 1 V7 M0.4 3.7 L3.1 1 L5.8 3.7 M3.1 10 V17 M0.4 14.3 L3.1 17 L5.8 14.3" fill="none" stroke="#1a6dbd" stroke-width="1.4"/></svg><svg class="b" style="left:678.5px;top:165px;" width="8" height="5" viewBox="0 0 8 5"><path d="M1 1 L4 4 L7 1" fill="none" stroke="#333" stroke-width="1.3"/></svg><div class="b" style="left:697.5px;top:152px;width:1px;height:29.4px;background:#9c9c9c;"></div><svg class="b" style="left:705px;top:156px;" width="22" height="22" viewBox="0 0 22 22"><path d="M4.6 9.3 L11.2 2.6 L16.6 8 L9.9 14.7 Z" fill="#ececec" stroke="#565656" stroke-width="1.3" stroke-linejoin="round"/><path d="M11.2 2.6 Q10.5 0.8 12.2 0.9 Q14 1.2 14 4" fill="none" stroke="#565656" stroke-width="1.2"/><path d="M16.6 6.5 Q20.3 8.5 19.3 13.5 Q17.6 10.5 16.4 9 Z" fill="#1a6dbd"/><rect x="1.7" y="17" width="18.4" height="3.4" fill="#dedede" stroke="#a9a9a9" stroke-width="0.7"/></svg><svg class="b" style="left:735px;top:165px;" width="8" height="5" viewBox="0 0 8 5"><path d="M1 1 L4 4 L7 1" fill="none" stroke="#333" stroke-width="1.3"/></svg><svg class="b" style="left:757.3px;top:157px;" width="18.6" height="19" viewBox="0 0 18.6 19"><rect x="0.7" y="0.7" width="17.2" height="16.6" fill="#d0d0d0" stroke="#565656" stroke-width="1.2" stroke-dasharray="1.2 1.2"/><path d="M9.3 1 V17 M1 9 H18" stroke="#565656" stroke-width="1" stroke-dasharray="1.2 1.2"/><path d="M0 17.9 H18.6" stroke="#333" stroke-width="1.7"/></svg><svg class="b" style="left:786px;top:165px;" width="8" height="5" viewBox="0 0 8 5"><path d="M1 1 L4 4 L7 1" fill="none" stroke="#333" stroke-width="1.3"/></svg><span class="t" style="left:618.4px;top:203px;font-size:13.5px;color:#3a3a3a;transform:scaleX(0.958);">Paragraph</span><svg class="b" style="left:799px;top:205.3px;" width="10" height="10" viewBox="0 0 10 10"><path d="M0.6 4 V0.6 H4 M9.4 5 V9.4 H5" fill="none" stroke="#4a4a4a" stroke-width="1.1"/><path d="M3 3 L8.6 8.6 M8.6 4.5 V8.6 H4.5" fill="none" stroke="#4a4a4a" stroke-width="1.1"/></svg><div class="b" style="left:812.9px;top:105px;width:1px;height:112px;background:#9c9c9c;"></div><div class="b" style="left:825.8px;top:112.9px;width:695.4px;height:73.5px;background:#c4c4c4;border:1px solid #9d9d9d;border-radius:5px;box-sizing:border-box;"></div><div class="b" style="left:827.5px;top:114.5px;width:134px;height:70.5px;border:1.5px solid #8c8c8c;border-radius:3px;box-sizing:border-box;"></div><div class="b" style="left:831.5px;top:119px;width:125.3px;height:60px;background:#fff;"></div><div class="b" style="left:966.7px;top:119px;width:125.3px;height:60px;background:#fff;"></div><div class="b" style="left:1102px;top:119px;width:125.3px;height:60px;background:#fff;"></div><div class="b" style="left:1237px;top:119px;width:125.3px;height:60px;background:#fff;"></div><div class="b" style="left:1372px;top:119px;width:125.3px;height:60px;background:#fff;"></div><span class="t" style="left:866.8px;top:141px;font-size:17.5px;color:#1a1a1a;transform:scaleX(0.991);">Normal</span><div class="b" style="left:976px;top:147.2px;width:5.6px;height:5.6px;background:#111;border-radius:50%;"></div><span class="t" style="left:991.7px;top:141px;font-size:17.5px;color:#1a1a1a;transform:scaleX(0.949);">Bulleted List</span><div class="b" style="left:1102px;top:119px;width:125.6px;height:60px;overflow:hidden;"><span class="t" style="left:2.6px;top:22px;font-size:17px;color:#12386e;font-weight:700;transform:scaleX(1.032);">General Emph</span></div><div class="b" style="left:1237px;top:119px;width:125.6px;height:60px;overflow:hidden;"><span class="t" style="left:3.3px;top:19px;font-size:29px;color:#0e2750;letter-spacing:2.5px;transform:scaleX(0.954);-webkit-text-stroke:0.5px #0e2750;">HEADING</span><div class="b" style="left:3.3px;top:44.4px;width:130px;height:1.8px;background:#0e2750;"></div></div><span class="t" style="left:1374.8px;top:139px;font-size:24px;color:#1b3564;letter-spacing:2.5px;transform:scaleX(0.940);-webkit-text-stroke:0.35px #1b3564;">HEADING</span><div class="b" style="left:1503.4px;top:112.9px;width:17.8px;height:24.5px;background:#c4c4c4;border:1px solid #9d9d9d;box-sizing:border-box;border-radius:0 5px 0 0;"></div><div class="b" style="left:1503.4px;top:137.4px;width:17.8px;height:24.5px;background:#c4c4c4;border:1px solid #9d9d9d;box-sizing:border-box;"></div><div class="b" style="left:1503.4px;top:161.9px;width:17.8px;height:24.5px;background:#c4c4c4;border:1px solid #9d9d9d;box-sizing:border-box;border-radius:0 0 5px 0;"></div><svg class="b" style="left:1508px;top:121px;" width="9" height="7" viewBox="0 0 9 7"><path d="M1 5.5 L4.5 2 L8 5.5" fill="none" stroke="#999" stroke-width="1.2"/></svg><svg class="b" style="left:1508.3px;top:147.5px;" width="8" height="5" viewBox="0 0 8 5"><path d="M1 1 L4 4 L7 1" fill="none" stroke="#444" stroke-width="1.2"/></svg><svg class="b" style="left:1508px;top:168px;" width="9" height="11" viewBox="0 0 9 11"><path d="M1 1.5 H8" stroke="#444" stroke-width="1.2"/><path d="M1 5 L4.5 8.5 L8 5" fill="none" stroke="#444" stroke-width="1.2"/></svg><span class="t" style="left:1148px;top:203px;font-size:13.5px;color:#3a3a3a;transform:scaleX(0.887);">Styles</span><svg class="b" style="left:1521px;top:205.3px;" width="10" height="10" viewBox="0 0 10 10"><path d="M0.6 4 V0.6 H4 M9.4 5 V9.4 H5" fill="none" stroke="#4a4a4a" stroke-width="1.1"/><path d="M3 3 L8.6 8.6 M8.6 4.5 V8.6 H4.5" fill="none" stroke="#4a4a4a" stroke-width="1.1"/></svg><div class="b" style="left:1535.3px;top:105px;width:1px;height:112px;background:#9c9c9c;"></div><svg class="b" style="left:1552px;top:107px;" width="20" height="20" viewBox="0 0 20 20"><circle cx="12.3" cy="7.2" r="5.8" fill="none" stroke="#555" stroke-width="1.3"/><path d="M8 11.5 L1 18.5" stroke="#555" stroke-width="1.5"/></svg><span class="t" style="left:1576px;top:110px;font-size:15.5px;color:#3a3a3a;transform:scaleX(0.919);">Find</span><svg class="b" style="left:1619.4px;top:115.5px;" width="8" height="5" viewBox="0 0 8 5"><path d="M1 1 L4 4 L7 1" fill="none" stroke="#444" stroke-width="1.2"/></svg><svg class="b" style="left:1550px;top:138px;" width="22" height="22" viewBox="0 0 22 22"><text x="8" y="9" font-size="10.5" font-family="Liberation Sans,sans-serif" fill="#b0237f">b</text><text x="13" y="20" font-size="10.5" font-family="Liberation Sans,sans-serif" fill="#1a6dbd">c</text><path d="M6.5 6 Q1.5 6.5 1.5 11 Q1.5 15.5 7 15.5 H10 M7 12.3 L10.2 15.5 L7 18.7" fill="none" stroke="#1a6dbd" stroke-width="1.3"/></svg><span class="t" style="left:1576px;top:142px;font-size:15.5px;color:#3a3a3a;transform:scaleX(0.932);">Replace</span><svg class="b" style="left:1553px;top:172px;" width="15" height="20" viewBox="0 0 15 20"><path d="M1.5 1.5 V16 L5.5 12.5 L8.5 18.5 L10.8 17.5 L8 11.5 H13 Z" fill="#e6e6e6" stroke="#555" stroke-width="1.2"/></svg><span class="t" style="left:1576px;top:174px;font-size:15.5px;color:#3a3a3a;transform:scaleX(0.928);">Select</span><svg class="b" style="left:1620.5px;top:180px;" width="8" height="5" viewBox="0 0 8 5"><path d="M1 1 L4 4 L7 1" fill="none" stroke="#444" stroke-width="1.2"/></svg><span class="t" style="left:1573.9px;top:203px;font-size:13.5px;color:#3a3a3a;transform:scaleX(0.947);">Editing</span><div class="b" style="left:1650.1px;top:105px;width:1px;height:112px;background:#9c9c9c;"></div><svg class="b" style="left:1674px;top:106px;" width="26" height="41" viewBox="0 0 26 41"><rect x="7" y="1" width="12" height="24" rx="6" fill="#b9dcf6" stroke="#1a6dbd" stroke-width="1.3"/><path d="M2.5 17 Q2.5 30 13 30 Q23.5 30 23.5 17 M13 30 V39" fill="none" stroke="#666" stroke-width="1.4"/></svg><span class="t" style="left:1663.3px;top:153px;font-size:15.5px;color:#3a3a3a;transform:scaleX(0.974);">Dictate</span><svg class="b" style="left:1682.8px;top:177.5px;" width="8" height="5" viewBox="0 0 8 5"><path d="M1 1 L4 4 L7 1" fill="none" stroke="#444" stroke-width="1.2"/></svg><span class="t" style="left:1671px;top:203px;font-size:13.5px;color:#3a3a3a;transform:scaleX(0.930);">Voice</span><div class="b" style="left:1722.8px;top:105px;width:1px;height:112px;background:#9c9c9c;"></div><svg class="b" style="left:1740px;top:106px;" width="40" height="40" viewBox="0 0 40 40"><path d="M20 3 L27 7 L9 33 L2.5 36.5 L3 29 Z" fill="#f2f6fb" stroke="#2564c4" stroke-width="1.6"/><path d="M21 12 H36 Q39 14.5 36 17 H18 M17 19 H33 Q36 21.5 33 24 H14 M13 26 H29 Q32 28.5 29 31 H10" fill="#2b6fd6" stroke="none"/><path d="M21 12 H36 Q39 14.5 36 17 H18 Z M17 19 H33 Q36 21.5 33 24 H14 Z M13 26 H29 Q32 28.5 29 31 H10 Z" fill="#2b6fd6"/></svg><span class="t" style="left:1740.8px;top:151px;font-size:15.5px;color:#3a3a3a;transform:scaleX(0.968);">Editor</span><span class="t" style="left:1742px;top:203px;font-size:13.5px;color:#3a3a3a;transform:scaleX(0.992);">Editor</span><div class="b" style="left:1795.1px;top:105px;width:1px;height:112px;background:#9c9c9c;"></div><svg class="b" style="left:1815.5px;top:107.5px;" width="37" height="37" viewBox="0 0 37 37"><rect x="1" y="1" width="35" height="35" fill="none" stroke="#e0622b" stroke-width="1.8"/><rect x="6" y="6" width="10.5" height="10.5" fill="none" stroke="#e0622b" stroke-width="1.6"/><rect x="20.5" y="6" width="10.5" height="10.5" fill="none" stroke="#e0622b" stroke-width="1.6"/><rect x="6" y="20.5" width="10.5" height="10.5" fill="none" stroke="#e0622b" stroke-width="1.6"/><rect x="20.5" y="20.5" width="10.5" height="10.5" fill="none" stroke="#e0622b" stroke-width="1.6"/></svg><span class="t" style="left:1808.7px;top:151px;font-size:15.5px;color:#3a3a3a;transform:scaleX(0.976);">Add-ins</span><span class="t" style="left:1811px;top:203px;font-size:13.5px;color:#3a3a3a;transform:scaleX(0.974);">Add-ins</span><div class="b" style="left:1872.3px;top:105px;width:1px;height:112px;background:#9c9c9c;"></div><svg class="b" style="left:1886.3px;top:201.2px;" width="11" height="6.5" viewBox="0 0 11.0 6.5"><path d="M1 1 L5.5 5.5 L10.0 1" fill="none" stroke="#333" stroke-width="1.3"/></svg><div class="b" style="left:574px;top:225.5px;width:780px;height:18.5px;background:#6a6a6a;"></div><div class="b" style="left:453px;top:232.5px;width:1px;height:6.5px;background:#ececec;"></div><div class="b" style="left:468px;top:235px;width:1px;height:1.5px;background:#e4e4e4;"></div><div class="b" style="left:483px;top:235px;width:1px;height:1.5px;background:#e4e4e4;"></div><div class="b" style="left:498px;top:235px;width:1px;height:1.5px;background:#e4e4e4;"></div><div class="b" style="left:513px;top:232.5px;width:1px;height:6.5px;background:#ececec;"></div><div class="b" style="left:528px;top:235px;width:1px;height:1.5px;background:#e4e4e4;"></div><div class="b" style="left:543px;top:235px;width:1px;height:1.5px;background:#e4e4e4;"></div><div class="b" style="left:558px;top:235px;width:1px;height:1.5px;background:#e4e4e4;"></div><div class="b" style="left:588px;top:235px;width:1px;height:1.5px;background:#e4e4e4;"></div><div class="b" style="left:603px;top:235px;width:1px;height:1.5px;background:#e4e4e4;"></div><div class="b" style="left:618px;top:235px;width:1px;height:1.5px;background:#e4e4e4;"></div><div class="b" style="left:633px;top:232.5px;width:1px;height:6.5px;background:#ececec;"></div><div class="b" style="left:648px;top:235px;width:1px;height:1.5px;background:#e4e4e4;"></div><div class="b" style="left:663px;top:235px;width:1px;height:1.5px;background:#e4e4e4;"></div><div class="b" style="left:678px;top:235px;width:1px;height:1.5px;background:#e4e4e4;"></div><span class="t" style="left:690px;top:229px;font-size:14.5px;color:#f2f2f2;transform:scaleX(0.992);">1</span><div class="b" style="left:708px;top:235px;width:1px;height:1.5px;background:#e4e4e4;"></div><div class="b" style="left:723px;top:235px;width:1px;height:1.5px;background:#e4e4e4;"></div><div class="b" style="left:738px;top:235px;width:1px;height:1.5px;background:#e4e4e4;"></div><div class="b" style="left:753px;top:232.5px;width:1px;height:6.5px;background:#ececec;"></div><div class="b" style="left:768px;top:235px;width:1px;height:1.5px;background:#e4e4e4;"></div><div class="b" style="left:783px;top:235px;width:1px;height:1.5px;background:#e4e4e4;"></div><div class="b" style="left:798px;top:235px;width:1px;height:1.5px;background:#e4e4e4;"></div><span class="t" style="left:810px;top:229px;font-size:14.5px;color:#f2f2f2;transform:scaleX(0.992);">2</span><div class="b" style="left:828px;top:235px;width:1px;height:1.5px;background:#e4e4e4;"></div><div class="b" style="left:843px;top:235px;width:1px;height:1.5px;background:#e4e4e4;"></div><div class="b" style="left:858px;top:235px;width:1px;height:1.5px;background:#e4e4e4;"></div><div class="b" style="left:873px;top:232.5px;width:1px;height:6.5px;background:#ececec;"></div><div class="b" style="left:888px;top:235px;width:1px;height:1.5px;background:#e4e4e4;"></div><div class="b" style="left:903px;top:235px;width:1px;height:1.5px;background:#e4e4e4;"></div><div class="b" style="left:918px;top:235px;width:1px;height:1.5px;background:#e4e4e4;"></div><span class="t" style="left:930px;top:229px;font-size:14.5px;color:#f2f2f2;transform:scaleX(0.992);">3</span><div class="b" style="left:948px;top:235px;width:1px;height:1.5px;background:#e4e4e4;"></div><div class="b" style="left:963px;top:235px;width:1px;height:1.5px;background:#e4e4e4;"></div><div class="b" style="left:978px;top:235px;width:1px;height:1.5px;background:#e4e4e4;"></div><div class="b" style="left:993px;top:232.5px;width:1px;height:6.5px;background:#ececec;"></div><div class="b" style="left:1008px;top:235px;width:1px;height:1.5px;background:#e4e4e4;"></div><div class="b" style="left:1023px;top:235px;width:1px;height:1.5px;background:#e4e4e4;"></div><div class="b" style="left:1038px;top:235px;width:1px;height:1.5px;background:#e4e4e4;"></div><span class="t" style="left:1050px;top:229px;font-size:14.5px;color:#f2f2f2;transform:scaleX(0.992);">4</span><div class="b" style="left:1068px;top:235px;width:1px;height:1.5px;background:#e4e4e4;"></div><div class="b" style="left:1083px;top:235px;width:1px;height:1.5px;background:#e4e4e4;"></div><div class="b" style="left:1098px;top:235px;width:1px;height:1.5px;background:#e4e4e4;"></div><div class="b" style="left:1113px;top:232.5px;width:1px;height:6.5px;background:#ececec;"></div><div class="b" style="left:1128px;top:235px;width:1px;height:1.5px;background:#e4e4e4;"></div><div class="b" style="left:1143px;top:235px;width:1px;height:1.5px;background:#e4e4e4;"></div><div class="b" style="left:1158px;top:235px;width:1px;height:1.5px;background:#e4e4e4;"></div><span class="t" style="left:1170px;top:229px;font-size:14.5px;color:#f2f2f2;transform:scaleX(0.992);">5</span><div class="b" style="left:1188px;top:235px;width:1px;height:1.5px;background:#e4e4e4;"></div><div class="b" style="left:1203px;top:235px;width:1px;height:1.5px;background:#e4e4e4;"></div><div class="b" style="left:1218px;top:235px;width:1px;height:1.5px;background:#e4e4e4;"></div><div class="b" style="left:1233px;top:232.5px;width:1px;height:6.5px;background:#ececec;"></div><div class="b" style="left:1248px;top:235px;width:1px;height:1.5px;background:#e4e4e4;"></div><div class="b" style="left:1263px;top:235px;width:1px;height:1.5px;background:#e4e4e4;"></div><div class="b" style="left:1278px;top:235px;width:1px;height:1.5px;background:#e4e4e4;"></div><span class="t" style="left:1290px;top:229px;font-size:14.5px;color:#f2f2f2;transform:scaleX(0.992);">6</span><div class="b" style="left:1308px;top:235px;width:1px;height:1.5px;background:#e4e4e4;"></div><div class="b" style="left:1323px;top:235px;width:1px;height:1.5px;background:#e4e4e4;"></div><div class="b" style="left:1338px;top:235px;width:1px;height:1.5px;background:#e4e4e4;"></div><div class="b" style="left:1353px;top:232.5px;width:1px;height:6.5px;background:#ececec;"></div><div class="b" style="left:1368px;top:235px;width:1px;height:1.5px;background:#e4e4e4;"></div><div class="b" style="left:1383px;top:235px;width:1px;height:1.5px;background:#e4e4e4;"></div><div class="b" style="left:1398px;top:235px;width:1px;height:1.5px;background:#e4e4e4;"></div><div class="b" style="left:1413px;top:232.5px;width:1px;height:6.5px;background:#ececec;"></div><div class="b" style="left:1428px;top:235px;width:1px;height:1.5px;background:#e4e4e4;"></div><div class="b" style="left:1443px;top:235px;width:1px;height:1.5px;background:#e4e4e4;"></div><div class="b" style="left:1458px;top:235px;width:1px;height:1.5px;background:#e4e4e4;"></div><svg class="b" style="left:567.5px;top:225px;" width="13" height="26" viewBox="0 0 13 26"><path d="M0.5 0.5 H12.5 V3 L6.5 9 L0.5 3 Z" fill="#c3c3c3"/><path d="M6.5 10 L12.5 16 V19 H0.5 V16 Z" fill="#c3c3c3"/><rect x="0.5" y="20.5" width="12" height="5" fill="#c3c3c3"/></svg><svg class="b" style="left:1347.5px;top:236px;" width="13" height="9" viewBox="0 0 13 9"><path d="M6.5 0.5 L12.5 6 V8.5 H0.5 V6 Z" fill="#c3c3c3"/></svg><div class="b" style="left:0px;top:251.3px;width:1920px;height:1px;background:#777;"></div><div class="b" style="left:4px;top:342.5px;width:19px;height:782px;background:#6a6a6a;"></div><svg class="b" style="left:9.5px;top:233px;" width="9" height="9" viewBox="0 0 9 9"><path d="M1.2 0 V7.8 H9" fill="none" stroke="#e6e6e6" stroke-width="2.4"/></svg><div class="b" style="left:13.5px;top:251.7px;width:2px;height:1.6px;background:#e0e0e0;"></div><div class="b" style="left:13.5px;top:266.7px;width:2px;height:1.6px;background:#e0e0e0;"></div><div class="b" style="left:11px;top:281.8px;width:7px;height:1.4px;background:#e8e8e8;"></div><div class="b" style="left:13.5px;top:296.7px;width:2px;height:1.6px;background:#e0e0e0;"></div><div class="b" style="left:13.5px;top:311.7px;width:2px;height:1.6px;background:#e0e0e0;"></div><div class="b" style="left:13.5px;top:326.7px;width:2px;height:1.6px;background:#e0e0e0;"></div><div class="b" style="left:13.5px;top:356.7px;width:2px;height:1.6px;background:#e0e0e0;"></div><div class="b" style="left:13.5px;top:371.7px;width:2px;height:1.6px;background:#e0e0e0;"></div><div class="b" style="left:13.5px;top:386.7px;width:2px;height:1.6px;background:#e0e0e0;"></div><div class="b" style="left:11px;top:401.8px;width:7px;height:1.4px;background:#e8e8e8;"></div><div class="b" style="left:13.5px;top:416.7px;width:2px;height:1.6px;background:#e0e0e0;"></div><div class="b" style="left:13.5px;top:431.7px;width:2px;height:1.6px;background:#e0e0e0;"></div><div class="b" style="left:13.5px;top:446.7px;width:2px;height:1.6px;background:#e0e0e0;"></div><span class="t" style="left:7px;top:454.5px;font-size:15px;color:#fff;line-height:16px;transform:rotate(-90deg);transform-origin:50% 50%;width:14px;text-align:center;">1</span><div class="b" style="left:13.5px;top:476.7px;width:2px;height:1.6px;background:#e0e0e0;"></div><div class="b" style="left:13.5px;top:491.7px;width:2px;height:1.6px;background:#e0e0e0;"></div><div class="b" style="left:13.5px;top:506.7px;width:2px;height:1.6px;background:#e0e0e0;"></div><div class="b" style="left:11px;top:521.8px;width:7px;height:1.4px;background:#e8e8e8;"></div><div class="b" style="left:13.5px;top:536.7px;width:2px;height:1.6px;background:#e0e0e0;"></div><div class="b" style="left:13.5px;top:551.7px;width:2px;height:1.6px;background:#e0e0e0;"></div><div class="b" style="left:13.5px;top:566.7px;width:2px;height:1.6px;background:#e0e0e0;"></div><span class="t" style="left:7px;top:574.5px;font-size:15px;color:#fff;line-height:16px;transform:rotate(-90deg);transform-origin:50% 50%;width:14px;text-align:center;">2</span><div class="b" style="left:13.5px;top:596.7px;width:2px;height:1.6px;background:#e0e0e0;"></div><div class="b" style="left:13.5px;top:611.7px;width:2px;height:1.6px;background:#e0e0e0;"></div><div class="b" style="left:13.5px;top:626.7px;width:2px;height:1.6px;background:#e0e0e0;"></div><div class="b" style="left:11px;top:641.8px;width:7px;height:1.4px;background:#e8e8e8;"></div><div class="b" style="left:13.5px;top:656.7px;width:2px;height:1.6px;background:#e0e0e0;"></div><div class="b" style="left:13.5px;top:671.7px;width:2px;height:1.6px;background:#e0e0e0;"></div><div class="b" style="left:13.5px;top:686.7px;width:2px;height:1.6px;background:#e0e0e0;"></div><span class="t" style="left:7px;top:694.5px;font-size:15px;color:#fff;line-height:16px;transform:rotate(-90deg);transform-origin:50% 50%;width:14px;text-align:center;">3</span><div class="b" style="left:13.5px;top:716.7px;width:2px;height:1.6px;background:#e0e0e0;"></div><div class="b" style="left:13.5px;top:731.7px;width:2px;height:1.6px;background:#e0e0e0;"></div><div class="b" style="left:13.5px;top:746.7px;width:2px;height:1.6px;background:#e0e0e0;"></div><div class="b" style="left:11px;top:761.8px;width:7px;height:1.4px;background:#e8e8e8;"></div><div class="b" style="left:13.5px;top:776.7px;width:2px;height:1.6px;background:#e0e0e0;"></div><div class="b" style="left:13.5px;top:791.7px;width:2px;height:1.6px;background:#e0e0e0;"></div><div class="b" style="left:13.5px;top:806.7px;width:2px;height:1.6px;background:#e0e0e0;"></div><span class="t" style="left:7px;top:814.5px;font-size:15px;color:#fff;line-height:16px;transform:rotate(-90deg);transform-origin:50% 50%;width:14px;text-align:center;">4</span><div class="b" style="left:13.5px;top:836.7px;width:2px;height:1.6px;background:#e0e0e0;"></div><div class="b" style="left:13.5px;top:851.7px;width:2px;height:1.6px;background:#e0e0e0;"></div><div class="b" style="left:13.5px;top:866.7px;width:2px;height:1.6px;background:#e0e0e0;"></div><div class="b" style="left:11px;top:881.8px;width:7px;height:1.4px;background:#e8e8e8;"></div><div class="b" style="left:13.5px;top:896.7px;width:2px;height:1.6px;background:#e0e0e0;"></div><div class="b" style="left:13.5px;top:911.7px;width:2px;height:1.6px;background:#e0e0e0;"></div><div class="b" style="left:13.5px;top:926.7px;width:2px;height:1.6px;background:#e0e0e0;"></div><span class="t" style="left:7px;top:934.5px;font-size:15px;color:#fff;line-height:16px;transform:rotate(-90deg);transform-origin:50% 50%;width:14px;text-align:center;">5</span><div class="b" style="left:13.5px;top:956.7px;width:2px;height:1.6px;background:#e0e0e0;"></div><div class="b" style="left:13.5px;top:971.7px;width:2px;height:1.6px;background:#e0e0e0;"></div><div class="b" style="left:13.5px;top:986.7px;width:2px;height:1.6px;background:#e0e0e0;"></div><div class="b" style="left:11px;top:1001.8px;width:7px;height:1.4px;background:#e8e8e8;"></div><div class="b" style="left:13.5px;top:1016.7px;width:2px;height:1.6px;background:#e0e0e0;"></div><div class="b" style="left:13.5px;top:1031.7px;width:2px;height:1.6px;background:#e0e0e0;"></div><div class="b" style="left:13.5px;top:1046.7px;width:2px;height:1.6px;background:#e0e0e0;"></div><span class="t" style="left:7px;top:1054.5px;font-size:15px;color:#fff;line-height:16px;transform:rotate(-90deg);transform-origin:50% 50%;width:14px;text-align:center;">6</span><div class="b" style="left:13.5px;top:1076.7px;width:2px;height:1.6px;background:#e0e0e0;"></div><div class="b" style="left:13.5px;top:1091.7px;width:2px;height:1.6px;background:#e0e0e0;"></div><div class="b" style="left:13.5px;top:1106.7px;width:2px;height:1.6px;background:#e0e0e0;"></div><div class="b" style="left:455px;top:252px;width:1018.4px;height:871px;background:#525252;"></div><div class="b" style="left:455px;top:252px;width:1018.4px;height:198px;background:#fff;"></div><div class="b" style="left:455px;top:471px;width:1018.4px;height:652px;background:#fff;"></div><div class="b" style="left:574px;top:589px;width:780px;height:244px;background:#000;overflow:hidden;"><div class="b" style="left:0px;top:0px;width:390px;height:233.6px;background:#525252;"></div><div class="b" style="left:144.4px;top:2px;width:105px;height:7.9px;background:#bdbdbd;"></div><div class="b" style="left:2px;top:19.9px;width:385.9px;height:25.2px;background:#bdbdbd;border-radius:2px;"></div><div class="b" style="left:168.8px;top:24.2px;width:25.6px;height:12.2px;background:#fff;"></div><div class="b" style="left:196.4px;top:24.2px;width:25.6px;height:12.2px;background:#fff;"></div><div class="b" style="left:223.8px;top:24.2px;width:25.6px;height:12.2px;background:#fff;"></div><div class="b" style="left:251.3px;top:24.2px;width:25.6px;height:12.2px;background:#fff;"></div><div class="b" style="left:278.7px;top:24.2px;width:25.6px;height:12.2px;background:#fff;"></div><div class="b" style="left:366.4px;top:13px;width:20.5px;height:5.9px;background:#7ea9f1;"></div><div class="b" style="left:92.4px;top:51.2px;width:206.8px;height:172.5px;background:#fff;"></div><div class="b" style="left:116.6px;top:51.2px;width:79.2px;height:27.2px;background:#585858;"></div><div class="b" style="left:135.3px;top:51.2px;width:41.8px;height:26px;background:#f2f2f2;"></div><div class="b" style="left:141px;top:51.2px;width:30.5px;height:18.3px;background:#777;"></div><div class="b" style="left:116.6px;top:78.4px;width:79.2px;height:2px;background:#444;"></div><div class="b" style="left:119px;top:78.4px;width:15px;height:2px;background:#ddd;"></div><div class="b" style="left:195.8px;top:51.2px;width:79.2px;height:22.8px;background:#e6e6e6;"></div><div class="b" style="left:210px;top:51.2px;width:32.5px;height:22.8px;background:#fff;"></div><div class="b" style="left:258.8px;top:51.2px;width:14.2px;height:20.3px;background:#333;"></div><div class="b" style="left:195.8px;top:73.9px;width:79.2px;height:6.5px;background:#0a0a0a;"></div><div class="b" style="left:116.6px;top:81.2px;width:79.2px;height:47.5px;background:#585858;"></div><div class="b" style="left:116.6px;top:85.3px;width:79.2px;height:5.3px;background:#b5b5b5;"></div><div class="b" style="left:135.3px;top:91.8px;width:41.8px;height:35.8px;background:#f2f2f2;"></div><div class="b" style="left:141px;top:95.5px;width:30.5px;height:24.4px;background:#777;"></div><div class="b" style="left:116.6px;top:128.8px;width:79.2px;height:2px;background:#444;"></div><div class="b" style="left:119px;top:128.8px;width:15px;height:2px;background:#ddd;"></div><div class="b" style="left:195.8px;top:81.2px;width:79.2px;height:3.7px;background:#181818;"></div><div class="b" style="left:195.8px;top:84.9px;width:79.2px;height:39.4px;background:#e6e6e6;"></div><div class="b" style="left:210px;top:89.4px;width:32.5px;height:34.9px;background:#fff;"></div><div class="b" style="left:258.8px;top:89.4px;width:14.2px;height:32.5px;background:#333;"></div><div class="b" style="left:195.8px;top:124.3px;width:79.2px;height:6.5px;background:#0a0a0a;"></div><div class="b" style="left:116.6px;top:131.8px;width:79.2px;height:47.5px;background:#585858;"></div><div class="b" style="left:116.6px;top:135.9px;width:79.2px;height:5.3px;background:#b5b5b5;"></div><div class="b" style="left:135.3px;top:142.4px;width:41.8px;height:35.8px;background:#f2f2f2;"></div><div class="b" style="left:141px;top:146px;width:30.5px;height:24.4px;background:#777;"></div><div class="b" style="left:116.6px;top:179.4px;width:79.2px;height:2px;background:#444;"></div><div class="b" style="left:119px;top:179.4px;width:15px;height:2px;background:#ddd;"></div><div class="b" style="left:195.8px;top:131.8px;width:79.2px;height:3.7px;background:#181818;"></div><div class="b" style="left:195.8px;top:135.5px;width:79.2px;height:39.4px;background:#e6e6e6;"></div><div class="b" style="left:210px;top:140px;width:32.5px;height:34.9px;background:#fff;"></div><div class="b" style="left:258.8px;top:140px;width:14.2px;height:32.5px;background:#333;"></div><div class="b" style="left:195.8px;top:174.9px;width:79.2px;height:6.5px;background:#0a0a0a;"></div><div class="b" style="left:276px;top:182.2px;width:15.4px;height:5.9px;background:#cfcfcf;"></div><div class="b" style="left:0px;top:228.1px;width:390px;height:5.5px;background:#525252;"></div><div class="b" style="left:0px;top:233.6px;width:390px;height:10.2px;background:#42403e;"></div><div class="b" style="left:12.2px;top:233.6px;width:73.1px;height:10.2px;background:#eeeeee;"></div><div class="b" style="left:101.2px;top:235.6px;width:6.5px;height:6.1px;background:#f5b93d;border-radius:2px;"></div><div class="b" style="left:113.8px;top:235.6px;width:6.5px;height:6.1px;background:#1ed760;border-radius:2px;"></div><div class="b" style="left:126.3px;top:235.6px;width:6.5px;height:6.1px;background:#1a78d2;border-radius:2px;"></div><div class="b" style="left:138.9px;top:235.6px;width:6.5px;height:6.1px;background:#5059c9;border-radius:2px;"></div><div class="b" style="left:151.5px;top:235.6px;width:6.5px;height:6.1px;background:#eee;border-radius:2px;"></div><div class="b" style="left:164.1px;top:235.6px;width:6.5px;height:6.1px;background:#e33b2e;border-radius:2px;"></div><div class="b" style="left:176.7px;top:235.6px;width:6.5px;height:6.1px;background:#2b7cd3;border-radius:2px;"></div><div class="b" style="left:189.3px;top:235.6px;width:6.5px;height:6.1px;background:#21a366;border-radius:2px;"></div><div class="b" style="left:390px;top:0px;width:390px;height:8.1px;background:#000;"></div><div class="b" style="left:390px;top:8.1px;width:390px;height:9.5px;background:#2d2d2d;"></div><div class="b" style="left:414.4px;top:9.3px;width:330.3px;height:6.9px;background:#3d3d3d;"></div><div class="b" style="left:390px;top:17.7px;width:390px;height:193.6px;background:#fff;"></div><div class="b" style="left:394.9px;top:22.5px;width:26.8px;height:7.3px;background:#0b6ed0;"></div><div class="b" style="left:742.2px;top:22.5px;width:32.9px;height:7.3px;background:#0b6ed0;"></div><div class="b" style="left:394.9px;top:39.6px;width:298.2px;height:171.6px;background:#d9d9d9;"></div><div class="b" style="left:465.8px;top:74.1px;width:156.4px;height:137.1px;background:#fff;"></div><div class="b" style="left:539.3px;top:55px;width:9.3px;height:15px;background:#6fa3d6;"></div><div class="b" style="left:468.8px;top:78.2px;width:150.3px;height:20.3px;background:#c9c9c9;"></div><div class="b" style="left:472.9px;top:123.7px;width:40.6px;height:10.2px;background:#cfcfcf;"></div><div class="b" style="left:506.4px;top:126.5px;width:112.3px;height:4.5px;background:radial-gradient(circle,#9a9a9a 0 2.2px,transparent 2.7px) 0 0/20% 100%;"></div><div class="b" style="left:472.9px;top:140.2px;width:40.6px;height:10.2px;background:#cfcfcf;"></div><div class="b" style="left:506.4px;top:143px;width:112.3px;height:4.5px;background:radial-gradient(circle,#9a9a9a 0 2.2px,transparent 2.7px) 0 0/20% 100%;"></div><div class="b" style="left:472.9px;top:159.7px;width:40.6px;height:10.2px;background:#cfcfcf;"></div><div class="b" style="left:506.4px;top:162.5px;width:112.3px;height:4.5px;background:radial-gradient(circle,#9a9a9a 0 2.2px,transparent 2.7px) 0 0/20% 100%;"></div><div class="b" style="left:472.9px;top:178.3px;width:40.6px;height:10.2px;background:#cfcfcf;"></div><div class="b" style="left:506.4px;top:181.2px;width:112.3px;height:4.5px;background:radial-gradient(circle,#9a9a9a 0 2.2px,transparent 2.7px) 0 0/20% 100%;"></div><div class="b" style="left:472.9px;top:197.4px;width:40.6px;height:10.2px;background:#cfcfcf;"></div><div class="b" style="left:506.4px;top:200.3px;width:112.3px;height:4.5px;background:radial-gradient(circle,#9a9a9a 0 2.2px,transparent 2.7px) 0 0/20% 100%;"></div><div class="b" style="left:693.1px;top:39.6px;width:3.5px;height:171.6px;background:#eee;"></div><div class="b" style="left:701.8px;top:39.6px;width:72.3px;height:158.4px;background:#252b33;border-radius:7px;"></div><div class="b" style="left:703.6px;top:46.1px;width:68.9px;height:149.3px;background:#fff;border-radius:3px;"></div><div class="b" style="left:703.6px;top:52.8px;width:68.9px;height:18.3px;background:#d9d9d9;"></div><div class="b" style="left:707.7px;top:75.2px;width:58.9px;height:40.6px;background:#cfcfcf;"></div><div class="b" style="left:707.7px;top:135.7px;width:60.7px;height:9.8px;background:#e6e6e6;"></div><div class="b" style="left:707.7px;top:146.7px;width:60.7px;height:9.8px;background:#e6e6e6;"></div><div class="b" style="left:707.7px;top:157.6px;width:60.7px;height:9.8px;background:#e6e6e6;"></div><div class="b" style="left:707.7px;top:168.6px;width:60.7px;height:9.8px;background:#e6e6e6;"></div><div class="b" style="left:707.7px;top:179.6px;width:60.7px;height:9.8px;background:#e6e6e6;"></div><div class="b" style="left:390px;top:211.2px;width:390px;height:8.1px;background:#42403e;"></div><div class="b" style="left:390px;top:219.4px;width:390px;height:24.4px;background:#000;"></div><div class="b" style="left:422.1px;top:212.9px;width:5.1px;height:4.9px;background:#f5b93d;border-radius:2px;"></div><div class="b" style="left:432px;top:212.9px;width:5.1px;height:4.9px;background:#1ed760;border-radius:2px;"></div><div class="b" style="left:442px;top:212.9px;width:5.1px;height:4.9px;background:#1a78d2;border-radius:2px;"></div><div class="b" style="left:452px;top:212.9px;width:5.1px;height:4.9px;background:#5059c9;border-radius:2px;"></div><div class="b" style="left:461.9px;top:212.9px;width:5.1px;height:4.9px;background:#eee;border-radius:2px;"></div><div class="b" style="left:471.9px;top:212.9px;width:5.1px;height:4.9px;background:#e33b2e;border-radius:2px;"></div><div class="b" style="left:481.8px;top:212.9px;width:5.1px;height:4.9px;background:#2b7cd3;border-radius:2px;"></div><div class="b" style="left:491.8px;top:212.9px;width:5.1px;height:4.9px;background:#21a366;border-radius:2px;"></div></div><div class="b" style="left:574px;top:837px;width:780px;height:244px;background:#000;overflow:hidden;"><div class="b" style="left:0px;top:0px;width:390px;height:233.6px;background:#525252;"></div><div class="b" style="left:144.4px;top:2px;width:105px;height:7.9px;background:#bdbdbd;"></div><div class="b" style="left:2px;top:19.9px;width:385.9px;height:25.2px;background:#bdbdbd;border-radius:2px;"></div><div class="b" style="left:168.8px;top:24.2px;width:25.6px;height:12.2px;background:#fff;"></div><div class="b" style="left:196.4px;top:24.2px;width:25.6px;height:12.2px;background:#fff;"></div><div class="b" style="left:223.8px;top:24.2px;width:25.6px;height:12.2px;background:#fff;"></div><div class="b" style="left:251.3px;top:24.2px;width:25.6px;height:12.2px;background:#fff;"></div><div class="b" style="left:278.7px;top:24.2px;width:25.6px;height:12.2px;background:#fff;"></div><div class="b" style="left:366.4px;top:13px;width:20.5px;height:5.9px;background:#7ea9f1;"></div><div class="b" style="left:92.4px;top:51.2px;width:206.8px;height:90.8px;background:#fff;"></div><div class="b" style="left:92.4px;top:146.2px;width:206.8px;height:81.9px;background:#fff;"></div><div class="b" style="left:116.6px;top:51.2px;width:79.2px;height:46.5px;background:#585858;"></div><div class="b" style="left:116.6px;top:54.2px;width:79.2px;height:5.3px;background:#b5b5b5;"></div><div class="b" style="left:135.3px;top:60.7px;width:41.8px;height:35.8px;background:#f2f2f2;"></div><div class="b" style="left:141px;top:64.4px;width:30.5px;height:24.4px;background:#777;"></div><div class="b" style="left:116.6px;top:97.7px;width:79.2px;height:2px;background:#444;"></div><div class="b" style="left:119px;top:97.7px;width:15px;height:2px;background:#ddd;"></div><div class="b" style="left:195.8px;top:51.2px;width:79.2px;height:2.6px;background:#181818;"></div><div class="b" style="left:195.8px;top:53.8px;width:79.2px;height:39.4px;background:#e6e6e6;"></div><div class="b" style="left:210px;top:58.3px;width:32.5px;height:34.9px;background:#fff;"></div><div class="b" style="left:258.8px;top:58.3px;width:14.2px;height:32.5px;background:#333;"></div><div class="b" style="left:195.8px;top:93.2px;width:79.2px;height:6.5px;background:#0a0a0a;"></div><div class="b" style="left:116.6px;top:170.6px;width:79.2px;height:47.5px;background:#585858;"></div><div class="b" style="left:116.6px;top:174.7px;width:79.2px;height:5.3px;background:#b5b5b5;"></div><div class="b" style="left:135.3px;top:181.2px;width:41.8px;height:35.8px;background:#f2f2f2;"></div><div class="b" style="left:141px;top:184.8px;width:30.5px;height:24.4px;background:#777;"></div><div class="b" style="left:116.6px;top:218.2px;width:79.2px;height:2px;background:#444;"></div><div class="b" style="left:119px;top:218.2px;width:15px;height:2px;background:#ddd;"></div><div class="b" style="left:195.8px;top:170.6px;width:79.2px;height:3.7px;background:#181818;"></div><div class="b" style="left:195.8px;top:174.3px;width:79.2px;height:39.4px;background:#e6e6e6;"></div><div class="b" style="left:210px;top:178.8px;width:32.5px;height:34.9px;background:#fff;"></div><div class="b" style="left:258.8px;top:178.8px;width:14.2px;height:32.5px;background:#333;"></div><div class="b" style="left:195.8px;top:213.7px;width:79.2px;height:6.5px;background:#0a0a0a;"></div><div class="b" style="left:276px;top:221.4px;width:15.4px;height:5.9px;background:#cfcfcf;"></div><div class="b" style="left:0px;top:228.1px;width:390px;height:5.5px;background:#525252;"></div><div class="b" style="left:0px;top:233.6px;width:390px;height:10.2px;background:#42403e;"></div><div class="b" style="left:12.2px;top:233.6px;width:73.1px;height:10.2px;background:#eeeeee;"></div><div class="b" style="left:101.2px;top:235.6px;width:6.5px;height:6.1px;background:#f5b93d;border-radius:2px;"></div><div class="b" style="left:113.8px;top:235.6px;width:6.5px;height:6.1px;background:#1ed760;border-radius:2px;"></div><div class="b" style="left:126.3px;top:235.6px;width:6.5px;height:6.1px;background:#1a78d2;border-radius:2px;"></div><div class="b" style="left:138.9px;top:235.6px;width:6.5px;height:6.1px;background:#5059c9;border-radius:2px;"></div><div class="b" style="left:151.5px;top:235.6px;width:6.5px;height:6.1px;background:#eee;border-radius:2px;"></div><div class="b" style="left:164.1px;top:235.6px;width:6.5px;height:6.1px;background:#e33b2e;border-radius:2px;"></div><div class="b" style="left:176.7px;top:235.6px;width:6.5px;height:6.1px;background:#2b7cd3;border-radius:2px;"></div><div class="b" style="left:189.3px;top:235.6px;width:6.5px;height:6.1px;background:#21a366;border-radius:2px;"></div><div class="b" style="left:390px;top:0px;width:390px;height:8.1px;background:#000;"></div><div class="b" style="left:390px;top:8.1px;width:390px;height:9.5px;background:#2d2d2d;"></div><div class="b" style="left:414.4px;top:9.3px;width:330.3px;height:6.9px;background:#3d3d3d;"></div><div class="b" style="left:390px;top:17.7px;width:390px;height:193.6px;background:#fff;"></div><div class="b" style="left:394.9px;top:22.5px;width:26.8px;height:7.3px;background:#0b6ed0;"></div><div class="b" style="left:742.2px;top:22.5px;width:32.9px;height:7.3px;background:#0b6ed0;"></div><div class="b" style="left:394.9px;top:39.6px;width:298.2px;height:171.6px;background:#d9d9d9;"></div><div class="b" style="left:465.8px;top:39.6px;width:156.4px;height:163.5px;background:#fff;"></div><div class="b" style="left:472.9px;top:45.3px;width:40.6px;height:10.2px;background:#cfcfcf;"></div><div class="b" style="left:506.4px;top:48.1px;width:112.3px;height:4.5px;background:radial-gradient(circle,#9a9a9a 0 2.2px,transparent 2.7px) 0 0/20% 100%;"></div><div class="b" style="left:472.9px;top:64.4px;width:40.6px;height:10.2px;background:#cfcfcf;"></div><div class="b" style="left:506.4px;top:67.2px;width:112.3px;height:4.5px;background:radial-gradient(circle,#9a9a9a 0 2.2px,transparent 2.7px) 0 0/20% 100%;"></div><div class="b" style="left:472.9px;top:83.5px;width:40.6px;height:10.2px;background:#cfcfcf;"></div><div class="b" style="left:506.4px;top:86.3px;width:112.3px;height:4.5px;background:radial-gradient(circle,#9a9a9a 0 2.2px,transparent 2.7px) 0 0/20% 100%;"></div><div class="b" style="left:472.9px;top:102.4px;width:40.6px;height:10.2px;background:#cfcfcf;"></div><div class="b" style="left:506.4px;top:105.2px;width:112.3px;height:4.5px;background:radial-gradient(circle,#9a9a9a 0 2.2px,transparent 2.7px) 0 0/20% 100%;"></div><div class="b" style="left:468.8px;top:130px;width:117.8px;height:6.9px;background:#c9c9c9;"></div><div class="b" style="left:468.8px;top:142.6px;width:149.9px;height:29.5px;background:#e4e4e4;outline:1px solid #999;"></div><div class="b" style="left:469.2px;top:190.9px;width:17.1px;height:8.7px;background:#a0ccee;"></div><div class="b" style="left:602.5px;top:190.9px;width:16.2px;height:8.7px;background:#a0ccee;"></div><div class="b" style="left:693.1px;top:39.6px;width:3.5px;height:171.6px;background:#eee;"></div><div class="b" style="left:701.8px;top:39.6px;width:72.3px;height:158.4px;background:#252b33;border-radius:7px;"></div><div class="b" style="left:703.6px;top:46.1px;width:68.9px;height:149.3px;background:#fff;border-radius:3px;"></div><div class="b" style="left:707.7px;top:53.8px;width:60.7px;height:9.8px;background:#e6e6e6;"></div><div class="b" style="left:707.7px;top:64.8px;width:60.7px;height:9.8px;background:#e6e6e6;"></div><div class="b" style="left:707.7px;top:75.8px;width:60.7px;height:9.8px;background:#e6e6e6;"></div><div class="b" style="left:707.7px;top:86.7px;width:60.7px;height:9.8px;background:#e6e6e6;"></div><div class="b" style="left:707.7px;top:133.5px;width:60.7px;height:23.2px;background:#e4e4e4;outline:1px solid #999;"></div><div class="b" style="left:706.1px;top:174.3px;width:15.2px;height:7.5px;background:#a0ccee;"></div><div class="b" style="left:755.4px;top:174.3px;width:14.6px;height:7.5px;background:#a0ccee;"></div><div class="b" style="left:703.6px;top:184.2px;width:68.9px;height:11.2px;background:#dadada;"></div><div class="b" style="left:390px;top:211.2px;width:390px;height:8.1px;background:#42403e;"></div><div class="b" style="left:390px;top:219.4px;width:390px;height:24.4px;background:#000;"></div><div class="b" style="left:422.1px;top:212.9px;width:5.1px;height:4.9px;background:#f5b93d;border-radius:2px;"></div><div class="b" style="left:432px;top:212.9px;width:5.1px;height:4.9px;background:#1ed760;border-radius:2px;"></div><div class="b" style="left:442px;top:212.9px;width:5.1px;height:4.9px;background:#1a78d2;border-radius:2px;"></div><div class="b" style="left:452px;top:212.9px;width:5.1px;height:4.9px;background:#5059c9;border-radius:2px;"></div><div class="b" style="left:461.9px;top:212.9px;width:5.1px;height:4.9px;background:#eee;border-radius:2px;"></div><div class="b" style="left:471.9px;top:212.9px;width:5.1px;height:4.9px;background:#e33b2e;border-radius:2px;"></div><div class="b" style="left:481.8px;top:212.9px;width:5.1px;height:4.9px;background:#2b7cd3;border-radius:2px;"></div><div class="b" style="left:491.8px;top:212.9px;width:5.1px;height:4.9px;background:#21a366;border-radius:2px;"></div></div><div class="b" style="left:1359px;top:1085px;width:75.7px;height:28.8px;background:#d2d2d2;border:1px solid #a8a8a8;box-sizing:border-box;"></div><span class="t" style="left:1386px;top:1092px;font-size:15.5px;color:#333;transform:scaleX(0.929);">(Ctrl)</span><div class="b" style="left:0px;top:1123px;width:1920px;height:27px;background:#525252;"></div><span class="t" style="left:15px;top:1130px;font-size:14px;color:#f0f0f0;transform:scaleX(0.936);">Page 4 of 4</span><span class="t" style="left:105.9px;top:1130px;font-size:14px;color:#f0f0f0;transform:scaleX(0.952);">22 words</span><svg class="b" style="left:183.5px;top:1128.5px;" width="19" height="19" viewBox="0 0 19 19"><path d="M1.5 2 H7 Q9.3 2 9.3 4.3 V15.5 Q9.3 13.5 7 13.5 H1.5 Z M17.5 8 V2 H12 Q9.5 2 9.5 4.3" fill="none" stroke="#eee" stroke-width="1.3"/><path d="M10.5 13.5 L13 16.5 L18 10.5" fill="none" stroke="#eee" stroke-width="1.3"/></svg><span class="t" style="left:227.4px;top:1130px;font-size:14px;color:#f0f0f0;transform:scaleX(0.913);">Text Predictions: On</span><svg class="b" style="left:366px;top:1127.5px;" width="20" height="20" viewBox="0 0 20 20"><circle cx="9" cy="3" r="2" fill="none" stroke="#eee" stroke-width="1.2"/><path d="M1.5 6.5 Q9 9.5 16.5 6.5 M9 8.5 V12 M9 12 L5 18.5 M9 12 L11 15" fill="none" stroke="#eee" stroke-width="1.3"/><path d="M12 12 L18.5 18.5 M18.5 12 L12 18.5" stroke="#eee" stroke-width="1.3"/></svg><span class="t" style="left:389px;top:1130px;font-size:14px;color:#fff;font-weight:700;transform:scaleX(0.910);">Accessibility: Investigate</span><svg class="b" style="left:1345px;top:1128px;" width="20" height="19" viewBox="0 0 20 19"><path d="M9 13 H1.5 V1.5 H17.5 V6" fill="none" stroke="#eee" stroke-width="1.3"/><circle cx="13.5" cy="12.5" r="3" fill="none" stroke="#eee" stroke-width="1.6"/><path d="M13.5 7.5 V9 M13.5 16 V17.5 M8.5 12.5 H10 M17 12.5 H18.5 M10 9 L11 10 M16 15 L17 16 M17 9 L16 10 M11 15 L10 16" stroke="#eee" stroke-width="1.4"/></svg><span class="t" style="left:1366.3px;top:1130px;font-size:14px;color:#f0f0f0;transform:scaleX(0.914);">Display Settings</span><svg class="b" style="left:1478.5px;top:1127.5px;" width="19" height="20" viewBox="0 0 19 20"><path d="M1 5 V1.5 H4.5 M14.5 1.5 H18 V5 M18 15 V18.5 H14.5 M4.5 18.5 H1 V15" fill="none" stroke="#eee" stroke-width="1.3"/><path d="M5.5 4.5 H10.5 L13.5 7.5 V15.5 H5.5 Z M10.5 4.5 V7.5 H13.5" fill="none" stroke="#eee" stroke-width="1.2"/></svg><span class="t" style="left:1500px;top:1130px;font-size:14px;color:#f0f0f0;transform:scaleX(0.863);">Focus</span><svg class="b" style="left:1563px;top:1128.5px;" width="19" height="17" viewBox="0 0 19 17"><path d="M9.5 2.5 Q5 0.5 1 2 V14.5 Q5 13 9.5 15 Q14 13 18 14.5 V2 Q14 0.5 9.5 2.5 V15" fill="none" stroke="#eee" stroke-width="1.3"/><path d="M3.5 5 H7 M3.5 7.5 H7 M3.5 10 H7 M12 5 H15.5 M12 7.5 H15.5 M12 10 H15.5" stroke="#eee" stroke-width="1"/></svg><div class="b" style="left:1598px;top:1123px;width:49.7px;height:27px;background:#646464;"></div><svg class="b" style="left:1615px;top:1128px;" width="15" height="18" viewBox="0 0 15 18"><rect x="0.7" y="0.7" width="13.6" height="16.6" fill="none" stroke="#eee" stroke-width="1.3"/><path d="M3 4 H12 M3 6.5 H12 M3 9 H12 M3 11.5 H12 M3 14 H12" stroke="#eee" stroke-width="1.1"/></svg><svg class="b" style="left:1663px;top:1128px;" width="20" height="19" viewBox="0 0 20 19"><path d="M9 16 H1 V1 H15 V7" fill="none" stroke="#eee" stroke-width="1.3"/><path d="M3 4 H13 M3 6.5 H13 M3 9 H8" stroke="#eee" stroke-width="1.1"/><circle cx="13.5" cy="13" r="5" fill="none" stroke="#eee" stroke-width="1.2"/><path d="M8.5 13 H18.5 M13.5 8 Q10.5 13 13.5 18 M13.5 8 Q16.5 13 13.5 18" fill="none" stroke="#eee" stroke-width="0.9"/></svg><div class="b" style="left:1705.5px;top:1136.6px;width:9.5px;height:1.2px;background:#eee;"></div><div class="b" style="left:1721px;top:1136.8px;width:125px;height:1px;background:#cfcfcf;"></div><div class="b" style="left:1781.5px;top:1130px;width:4.5px;height:14.5px;background:#d8d8d8;"></div><div class="b" style="left:1852px;top:1136.6px;width:9.5px;height:1.2px;background:#eee;"></div><div class="b" style="left:1856.2px;top:1132.4px;width:1.2px;height:9.5px;background:#eee;"></div><span class="t" style="left:1878.7px;top:1130px;font-size:14px;color:#f0f0f0;transform:scaleX(0.855);">100%</span></div><div class="win" style="left:0;top:1150px;width:1920px;height:50px;background:#42403e;"><svg class="b" style="left:19.3px;top:14px;" width="21" height="21" viewBox="0 0 21 21"><path d="M0 2.9 L9.2 1.7 V9.2 H0 Z M11.8 1.3 L21 0 V9.2 H11.8 Z M0 11.8 H9.2 V19.3 L0 18.1 Z M11.8 11.8 H21 V21 L11.8 19.7 Z" fill="#fff"/></svg><div class="b" style="left:60px;top:0.4px;width:359.8px;height:49.6px;background:#f2f2f2;"></div><svg class="b" style="left:73px;top:11px;" width="26" height="26" viewBox="0 0 26 26"><circle cx="15" cy="10" r="7.2" fill="none" stroke="#222" stroke-width="1.6"/><path d="M9.8 15.2 L2.5 22.8" stroke="#222" stroke-width="1.8"/></svg><span class="t" style="left:110.3px;top:17px;font-size:18.5px;color:#1f1f1f;">Type here to search</span><div class="b" style="left:325px;top:4.7px;width:90px;height:40px;background:#e3e3e3;border-radius:8px;"></div><svg class="b" style="left:350px;top:8px;" width="40" height="34" viewBox="0 0 40 34"><path d="M14 5 Q14 1.5 17 1.5 H23 Q26 1.5 26 5 V7 H22.5 V5 H17.5 V7 H14 Z" fill="#5a3b1a"/><rect x="1" y="7" width="38" height="25" rx="3" fill="#c8731a"/><rect x="1" y="7" width="38" height="10" rx="3" fill="#e08f2a"/><path d="M1 15 H39 V18 H1 Z" fill="#a85a12"/><rect x="16" y="14" width="8" height="7" rx="1" fill="#f6c83a"/><rect x="18" y="16" width="4" height="2.5" fill="#a87410"/></svg><svg class="b" style="left:437.4px;top:11.9px;" width="25.2" height="25.2" viewBox="0 0 24 24"><rect x="2.6" y="7.2" width="11.8" height="9.6" fill="none" stroke="#fff" stroke-width="1.4"/><path d="M2 3.7 H15 M2 20.3 H15 M20 2.5 V7 M20 9.5 V14.5 M20 17 V21.5" stroke="#fff" stroke-width="1.5" fill="none"/></svg><svg class="b" style="left:497.6px;top:8px;" width="32" height="32" viewBox="0 0 32 32"><path d="M2 5 H12 L14.5 8 H30 V26 H2 Z" fill="#f5b93d"/><path d="M2 10 H30 V26 H2 Z" fill="#fcd463"/><path d="M8 17 H24 V26 H8 Z" fill="#3b8fde"/><path d="M11 21 H21 V26 H11 Z" fill="#fcd463"/><rect x="2" y="25" width="28" height="1.5" fill="#d99a22"/></svg><svg class="b" style="left:560.6px;top:9.3px;" width="30.4" height="30.4" viewBox="0 0 32 32"><circle cx="16" cy="16" r="14.5" fill="#1ed760"/><path d="M8 11.5 Q17 9 25 13.5" fill="none" stroke="#000" stroke-width="2.6" stroke-linecap="round"/><path d="M9 16.5 Q17 14.5 23.5 18" fill="none" stroke="#000" stroke-width="2.2" stroke-linecap="round"/><path d="M10 21 Q16.5 19.5 22 22.3" fill="none" stroke="#000" stroke-width="1.8" stroke-linecap="round"/></svg><svg class="b" style="left:622.4px;top:10.9px;" width="31.3" height="31.3" viewBox="0 0 34 34"><path d="M10 6 L22 1 L33 7 V22 L22 28 L10 22 Z" fill="#1a78d2"/><path d="M10 6 L22 1 L33 7 L22 12 Z" fill="#4fb2f2"/><path d="M10 22 L22 13 L33 22 L22 28 Z" fill="#0f5aa8"/><rect x="0.5" y="8" width="17" height="17" rx="2" fill="#0f64b8"/><text x="9" y="21.5" font-size="13" font-weight="700" font-family="Liberation Sans,sans-serif" fill="#fff" text-anchor="middle">O</text><rect x="13" y="24" width="20" height="9" rx="1.5" fill="#16c8f0"/><text x="23" y="31.3" font-size="7.5" font-weight="700" font-family="Liberation Sans,sans-serif" fill="#0a2a5a" text-anchor="middle">NEW</text></svg><svg class="b" style="left:685.9px;top:11.4px;" width="31.3" height="31.3" viewBox="0 0 34 34"><circle cx="26" cy="7" r="3.2" fill="#5b63d3"/><circle cx="18.5" cy="5.5" r="4.5" fill="#7b83eb"/><path d="M14 11 H31 V21 Q31 26 25 26 H14 Z" fill="#5059c9"/><rect x="1" y="8" width="17" height="17" rx="2" fill="#4b53bc"/><text x="9.5" y="21.5" font-size="13" font-weight="700" font-family="Liberation Sans,sans-serif" fill="#fff" text-anchor="middle">T</text><rect x="8" y="24" width="14" height="8" rx="1.5" fill="#16c8f0"/><circle cx="23.5" cy="24" r="8.5" fill="#e2343f"/></svg><svg class="b" style="left:747px;top:9.3px;" width="30.4" height="30.4" viewBox="0 0 32 32"><circle cx="16" cy="16" r="15" fill="#f4f2ee"/><g stroke-width="3.4" stroke-linecap="round"><path d="M13 8 V14.5" stroke="#36c5f0"/><path d="M8 13 H9" stroke="#36c5f0"/><path d="M17.5 13 H24" stroke="#2eb67d"/><path d="M19 8 V9" stroke="#2eb67d"/><path d="M19 17.5 V24" stroke="#ecb22e"/><path d="M23 19 H24" stroke="#ecb22e"/><path d="M8 19 H14.5" stroke="#e01e5a"/><path d="M13 23 V24" stroke="#e01e5a"/></g></svg><svg class="b" style="left:808.4px;top:8.5px;" width="34" height="34" viewBox="0 0 34 34"><circle cx="16" cy="16" r="14.5" fill="#e33b2e"/><path d="M16 16 L3.5 8.8 A14.5 14.5 0 0 0 10.5 29.4 Z" fill="#2da94f"/><path d="M16 16 L10.5 29.4 A14.5 14.5 0 0 0 29.5 10.5 L16 10.5 Z" fill="#fdd231"/><circle cx="16" cy="16" r="6.6" fill="#fff"/><circle cx="16" cy="16" r="5.2" fill="#4285f4"/><circle cx="24.5" cy="25" r="8.8" fill="#e8e0da"/><path d="M17.5 31 Q18 19 24.5 18.5 Q31 19 31.5 31 Z" fill="#5a3a2a"/><ellipse cx="24.5" cy="24.5" rx="3.2" ry="4" fill="#e8b99a"/><path d="M19 33.5 Q24.5 27 30 33.5 Z" fill="#f3f3f3"/></svg><div class="b" style="left:856.5px;top:0px;width:55.5px;height:50px;background:#676563;"></div><div class="b" style="left:913px;top:0px;width:1px;height:50px;background:#5e5c5a;"></div><svg class="b" style="left:870px;top:8.5px;" width="32" height="32" viewBox="0 0 32 32"><rect x="8" y="2" width="23" height="28" rx="2" fill="#2b7cd3"/><rect x="8" y="2" width="23" height="7.5" fill="#41a5ee"/><rect x="8" y="16.5" width="23" height="7" fill="#185abd"/><rect x="8" y="23" width="23" height="7" fill="#103f91"/><rect x="1" y="8" width="17" height="17" rx="1.5" fill="#185abd"/><text x="9.5" y="21.3" font-size="12.5" font-weight="700" font-family="Liberation Sans,sans-serif" fill="#fff" text-anchor="middle">W</text></svg><svg class="b" style="left:929.8px;top:8.5px;" width="32" height="32" viewBox="0 0 32 32"><rect x="8" y="2" width="23" height="28" rx="2" fill="#21a366"/><rect x="8" y="2" width="11.5" height="7.5" fill="#21a366"/><rect x="19.5" y="2" width="11.5" height="7.5" fill="#33c481"/><rect x="8" y="9.5" width="11.5" height="7" fill="#107c41"/><rect x="19.5" y="9.5" width="11.5" height="7" fill="#21a366"/><rect x="8" y="16.5" width="23" height="7" fill="#107c41"/><rect x="8" y="23" width="23" height="7" fill="#185c37"/><rect x="1" y="8" width="17" height="17" rx="1.5" fill="#107c41"/><text x="9.5" y="21.3" font-size="12.5" font-weight="700" font-family="Liberation Sans,sans-serif" fill="#fff" text-anchor="middle">X</text></svg><div class="b" style="left:489px;top:47px;width:50.7px;height:3px;background:#7fd9d2;"></div><div class="b" style="left:613px;top:47px;width:50px;height:3px;background:#7fd9d2;"></div><div class="b" style="left:675px;top:47px;width:51px;height:3px;background:#7fd9d2;"></div><div class="b" style="left:799.5px;top:47px;width:50.5px;height:3px;background:#7fd9d2;"></div><div class="b" style="left:856.5px;top:47px;width:55.5px;height:3px;background:#7fd9d2;"></div><div class="b" style="left:656px;top:47px;width:7px;height:3px;background:#5f8f8b;"></div><svg class="b" style="left:1421px;top:13px;" width="33" height="24" viewBox="0 0 33 24"><path d="M2 9 H20 Q25 9 25 5.5 Q25 2 21.5 2 Q18.5 2 18.5 5" fill="none" stroke="#8fb6e8" stroke-width="2.6" stroke-linecap="round"/><path d="M2 14.5 H26 Q30.5 14.5 30.5 18.5 Q30.5 22 27 22 Q24 22 24 19" fill="none" stroke="#6f9fe0" stroke-width="2.6" stroke-linecap="round"/><path d="M8 4 H14 M6 19.5 H18" stroke="#a9c8ee" stroke-width="2.2" stroke-linecap="round"/></svg><span class="t" style="left:1463.6px;top:18px;font-size:17.5px;color:#fff;transform:scaleX(1.022);">High winds soon</span><svg class="b" style="left:1626px;top:20px;" width="17" height="10" viewBox="0 0 17 10"><path d="M1 9 L8.5 1.5 L16 9" fill="none" stroke="#fff" stroke-width="1.4"/></svg><svg class="b" style="left:1653px;top:15px;" width="24" height="19" viewBox="0 0 24 19"><path d="M5 14 Q0.5 14 1 10 Q1.5 6.5 5.5 7 Q7 2 12 3 Q15 3.5 16 6.5 Q20.5 6 21 10 Q21 14 17 14 Z" fill="#1e8fe8"/><circle cx="16" cy="12.5" r="5.5" fill="#1553b5"/><text x="16" y="16" font-size="8.5" font-weight="700" font-family="Liberation Serif,serif" fill="#fff" text-anchor="middle">i</text></svg><svg class="b" style="left:1684px;top:15px;" width="22" height="20" viewBox="0 0 22 20"><path d="M1.5 7 H5 L10 2.5 V17.5 L5 13 H1.5 Z" fill="none" stroke="#fff" stroke-width="1.3"/><path d="M13 7 Q15 10 13 13" fill="none" stroke="#fff" stroke-width="1.2"/><path d="M15.5 4.5 Q19 10 15.5 15.5" fill="none" stroke="#bbb" stroke-width="1.1"/><path d="M18 2.5 Q22.5 10 18 17.5" fill="none" stroke="#888" stroke-width="1"/></svg><svg class="b" style="left:1714px;top:17px;" width="23" height="16" viewBox="0 0 23 16"><path d="M1 4.5 H4 M2.5 2.5 V6.5" stroke="#fff" stroke-width="1.2"/><rect x="5" y="4" width="15" height="9" fill="#fff" stroke="#fff" stroke-width="1.2"/><rect x="21" y="6.5" width="1.6" height="4" fill="#fff"/><path d="M3 3 Q3 1 5 1" fill="none" stroke="#fff" stroke-width="1"/></svg><svg class="b" style="left:1746px;top:15px;" width="20" height="20" viewBox="0 0 20 20"><circle cx="17" cy="17" r="1.8" fill="#fff"/><path d="M11 18 A7 7 0 0 1 18 11" fill="none" stroke="#fff" stroke-width="1.5"/><path d="M6 18 A12 12 0 0 1 18 6" fill="none" stroke="#ccc" stroke-width="1.4"/><path d="M1 18 A17 17 0 0 1 18 1" fill="none" stroke="#999" stroke-width="1.3"/></svg><span class="t" style="left:1786px;top:7px;font-size:14px;color:#fff;transform:scaleX(0.990);">4:12 PM</span><span class="t" style="left:1778px;top:30px;font-size:14px;color:#fff;transform:scaleX(1.084);">4/16/2024</span><svg class="b" style="left:1866px;top:13px;" width="36" height="32" viewBox="0 0 36 32"><path d="M3 2 H23 V18 H8 L3 22.5 Z" fill="#fff"/><path d="M6 6.5 H20 M6 10 H20 M6 13.5 H15" stroke="#3e3c3a" stroke-width="1.3"/><circle cx="23" cy="21" r="9.5" fill="#3e3c3a" stroke="#fff" stroke-width="1.2"/><text x="23" y="26" font-size="13.5" font-family="Liberation Sans,sans-serif" fill="#fff" text-anchor="middle">22</text></svg><div class="b" style="left:1913.7px;top:0px;width:1px;height:50px;background:#8a8886;"></div></div><div class="win" style="left:1920px;top:0;width:1920px;height:1040px;background:#fff;"><div class="b" style="left:0px;top:0px;width:1920px;height:56px;background:#000;"></div><div class="b" style="left:6px;top:6.3px;width:27.5px;height:27.2px;background:#2a2a2a;border-radius:8px;"></div><svg class="b" style="left:15.5px;top:17.9px;" width="8.4" height="5.2" viewBox="0 0 8.4 5.2"><path d="M1 1 L4.2 4.2 L7.4 1" fill="none" stroke="#fff" stroke-width="1.5"/></svg><span class="t" style="left:48px;top:14px;font-size:13px;color:#21b5e8;font-weight:700;transform:scaleX(0.980);">X</span><span class="t" style="left:56px;top:14px;font-size:13px;color:#1a6fd0;font-weight:700;transform:scaleX(1.016);">M</span><div class="b" style="left:72px;top:8px;width:167px;height:25px;overflow:hidden;-webkit-mask-image:linear-gradient(90deg,#000 85%,transparent);mask-image:linear-gradient(90deg,#000 85%,transparent);"><span class="t" style="left:0.4px;top:6px;font-size:14.5px;color:#fff;transform:scaleX(0.799);">Distribute Survey | Qualtrics Exp</span></div><svg class="b" style="left:251px;top:15.5px;" width="10" height="10" viewBox="0 0 10 10"><path d="M1 1 L9 9 M9 1 L1 9" stroke="#fff" stroke-width="1.5"/></svg><div class="b" style="left:277.7px;top:6.3px;width:232.3px;height:33.7px;background:#2d2d2d;border-radius:10px 10px 0 0;"></div><svg class="b" style="left:267.7px;top:30px;" width="10" height="10" viewBox="0 0 10 10"><path d="M10 0 V10 H0 Q10 10 10 0 Z" fill="#2d2d2d"/></svg><svg class="b" style="left:510px;top:30px;" width="10" height="10" viewBox="0 0 10 10"><path d="M0 0 V10 H10 Q0 10 0 0 Z" fill="#2d2d2d"/></svg><span class="t" style="left:286px;top:14px;font-size:13px;color:#21b5e8;font-weight:700;transform:scaleX(0.980);">X</span><span class="t" style="left:294px;top:14px;font-size:13px;color:#1a6fd0;font-weight:700;transform:scaleX(1.016);">M</span><div class="b" style="left:310px;top:8px;width:168px;height:25px;overflow:hidden;-webkit-mask-image:linear-gradient(90deg,#000 85%,transparent);mask-image:linear-gradient(90deg,#000 85%,transparent);"><span class="t" style="left:0.4px;top:6px;font-size:14.5px;color:#fff;transform:scaleX(0.793);">Preview - Qualtrics Survey | Qua</span></div><svg class="b" style="left:489px;top:15.5px;" width="10" height="10" viewBox="0 0 10 10"><path d="M1 1 L9 9 M9 1 L1 9" stroke="#fff" stroke-width="1.5"/></svg><svg class="b" style="left:524px;top:15px;" width="11" height="11" viewBox="0 0 11 11"><path d="M5.5 0 V11 M0 5.5 H11" stroke="#8a8a8a" stroke-width="1.5"/></svg><div class="b" style="left:1800px;top:19.5px;width:11px;height:1px;background:#9a9a9a;"></div><svg class="b" style="left:1846px;top:14px;" width="11" height="11" viewBox="0 0 11 11"><rect x="0.5" y="2.5" width="8" height="8" rx="1" fill="none" stroke="#9a9a9a" stroke-width="1"/><path d="M2.5 2.5 V1.5 Q2.5 0.5 3.5 0.5 H9.5 Q10.5 0.5 10.5 1.5 V7.5 Q10.5 8.5 9.5 8.5 H8.5" fill="none" stroke="#9a9a9a" stroke-width="1"/></svg><svg class="b" style="left:1891.5px;top:14.5px;" width="11" height="11" viewBox="0 0 11 11"><path d="M0.5 0.5 L10.5 10.5 M10.5 0.5 L0.5 10.5" stroke="#9a9a9a" stroke-width="1"/></svg><div class="b" style="left:0px;top:40px;width:1920px;height:47px;background:#2d2d2d;border-radius:9px 9px 0 0;"></div><div class="b" style="left:0px;top:86px;width:1920px;height:1px;background:#1c1c1c;"></div><svg class="b" style="left:15px;top:55px;" width="16" height="16" viewBox="0 0 16 16"><path d="M14.5 8 H2.5 M7.5 2.5 L2 8 L7.5 13.5" fill="none" stroke="#6e6e6e" stroke-width="1.7"/></svg><svg class="b" style="left:50px;top:55px;" width="16" height="16" viewBox="0 0 16 16"><path d="M1.5 8 H13.5 M8.5 2.5 L14 8 L8.5 13.5" fill="none" stroke="#6e6e6e" stroke-width="1.7"/></svg><svg class="b" style="left:85.5px;top:54.5px;" width="17" height="17" viewBox="0 0 17 17"><path d="M14 5 A6.3 6.3 0 1 0 14.8 10.5" fill="none" stroke="#e8e8e8" stroke-width="1.8"/><path d="M15.2 1.5 V6.5 H10.2 Z" fill="#e8e8e8"/></svg><div class="b" style="left:120.5px;top:46px;width:1625.2px;height:34px;background:#3d3d3d;border-radius:17px;"></div><div class="b" style="left:126px;top:51.8px;width:23px;height:23px;background:#4d4d4d;border-radius:50%;"></div><svg class="b" style="left:129px;top:55px;" width="16" height="16" viewBox="0 0 16 16"><path d="M1.5 4.5 H8 M12.5 11.5 H14.5 M1.5 11.5 H5" stroke="#eee" stroke-width="1.7"/><circle cx="11" cy="4.5" r="2.2" fill="none" stroke="#eee" stroke-width="1.6"/><circle cx="8.2" cy="11.5" r="2.2" fill="none" stroke="#eee" stroke-width="1.6"/></svg><span class="t" style="left:157.6px;top:54px;font-size:16.5px;color:#fff;transform:scaleX(0.821);">pacificresearch.qualtrics.com</span><span class="t" style="left:332.8px;top:54px;font-size:16.5px;color:#b0b0b0;transform:scaleX(0.834);">/jfe/preview/previewId/8e7915d0-3184-491f-be92-bc2a2c54b6b1/SV_57SePKbS35aO6Wi?Q_CHL=preview&amp;Q_SurveyVersionID=current</span><svg class="b" style="left:1713px;top:54.5px;" width="18" height="17" viewBox="0 0 18 17"><path d="M9 1.6 L11.2 6.3 L16.4 6.9 L12.5 10.3 L13.6 15.4 L9 12.8 L4.4 15.4 L5.5 10.3 L1.6 6.9 L6.8 6.3 Z" fill="none" stroke="#c8c8c8" stroke-width="1.5" stroke-linejoin="round"/></svg><div class="b" style="left:1764px;top:55px;width:16.3px;height:15.8px;background:#11866f;border-radius:50% 50% 50% 12%;"></div><svg class="b" style="left:1764px;top:55px;" width="16.3" height="15.8" viewBox="0 0 16.3 15.8"><path d="M12.6 5.2 A5 5 0 1 0 13.4 8.2 H8.6" fill="none" stroke="#fff" stroke-width="1.7"/></svg><svg class="b" style="left:1800px;top:53.5px;" width="18" height="18" viewBox="0 0 18 18"><path d="M1.5 4.5 H5.8 Q5.6 1 7.8 1 Q10 1 9.8 4.5 H14 V8 Q17 7.6 17 9.6 Q17 11.6 14 11.2 V16 H1.5 V12 Q4.6 12.2 4.6 10.2 Q4.6 8.2 1.5 8.5 Z" fill="none" stroke="#ececec" stroke-width="1.6" stroke-linejoin="round"/></svg><div class="b" style="left:1833.8px;top:55px;width:2.2px;height:15.8px;background:#050505;border-radius:1px;"></div><div class="b" style="left:1852px;top:52.8px;width:20.2px;height:20.2px;background:#ece6e0;border-radius:50%;overflow:hidden;"><div class="b" style="left:4.5px;top:2px;width:12px;height:20px;background:#5b3a2b;border-radius:6px 6px 0 0;"></div><div class="b" style="left:7px;top:5px;width:7px;height:8.5px;background:#e6b798;border-radius:50%;"></div><div class="b" style="left:4.5px;top:14.5px;width:12px;height:8px;background:#f1f1f1;border-radius:5px 5px 0 0;"></div></div><div class="b" style="left:1896.2px;top:56px;width:3.6px;height:3.6px;background:#e8e8e8;border-radius:50%;"></div><div class="b" style="left:1896.2px;top:61.3px;width:3.6px;height:3.6px;background:#e8e8e8;border-radius:50%;"></div><div class="b" style="left:1896.2px;top:66.6px;width:3.6px;height:3.6px;background:#e8e8e8;border-radius:50%;"></div><div class="b" style="left:0px;top:87px;width:1920px;height:85px;background:#fff;"></div><div class="b" style="left:0px;top:171.5px;width:1920px;height:1.2px;background:#e9e9e9;"></div><div class="b" style="left:23.9px;top:111px;width:131.9px;height:35.9px;background:#0b6ed0;border-radius:3px;"></div><span class="t" style="left:45.4px;top:121px;font-size:15px;color:#fff;transform:scaleX(0.908);-webkit-text-stroke:0.3px #fff;">Restart Survey</span><div class="b" style="left:171.8px;top:111px;width:143.2px;height:35.9px;background:#fff;border:1.3px solid #0b6ed0;border-radius:3px;box-sizing:border-box;"></div><span class="t" style="left:193.7px;top:121px;font-size:15px;color:#0b6ed0;transform:scaleX(0.917);">Place Bookmark</span><div class="b" style="left:339px;top:111px;width:1px;height:36px;background:#d9d9d9;"></div><span class="t" style="left:378px;top:121px;font-size:15px;color:#404040;transform:scaleX(0.897);">Tools</span><svg class="b" style="left:469.3px;top:126px;" width="8" height="5" viewBox="0 0 8 5"><path d="M1 1 L4 4 L7 1" fill="none" stroke="#444" stroke-width="1.2"/></svg><div class="b" style="left:508px;top:111px;width:58px;height:35.9px;background:#e8e9e9;"></div><svg class="b" style="left:530px;top:119px;" width="14" height="20" viewBox="0 0 14 20"><rect x="1.2" y="1.2" width="11.6" height="17.6" rx="2.2" fill="none" stroke="#222" stroke-width="1.8"/><path d="M4.5 15 H9.5" stroke="#222" stroke-width="1.6"/></svg><div class="b" style="left:1734px;top:111px;width:162px;height:35.9px;background:#0b6ed0;border-radius:3px;"></div><svg class="b" style="left:1755px;top:119px;" width="22" height="20" viewBox="0 0 22 20"><circle cx="5" cy="10" r="3" fill="none" stroke="#fff" stroke-width="1.7"/><circle cx="16.5" cy="4.2" r="3" fill="none" stroke="#fff" stroke-width="1.7"/><circle cx="16.5" cy="15.8" r="3" fill="none" stroke="#fff" stroke-width="1.7"/><path d="M7.7 8.7 L13.8 5.5 M7.7 11.3 L13.8 14.5" stroke="#fff" stroke-width="1.7"/></svg><span class="t" style="left:1786.7px;top:121px;font-size:15px;color:#fff;transform:scaleX(0.909);-webkit-text-stroke:0.3px #fff;">Share Preview</span><div class="b" style="left:24px;top:195px;width:1468px;height:845px;background:#d9d9d9;"></div><div class="b" style="left:372.7px;top:365px;width:770.2px;height:675px;background:#fff;"></div><div class="b" style="left:1492px;top:195px;width:17px;height:845px;background:#f1f1f1;"></div><svg class="b" style="left:1496.5px;top:201px;" width="8" height="6" viewBox="0 0 8 6"><path d="M4 1 L7.5 5 H0.5 Z" fill="#505050"/></svg><div class="b" style="left:1494px;top:211px;width:13px;height:504px;background:#c1c1c1;"></div><svg class="b" style="left:1496.5px;top:1027.5px;" width="8" height="6" viewBox="0 0 8 6"><path d="M4 5 L7.5 1 H0.5 Z" fill="#505050"/></svg><svg class="b" style="left:741.7px;top:278px;" width="32" height="34" viewBox="0 0 32 34"><path d="M13 2 L20 0 L19 9 L26 12 L14 34 L12 22 Z" fill="#2a72c4"/><path d="M6 10 L13 4 L12 20 Z" fill="#9cc8ee"/><path d="M15 16 L22 11 L17 22 Z" fill="#3aa64a"/></svg><span class="t" style="left:728.7px;top:314px;font-size:16.0px;color:#4a4a4a;font-weight:700;transform:scaleX(0.923);">PACIFIC</span><span class="t" style="left:728.7px;top:326px;font-size:13.0px;color:#4a4a4a;font-weight:700;transform:scaleX(0.811);">Research &amp;</span><span class="t" style="left:728.7px;top:338px;font-size:13.0px;color:#4a4a4a;font-weight:700;transform:scaleX(0.882);">Evaluation</span><span class="t" style="left:388.2px;top:385px;font-size:24px;color:#8c8c8c;transform:scaleX(1.115);">We want to better understand how visitors are interpreting the</span><span class="t" style="left:388.2px;top:421px;font-size:24px;color:#8c8c8c;transform:scaleX(1.156);">EIC, in their own words. Please complete the following</span><span class="t" style="left:388.2px;top:457px;font-size:24px;color:#8c8c8c;transform:scaleX(1.103);">sentences. There are no right or wrong answers, we just want</span><span class="t" style="left:388.2px;top:493px;font-size:24px;color:#8c8c8c;transform:scaleX(1.118);">to know what kind of messages or ideas are resonating with</span><span class="t" style="left:388.2px;top:529px;font-size:24px;color:#8c8c8c;transform:scaleX(0.966);">you.</span><span class="t" style="left:388.2px;top:656px;font-size:24px;color:#8c8c8c;transform:scaleX(1.053);">“I would tell a friend the EIC is about…”</span><div class="b" style="left:388.2px;top:713.6px;width:739.1px;height:49.7px;background:#f0f0f0;border:2px solid #707070;box-sizing:border-box;"></div><span class="t" style="left:388.2px;top:839px;font-size:24px;color:#8c8c8c;transform:scaleX(1.043);">“Before coming to EIC today, I never realized…”</span><div class="b" style="left:388.2px;top:895.6px;width:739.1px;height:49.7px;background:#f0f0f0;border:2px solid #707070;box-sizing:border-box;"></div><span class="t" style="left:388.2px;top:1019px;font-size:24px;color:#8c8c8c;transform:scaleX(1.088);">“A connection I made between the EIC and where I live</span><div class="b" style="left:1533px;top:281.7px;width:5px;height:27.4px;background:#252b33;border-radius:2px;"></div><div class="b" style="left:1533px;top:337.7px;width:5px;height:47px;background:#252b33;border-radius:2px;"></div><div class="b" style="left:1533px;top:397px;width:5px;height:47px;background:#252b33;border-radius:2px;"></div><div class="b" style="left:1888.5px;top:337.8px;width:5.5px;height:79.5px;background:#252b33;border-radius:2px;"></div><div class="b" style="left:1536px;top:195px;width:355.4px;height:780.8px;background:#252b33;border-radius:30px 30px 27px 27px;"></div><div class="b" style="left:1543.7px;top:226.6px;width:339.6px;height:735.2px;background:#fff;border-radius:15px;"></div><div class="b" style="left:1682.7px;top:211.1px;width:40.4px;height:6.2px;background:#15181d;border-radius:3.1px;"></div><div class="b" style="left:1734px;top:209px;width:10.4px;height:10.4px;background:#252b33;border-radius:50%;border:1.6px solid #15181d;box-sizing:border-box;"></div><span class="t" style="left:1559.1px;top:238px;font-size:13px;color:#111;font-weight:700;transform:scaleX(1.020);">12:29</span><svg class="b" style="left:1826px;top:239.2px;" width="13" height="10" viewBox="0 0 13 10"><rect x="0" y="7" width="2" height="3" fill="#111"/><rect x="3" y="5" width="2" height="5" fill="#111"/><rect x="6" y="2.5" width="2" height="7.5" fill="#111"/><rect x="9.5" y="0" width="1.6" height="10" fill="#bbb"/></svg><div class="b" style="left:1850px;top:240.9px;width:16.5px;height:7px;background:#111;border-radius:2px;"></div><div class="b" style="left:1866.5px;top:243px;width:1.3px;height:2.8px;background:#111;"></div><div class="b" style="left:1543.5px;top:260px;width:339.5px;height:90px;background:#d9d9d9;"></div><svg class="b" style="left:1697.8px;top:271.9px;" width="30.4" height="32.3" viewBox="0 0 32 34"><path d="M13 2 L20 0 L19 9 L26 12 L14 34 L12 22 Z" fill="#2a72c4"/><path d="M6 10 L13 4 L12 20 Z" fill="#9cc8ee"/><path d="M15 16 L22 11 L17 22 Z" fill="#3aa64a"/></svg><span class="t" style="left:1685.5px;top:305px;font-size:15.2px;color:#4a4a4a;font-weight:700;transform:scaleX(0.923);">PACIFIC</span><span class="t" style="left:1685.5px;top:318px;font-size:12.35px;color:#4a4a4a;font-weight:700;transform:scaleX(0.811);">Research &amp;</span><span class="t" style="left:1685.5px;top:330px;font-size:12.35px;color:#4a4a4a;font-weight:700;transform:scaleX(0.882);">Evaluation</span><span class="t" style="left:1564px;top:374px;font-size:19px;color:#8c8c8c;transform:scaleX(1.145);">We want to better understand</span><span class="t" style="left:1564px;top:403px;font-size:19px;color:#8c8c8c;transform:scaleX(1.121);">how visitors are interpreting the</span><span class="t" style="left:1564px;top:432px;font-size:19px;color:#8c8c8c;transform:scaleX(1.098);">EIC, in their own words. Please</span><span class="t" style="left:1564px;top:461px;font-size:19px;color:#8c8c8c;transform:scaleX(1.133);">complete the following</span><span class="t" style="left:1564px;top:490px;font-size:19px;color:#8c8c8c;transform:scaleX(1.111);">sentences. There are no right or</span><span class="t" style="left:1564px;top:519px;font-size:19px;color:#8c8c8c;transform:scaleX(1.106);">wrong answers, we just want to</span><span class="t" style="left:1564px;top:548px;font-size:19px;color:#8c8c8c;transform:scaleX(1.124);">know what kind of messages or</span><span class="t" style="left:1564px;top:577px;font-size:19px;color:#8c8c8c;transform:scaleX(1.133);">ideas are resonating with you.</span><span class="t" style="left:1564px;top:703px;font-size:19px;color:#8c8c8c;transform:scaleX(1.101);">“I would tell a friend the EIC is</span><span class="t" style="left:1564px;top:732px;font-size:19px;color:#8c8c8c;transform:scaleX(0.961);">about…”</span><div class="b" style="left:1564px;top:781.5px;width:298.7px;height:45.5px;background:#f0f0f0;border:2px solid #707070;box-sizing:border-box;"></div><span class="t" style="left:1564px;top:910px;font-size:19px;color:#8c8c8c;transform:scaleX(1.114);">“Before coming to EIC today, I</span><span class="t" style="left:1564px;top:937px;font-size:19px;color:#8c8c8c;transform:scaleX(1.030);">never realized…”</span></div><div class="win" style="left:1920px;top:1040px;width:1920px;height:40px;background:#42403e;"><svg class="b" style="left:15.1px;top:12px;" width="17" height="17" viewBox="0 0 17 17"><path d="M0 2.4 L7.5 1.4 V7.5 H0 Z M9.5 1.0 L17 0 V7.5 H9.5 Z M0 9.5 H7.5 V15.6 L0 14.6 Z M9.5 9.5 H17 V17 L9.5 16.0 Z" fill="#fff"/></svg><svg class="b" style="left:60px;top:8px;" width="24" height="24" viewBox="0 0 24 24"><circle cx="14" cy="10" r="7.3" fill="none" stroke="#fff" stroke-width="2.2"/><path d="M9 15.5 L2.5 22" stroke="#fff" stroke-width="2.6"/></svg><svg class="b" style="left:109.3px;top:10.3px;" width="20.4" height="20.4" viewBox="0 0 24 24"><rect x="2.6" y="7.2" width="11.8" height="9.6" fill="none" stroke="#fff" stroke-width="1.4"/><path d="M2 3.7 H15 M2 20.3 H15 M20 2.5 V7 M20 9.5 V14.5 M20 17 V21.5" stroke="#fff" stroke-width="1.5" fill="none"/></svg><svg class="b" style="left:158px;top:7.2px;" width="25.6" height="25.6" viewBox="0 0 32 32"><path d="M2 5 H12 L14.5 8 H30 V26 H2 Z" fill="#f5b93d"/><path d="M2 10 H30 V26 H2 Z" fill="#fcd463"/><path d="M8 17 H24 V26 H8 Z" fill="#3b8fde"/><path d="M11 21 H21 V26 H11 Z" fill="#fcd463"/><rect x="2" y="25" width="28" height="1.5" fill="#d99a22"/></svg><svg class="b" style="left:206.8px;top:8.3px;" width="24.3" height="24.3" viewBox="0 0 32 32"><circle cx="16" cy="16" r="14.5" fill="#1ed760"/><path d="M8 11.5 Q17 9 25 13.5" fill="none" stroke="#000" stroke-width="2.6" stroke-linecap="round"/><path d="M9 16.5 Q17 14.5 23.5 18" fill="none" stroke="#000" stroke-width="2.2" stroke-linecap="round"/><path d="M10 21 Q16.5 19.5 22 22.3" fill="none" stroke="#000" stroke-width="1.8" stroke-linecap="round"/></svg><svg class="b" style="left:254.9px;top:7.4px;" width="27.2" height="27.2" viewBox="0 0 34 34"><path d="M10 6 L22 1 L33 7 V22 L22 28 L10 22 Z" fill="#1a78d2"/><path d="M10 6 L22 1 L33 7 L22 12 Z" fill="#4fb2f2"/><path d="M10 22 L22 13 L33 22 L22 28 Z" fill="#0f5aa8"/><rect x="0.5" y="8" width="17" height="17" rx="2" fill="#0f64b8"/><text x="9" y="21.5" font-size="13" font-weight="700" font-family="Liberation Sans,sans-serif" fill="#fff" text-anchor="middle">O</text><rect x="13" y="24" width="20" height="9" rx="1.5" fill="#16c8f0"/><text x="23" y="31.3" font-size="7.5" font-weight="700" font-family="Liberation Sans,sans-serif" fill="#0a2a5a" text-anchor="middle">NEW</text></svg><svg class="b" style="left:303.9px;top:7.4px;" width="27.2" height="27.2" viewBox="0 0 34 34"><circle cx="26" cy="7" r="3.2" fill="#5b63d3"/><circle cx="18.5" cy="5.5" r="4.5" fill="#7b83eb"/><path d="M14 11 H31 V21 Q31 26 25 26 H14 Z" fill="#5059c9"/><rect x="1" y="8" width="17" height="17" rx="2" fill="#4b53bc"/><text x="9.5" y="21.5" font-size="13" font-weight="700" font-family="Liberation Sans,sans-serif" fill="#fff" text-anchor="middle">T</text><rect x="8" y="24" width="14" height="8" rx="1.5" fill="#16c8f0"/><circle cx="23.5" cy="24" r="8.5" fill="#e2343f"/></svg><svg class="b" style="left:354.3px;top:8.3px;" width="24.3" height="24.3" viewBox="0 0 32 32"><circle cx="16" cy="16" r="15" fill="#f4f2ee"/><g stroke-width="3.4" stroke-linecap="round"><path d="M13 8 V14.5" stroke="#36c5f0"/><path d="M8 13 H9" stroke="#36c5f0"/><path d="M17.5 13 H24" stroke="#2eb67d"/><path d="M19 8 V9" stroke="#2eb67d"/><path d="M19 17.5 V24" stroke="#ecb22e"/><path d="M23 19 H24" stroke="#ecb22e"/><path d="M8 19 H14.5" stroke="#e01e5a"/><path d="M13 23 V24" stroke="#e01e5a"/></g></svg><svg class="b" style="left:402.4px;top:7.9px;" width="27.2" height="27.2" viewBox="0 0 34 34"><circle cx="16" cy="16" r="14.5" fill="#e33b2e"/><path d="M16 16 L3.5 8.8 A14.5 14.5 0 0 0 10.5 29.4 Z" fill="#2da94f"/><path d="M16 16 L10.5 29.4 A14.5 14.5 0 0 0 29.5 10.5 L16 10.5 Z" fill="#fdd231"/><circle cx="16" cy="16" r="6.6" fill="#fff"/><circle cx="16" cy="16" r="5.2" fill="#4285f4"/><circle cx="24.5" cy="25" r="8.8" fill="#e8e0da"/><path d="M17.5 31 Q18 19 24.5 18.5 Q31 19 31.5 31 Z" fill="#5a3a2a"/><ellipse cx="24.5" cy="24.5" rx="3.2" ry="4" fill="#e8b99a"/><path d="M19 33.5 Q24.5 27 30 33.5 Z" fill="#f3f3f3"/></svg><div class="b" style="left:441px;top:0px;width:44.5px;height:40px;background:#676563;"></div><div class="b" style="left:487px;top:0px;width:1px;height:40px;background:#5a5856;"></div><svg class="b" style="left:451.7px;top:7.7px;" width="25.6" height="25.6" viewBox="0 0 32 32"><rect x="8" y="2" width="23" height="28" rx="2" fill="#2b7cd3"/><rect x="8" y="2" width="23" height="7.5" fill="#41a5ee"/><rect x="8" y="16.5" width="23" height="7" fill="#185abd"/><rect x="8" y="23" width="23" height="7" fill="#103f91"/><rect x="1" y="8" width="17" height="17" rx="1.5" fill="#185abd"/><text x="9.5" y="21.3" font-size="12.5" font-weight="700" font-family="Liberation Sans,sans-serif" fill="#fff" text-anchor="middle">W</text></svg><svg class="b" style="left:500.7px;top:7.7px;" width="25.6" height="25.6" viewBox="0 0 32 32"><rect x="8" y="2" width="23" height="28" rx="2" fill="#21a366"/><rect x="8" y="2" width="11.5" height="7.5" fill="#21a366"/><rect x="19.5" y="2" width="11.5" height="7.5" fill="#33c481"/><rect x="8" y="9.5" width="11.5" height="7" fill="#107c41"/><rect x="19.5" y="9.5" width="11.5" height="7" fill="#21a366"/><rect x="8" y="16.5" width="23" height="7" fill="#107c41"/><rect x="8" y="23" width="23" height="7" fill="#185c37"/><rect x="1" y="8" width="17" height="17" rx="1.5" fill="#107c41"/><text x="9.5" y="21.3" font-size="12.5" font-weight="700" font-family="Liberation Sans,sans-serif" fill="#fff" text-anchor="middle">X</text></svg><div class="b" style="left:151px;top:38px;width:40px;height:2px;background:#7fd9d2;"></div><div class="b" style="left:249px;top:38px;width:40px;height:2px;background:#7fd9d2;"></div><div class="b" style="left:298px;top:38px;width:40px;height:2px;background:#7fd9d2;"></div><div class="b" style="left:396px;top:38px;width:40px;height:2px;background:#7fd9d2;"></div><div class="b" style="left:441px;top:38px;width:47.8px;height:2px;background:#7fd9d2;"></div><div class="b" style="left:283px;top:38px;width:6px;height:2px;background:#5f8f8b;"></div><span class="t" style="left:1866.5px;top:5px;font-size:12.5px;color:#fff;transform:scaleX(0.906);">4:12 PM</span><span class="t" style="left:1861.5px;top:23px;font-size:12.5px;color:#fff;transform:scaleX(0.953);">4/16/2024</span></div></div></div><div class="b" style="left:1358.2px;top:1087.2px;width:75.8px;height:28.5px;background:#d6d6d6;border:1px solid #adadad;box-sizing:border-box;"></div><svg class="b" style="left:1363.5px;top:1091.5px;" width="18" height="20" viewBox="0 0 18 20"><path d="M1 3 H12 V18.5 H1 Z" fill="none" stroke="#a07820" stroke-width="1.5"/><path d="M4 3 V1 H9 V3" fill="none" stroke="#555" stroke-width="1.2"/><rect x="7.5" y="8" width="9.5" height="11" fill="#e8e8e8" stroke="#555" stroke-width="1.2"/></svg><span class="t" style="left:1385.7px;top:1094px;font-size:15px;color:#2a2a2a;transform:scaleX(0.957);">(Ctrl)</span><svg class="b" style="left:1420.5px;top:1099px;" width="8" height="6" viewBox="0 0 8 6"><path d="M0.5 0.8 H7.5 L4 5 Z" fill="#222"/></svg><div class="b" style="left:0px;top:1122.6px;width:1920px;height:27.4px;background:#525252;border-top:1px solid #3c3c3c;box-sizing:border-box;"></div><span class="t" style="left:15px;top:1130px;font-size:14px;color:#f0f0f0;transform:scaleX(0.936);">Page 4 of 4</span><span class="t" style="left:105.9px;top:1130px;font-size:14px;color:#f0f0f0;transform:scaleX(0.952);">22 words</span><svg class="b" style="left:183.5px;top:1128.5px;" width="19" height="19" viewBox="0 0 19 19"><path d="M1.5 2 H7 Q9.3 2 9.3 4.3 V15.5 Q9.3 13.5 7 13.5 H1.5 Z M17.5 8 V2 H12 Q9.5 2 9.5 4.3" fill="none" stroke="#eee" stroke-width="1.3"/><path d="M10.5 13.5 L13 16.5 L18 10.5" fill="none" stroke="#eee" stroke-width="1.3"/></svg><span class="t" style="left:227.4px;top:1130px;font-size:14px;color:#f0f0f0;transform:scaleX(0.913);">Text Predictions: On</span><svg class="b" style="left:366px;top:1127.5px;" width="20" height="20" viewBox="0 0 20 20"><circle cx="9" cy="3" r="2" fill="none" stroke="#eee" stroke-width="1.2"/><path d="M1.5 6.5 Q9 9.5 16.5 6.5 M9 8.5 V12 M9 12 L5 18.5 M9 12 L11 15" fill="none" stroke="#eee" stroke-width="1.3"/><path d="M12 12 L18.5 18.5 M18.5 12 L12 18.5" stroke="#eee" stroke-width="1.3"/></svg><span class="t" style="left:389px;top:1130px;font-size:14px;color:#fff;font-weight:700;transform:scaleX(0.910);">Accessibility: Investigate</span><svg class="b" style="left:1345px;top:1128px;" width="20" height="19" viewBox="0 0 20 19"><path d="M9 13 H1.5 V1.5 H17.5 V6" fill="none" stroke="#eee" stroke-width="1.3"/><circle cx="13.5" cy="12.5" r="3" fill="none" stroke="#eee" stroke-width="1.6"/><path d="M13.5 7.5 V9 M13.5 16 V17.5 M8.5 12.5 H10 M17 12.5 H18.5 M10 9 L11 10 M16 15 L17 16 M17 9 L16 10 M11 15 L10 16" stroke="#eee" stroke-width="1.4"/></svg><span class="t" style="left:1366.3px;top:1130px;font-size:14px;color:#f0f0f0;transform:scaleX(0.914);">Display Settings</span><svg class="b" style="left:1478.5px;top:1127.5px;" width="19" height="20" viewBox="0 0 19 20"><path d="M1 5 V1.5 H4.5 M14.5 1.5 H18 V5 M18 15 V18.5 H14.5 M4.5 18.5 H1 V15" fill="none" stroke="#eee" stroke-width="1.3"/><path d="M5.5 4.5 H10.5 L13.5 7.5 V15.5 H5.5 Z M10.5 4.5 V7.5 H13.5" fill="none" stroke="#eee" stroke-width="1.2"/></svg><span class="t" style="left:1500px;top:1130px;font-size:14px;color:#f0f0f0;transform:scaleX(0.863);">Focus</span><svg class="b" style="left:1563px;top:1128.5px;" width="19" height="17" viewBox="0 0 19 17"><path d="M9.5 2.5 Q5 0.5 1 2 V14.5 Q5 13 9.5 15 Q14 13 18 14.5 V2 Q14 0.5 9.5 2.5 V15" fill="none" stroke="#eee" stroke-width="1.3"/><path d="M3.5 5 H7 M3.5 7.5 H7 M3.5 10 H7 M12 5 H15.5 M12 7.5 H15.5 M12 10 H15.5" stroke="#eee" stroke-width="1"/></svg><div class="b" style="left:1598px;top:1123px;width:49.7px;height:27px;background:#646464;"></div><svg class="b" style="left:1615px;top:1128px;" width="15" height="18" viewBox="0 0 15 18"><rect x="0.7" y="0.7" width="13.6" height="16.6" fill="none" stroke="#eee" stroke-width="1.3"/><path d="M3 4 H12 M3 6.5 H12 M3 9 H12 M3 11.5 H12 M3 14 H12" stroke="#eee" stroke-width="1.1"/></svg><svg class="b" style="left:1663px;top:1128px;" width="20" height="19" viewBox="0 0 20 19"><path d="M9 16 H1 V1 H15 V7" fill="none" stroke="#eee" stroke-width="1.3"/><path d="M3 4 H13 M3 6.5 H13 M3 9 H8" stroke="#eee" stroke-width="1.1"/><circle cx="13.5" cy="13" r="5" fill="none" stroke="#eee" stroke-width="1.2"/><path d="M8.5 13 H18.5 M13.5 8 Q10.5 13 13.5 18 M13.5 8 Q16.5 13 13.5 18" fill="none" stroke="#eee" stroke-width="0.9"/></svg><div class="b" style="left:1705.5px;top:1136.6px;width:9.5px;height:1.2px;background:#eee;"></div><div class="b" style="left:1721px;top:1136.8px;width:125px;height:1px;background:#cfcfcf;"></div><div class="b" style="left:1781.5px;top:1130px;width:4.5px;height:14.5px;background:#d8d8d8;"></div><div class="b" style="left:1852px;top:1136.6px;width:9.5px;height:1.2px;background:#eee;"></div><div class="b" style="left:1856.2px;top:1132.4px;width:1.2px;height:9.5px;background:#eee;"></div><span class="t" style="left:1878.7px;top:1130px;font-size:14px;color:#f0f0f0;transform:scaleX(0.855);">100%</span></div>
<div class="win" style="left:0;top:1150px;width:1920px;height:50px;background:#42403e;"><svg class="b" style="left:19.3px;top:14px;" width="21" height="21" viewBox="0 0 21 21"><path d="M0 2.9 L9.2 1.7 V9.2 H0 Z M11.8 1.3 L21 0 V9.2 H11.8 Z M0 11.8 H9.2 V19.3 L0 18.1 Z M11.8 11.8 H21 V21 L11.8 19.7 Z" fill="#fff"/></svg><div class="b" style="left:60px;top:0.4px;width:359.8px;height:49.6px;background:#f2f2f2;"></div><svg class="b" style="left:73px;top:11px;" width="26" height="26" viewBox="0 0 26 26"><circle cx="15" cy="10" r="7.2" fill="none" stroke="#222" stroke-width="1.6"/><path d="M9.8 15.2 L2.5 22.8" stroke="#222" stroke-width="1.8"/></svg><span class="t" style="left:110.3px;top:17px;font-size:18.5px;color:#1f1f1f;">Type here to search</span><div class="b" style="left:325px;top:4.7px;width:90px;height:40px;background:#e3e3e3;border-radius:8px;"></div><svg class="b" style="left:350px;top:8px;" width="40" height="34" viewBox="0 0 40 34"><path d="M14 5 Q14 1.5 17 1.5 H23 Q26 1.5 26 5 V7 H22.5 V5 H17.5 V7 H14 Z" fill="#5a3b1a"/><rect x="1" y="7" width="38" height="25" rx="3" fill="#c8731a"/><rect x="1" y="7" width="38" height="10" rx="3" fill="#e08f2a"/><path d="M1 15 H39 V18 H1 Z" fill="#a85a12"/><rect x="16" y="14" width="8" height="7" rx="1" fill="#f6c83a"/><rect x="18" y="16" width="4" height="2.5" fill="#a87410"/></svg><svg class="b" style="left:437.4px;top:11.9px;" width="25.2" height="25.2" viewBox="0 0 24 24"><rect x="2.6" y="7.2" width="11.8" height="9.6" fill="none" stroke="#fff" stroke-width="1.4"/><path d="M2 3.7 H15 M2 20.3 H15 M20 2.5 V7 M20 9.5 V14.5 M20 17 V21.5" stroke="#fff" stroke-width="1.5" fill="none"/></svg><svg class="b" style="left:497.6px;top:8px;" width="32" height="32" viewBox="0 0 32 32"><path d="M2 5 H12 L14.5 8 H30 V26 H2 Z" fill="#f5b93d"/><path d="M2 10 H30 V26 H2 Z" fill="#fcd463"/><path d="M8 17 H24 V26 H8 Z" fill="#3b8fde"/><path d="M11 21 H21 V26 H11 Z" fill="#fcd463"/><rect x="2" y="25" width="28" height="1.5" fill="#d99a22"/></svg><svg class="b" style="left:560.6px;top:9.3px;" width="30.4" height="30.4" viewBox="0 0 32 32"><circle cx="16" cy="16" r="14.5" fill="#1ed760"/><path d="M8 11.5 Q17 9 25 13.5" fill="none" stroke="#000" stroke-width="2.6" stroke-linecap="round"/><path d="M9 16.5 Q17 14.5 23.5 18" fill="none" stroke="#000" stroke-width="2.2" stroke-linecap="round"/><path d="M10 21 Q16.5 19.5 22 22.3" fill="none" stroke="#000" stroke-width="1.8" stroke-linecap="round"/></svg><svg class="b" style="left:622.4px;top:10.9px;" width="31.3" height="31.3" viewBox="0 0 34 34"><path d="M10 6 L22 1 L33 7 V22 L22 28 L10 22 Z" fill="#1a78d2"/><path d="M10 6 L22 1 L33 7 L22 12 Z" fill="#4fb2f2"/><path d="M10 22 L22 13 L33 22 L22 28 Z" fill="#0f5aa8"/><rect x="0.5" y="8" width="17" height="17" rx="2" fill="#0f64b8"/><text x="9" y="21.5" font-size="13" font-weight="700" font-family="Liberation Sans,sans-serif" fill="#fff" text-anchor="middle">O</text><rect x="13" y="24" width="20" height="9" rx="1.5" fill="#16c8f0"/><text x="23" y="31.3" font-size="7.5" font-weight="700" font-family="Liberation Sans,sans-serif" fill="#0a2a5a" text-anchor="middle">NEW</text></svg><svg class="b" style="left:685.9px;top:11.4px;" width="31.3" height="31.3" viewBox="0 0 34 34"><circle cx="26" cy="7" r="3.2" fill="#5b63d3"/><circle cx="18.5" cy="5.5" r="4.5" fill="#7b83eb"/><path d="M14 11 H31 V21 Q31 26 25 26 H14 Z" fill="#5059c9"/><rect x="1" y="8" width="17" height="17" rx="2" fill="#4b53bc"/><text x="9.5" y="21.5" font-size="13" font-weight="700" font-family="Liberation Sans,sans-serif" fill="#fff" text-anchor="middle">T</text><rect x="8" y="24" width="14" height="8" rx="1.5" fill="#16c8f0"/><circle cx="23.5" cy="24" r="8.5" fill="#e2343f"/></svg><svg class="b" style="left:747px;top:9.3px;" width="30.4" height="30.4" viewBox="0 0 32 32"><circle cx="16" cy="16" r="15" fill="#f4f2ee"/><g stroke-width="3.4" stroke-linecap="round"><path d="M13 8 V14.5" stroke="#36c5f0"/><path d="M8 13 H9" stroke="#36c5f0"/><path d="M17.5 13 H24" stroke="#2eb67d"/><path d="M19 8 V9" stroke="#2eb67d"/><path d="M19 17.5 V24" stroke="#ecb22e"/><path d="M23 19 H24" stroke="#ecb22e"/><path d="M8 19 H14.5" stroke="#e01e5a"/><path d="M13 23 V24" stroke="#e01e5a"/></g></svg><svg class="b" style="left:808.4px;top:8.5px;" width="34" height="34" viewBox="0 0 34 34"><circle cx="16" cy="16" r="14.5" fill="#e33b2e"/><path d="M16 16 L3.5 8.8 A14.5 14.5 0 0 0 10.5 29.4 Z" fill="#2da94f"/><path d="M16 16 L10.5 29.4 A14.5 14.5 0 0 0 29.5 10.5 L16 10.5 Z" fill="#fdd231"/><circle cx="16" cy="16" r="6.6" fill="#fff"/><circle cx="16" cy="16" r="5.2" fill="#4285f4"/><circle cx="24.5" cy="25" r="8.8" fill="#e8e0da"/><path d="M17.5 31 Q18 19 24.5 18.5 Q31 19 31.5 31 Z" fill="#5a3a2a"/><ellipse cx="24.5" cy="24.5" rx="3.2" ry="4" fill="#e8b99a"/><path d="M19 33.5 Q24.5 27 30 33.5 Z" fill="#f3f3f3"/></svg><div class="b" style="left:856.5px;top:0px;width:55.5px;height:50px;background:#676563;"></div><div class="b" style="left:913px;top:0px;width:1px;height:50px;background:#5e5c5a;"></div><svg class="b" style="left:870px;top:8.5px;" width="32" height="32" viewBox="0 0 32 32"><rect x="8" y="2" width="23" height="28" rx="2" fill="#2b7cd3"/><rect x="8" y="2" width="23" height="7.5" fill="#41a5ee"/><rect x="8" y="16.5" width="23" height="7" fill="#185abd"/><rect x="8" y="23" width="23" height="7" fill="#103f91"/><rect x="1" y="8" width="17" height="17" rx="1.5" fill="#185abd"/><text x="9.5" y="21.3" font-size="12.5" font-weight="700" font-family="Liberation Sans,sans-serif" fill="#fff" text-anchor="middle">W</text></svg><svg class="b" style="left:929.8px;top:8.5px;" width="32" height="32" viewBox="0 0 32 32"><rect x="8" y="2" width="23" height="28" rx="2" fill="#21a366"/><rect x="8" y="2" width="11.5" height="7.5" fill="#21a366"/><rect x="19.5" y="2" width="11.5" height="7.5" fill="#33c481"/><rect x="8" y="9.5" width="11.5" height="7" fill="#107c41"/><rect x="19.5" y="9.5" width="11.5" height="7" fill="#21a366"/><rect x="8" y="16.5" width="23" height="7" fill="#107c41"/><rect x="8" y="23" width="23" height="7" fill="#185c37"/><rect x="1" y="8" width="17" height="17" rx="1.5" fill="#107c41"/><text x="9.5" y="21.3" font-size="12.5" font-weight="700" font-family="Liberation Sans,sans-serif" fill="#fff" text-anchor="middle">X</text></svg><div class="b" style="left:489px;top:47px;width:50.7px;height:3px;background:#7fd9d2;"></div><div class="b" style="left:613px;top:47px;width:50px;height:3px;background:#7fd9d2;"></div><div class="b" style="left:675px;top:47px;width:51px;height:3px;background:#7fd9d2;"></div><div class="b" style="left:799.5px;top:47px;width:50.5px;height:3px;background:#7fd9d2;"></div><div class="b" style="left:856.5px;top:47px;width:55.5px;height:3px;background:#7fd9d2;"></div><div class="b" style="left:656px;top:47px;width:7px;height:3px;background:#5f8f8b;"></div><svg class="b" style="left:1421px;top:13px;" width="33" height="24" viewBox="0 0 33 24"><path d="M2 9 H20 Q25 9 25 5.5 Q25 2 21.5 2 Q18.5 2 18.5 5" fill="none" stroke="#8fb6e8" stroke-width="2.6" stroke-linecap="round"/><path d="M2 14.5 H26 Q30.5 14.5 30.5 18.5 Q30.5 22 27 22 Q24 22 24 19" fill="none" stroke="#6f9fe0" stroke-width="2.6" stroke-linecap="round"/><path d="M8 4 H14 M6 19.5 H18" stroke="#a9c8ee" stroke-width="2.2" stroke-linecap="round"/></svg><span class="t" style="left:1463.6px;top:18px;font-size:17.5px;color:#fff;transform:scaleX(1.022);">High winds soon</span><svg class="b" style="left:1626px;top:20px;" width="17" height="10" viewBox="0 0 17 10"><path d="M1 9 L8.5 1.5 L16 9" fill="none" stroke="#fff" stroke-width="1.4"/></svg><svg class="b" style="left:1653px;top:15px;" width="24" height="19" viewBox="0 0 24 19"><path d="M5 14 Q0.5 14 1 10 Q1.5 6.5 5.5 7 Q7 2 12 3 Q15 3.5 16 6.5 Q20.5 6 21 10 Q21 14 17 14 Z" fill="#1e8fe8"/><circle cx="16" cy="12.5" r="5.5" fill="#1553b5"/><text x="16" y="16" font-size="8.5" font-weight="700" font-family="Liberation Serif,serif" fill="#fff" text-anchor="middle">i</text></svg><svg class="b" style="left:1684px;top:15px;" width="22" height="20" viewBox="0 0 22 20"><path d="M1.5 7 H5 L10 2.5 V17.5 L5 13 H1.5 Z" fill="none" stroke="#fff" stroke-width="1.3"/><path d="M13 7 Q15 10 13 13" fill="none" stroke="#fff" stroke-width="1.2"/><path d="M15.5 4.5 Q19 10 15.5 15.5" fill="none" stroke="#bbb" stroke-width="1.1"/><path d="M18 2.5 Q22.5 10 18 17.5" fill="none" stroke="#888" stroke-width="1"/></svg><svg class="b" style="left:1714px;top:17px;" width="23" height="16" viewBox="0 0 23 16"><path d="M1 4.5 H4 M2.5 2.5 V6.5" stroke="#fff" stroke-width="1.2"/><rect x="5" y="4" width="15" height="9" fill="#fff" stroke="#fff" stroke-width="1.2"/><rect x="21" y="6.5" width="1.6" height="4" fill="#fff"/><path d="M3 3 Q3 1 5 1" fill="none" stroke="#fff" stroke-width="1"/></svg><svg class="b" style="left:1746px;top:15px;" width="20" height="20" viewBox="0 0 20 20"><circle cx="17" cy="17" r="1.8" fill="#fff"/><path d="M11 18 A7 7 0 0 1 18 11" fill="none" stroke="#fff" stroke-width="1.5"/><path d="M6 18 A12 12 0 0 1 18 6" fill="none" stroke="#ccc" stroke-width="1.4"/><path d="M1 18 A17 17 0 0 1 18 1" fill="none" stroke="#999" stroke-width="1.3"/></svg><span class="t" style="left:1786px;top:7px;font-size:14px;color:#fff;transform:scaleX(0.990);">4:12 PM</span><span class="t" style="left:1778px;top:30px;font-size:14px;color:#fff;transform:scaleX(1.084);">4/16/2024</span><svg class="b" style="left:1866px;top:13px;" width="36" height="32" viewBox="0 0 36 32"><path d="M3 2 H23 V18 H8 L3 22.5 Z" fill="#fff"/><path d="M6 6.5 H20 M6 10 H20 M6 13.5 H15" stroke="#3e3c3a" stroke-width="1.3"/><circle cx="23" cy="21" r="9.5" fill="#3e3c3a" stroke="#fff" stroke-width="1.2"/><text x="23" y="26" font-size="13.5" font-family="Liberation Sans,sans-serif" fill="#fff" text-anchor="middle">22</text></svg><div class="b" style="left:1913.7px;top:0px;width:1px;height:50px;background:#8a8886;"></div></div>
<div class="win" style="left:1920px;top:0;width:1920px;height:1040px;background:#fff;"><div class="b" style="left:0px;top:0px;width:1920px;height:56px;background:#000;"></div><div class="b" style="left:6px;top:6.3px;width:27.5px;height:27.2px;background:#2a2a2a;border-radius:8px;"></div><svg class="b" style="left:15.5px;top:17.9px;" width="8.4" height="5.2" viewBox="0 0 8.4 5.2"><path d="M1 1 L4.2 4.2 L7.4 1" fill="none" stroke="#fff" stroke-width="1.5"/></svg><span class="t" style="left:48px;top:14px;font-size:13px;color:#21b5e8;font-weight:700;transform:scaleX(0.980);">X</span><span class="t" style="left:56px;top:14px;font-size:13px;color:#1a6fd0;font-weight:700;transform:scaleX(1.016);">M</span><div class="b" style="left:72px;top:8px;width:167px;height:25px;overflow:hidden;-webkit-mask-image:linear-gradient(90deg,#000 85%,transparent);mask-image:linear-gradient(90deg,#000 85%,transparent);"><span class="t" style="left:0.4px;top:6px;font-size:14.5px;color:#fff;transform:scaleX(0.799);">Distribute Survey | Qualtrics Exp</span></div><svg class="b" style="left:251px;top:15.5px;" width="10" height="10" viewBox="0 0 10 10"><path d="M1 1 L9 9 M9 1 L1 9" stroke="#fff" stroke-width="1.5"/></svg><div class="b" style="left:277.7px;top:6.3px;width:232.3px;height:33.7px;background:#2d2d2d;border-radius:10px 10px 0 0;"></div><svg class="b" style="left:267.7px;top:30px;" width="10" height="10" viewBox="0 0 10 10"><path d="M10 0 V10 H0 Q10 10 10 0 Z" fill="#2d2d2d"/></svg><svg class="b" style="left:510px;top:30px;" width="10" height="10" viewBox="0 0 10 10"><path d="M0 0 V10 H10 Q0 10 0 0 Z" fill="#2d2d2d"/></svg><span class="t" style="left:286px;top:14px;font-size:13px;color:#21b5e8;font-weight:700;transform:scaleX(0.980);">X</span><span class="t" style="left:294px;top:14px;font-size:13px;color:#1a6fd0;font-weight:700;transform:scaleX(1.016);">M</span><div class="b" style="left:310px;top:8px;width:168px;height:25px;overflow:hidden;-webkit-mask-image:linear-gradient(90deg,#000 85%,transparent);mask-image:linear-gradient(90deg,#000 85%,transparent);"><span class="t" style="left:0.4px;top:6px;font-size:14.5px;color:#fff;transform:scaleX(0.793);">Preview - Qualtrics Survey | Qua</span></div><svg class="b" style="left:489px;top:15.5px;" width="10" height="10" viewBox="0 0 10 10"><path d="M1 1 L9 9 M9 1 L1 9" stroke="#fff" stroke-width="1.5"/></svg><svg class="b" style="left:524px;top:15px;" width="11" height="11" viewBox="0 0 11 11"><path d="M5.5 0 V11 M0 5.5 H11" stroke="#8a8a8a" stroke-width="1.5"/></svg><div class="b" style="left:1800px;top:19.5px;width:11px;height:1px;background:#9a9a9a;"></div><svg class="b" style="left:1846px;top:14px;" width="11" height="11" viewBox="0 0 11 11"><rect x="0.5" y="2.5" width="8" height="8" rx="1" fill="none" stroke="#9a9a9a" stroke-width="1"/><path d="M2.5 2.5 V1.5 Q2.5 0.5 3.5 0.5 H9.5 Q10.5 0.5 10.5 1.5 V7.5 Q10.5 8.5 9.5 8.5 H8.5" fill="none" stroke="#9a9a9a" stroke-width="1"/></svg><svg class="b" style="left:1891.5px;top:14.5px;" width="11" height="11" viewBox="0 0 11 11"><path d="M0.5 0.5 L10.5 10.5 M10.5 0.5 L0.5 10.5" stroke="#9a9a9a" stroke-width="1"/></svg><div class="b" style="left:0px;top:40px;width:1920px;height:47px;background:#2d2d2d;border-radius:9px 9px 0 0;"></div><div class="b" style="left:0px;top:86px;width:1920px;height:1px;background:#1c1c1c;"></div><svg class="b" style="left:15px;top:55px;" width="16" height="16" viewBox="0 0 16 16"><path d="M14.5 8 H2.5 M7.5 2.5 L2 8 L7.5 13.5" fill="none" stroke="#6e6e6e" stroke-width="1.7"/></svg><svg class="b" style="left:50px;top:55px;" width="16" height="16" viewBox="0 0 16 16"><path d="M1.5 8 H13.5 M8.5 2.5 L14 8 L8.5 13.5" fill="none" stroke="#6e6e6e" stroke-width="1.7"/></svg><svg class="b" style="left:85.5px;top:54.5px;" width="17" height="17" viewBox="0 0 17 17"><path d="M14 5 A6.3 6.3 0 1 0 14.8 10.5" fill="none" stroke="#e8e8e8" stroke-width="1.8"/><path d="M15.2 1.5 V6.5 H10.2 Z" fill="#e8e8e8"/></svg><div class="b" style="left:120.5px;top:46px;width:1625.2px;height:34px;background:#3d3d3d;border-radius:17px;"></div><div class="b" style="left:126px;top:51.8px;width:23px;height:23px;background:#4d4d4d;border-radius:50%;"></div><svg class="b" style="left:129px;top:55px;" width="16" height="16" viewBox="0 0 16 16"><path d="M1.5 4.5 H8 M12.5 11.5 H14.5 M1.5 11.5 H5" stroke="#eee" stroke-width="1.7"/><circle cx="11" cy="4.5" r="2.2" fill="none" stroke="#eee" stroke-width="1.6"/><circle cx="8.2" cy="11.5" r="2.2" fill="none" stroke="#eee" stroke-width="1.6"/></svg><span class="t" style="left:157.6px;top:54px;font-size:16.5px;color:#fff;transform:scaleX(0.821);">pacificresearch.qualtrics.com</span><span class="t" style="left:332.8px;top:54px;font-size:16.5px;color:#b0b0b0;transform:scaleX(0.834);">/jfe/preview/previewId/8e7915d0-3184-491f-be92-bc2a2c54b6b1/SV_57SePKbS35aO6Wi?Q_CHL=preview&amp;Q_SurveyVersionID=current</span><svg class="b" style="left:1713px;top:54.5px;" width="18" height="17" viewBox="0 0 18 17"><path d="M9 1.6 L11.2 6.3 L16.4 6.9 L12.5 10.3 L13.6 15.4 L9 12.8 L4.4 15.4 L5.5 10.3 L1.6 6.9 L6.8 6.3 Z" fill="none" stroke="#c8c8c8" stroke-width="1.5" stroke-linejoin="round"/></svg><div class="b" style="left:1764px;top:55px;width:16.3px;height:15.8px;background:#11866f;border-radius:50% 50% 50% 12%;"></div><svg class="b" style="left:1764px;top:55px;" width="16.3" height="15.8" viewBox="0 0 16.3 15.8"><path d="M12.6 5.2 A5 5 0 1 0 13.4 8.2 H8.6" fill="none" stroke="#fff" stroke-width="1.7"/></svg><svg class="b" style="left:1800px;top:53.5px;" width="18" height="18" viewBox="0 0 18 18"><path d="M1.5 4.5 H5.8 Q5.6 1 7.8 1 Q10 1 9.8 4.5 H14 V8 Q17 7.6 17 9.6 Q17 11.6 14 11.2 V16 H1.5 V12 Q4.6 12.2 4.6 10.2 Q4.6 8.2 1.5 8.5 Z" fill="none" stroke="#ececec" stroke-width="1.6" stroke-linejoin="round"/></svg><div class="b" style="left:1833.8px;top:55px;width:2.2px;height:15.8px;background:#050505;border-radius:1px;"></div><div class="b" style="left:1852px;top:52.8px;width:20.2px;height:20.2px;background:#ece6e0;border-radius:50%;overflow:hidden;"><div class="b" style="left:4.5px;top:2px;width:12px;height:20px;background:#5b3a2b;border-radius:6px 6px 0 0;"></div><div class="b" style="left:7px;top:5px;width:7px;height:8.5px;background:#e6b798;border-radius:50%;"></div><div class="b" style="left:4.5px;top:14.5px;width:12px;height:8px;background:#f1f1f1;border-radius:5px 5px 0 0;"></div></div><div class="b" style="left:1896.2px;top:56px;width:3.6px;height:3.6px;background:#e8e8e8;border-radius:50%;"></div><div class="b" style="left:1896.2px;top:61.3px;width:3.6px;height:3.6px;background:#e8e8e8;border-radius:50%;"></div><div class="b" style="left:1896.2px;top:66.6px;width:3.6px;height:3.6px;background:#e8e8e8;border-radius:50%;"></div><div class="b" style="left:0px;top:87px;width:1920px;height:85px;background:#fff;"></div><div class="b" style="left:0px;top:171.5px;width:1920px;height:1.2px;background:#e9e9e9;"></div><div class="b" style="left:23.9px;top:111px;width:131.9px;height:35.9px;background:#0b6ed0;border-radius:3px;"></div><span class="t" style="left:45.4px;top:121px;font-size:15px;color:#fff;transform:scaleX(0.908);-webkit-text-stroke:0.3px #fff;">Restart Survey</span><div class="b" style="left:171.8px;top:111px;width:143.2px;height:35.9px;background:#fff;border:1.3px solid #0b6ed0;border-radius:3px;box-sizing:border-box;"></div><span class="t" style="left:193.7px;top:121px;font-size:15px;color:#0b6ed0;transform:scaleX(0.917);">Place Bookmark</span><div class="b" style="left:339px;top:111px;width:1px;height:36px;background:#d9d9d9;"></div><span class="t" style="left:378px;top:121px;font-size:15px;color:#404040;transform:scaleX(0.897);">Tools</span><svg class="b" style="left:469.3px;top:126px;" width="8" height="5" viewBox="0 0 8 5"><path d="M1 1 L4 4 L7 1" fill="none" stroke="#444" stroke-width="1.2"/></svg><div class="b" style="left:508px;top:111px;width:58px;height:35.9px;background:#e8e9e9;"></div><svg class="b" style="left:530px;top:119px;" width="14" height="20" viewBox="0 0 14 20"><rect x="1.2" y="1.2" width="11.6" height="17.6" rx="2.2" fill="none" stroke="#222" stroke-width="1.8"/><path d="M4.5 15 H9.5" stroke="#222" stroke-width="1.6"/></svg><div class="b" style="left:1734px;top:111px;width:162px;height:35.9px;background:#0b6ed0;border-radius:3px;"></div><svg class="b" style="left:1755px;top:119px;" width="22" height="20" viewBox="0 0 22 20"><circle cx="5" cy="10" r="3" fill="none" stroke="#fff" stroke-width="1.7"/><circle cx="16.5" cy="4.2" r="3" fill="none" stroke="#fff" stroke-width="1.7"/><circle cx="16.5" cy="15.8" r="3" fill="none" stroke="#fff" stroke-width="1.7"/><path d="M7.7 8.7 L13.8 5.5 M7.7 11.3 L13.8 14.5" stroke="#fff" stroke-width="1.7"/></svg><span class="t" style="left:1786.7px;top:121px;font-size:15px;color:#fff;transform:scaleX(0.909);-webkit-text-stroke:0.3px #fff;">Share Preview</span><div class="b" style="left:24px;top:195px;width:1468px;height:845px;background:#d9d9d9;"></div><div class="b" style="left:372.8px;top:195px;width:770.2px;height:804.9px;background:#fff;border-radius:0 0 5px 5px;"></div><div class="b" style="left:388.1px;top:220px;width:739.2px;height:51px;background:#f0f0f0;border:2px solid #707070;box-sizing:border-box;"></div><span class="t" style="left:388.2px;top:347px;font-size:24.5px;color:#8c8c8c;transform:scaleX(1.021);">“Before coming to EIC today, I never realized…”</span><div class="b" style="left:388.1px;top:403px;width:739.2px;height:51px;background:#f0f0f0;border:2px solid #707070;box-sizing:border-box;"></div><span class="t" style="left:388.2px;top:529px;font-size:24.5px;color:#8c8c8c;transform:scaleX(1.066);">“A connection I made between the EIC and where I live</span><span class="t" style="left:388.2px;top:565px;font-size:24.5px;color:#8c8c8c;transform:scaleX(0.953);">includes…”</span><div class="b" style="left:388.1px;top:621px;width:739.2px;height:51px;background:#f0f0f0;border:2px solid #707070;box-sizing:border-box;"></div><span class="t" style="left:388.2px;top:746px;font-size:24.5px;color:#8c8c8c;transform:scaleX(1.050);">“One thing I’m inspired to do or learn more about is…”</span><div class="b" style="left:388.1px;top:803px;width:739.2px;height:51px;background:#f0f0f0;border:2px solid #707070;box-sizing:border-box;"></div><div class="b" style="left:390.1px;top:939.9px;width:83.9px;height:42.9px;background:#a0ccee;border-radius:3px;"></div><span class="t" style="left:410.8px;top:953px;font-size:18.5px;color:#1d1d1d;transform:scaleX(1.038);-webkit-text-stroke:0.35px #1d1d1d;">Back</span><div class="b" style="left:1046px;top:939.9px;width:79.5px;height:42.9px;background:#a0ccee;border-radius:3px;"></div><span class="t" style="left:1066.5px;top:953px;font-size:18.5px;color:#1d1d1d;transform:scaleX(1.025);-webkit-text-stroke:0.35px #1d1d1d;">Next</span><div class="b" style="left:1285px;top:999.8px;width:207px;height:41px;background:#b9b9bb;border-radius:6px 0 0 0;"></div><span class="t" style="left:1308.7px;top:1015px;font-size:14px;color:#858585;transform:scaleX(1.073);">Powered by Qualtrics</span><svg class="b" style="left:1456px;top:1015.6px;" width="12" height="12" viewBox="0 0 12 12"><path d="M5 1.5 H1.5 V10.5 H9.5 V7" fill="none" stroke="#6e6e6e" stroke-width="1" transform="scale(1.000)"/><path d="M6.5 1 H11 V5.5 M11 1 L5.5 6.5" fill="none" stroke="#6e6e6e" stroke-width="1" transform="scale(1.000)"/></svg><div class="b" style="left:1492px;top:195px;width:17px;height:845px;background:#f1f1f1;"></div><svg class="b" style="left:1496.5px;top:201px;" width="8" height="6" viewBox="0 0 8 6"><path d="M4 1 L7.5 5 H0.5 Z" fill="#505050"/></svg><div class="b" style="left:1494px;top:511px;width:13px;height:512px;background:#c1c1c1;"></div><svg class="b" style="left:1496.5px;top:1028.5px;" width="8" height="6" viewBox="0 0 8 6"><path d="M4 5 L7.5 1 H0.5 Z" fill="#a3a3a3"/></svg><div class="b" style="left:1533px;top:281.7px;width:5px;height:27.4px;background:#252b33;border-radius:2px;"></div><div class="b" style="left:1533px;top:337.7px;width:5px;height:47px;background:#252b33;border-radius:2px;"></div><div class="b" style="left:1533px;top:397px;width:5px;height:47px;background:#252b33;border-radius:2px;"></div><div class="b" style="left:1888.5px;top:337.8px;width:5.5px;height:79.5px;background:#252b33;border-radius:2px;"></div><div class="b" style="left:1536px;top:195px;width:355.4px;height:780.8px;background:#252b33;border-radius:30px 30px 27px 27px;"></div><div class="b" style="left:1543.7px;top:226.6px;width:339.6px;height:735.2px;background:#fff;border-radius:15px;"></div><div class="b" style="left:1682.7px;top:211.1px;width:40.4px;height:6.2px;background:#15181d;border-radius:3.1px;"></div><div class="b" style="left:1734px;top:209px;width:10.4px;height:10.4px;background:#252b33;border-radius:50%;border:1.6px solid #15181d;box-sizing:border-box;"></div><span class="t" style="left:1559.1px;top:238px;font-size:13px;color:#111;font-weight:700;transform:scaleX(1.020);">12:29</span><svg class="b" style="left:1826px;top:239.2px;" width="13" height="10" viewBox="0 0 13 10"><rect x="0" y="7" width="2" height="3" fill="#111"/><rect x="3" y="5" width="2" height="5" fill="#111"/><rect x="6" y="2.5" width="2" height="7.5" fill="#111"/><rect x="9.5" y="0" width="1.6" height="10" fill="#bbb"/></svg><div class="b" style="left:1850px;top:240.9px;width:16.5px;height:7px;background:#111;border-radius:2px;"></div><div class="b" style="left:1866.5px;top:243px;width:1.3px;height:2.8px;background:#111;"></div><div class="b" style="left:1564.1px;top:287.9px;width:298.7px;height:48px;background:#f0f0f0;border:2px solid #707070;box-sizing:border-box;"></div><span class="t" style="left:1564.5px;top:419px;font-size:19px;color:#8c8c8c;transform:scaleX(1.119);">“A connection I made between</span><span class="t" style="left:1564.5px;top:448px;font-size:19px;color:#8c8c8c;transform:scaleX(1.064);">the EIC and where I live</span><span class="t" style="left:1564.5px;top:477px;font-size:19px;color:#8c8c8c;transform:scaleX(0.973);">includes…”</span><div class="b" style="left:1564.1px;top:523.7px;width:298.7px;height:48px;background:#f0f0f0;border:2px solid #707070;box-sizing:border-box;"></div><span class="t" style="left:1564px;top:655px;font-size:19px;color:#8c8c8c;transform:scaleX(1.096);">“One thing I’m inspired to do or</span><span class="t" style="left:1564px;top:684px;font-size:19px;color:#8c8c8c;transform:scaleX(1.064);">learn more about is…”</span><div class="b" style="left:1564.1px;top:731px;width:298.7px;height:48px;background:#f0f0f0;border:2px solid #707070;box-sizing:border-box;"></div><div class="b" style="left:1556.2px;top:857.9px;width:74.7px;height:37px;background:#a0ccee;border-radius:3px;"></div><span class="t" style="left:1576.7px;top:868px;font-size:15px;color:#1d1d1d;transform:scaleX(1.032);-webkit-text-stroke:0.3px #1d1d1d;">Back</span><div class="b" style="left:1798.9px;top:857.9px;width:72px;height:37px;background:#a0ccee;border-radius:3px;"></div><span class="t" style="left:1819.8px;top:868px;font-size:15px;color:#1d1d1d;-webkit-text-stroke:0.3px #1d1d1d;">Next</span><div class="b" style="left:1543.7px;top:907.2px;width:339.6px;height:54.6px;background:#dadada;border-radius:0 0 15px 15px;"></div><span class="t" style="left:1633.9px;top:933px;font-size:14.5px;color:#8a8a8a;transform:scaleX(1.042);">Powered by Qualtrics</span><svg class="b" style="left:1781.4px;top:934.2px;" width="12" height="12" viewBox="0 0 12 12"><path d="M5 1.5 H1.5 V10.5 H9.5 V7" fill="none" stroke="#8a8a8a" stroke-width="1" transform="scale(1.000)"/><path d="M6.5 1 H11 V5.5 M11 1 L5.5 6.5" fill="none" stroke="#8a8a8a" stroke-width="1" transform="scale(1.000)"/></svg></div>
<div class="win" style="left:1920px;top:1040px;width:1920px;height:40px;background:#42403e;"><svg class="b" style="left:15.1px;top:12px;" width="17" height="17" viewBox="0 0 17 17"><path d="M0 2.4 L7.5 1.4 V7.5 H0 Z M9.5 1.0 L17 0 V7.5 H9.5 Z M0 9.5 H7.5 V15.6 L0 14.6 Z M9.5 9.5 H17 V17 L9.5 16.0 Z" fill="#fff"/></svg><svg class="b" style="left:60px;top:8px;" width="24" height="24" viewBox="0 0 24 24"><circle cx="14" cy="10" r="7.3" fill="none" stroke="#fff" stroke-width="2.2"/><path d="M9 15.5 L2.5 22" stroke="#fff" stroke-width="2.6"/></svg><svg class="b" style="left:109.3px;top:10.3px;" width="20.4" height="20.4" viewBox="0 0 24 24"><rect x="2.6" y="7.2" width="11.8" height="9.6" fill="none" stroke="#fff" stroke-width="1.4"/><path d="M2 3.7 H15 M2 20.3 H15 M20 2.5 V7 M20 9.5 V14.5 M20 17 V21.5" stroke="#fff" stroke-width="1.5" fill="none"/></svg><svg class="b" style="left:158px;top:7.2px;" width="25.6" height="25.6" viewBox="0 0 32 32"><path d="M2 5 H12 L14.5 8 H30 V26 H2 Z" fill="#f5b93d"/><path d="M2 10 H30 V26 H2 Z" fill="#fcd463"/><path d="M8 17 H24 V26 H8 Z" fill="#3b8fde"/><path d="M11 21 H21 V26 H11 Z" fill="#fcd463"/><rect x="2" y="25" width="28" height="1.5" fill="#d99a22"/></svg><svg class="b" style="left:206.8px;top:8.3px;" width="24.3" height="24.3" viewBox="0 0 32 32"><circle cx="16" cy="16" r="14.5" fill="#1ed760"/><path d="M8 11.5 Q17 9 25 13.5" fill="none" stroke="#000" stroke-width="2.6" stroke-linecap="round"/><path d="M9 16.5 Q17 14.5 23.5 18" fill="none" stroke="#000" stroke-width="2.2" stroke-linecap="round"/><path d="M10 21 Q16.5 19.5 22 22.3" fill="none" stroke="#000" stroke-width="1.8" stroke-linecap="round"/></svg><svg class="b" style="left:254.9px;top:7.4px;" width="27.2" height="27.2" viewBox="0 0 34 34"><path d="M10 6 L22 1 L33 7 V22 L22 28 L10 22 Z" fill="#1a78d2"/><path d="M10 6 L22 1 L33 7 L22 12 Z" fill="#4fb2f2"/><path d="M10 22 L22 13 L33 22 L22 28 Z" fill="#0f5aa8"/><rect x="0.5" y="8" width="17" height="17" rx="2" fill="#0f64b8"/><text x="9" y="21.5" font-size="13" font-weight="700" font-family="Liberation Sans,sans-serif" fill="#fff" text-anchor="middle">O</text><rect x="13" y="24" width="20" height="9" rx="1.5" fill="#16c8f0"/><text x="23" y="31.3" font-size="7.5" font-weight="700" font-family="Liberation Sans,sans-serif" fill="#0a2a5a" text-anchor="middle">NEW</text></svg><svg class="b" style="left:303.9px;top:7.4px;" width="27.2" height="27.2" viewBox="0 0 34 34"><circle cx="26" cy="7" r="3.2" fill="#5b63d3"/><circle cx="18.5" cy="5.5" r="4.5" fill="#7b83eb"/><path d="M14 11 H31 V21 Q31 26 25 26 H14 Z" fill="#5059c9"/><rect x="1" y="8" width="17" height="17" rx="2" fill="#4b53bc"/><text x="9.5" y="21.5" font-size="13" font-weight="700" font-family="Liberation Sans,sans-serif" fill="#fff" text-anchor="middle">T</text><rect x="8" y="24" width="14" height="8" rx="1.5" fill="#16c8f0"/><circle cx="23.5" cy="24" r="8.5" fill="#e2343f"/></svg><svg class="b" style="left:354.3px;top:8.3px;" width="24.3" height="24.3" viewBox="0 0 32 32"><circle cx="16" cy="16" r="15" fill="#f4f2ee"/><g stroke-width="3.4" stroke-linecap="round"><path d="M13 8 V14.5" stroke="#36c5f0"/><path d="M8 13 H9" stroke="#36c5f0"/><path d="M17.5 13 H24" stroke="#2eb67d"/><path d="M19 8 V9" stroke="#2eb67d"/><path d="M19 17.5 V24" stroke="#ecb22e"/><path d="M23 19 H24" stroke="#ecb22e"/><path d="M8 19 H14.5" stroke="#e01e5a"/><path d="M13 23 V24" stroke="#e01e5a"/></g></svg><svg class="b" style="left:402.4px;top:7.9px;" width="27.2" height="27.2" viewBox="0 0 34 34"><circle cx="16" cy="16" r="14.5" fill="#e33b2e"/><path d="M16 16 L3.5 8.8 A14.5 14.5 0 0 0 10.5 29.4 Z" fill="#2da94f"/><path d="M16 16 L10.5 29.4 A14.5 14.5 0 0 0 29.5 10.5 L16 10.5 Z" fill="#fdd231"/><circle cx="16" cy="16" r="6.6" fill="#fff"/><circle cx="16" cy="16" r="5.2" fill="#4285f4"/><circle cx="24.5" cy="25" r="8.8" fill="#e8e0da"/><path d="M17.5 31 Q18 19 24.5 18.5 Q31 19 31.5 31 Z" fill="#5a3a2a"/><ellipse cx="24.5" cy="24.5" rx="3.2" ry="4" fill="#e8b99a"/><path d="M19 33.5 Q24.5 27 30 33.5 Z" fill="#f3f3f3"/></svg><div class="b" style="left:441px;top:0px;width:44.5px;height:40px;background:#676563;"></div><div class="b" style="left:487px;top:0px;width:1px;height:40px;background:#5a5856;"></div><svg class="b" style="left:451.7px;top:7.7px;" width="25.6" height="25.6" viewBox="0 0 32 32"><rect x="8" y="2" width="23" height="28" rx="2" fill="#2b7cd3"/><rect x="8" y="2" width="23" height="7.5" fill="#41a5ee"/><rect x="8" y="16.5" width="23" height="7" fill="#185abd"/><rect x="8" y="23" width="23" height="7" fill="#103f91"/><rect x="1" y="8" width="17" height="17" rx="1.5" fill="#185abd"/><text x="9.5" y="21.3" font-size="12.5" font-weight="700" font-family="Liberation Sans,sans-serif" fill="#fff" text-anchor="middle">W</text></svg><svg class="b" style="left:500.7px;top:7.7px;" width="25.6" height="25.6" viewBox="0 0 32 32"><rect x="8" y="2" width="23" height="28" rx="2" fill="#21a366"/><rect x="8" y="2" width="11.5" height="7.5" fill="#21a366"/><rect x="19.5" y="2" width="11.5" height="7.5" fill="#33c481"/><rect x="8" y="9.5" width="11.5" height="7" fill="#107c41"/><rect x="19.5" y="9.5" width="11.5" height="7" fill="#21a366"/><rect x="8" y="16.5" width="23" height="7" fill="#107c41"/><rect x="8" y="23" width="23" height="7" fill="#185c37"/><rect x="1" y="8" width="17" height="17" rx="1.5" fill="#107c41"/><text x="9.5" y="21.3" font-size="12.5" font-weight="700" font-family="Liberation Sans,sans-serif" fill="#fff" text-anchor="middle">X</text></svg><div class="b" style="left:151px;top:38px;width:40px;height:2px;background:#7fd9d2;"></div><div class="b" style="left:249px;top:38px;width:40px;height:2px;background:#7fd9d2;"></div><div class="b" style="left:298px;top:38px;width:40px;height:2px;background:#7fd9d2;"></div><div class="b" style="left:396px;top:38px;width:40px;height:2px;background:#7fd9d2;"></div><div class="b" style="left:441px;top:38px;width:47.8px;height:2px;background:#7fd9d2;"></div><div class="b" style="left:283px;top:38px;width:6px;height:2px;background:#5f8f8b;"></div><span class="t" style="left:1866.5px;top:5px;font-size:12.5px;color:#fff;transform:scaleX(0.906);">4:12 PM</span><span class="t" style="left:1861.5px;top:23px;font-size:12.5px;color:#fff;transform:scaleX(0.953);">4/16/2024</span></div>
</body></html>
